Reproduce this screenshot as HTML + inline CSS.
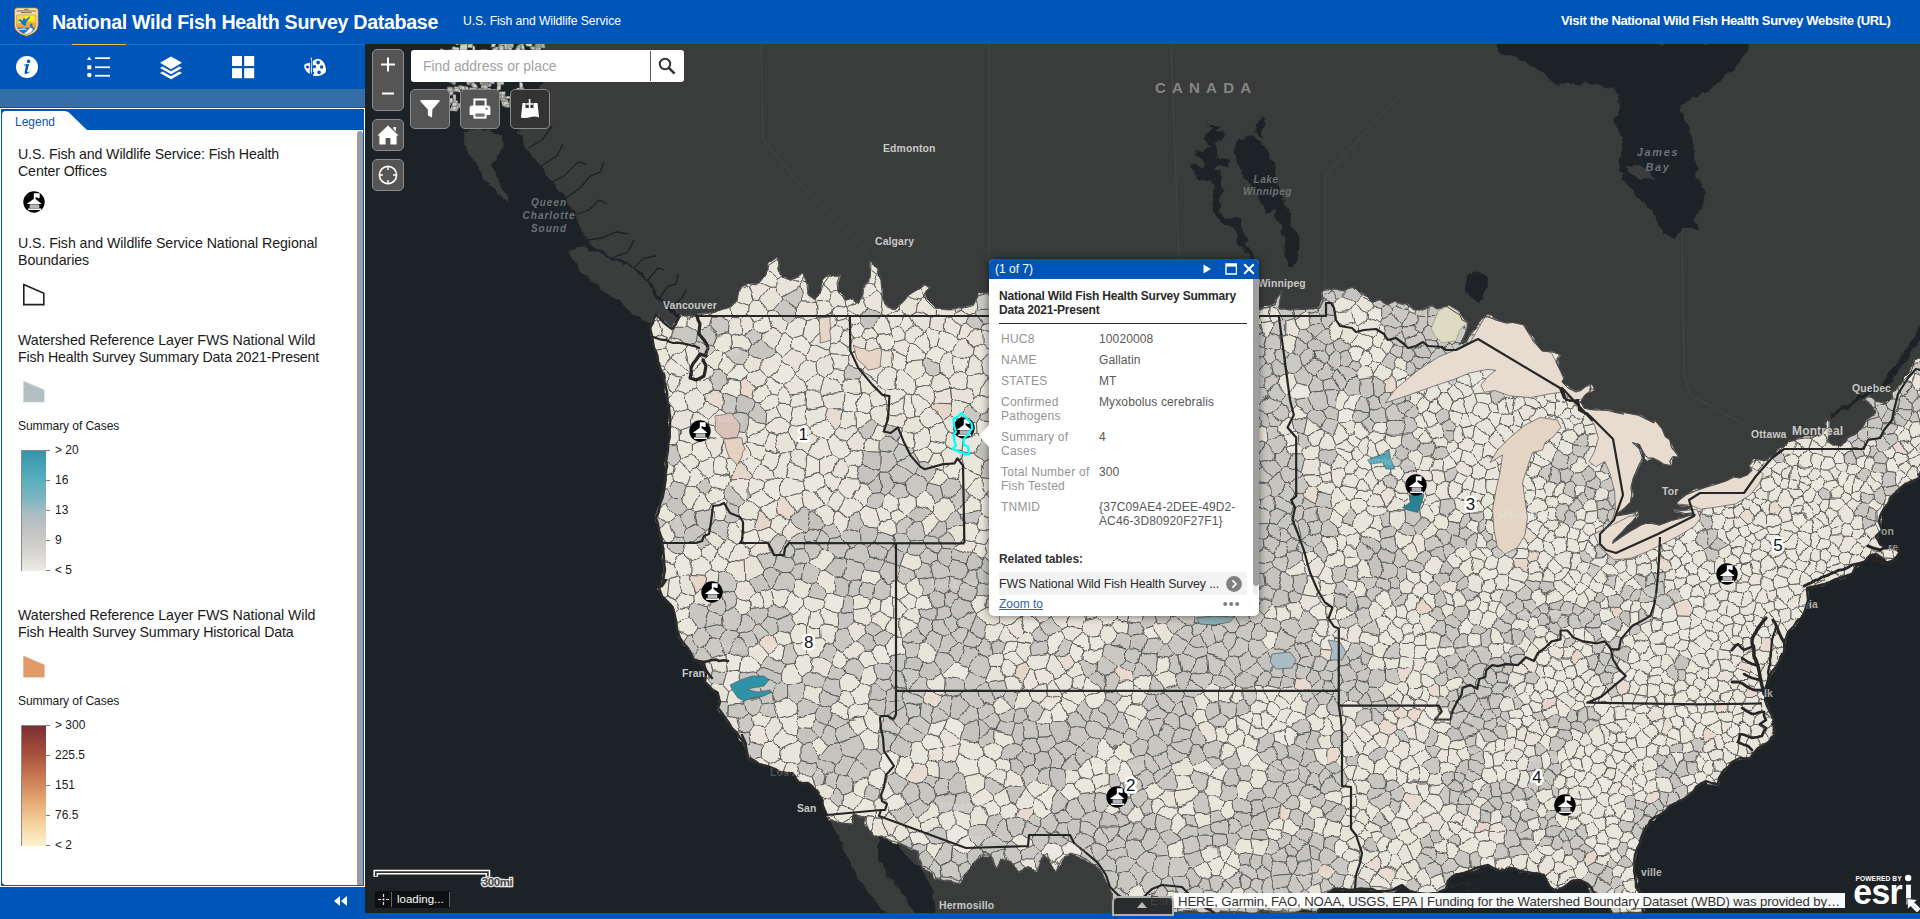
<!DOCTYPE html>
<html lang="en">
<head>
<meta charset="utf-8">
<title>National Wild Fish Health Survey Database</title>
<style>
*{box-sizing:border-box;margin:0;padding:0}
html,body{width:1920px;height:919px;overflow:hidden;background:#0055b8;font-family:"Liberation Sans",sans-serif;color:#1a1a1a}
.abs{position:absolute}
#header{position:absolute;left:0;top:0;width:1920px;height:44px;background:#0055b8;color:#fff}
#title{position:absolute;left:52px;top:9px;font-size:19.6px;font-weight:700;letter-spacing:-0.3px;white-space:nowrap;line-height:26px}
#subtitle{position:absolute;left:463px;top:13px;font-size:12.2px;white-space:nowrap;line-height:16px;letter-spacing:-0.09px}
#hlink{position:absolute;left:1561px;top:13px;font-size:13px;font-weight:700;white-space:nowrap;line-height:16px;letter-spacing:-0.35px}
#tabs{position:absolute;left:0;top:44px;width:365px;height:45px;background:#0055b8}
#tabind{position:absolute;left:72px;top:44px;width:54px;height:1px;background:#f0b840}
#band{position:absolute;left:0;top:89px;width:365px;height:18px;background:#336ea9}
#panel{position:absolute;left:0;top:108px;width:365px;height:779px;background:#fff}
#panelin{position:absolute;left:1px;top:1px;width:363px;height:777px;background:#0055b8}
#pcontent{position:absolute;left:1px;top:21px;width:361px;height:755px;background:#fff;border-radius:0 0 0 4px}
#pscroll{position:absolute;left:356px;top:22px;width:6px;height:754px;background:#9b9b9b;border-radius:3px 3px 0 0}
#ltab{position:absolute;left:1px;top:2px}
#ltabtxt{position:absolute;left:14px;top:6px;font-size:12px;color:#0a53b0;line-height:14px}
.lh{position:absolute;left:18px;font-size:14.2px;line-height:17px;color:#1a1a1a;white-space:nowrap;letter-spacing:-0.22px}
.ls{position:absolute;left:18px;font-size:12.1px;line-height:14px;color:#1a1a1a;white-space:nowrap;letter-spacing:-0.1px}
.rl{position:absolute;left:55px;font-size:12px;line-height:14px;color:#1a1a1a;white-space:nowrap}
.ramp{position:absolute;left:21px;width:25px;height:121px;border-left:1px solid #8a8a8a;border-top:1px solid #8a8a8a}
.tick{position:absolute;left:46px;width:4px;height:1px;background:#7a7a7a}
#footerL{position:absolute;left:0;top:887px;width:365px;height:32px;background:#0055b8}
#map{position:absolute;left:365px;top:44px;width:1555px;height:868.700px;overflow:hidden;background:#3a3c3c}
#footerR{position:absolute;left:365px;top:912.700px;width:1555px;height:6.300px;background:#0055b8}
.mbtn{position:absolute;background:#555;border:1px solid #8c8c8c;border-radius:5px}
.lbl{position:absolute;white-space:nowrap;font-weight:700;color:#c8c8c6;font-size:10.400px;line-height:12px;letter-spacing:.15px}
.wlbl{position:absolute;white-space:nowrap;font-style:italic;font-weight:700;color:#6b7275;font-size:10px;line-height:13px;letter-spacing:1px;text-align:center}
#popup{position:absolute;left:989px;top:259.200px;width:269.800px;height:356.400px;background:#fff;border-radius:5px;box-shadow:0 0 8px rgba(0,0,0,.55)}
#ptitle{position:absolute;left:0;top:0;width:269.800px;height:19.5px;background:#0055b8;border-radius:5px 5px 0 0;color:#fff;font-size:12px;line-height:19px}
.pk{position:absolute;left:12px;font-size:12px;line-height:14px;color:#939393;white-space:nowrap;letter-spacing:0.26px}
.pv{position:absolute;left:110px;font-size:12px;line-height:14px;color:#585858;white-space:nowrap;letter-spacing:0.12px}
.rlabel{position:absolute;font-size:15px;font-weight:400;color:#111;line-height:16px;text-shadow:0 0 2px #fff,0 0 2px #fff,0 0 3px #fff,1px 1px 1px #fff,-1px -1px 1px #fff,1px -1px 1px #fff,-1px 1px 1px #fff}
</style>
</head>
<body>
<!-- ================= HEADER ================= -->
<div id="header">
  <svg class="abs" style="left:14px;top:7px" width="25" height="30" viewBox="0 0 25 30">
    <defs><clipPath id="shc"><path d="M2.5,8 H21.8 V18 Q21.6,24.600 12.300,27.800 Q3,24.600 2.500,18Z"/></clipPath></defs>
    <path d="M3.3,0.7 H21.3 Q24.3,0.7 24.3,3.7 V18 Q24.3,26 12.3,29.4 Q0.3,26 0.3,18 V3.7 Q0.3,0.7 3.3,0.7Z" fill="#f3deb0" stroke="#7c5c2c" stroke-width=".9"/>
    <path d="M10.2,2.4h4.200M2.6,4h19.400M7,5.700h10.600" stroke="#5a4a30" stroke-width="1" opacity=".75"/>
    <g clip-path="url(#shc)">
      <rect x="2" y="8" width="21" height="21" fill="#fdd056"/>
      <circle cx="15.750" cy="10.200" r="4.300" fill="#fff200"/>
      <path d="M2,17.300 Q6,15.300 9,16.600 Q13,13.600 17,15 Q20,15.300 23,16.800 V21 H2Z" fill="#f9a726"/>
      <rect x="2" y="20.700" width="21" height="9" fill="#0b7cc5"/>
      <polygon points="10.09,26.34 12.27,25.03 14.45,22.86 15.75,21.12 17.49,20.68 18.80,21.99 18.36,23.73 16.62,25.47 14.45,26.78 11.40,27.21" fill="#fff"/>
      <polygon points="4.22,21.99 10.53,21.55 12.70,22.21 12.70,22.86 8.35,22.86 4.22,22.64" fill="#fff"/>
      <polygon points="4.00,13.28 5.74,12.19 7.05,12.85 8.79,13.72 9.22,11.54 10.31,10.89 11.18,12.41 13.14,11.54 14.88,10.02 15.75,9.37 15.97,10.45 14.45,12.41 13.14,14.15 11.83,16.33 12.27,18.51 10.53,18.72 8.79,17.63 7.05,15.89 6.39,14.15 4.87,13.94" fill="#0b7cc5"/>
      <polygon points="15.97,17.85 16.84,16.55 18.15,16.98 18.58,19.38 19.45,21.12 17.71,20.90 16.40,19.81" fill="#0b7cc5"/>
    </g>
    <path d="M2.5,8 H21.8 V18 Q21.6,24.600 12.300,27.800 Q3,24.600 2.500,18Z" fill="none" stroke="#a98a55" stroke-width=".5"/>
  </svg>
  <div id="title">National Wild Fish Health Survey Database</div>
  <div id="subtitle">U.S. Fish and Wildlife Service</div>
  <div id="hlink">Visit the National Wild Fish Health Survey Website (URL)</div>
</div>

<!-- ================= LEFT TABS ================= -->
<div id="tabs">
  <!-- info -->
  <svg class="abs" style="left:15px;top:11px" width="24" height="24" viewBox="0 0 24 24"><circle cx="12" cy="12" r="11" fill="#fff"/><path d="M13.6,4.6a1.7,1.7 0 1 1 -.01,0Z M9.3,9.6 L14,9 L12.2,16.6 Q12,17.6 13,17.2 L14.2,16.6 L14.4,17.3 Q12.2,19.3 10.4,19 Q9.2,18.7 9.6,17 L10.9,11.2 Q11,10.6 10.3,10.5 L9.2,10.4Z" fill="#0055b8"/></svg>
  <!-- legend list -->
  <svg class="abs" style="left:87px;top:12px" width="24" height="22" viewBox="0 0 24 22"><g fill="#fff"><path d="M2.2,0.6 L4.4,4 L0,4Z"/><rect x="0.3" y="9.3" width="4" height="4"/><circle cx="2.3" cy="19" r="2.2"/><rect x="8" y="1.300" width="15" height="1.700"/><rect x="8" y="10.400" width="15" height="1.700"/><rect x="8" y="18.900" width="15" height="1.700"/></g></svg>
  <!-- layers -->
  <svg class="abs" style="left:159px;top:12px" width="24" height="24" viewBox="0 0 24 24"><g fill="#fff"><path d="M12,0.5 L23,6.8 L12,13.2 L1,6.8Z"/><path d="M3.6,10.4 L12,15.3 L20.4,10.4 L23,11.9 L12,18.3 L1,11.9Z"/><path d="M3.6,15.4 L12,20.3 L20.4,15.4 L23,16.9 L12,23.3 L1,16.9Z"/></g></svg>
  <!-- basemap grid -->
  <svg class="abs" style="left:232px;top:12px" width="23" height="23" viewBox="0 0 23 23"><g fill="#fff"><rect x="0" y="0" width="10" height="10"/><rect x="12.200" y="0" width="10" height="10"/><rect x="0" y="12.200" width="10" height="10"/><rect x="12.200" y="12.200" width="10" height="10"/></g></svg>
  <!-- palette -->
  <svg class="abs" style="left:303px;top:12px" width="25" height="23" viewBox="0 0 25 23"><path d="M1,10.100 Q1.400,7.600 3.500,7.400 L6.200,7.100 Q8.600,6.300 9.900,5.100 Q12.200,3 14.900,2.800 Q18.400,3.200 20.850,6.450 Q22.700,9.600 23.100,13.800 Q23,16.300 21.800,16.900 Q19,19.200 14.900,19.900 L11.250,19.900 Q9.400,19.600 9.900,18.500 Q11.600,17.500 11.200,16.400 Q10.600,15.400 9.600,15.900 L7.600,17.400 Q6,17.600 5.300,17 Q3.800,16 3,14.700 Q1.200,12.400 1,10.100Z M15.100,4.550a1.900,1.900 0 1 0 .01,0Z M18.600,9.300a1.700,1.700 0 1 0 .01,0Z M16.050,14.500a1.800,1.800 0 1 0 .01,0Z M11.300,8.900a1.700,1.700 0 1 0 .01,0Z M4.500,9.400a1.600,1.600 0 1 0 .01,0Z" fill="#fff" fill-rule="evenodd"/><path d="M8.300,0.200 Q9.900,1.800 9.200,4.200 L9.100,5.100 L9.500,15.600 L8.500,21.700 L7.300,15.600 L7.500,5.100 L7.400,4.200 Q6.700,1.800 8.300,0.200Z" fill="#fff" stroke="#0055b8" stroke-width="1.100"/></svg>
</div>
<div class="abs" style="left:0;top:44px;width:365px;height:1px;background:rgba(255,255,255,.13)"></div>
<div id="tabind"></div>
<div id="band"></div>

<!-- ================= LEGEND PANEL ================= -->
<div id="panel">
 <div id="panelin">
  <svg id="ltab" width="92" height="20" viewBox="0 0 92 20"><path d="M0,20 L0,4 Q0,0 4,0 L62,0 Q66,0 68.5,3 L86,20Z" fill="#fff"/></svg>
  <div id="ltabtxt">Legend</div>
  <div id="pcontent"></div>
  <div id="pscroll"></div>
 </div>
</div>
<!-- legend content, page coordinates -->
<div class="lh" style="top:146px;letter-spacing:-0.127px">U.S. Fish and Wildlife Service: Fish Health<br>Center Offices</div>
<svg class="abs" style="left:23px;top:191px" width="22" height="22" viewBox="-11 -11 22 22"><use href="#fhc"/></svg>
<div class="lh" style="top:235px;letter-spacing:-0.07px">U.S. Fish and Wildlife Service National Regional<br>Boundaries</div>
<svg class="abs" style="left:21px;top:282px" width="27" height="25" viewBox="0 0 27 25"><path d="M2.800,2.600 L22.800,11.200 L22.800,22.600 L2.800,22.600Z" fill="#fff" stroke="#1f1f1f" stroke-width="1.600"/></svg>
<div class="lh" style="top:332px;letter-spacing:-0.06px">Watershed Reference Layer FWS National Wild<br><span style="letter-spacing:-0.145px">Fish Health Survey Summary Data 2021-Present</span></div>
<svg class="abs" style="left:21px;top:379px" width="27" height="25" viewBox="0 0 27 25"><path d="M2.700,2.200 L23.200,11 L23.200,23.100 L2.700,23.100Z" fill="#b3bfc4" stroke="#c3ccd0" stroke-width=".6"/></svg>
<div class="ls" style="top:419px">Summary of Cases</div>
<div class="ramp" style="top:450px;background:linear-gradient(#3494a8 0%,#55adbd 22%,#7db5c0 40%,#abbcc4 52%,#c4c4c4 68%,#d8d6d2 85%,#ecebe6 100%)"></div>
<div class="tick" style="top:450px"></div><div class="tick" style="top:480px"></div><div class="tick" style="top:510px"></div><div class="tick" style="top:540px"></div><div class="tick" style="top:570px"></div>
<div class="rl" style="top:443px">&gt; 20</div><div class="rl" style="top:473px">16</div><div class="rl" style="top:503px">13</div><div class="rl" style="top:533px">9</div><div class="rl" style="top:563px">&lt; 5</div>
<div class="lh" style="top:607px;letter-spacing:-0.06px">Watershed Reference Layer FWS National Wild<br><span style="letter-spacing:-0.12px">Fish Health Survey Summary Historical Data</span></div>
<svg class="abs" style="left:21px;top:654px" width="27" height="25" viewBox="0 0 27 25"><path d="M2.700,2.200 L23.200,11 L23.200,23.100 L2.700,23.100Z" fill="#e39a6b" stroke="#d8916a" stroke-width=".6"/></svg>
<div class="ls" style="top:694px">Summary of Cases</div>
<div class="ramp" style="top:725px;background:linear-gradient(#7e2f31 0%,#a44e3c 22%,#cd7f56 45%,#e5a673 62%,#f3cf9a 80%,#fdf3cd 100%)"></div>
<div class="tick" style="top:725px"></div><div class="tick" style="top:755px"></div><div class="tick" style="top:785px"></div><div class="tick" style="top:815px"></div><div class="tick" style="top:845px"></div>
<div class="rl" style="top:718px">&gt; 300</div><div class="rl" style="top:748px">225.5</div><div class="rl" style="top:778px">151</div><div class="rl" style="top:808px">76.5</div><div class="rl" style="top:838px">&lt; 2</div>

<div id="footerL">
  <svg class="abs" style="left:334px;top:9px" width="14" height="10" viewBox="0 0 14 10"><path d="M6,0 L6,10 L0,5Z M13,0 L13,10 L7,5Z" fill="#fff"/></svg>
</div>
<div id="footerR"></div>

<!-- ================= MAP ================= -->
<div id="map">
<svg style="position:absolute;left:0;top:0" width="1555" height="869" viewBox="365 44 1555 869">
<defs><g id="fhc"><circle r="10.700" fill="#000"/><g fill="#fff"><path d="M-0.200,-8.700 L5.700,-8.700 L5.700,-4.200 Q4.200,-3.700 2.800,-4.500 L1.500,-4.800 L1.500,-2.600 L-0.200,-2.600Z"/><path d="M-0.400,-2.900 L0.500,-3.700 L1.500,-2.900 L7.100,1.500 L7.100,2.100 L-6.800,2.100 L-6.800,1.500Z"/><path d="M-5.900,6.400 h13 v1.600 h-13Z"/></g><path d="M-4.300,2.400 h9.600 v3.600 h-9.600Z" fill="#c9c9c9"/><path d="M-3.300,2.400v3.600M-1.900,2.400v3.600M-0.500,2.400v3.600M0.900,2.400v3.600M2.300,2.400v3.600M3.700,2.400v3.600" stroke="#8a8a8a" stroke-width=".45"/></g></defs>
<rect x="365" y="44" width="1555" height="869" fill="#3a3c3c"/>
<filter id="wig2" filterUnits="userSpaceOnUse" x="340" y="20" width="1610" height="920"><feTurbulence type="fractalNoise" baseFrequency="0.09" numOctaves="3" seed="9" result="n"/><feDisplacementMap in="SourceGraphic" in2="n" scale="8" xChannelSelector="R" yChannelSelector="G"/></filter><g filter="url(#wig2)">
<path d="M360,40 541,43 540.9,48.4 541.8,53.8 543,57.8 542.1,65 543.3,68.8 545.6,74.6 545,80 543.3,84.9 540.3,89.2 537.8,95.9 535.1,100.6 532.9,104 530,110 527.9,115.7 524,119.9 522.6,126.4 519,132 522.4,138.9 525.2,145 527.5,150 531.4,155.7 535.7,161 540,165 544.2,169 545.8,174.3 550,180 554.9,184.8 557.5,190 561.6,193.3 565,197.5 568.4,201.4 571.3,206 575,210 576.5,216 577.9,221 578.8,225 582.7,231.8 585,236.2 587.9,240.4 590,246.2 595.9,249.9 601,251.4 605.5,253.1 610,256.2 615.8,258.3 619.5,259 625.8,263.1 630,263.8 633.2,267.4 638.1,268.7 642.5,272.5 645.3,278.1 650.1,281.4 652.5,287.5 656.1,290.6 659.7,295.4 662.5,300 668.4,304.9 672.5,307.5 676.3,312 679.5,313.2 683.8,317.5 690,322 695.2,324.9 700,330 720,335 730,420 730,520 730,600 770,700 820,760 850,800 840,818 828,817 838,835 844,851 854,871 870,895 882,907 888,913 888,915 360,915Z" fill="#1e2225" />
<path d="M878,837 878,855 886,875 902,891 910,905 914,913 914,915 936,915 936,913 934,903 932,887 923,867 919,865 912,860 900,845 885,838Z" fill="#1e2225" />
<path d="M1925,440 1925,916 1280,916 1300,860 1400,850 1500,840 1600,840 1620,800 1680,760 1700,720 1740,680 1750,620 1780,560 1830,540 1850,500 1880,460Z" fill="#1e2225" />
<path d="M1495.2,42.6 1497.5,47.5 1500.6,52.2 1505.9,54.6 1511.7,56 1516.9,59 1520.9,61.9 1526.1,63.3 1532,66 1536,68.5 1541.1,72.1 1545.3,75.2 1549.6,79.4 1555,83.4 1561.2,84 1567,83.8 1573.2,82.7 1579.4,83.6 1584.9,83.4 1590.1,83.5 1596.4,85 1601.6,86.5 1607,87.4 1612.1,87.5 1616,92.1 1620.3,95.7 1619.3,101.8 1619.1,105.9 1617.6,112 1615.6,117 1614.8,122.9 1618.3,128.2 1620.5,133.4 1623,139.2 1622.3,144.4 1621.4,150.2 1621.1,156.2 1620.3,160.9 1619.9,167.1 1618.9,171.8 1622.9,178 1625.7,182.7 1629.6,186.7 1633.6,192.5 1636.6,196.3 1641.8,200.9 1646,204.9 1650.2,209.9 1654.8,215.5 1658.4,220.8 1659.4,225.5 1661.1,231.7 1666.2,234.7 1669.5,236.7 1674.7,238.5 1678.6,231.8 1682.8,226.2 1689.3,228.7 1696.4,230.3 1699.2,226.2 1693.7,218.1 1698.4,211.9 1701.9,207.2 1703,201.5 1704,196.9 1704.6,192.2 1702.9,188 1700.1,183 1697.8,177.3 1696.6,170.2 1696.1,163.8 1695.1,158.2 1693.9,152.6 1693.9,146.8 1692.3,142.5 1692.4,136.5 1689.8,131.8 1688.5,125.4 1685.6,120.1 1683.7,115.2 1682.2,110.3 1680.1,105.2 1684.7,102.7 1689.9,99.8 1693.7,97 1698.4,95 1702.8,92 1708.8,89.9 1712.8,87.5 1717.4,83.1 1721.7,80.4 1726.4,76.6 1729.2,73.2 1733.8,68.7 1737.2,65.8 1740.2,61.2 1743,56.5 1745.4,52.2 1748.4,47.8 1750.8,42.6 1745.1,41.9 1741.1,43.4 1735.4,42.6 1730.9,42.4 1725.5,42.3 1720.5,42.8 1715.4,42.4 1711.2,41.9 1705.8,43 1700.4,42.2 1696.2,42.2 1690.2,42.5 1686,42 1680.4,42.4 1676.2,42.5 1671.2,42.1 1665.4,42.9 1661.2,42.6 1655.1,42 1650.6,42.1 1646.1,43.2 1640,42.3 1636,42.9 1631,42.4 1624.9,42.3 1621,42.3 1615.2,42.5 1610.3,42.5 1606.1,42.1 1599.7,43.3 1596,43.4 1590.3,43.4 1586.1,42.2 1580.8,43.2 1575.6,42.7 1570,42.4 1564.9,41.9 1560.5,42.3 1555.8,41.9 1551,43 1546,43.3 1540.9,42.8 1534.5,43 1529.7,42.3 1525.5,42.7 1520.1,43.3 1515.4,42.4 1509.8,43.2 1505.2,43.1 1500,42.2Z" fill="#1e2225" />
<path d="M1625.7,167.7 1639.3,165 1650.2,171.8 1654.3,181.3 1639.3,177.3 1627.1,171.8Z" fill="#3a3c3c" />
<path d="M1470,272 1474.6,271.1 1480,270 1483.3,273.2 1487,276 1487.7,280.3 1488,286 1485.7,290.5 1485,294 1483,301 1476,302 1470,298 1465,292 1464,286 1465.1,281.6 1467,278Z" fill="#1e2225" />
<path d="M1240,137.5 1244.6,137.6 1249.8,137.6 1255,137.5 1258.5,139.4 1261,143 1265,145 1267.2,149.6 1270,155 1272.4,159.1 1273.8,163.3 1275,167.5 1275.6,171.2 1276,176.3 1276.2,180 1277.5,185.3 1279,189.4 1280,195 1282.9,199.3 1284.7,202.7 1287.5,207.5 1289.9,211.8 1291.2,216.2 1290.9,221.2 1290,225 1293.4,229.3 1296.2,232.5 1298,236.7 1300,240 1299.1,245.6 1298.9,249.4 1297.5,255 1295.3,258.8 1294.8,263.2 1292.5,267.5 1287.5,266.2 1286.8,261.4 1285.8,256.9 1285,252.5 1284.4,247.6 1284.3,243.1 1283.8,237.5 1282.1,234.4 1280,230 1279.2,225.7 1277.5,220 1276.5,214.5 1275,210 1270.5,211.9 1265,212.5 1263.1,207.6 1260,202.5 1257.5,195 1255.3,191.3 1253,188.4 1250,185 1245.9,180.6 1242.5,177.5 1240,170 1235,165 1233.8,157.5 1235.1,154 1234.8,149.6 1236.2,145 1238,140.8Z" fill="#1e2225" />
<path d="M1257.5,120 1262.5,117.5 1265,122.5 1261.2,132.5 1265,137.5 1257.5,135 1255,130Z" fill="#1e2225" />
<path d="M1207.5,123.8 1211.4,124.6 1215.7,125.5 1220,126.2 1217.7,128.9 1215,132.5 1219.4,132.3 1225,131.2 1222.5,137.5 1218.9,139.7 1216.4,142.5 1212.5,145 1215.4,148.7 1217.5,152.5 1217.5,160 1223.3,159 1228.8,158.8 1228.9,163.6 1228.8,167.5 1224.4,166.5 1220,165 1215,167.5 1218.3,170.7 1221.2,175 1222,180.1 1221.8,184.4 1222.5,190 1221.1,195 1218.8,200 1219.4,204.6 1219.8,208.8 1220,212.5 1225,217.5 1230,216.2 1234.9,218.5 1240,220 1241.2,224.7 1243,227.9 1243.8,232.5 1245.2,235.9 1247.5,240 1243.8,245 1247.4,248.7 1250,252.5 1253.9,256 1257.5,260 1255,260 1251.7,257.4 1248.2,255.1 1245,252.5 1242,248 1238.8,242.5 1238.1,238.8 1237.5,234.8 1236.2,230 1232.1,227.1 1227.5,225 1220,222.5 1218.3,218.9 1216.3,214.2 1213.8,210 1213.6,204.7 1213.3,200.1 1212.5,195 1213.5,189.5 1215,185 1211.7,181.8 1207.5,177.5 1200,180 1196.4,177.9 1193.8,175 1191.8,170.8 1190,167.5 1195,165 1202.5,167.5 1206.2,163.8 1202.7,161.6 1200,158.2 1196.2,156.2 1195,151.2 1202.5,148.8 1210,146.2 1208.3,141.3 1206.2,137.5 1204.5,133.8 1211.2,130Z" fill="#1e2225" />
<path d="M1920.4,324 1914,336 1904,350 1896,364 1888,374 1880,384 1868,392 1856,399 1840,408 1828,415 1829,417 1842,410 1858,402 1872,394 1886,386 1896,374 1906,360 1916,346 1920.4,340Z" fill="#1e2225" />
<path d="M570,252 573.9,250.2 578.5,248.5 583,246.5 587.5,247.5 590.9,250.4 596,251.5 599.6,253.1 604.8,255.5 608.5,257.5 612,259.5 616,260.5 619.8,263.3 623.4,264.7 627.5,265.2 631,267.5 635.1,270.6 638,272.7 642,276.5 645.6,280.6 648.4,285.4 651,289 654.3,293.7 656.8,297.5 660,301 662.9,304.7 666.6,306.4 669,310 671.8,312.5 676.4,315.9 679,319 682.2,322.2 685,326 679,328 674.3,327.5 669.4,327.5 665,327 660.1,326.3 655.3,325 650,323 645.6,321.3 640,318 636.3,316 632,315 629.6,312.5 626.6,308.6 623.3,304.8 620,302 616.8,299.6 612.2,296.3 609.3,295.3 605,292 600.6,289.5 597.4,285.4 593.4,283.4 590,280 587.3,275.9 583.5,272.6 580,270 578.3,266.1 576.6,263.6 574,260 571.7,254.9Z" fill="#3a3c3c" />
<path d="M463,132 467.1,131.1 472.1,130.2 477,129 481.3,128.9 484,131.2 488.5,130.7 493,132 499,134.9 503,138 504.7,143 505,148 501.3,151.3 497,156 495.3,161.7 493,166 494,171.5 495,176 498,179.1 500.8,184.2 503,188 504.1,191.1 506.7,195.9 507.9,200.8 509,204 505,202 502.4,199.3 498.8,195.6 495.9,192.4 493,188 490.4,183.2 485.6,179.4 483,176 481.9,171.9 479.3,167.6 477,164 474.3,159.8 471.4,156.2 469,152 466.2,147.8 463,142 463.4,137.9Z" fill="#3a3c3c" />
</g>
<path d="M1171,44 L1181,316 M1400,95 L1325,176 L1325,300 M989,44 L989,262 M761,44 L763,139 L801,186 L868,253 M1682,232 L1684,372 L1690,395 L1742,423" fill="none" stroke="#464848" stroke-width="1"/>
<path d="M528,148 l14,-8 l10,-14 M541,166 l16,-10 l6,-12 M552,182 l12,-6 l14,-14 l8,2 M566,198 l14,-10 l10,-12 l10,-4 l4,-10 M577,214 l12,-4 l10,-10 l8,4 M588,240 l14,-2 l14,-6 l12,2 M612,258 l16,-6 l6,-12 M634,268 l10,-10 l12,-2 M646,282 l12,-14 l6,2 M658,300 l10,-14 l8,-2 l2,-10 M670,308 l12,-10 l4,-8" fill="none" stroke="#1e2225" stroke-width="1.3"/>
<filter id="wig" filterUnits="userSpaceOnUse" x="340" y="20" width="1610" height="920"><feTurbulence type="fractalNoise" baseFrequency="0.06" numOctaves="2" seed="4" result="n"/><feDisplacementMap in="SourceGraphic" in2="n" scale="9" xChannelSelector="R" yChannelSelector="G"/></filter>
<g filter="url(#wig)"><g stroke="#505050" stroke-width=".78" stroke-linejoin="round">
<path fill="#c8c6c0" d="M1011.6,706.4 998,715.1 1000.3,720.2 1013.4,722.8 1015,708.6 1012.9,706.6ZM1432.4,727.1 1430.1,728 1423.4,739.7 1425.9,744.5 1435,744.6 1439.2,734.2ZM1332.1,507.1 1332.3,507.6 1329.2,521 1322.5,524.3 1317,520.4 1317.2,507.4 1332,507.1ZM1157.8,736.2 1169.1,745.8 1166.4,751.2 1154.6,755.7 1147.4,754.1 1146.6,740.9 1154.2,736ZM666,541 674.1,534.7 683.5,536.7 686.5,542.8 682.4,553.5 680.7,554.1 666.5,547.3ZM831.7,708.9 817.7,705.5 817.5,705.1 822.9,689.8 837.3,695.8 837.3,701.6ZM1286.9,909.4 1289.2,912.3 1294.2,912.2 1300.4,912.4 1301.6,912.5 1303.1,904 1295.9,900.9ZM990.6,854.6 1003.9,848.5 1006.5,843 991,833.2 979.6,846.7 982.8,851.1ZM996,731.5 991.4,730.8 979.3,738.2 978.1,740.8 982.8,748.1 995.6,742.7ZM854.9,610.2 852.9,613.6 839.7,610.6 842.4,596.2 848,594.9 853.3,597.7ZM919.9,798.5 915.1,783.6 921.7,782.2 933.6,789.1 935.8,797.1 933.3,801.1 928.8,801.8ZM1239,656.8 1248.5,650.6 1258,658.8 1258,662.7 1244.3,671 1243.7,671ZM1321.4,892.8 1318.4,896.7 1319.4,904.9 1320.8,905.6 1320.9,905.6 1325.5,899.9 1328,893 1328.6,892.6ZM726.5,629.1 722.2,623.5 703.8,627.6 710.9,638.8 719.3,640.2ZM1483.7,721.7 1482.4,728.5 1479,731.6 1465.5,722.8 1468.3,713 1481,716.7ZM1161.6,606.6 1154.9,592.8 1149.1,594.2 1145,608.3 1146.2,610 1154.3,613.2ZM1188.2,738.8 1191,730 1196.4,725.4 1197.9,725.7 1207.3,742.9 1204.2,747.9 1192.2,745.5ZM1466,774.9 1454.3,771 1454.1,771.3 1454.5,780 1461.3,783.9 1466.2,777.3ZM1670.5,749.2 1680.1,741.4 1681,741.2 1681.4,741.5 1683,754.2 1670.9,755.1ZM1372.8,378.5 1360.5,380.5 1358.9,393.7 1361,395.9 1366,397.4 1374,394ZM1051.5,767.8 1062,767.5 1065.1,759 1055.9,745.5 1048,751.4 1050.4,767.3ZM781.6,680.2 788.5,685.8 788.8,696.8 775.5,702.2 771.2,691.6 775.4,683.7ZM1704.3,742.1 1703.9,749.6 1699,753.3 1694.6,751.5 1689.7,740.5 1693.5,736.9 1702.1,738.6ZM756.9,624.7 747.3,614 750.6,609.5 764.1,607.6 766.9,609.4 767.9,616.1 761.4,623.8ZM1493.9,732.1 1495.8,738.4 1504.1,739.8 1506.1,738.1 1505.9,727.3 1496.7,728.5ZM1455.2,647.3 1454.4,646.4 1453.6,640.1 1459.7,632.1 1468.3,634.8 1469.4,645.5ZM1242.2,474.9 1245,491.6 1235.5,495.1 1228.9,492.8 1225.2,487.3 1225.3,486.4 1239.9,475.1ZM1333.2,697.1 1332.8,697.2 1326.3,705.6 1330,715.5 1343.8,714.5 1344.2,705.1ZM1463.5,661 1472.4,651.1 1472.9,648.9 1469.4,645.5 1455.2,647.3 1455.1,653.1 1460.6,660.6ZM822,687.2 822.9,689.8 837.3,695.8 841.6,691.2 840.1,681.1 825.8,678.2 825.1,678.6ZM1127.8,461.5 1135.7,473 1143.8,474.8 1148.9,460.1 1147.1,458.3 1134.4,455.1ZM1459.4,621.3 1457.4,626.8 1446,626.7 1442.4,622.2 1444.7,616.9 1452.9,614ZM1026,738.7 1023.9,724.7 1014.3,723.9 1010.6,735 1013.6,742.3 1019.9,744.4ZM686.5,542.8 683.5,536.7 686.6,530 698,524.6 706.6,530.6 706.2,532.1 693.6,542.8ZM1865.7,398.6 1870.2,396 1869,395 1865,398.2ZM1465.5,722.8 1468.3,713 1468.1,712.6 1463.2,709.8 1450.7,714.2 1450,722.1 1451.8,724.5 1460.8,726.3ZM1488.1,664.6 1479.6,663.4 1472.4,651.1 1472.9,648.9 1481.3,646.6 1488.2,648.6 1490.8,658.2ZM1471.4,756.8 1482.7,750.8 1482.6,750.4 1475.6,743.9 1467.7,747.7ZM1024.5,559.3 1026,559.3 1027.1,558.7 1031,545.1 1026.7,538.7 1015.2,536.9 1014.6,537.4 1012.4,549.6ZM1367,796.9 1370.2,785.7 1383.9,787.9 1385.2,791.9 1371,801.6 1370.4,801.5ZM739.8,637.7 727.9,652.2 723.9,652.7 719.3,640.2 726.5,629.1 735.6,629.9 739.3,633.9ZM1108.4,839.7 1118.4,834.8 1127.2,841.5 1125.1,847.6 1109.2,849.6 1106.4,844.5ZM1103.3,320.1 1105,309.3 1097.3,302.9 1091.8,303.5 1089.1,308 1094.5,320.1ZM749.8,347.5 749.1,349.4 750.1,352.7 760.9,360.7 774,352.5 773.5,349.2 761.6,340.2ZM1638.7,823.4 1637.3,823.4 1631.9,833.2 1633.1,836.1 1640.6,841 1643,833 1645.7,828.3ZM922.7,538.9 926.6,549.7 919.4,556.3 908.9,552.3 911.5,540.9ZM1307.6,414.5 1313.5,408.4 1308.8,397.2 1296,399.5 1295.6,407.4ZM1370.5,672.1 1368.6,682.6 1370.7,687 1379.8,687.5 1385.6,681.6 1385.4,670.6ZM1900.4,408.6 1899.5,399 1901.2,397.1 1902.7,396.8 1913.3,402.5 1913.1,409ZM904.9,804.7 907.2,805.7 912.2,815.9 903.5,824.6 900,824.2 891.3,814.5ZM947.9,528.2 963.9,526.3 964.5,525.4 962.1,513.6 957.7,509.9 956.5,509.7 943.8,521.2ZM1313,375.8 1308.2,386.3 1296.7,382.8 1293.4,373.9 1303.1,365.6 1304.8,366.1ZM1399.2,302.1 1395,301 1387.9,304.5 1393.6,309.3 1398.7,306.5ZM938.3,650.8 947.4,652.3 957.8,643.3 950.7,634 942.4,637.9 938.2,650.8ZM1439.7,332.6 1435.5,338.9 1423.5,339.1 1420.8,334 1428.9,326.9 1438.9,330.4ZM898.4,734.5 891.3,751.7 881.2,752.5 876.8,748.3 879.1,731.5 879.5,731.2ZM1154.8,814.3 1143,814.1 1138.5,823.5 1145.8,830.1 1155.2,829.4 1157.7,816.3ZM1385.3,392.2 1383.7,380 1373.1,378.3 1372.8,378.5 1374,394 1378.5,395.3ZM1629.5,417.6 1628.7,421.8 1630,424.3 1638.4,426.2 1643.1,420.3 1642.9,419.1 1636.8,414.9 1635.3,414.6ZM1256.4,373.7 1263.8,377.6 1272.5,374.5 1270.4,365.1 1264.7,363.2ZM1619.6,413.3 1616.4,412.7 1616.6,413.9ZM1623.5,412.4 1623.4,412.4 1620.3,411.8 1621.8,412.8ZM956,479.6 961.6,487.7 949.3,498.8 945.1,497.7 942.3,485.8 948.6,478.1ZM1626.9,458.8 1626.8,469.5 1635,468.6 1639.2,461.3 1629.6,457.6ZM1078.3,705.4 1084.8,699.3 1095.2,708.9 1088.4,720.5 1087.1,721.1 1076.9,712.5ZM847.4,775.7 840.7,776 836.4,772.3 835,763.5 843.2,754.3 856,760 856.2,760.7ZM1478.9,591.3 1469.8,586.1 1461.7,592.6 1466.6,601.1 1477.7,595ZM1207,379.9 1194.7,374.5 1186.1,380.3 1193.6,392.2 1195.5,392.5 1204.9,387.6 1208,382.2ZM1684.4,755.5 1694.6,751.5 1699,753.3 1699.1,754.7 1695.1,762 1687.5,763 1684.8,760.9ZM1311.7,831.9 1312.5,833 1307.1,845.2 1293.3,835.1 1298.9,827.4ZM758,684.8 760.5,677.5 758.6,670.8 741,674.6 741.2,685.3 745,688.9ZM1147.4,754.1 1145.1,756.3 1133.4,757.3 1130.2,745.3 1141.1,738.5 1146.6,740.9ZM918.8,863.7 919,865 920.5,865.4ZM939.1,775.6 939.6,776.2 933.6,789.1 921.7,782.2 928,774.2ZM1279.8,348.4 1290.8,352 1284.2,364 1275.3,361.3 1275.2,350.9ZM1105.2,701.7 1115.9,705.9 1122.1,696.1 1116.2,688.9 1104.1,691.9ZM1881.8,421.7 1880.6,427.6 1868.5,429.8 1867.5,428.9 1867.7,419.9 1876.9,416.6 1880.9,419.6ZM1160.9,313.5 1151.9,317.7 1149.3,326.4 1159,332.9 1164.8,331.1 1166.9,323 1161.7,313.9ZM1251.1,375.1 1248.6,384.3 1244.1,385.7 1234.6,379.8 1235.1,371.1 1235.3,370.8 1239.2,369.8ZM1001.8,483.3 1002.6,483.5 1008.3,489.5 1005.4,499.6 996.8,502.7 986.9,495.5 987,495.2ZM1603.9,672.3 1599.2,674.6 1603,687.4 1604,687.9 1611.4,682.9 1610.9,675.9ZM840.9,535.3 841.6,532.7 831.8,522.6 824.1,526 821.9,530.7 822,531.1 831.8,539.9ZM1390.1,393.6 1393.8,404.8 1385.2,411.2 1381.5,409.1 1378.5,395.3 1385.3,392.2ZM1228.4,612.7 1232.3,614.1 1245.4,607 1245.3,603.2 1231.3,595.1 1227.8,611.9ZM1206.7,656.4 1207.9,672.4 1192.6,676 1190.9,674 1195.4,659.7ZM702.8,627.1 708.8,609.5 707,606.7 695.6,602.3 690.7,608 689.9,618 697.4,627.6ZM1158.3,696.4 1163.8,693.3 1165.1,689.2 1155.4,674.9 1154.5,674.7 1153.4,674.9 1147.4,692.4 1147.5,692.7ZM1508.4,724.5 1508,724.6 1500.2,716.6 1503.3,710.5 1510.1,711.3 1512.3,719.4ZM1522.9,636.7 1522.4,632.1 1528.6,627.4 1534.1,629.5 1536.5,636.6 1533.4,643.2 1530.4,643.7ZM965.8,861.1 957.2,865.4 958.7,879.7 960,880.9 964,875 969.2,869.5 972,866.9ZM1148.1,798.6 1139.9,806.5 1134.3,804.9 1129.3,797.6 1129.7,796.3 1142.1,788 1143.3,788.4ZM1092.2,837.4 1081,832.4 1072.8,840 1081.1,850.8 1090.7,847.9 1093.6,844.1ZM1403.3,434.1 1403.4,434 1410.2,433.8 1417.7,438.3 1419.6,443.3 1417.1,449.5 1411.7,451.7 1401.6,443.1ZM1262.4,854.8 1253.4,853 1252.5,853.9 1251.2,865.7 1255.2,869 1261.7,864.8ZM1612.9,876.7 1622.7,878.4 1625,881.6 1624.4,886.2 1612.6,890.1 1609.4,888.1 1607.7,882.4ZM1116.3,871.4 1100.2,870.3 1097.7,865.6 1098.5,861.7 1108.8,853.4 1116.5,862.3ZM695.3,341.3 713.2,345.2 717.2,334.2 708.5,326 696.6,332ZM1321.9,790.6 1311.6,799.6 1312.9,805.6 1322,808.4 1326.5,798.6 1324.2,792.3ZM1089.2,554.8 1088.7,555.2 1075.8,553.1 1073.5,541.1 1074.5,538.9 1093,540 1094.3,542.3ZM1619.1,824.3 1622.5,832 1631.9,833.2 1637.3,823.4 1634.7,820.9 1620.5,820.1ZM1444.8,885.2 1437.8,890.3 1437.6,892.9 1437.7,893 1438,893 1446,889 1446.9,885.6ZM898.7,734.3 912.1,745.1 908.8,754.4 897.6,756.1 891.3,751.7 898.4,734.5ZM1587,485.3 1598.4,488.8 1600.8,487.1 1601.5,482.9 1594.3,476.3 1587.2,481.5ZM1616.3,526.5 1619.9,526.5 1621.3,525 1619.5,515.4 1616.5,515.9 1618.1,512.9 1618.9,512.2 1618.5,509.8 1614.8,508.3 1610.1,512.1 1608.7,520ZM1271.9,308.2 1277.6,309.4 1279.4,308.1 1279,308 1280,300 1281.1,294.5 1280.1,293.1 1277,298 1275,305 1271.4,306ZM666.2,522.1 656.9,515.1 656,518 657.1,523.8 659,530 659.1,530.5ZM1173.9,742.4 1188.2,738.8 1191,730 1178.9,726.6 1174.1,729.5ZM1481.3,322.7 1487.2,318.3 1487.6,316.7 1486,316 1480,320 1478.8,322.4ZM1449.8,701.8 1458.7,700.1 1463.2,709.8 1450.7,714.2 1447.5,709.9ZM1116.3,871.4 1117.9,873.1 1127.6,871.5 1135.5,862 1135.5,860.3 1126.7,853.7 1116.5,862.3ZM1461.6,679.5 1469.7,671.5 1477.9,677.9 1475.9,687.3 1474.1,688.7 1462,681.7ZM1340.4,730.1 1334.5,731.5 1331.4,735.4 1333.5,746.2 1338.8,748.1 1347.8,739.4 1348.1,737.3ZM1619.3,841.8 1617.3,848.6 1621.6,854 1626,853.8 1630.2,849.2 1627.8,843.7ZM1077.8,746.3 1088.1,735.8 1100.3,740.3 1095,755.7 1092.5,756.7 1077.8,746.4ZM1354.5,679.7 1355.1,679 1355.4,671.6 1349.1,664.5 1339.5,668.5 1338.8,669.6 1343.9,680.5ZM1547.5,808.8 1542.4,815.1 1548,819.7 1554.9,817.9 1557,811.9 1555.9,810.6ZM1282.5,436.3 1285.8,447.9 1275.7,454 1265.7,442.8 1268,439.8 1282.2,436.1ZM1407.1,880.2 1404.7,888.3 1410,891 1415.9,891.7 1418.7,892.5 1420.3,886.6 1414,877.4 1412.3,877.4ZM1867.5,428.9 1867.7,419.9 1866.9,419.3 1866,420 1862,428 1861,429ZM952.6,613.7 959.6,617.5 959.8,626.5 950.8,633.3 944.3,621.5ZM1287.1,886.9 1275.5,887.4 1271.9,894.1 1279.9,902 1289.5,892.1ZM1078.5,770.4 1080.8,765.7 1073.3,755.8 1065.1,759 1062,767.5 1064.8,770.7ZM1658.4,753 1653.6,759.6 1657,766 1661.7,765.5 1667.7,756.7ZM1104,292.4 1112.3,298.2 1117.8,294.7 1112.9,292.5 1107.3,291.8 1104.7,291.2ZM1706.7,529 1709.4,527.6 1711.8,515.8 1701.1,512.7 1697.8,519.3 1705.6,528.9ZM1397.2,567.4 1405.2,567.2 1407.2,570.5 1406.6,579.4 1400.5,582.5 1393.3,575.2ZM1187.8,644 1207.1,648.8 1207.5,655.1 1206.7,656.4 1195.4,659.7 1183.6,653ZM1369.4,888.3 1370,886.3 1369.7,884.2 1359.7,876.1 1355.4,876.9 1351.3,890 1357.9,890.3 1366,889 1368.2,889.3ZM1239.8,510.7 1233.6,516 1233.2,515.9 1222.5,507.1 1228.9,492.8 1235.5,495.1ZM1180.1,895.8 1178,907.5 1178.4,908 1194.1,911.8 1200,906 1199.8,905.3 1185.6,893.9ZM1456.6,362.4 1455.2,355.2 1444.2,353.6 1443.6,360.8 1453.4,366.9ZM1414.8,326.7 1417.7,315.9 1427.8,316.7 1428.9,326.9 1420.8,334 1418.8,333.1ZM1399.7,465.7 1403.4,472.2 1416.6,469.8 1416.9,469.2 1408.8,458.7 1401.7,460.3ZM1524.4,680.4 1524.1,676.3 1526.5,672.6 1533.8,671 1539.5,679.4 1535.2,684.4 1526.6,683.1ZM900.3,795.5 909.8,781.3 915.1,783.6 919.9,798.5 907.2,805.7 904.9,804.7ZM1146.5,640.9 1143.1,651.6 1143.8,653.1 1156.2,655.1 1162.6,642.1 1158.5,639.6ZM726.7,503.2 742,505 740.8,516.9 735.3,522.3 730.4,522.8 725,519.5ZM1866.3,516.6 1875.1,520.2 1876.2,519.5 1876,510 1868.3,507ZM1302.1,454.7 1305.8,461.3 1302,470.8 1288.2,465.5 1291.3,454.7ZM1657.8,791.1 1658.4,790.4 1668.6,791.9 1667.7,805.8 1666.1,806.6 1657.7,799ZM1460,697.2 1473.2,695.1 1476.1,700.2 1468.1,712.6 1463.2,709.8 1458.7,700.1ZM1229.2,911.3 1228.4,912.3 1232.3,911.7ZM1635.8,436 1627.8,434.9 1624.1,442.7 1632.8,447.9 1636.8,446.7 1632.5,442.8 1638.2,444.1ZM1023.5,516.4 1014,526.1 1015.2,536.9 1026.7,538.7 1032.2,526.4 1030,520.1 1025,516.5ZM1597.4,878.7 1605,867 1604.6,866.2 1596,862.3 1589,866.6 1589.7,872.4ZM1273.7,743 1271.2,747.5 1259.3,752.6 1258.2,751.1 1259.1,738.4 1268.9,732 1272.7,734.9ZM1336,369.6 1331.5,377.9 1325.4,380.7 1317,375.5 1324.3,363.3 1326.4,362.7ZM1442.4,500 1441.3,513.9 1447.7,517.5 1455.2,509 1452.6,499.3 1450.8,498.5ZM1054.8,443.5 1056.5,443.1 1069.6,448.8 1068.6,455.7 1054.5,456.5ZM980.5,513.5 974.9,525 964.5,525.4 962.1,513.6 978.9,511ZM1470,669 1479.6,663.4 1472.4,651.1 1463.5,661ZM968.4,668 958.9,662.2 964.1,646.1 975.1,648.8 977.7,655.4ZM1686.6,795.5 1680.7,800.4 1680.7,800.6 1688.1,796.1ZM883.1,716.6 868.6,708 867.9,705.1 869.5,702.1 886.7,698.7 888.2,700.4 885.3,715.5ZM1088.1,513.2 1074.6,509.4 1074,502.4 1081.5,496.4 1090.7,499.9 1091.2,511.1ZM1143.3,788.4 1142.1,788 1135.2,777 1135.4,776 1146.3,770.2 1152.3,773.1 1155.8,781ZM1260.3,599 1254.9,593.4 1250.7,595 1245.3,603.2 1245.4,607 1248.6,609.9 1258.6,609ZM1067.7,716.3 1076.9,712.5 1087.1,721.1 1085,727.1 1069.6,729.6 1065.7,720.8ZM1572.5,452.7 1574.1,443.9 1586.9,444.9 1587.9,446.4 1583.3,458 1579.7,457.9ZM1254.1,556.9 1255.6,560.5 1270.8,562.3 1273.2,555.1 1271.9,551.6 1264,547.6 1255.5,551.9ZM1057.4,300.6 1055.5,316 1066.5,316.7 1073.9,306.8 1072.9,303.3 1070,305 1065.7,302.6 1063.2,301ZM802,531.6 790.1,518.5 794.4,512.6 804.9,508.5 811.6,511.2 807.7,528.1 802.8,531.8ZM1442.3,461.5 1449,456.8 1449.1,454.3 1443.9,449 1435.1,448.2 1431.9,454.9 1434.7,460.2ZM1010.3,417.4 998.1,420 996.2,422.8 998.4,431.6 1008.5,435.3 1015.5,431.2 1015.5,431.1ZM996.3,477.3 999.7,463 994.3,457.7 984.3,461.3 979.5,474.9 980.6,475.8ZM1463.5,513.4 1459.2,522.2 1461.6,527.4 1467.9,527 1472.1,520 1469.1,512ZM1339.8,408.5 1335.9,405.8 1327.1,405.3 1321.1,409.7 1324.6,419.8 1338.5,422.1ZM1913.3,402.5 1902.7,396.8 1912.4,386.3 1917.6,389.8 1917.3,398ZM1601.9,610.9 1600.9,604.1 1593.9,600.4 1589.3,603.2 1586.5,608.8 1592.6,614.1 1599.3,614.8ZM1552.5,796.9 1549.4,791.1 1551,785.7 1553.9,784.2 1560.2,787.5 1559,797.5 1556.7,798.4ZM1003.9,848.5 990.6,854.6 993.4,863.8 996,869 1002,859 1008.4,861.6ZM770.7,719.9 778.5,718.6 778.8,718.1 775.1,703.1 762.3,705.1 760.1,711.5ZM1819,491.8 1825,499.3 1831.3,499.5 1832.1,498.9 1830.8,490.9 1823.6,487.3ZM1239.6,459.3 1246.9,450.3 1254.6,458 1244.8,467.9ZM1567.7,467.2 1558.8,469.4 1560,481.9 1565,483.5 1571.5,481 1574.4,474 1571.1,468.9ZM1397.6,530.5 1391.2,525.2 1383.4,526.3 1380.4,530.8 1381.9,539.6 1395.4,536.9 1397.8,531.7ZM844.7,793 835.9,788.8 833.2,789.8 829.4,799.3 838.6,807.2 844.1,806.1ZM1506.3,779.8 1499.5,782.6 1501.7,793 1511.7,791.7 1514.8,785.3ZM823.6,600.2 807.8,596.3 812.2,583.5 817.2,581.9 827.3,593.7ZM1081.5,819.2 1082,820.3 1081,832.4 1072.8,840 1069.4,839.4 1069.4,839.3 1067.5,825 1073.2,818.9ZM1271.2,876 1262.3,879.1 1255.6,876.4 1255.2,869 1261.7,864.8 1270.9,870.8ZM1700.8,511.9 1691.2,508.2 1688.1,509.6 1687.3,513.4 1692.7,512.9 1695.7,515.2 1689.1,515.6 1687.7,516 1691.9,521.3 1697.8,519.3 1701.1,512.7ZM1512.1,442.2 1508,442.9 1502.7,448.1 1508.1,460.1 1509,460.3 1517.3,453.1ZM1503.1,816.7 1498.2,810.7 1503.4,802.9 1511.7,804.2 1512.2,806.5 1507.6,815.7ZM1294.3,645.4 1299.1,659.6 1297.3,664 1284,662.7 1284.5,650.6ZM1306.4,715.3 1312.9,713.9 1319.6,704.7 1314.5,696.3 1305.4,703 1304.3,712.7ZM1713.4,562.4 1719.5,557.2 1718.4,551 1709,545.7 1704,548.4 1703.2,549.9 1706.7,558.6ZM1645,810.5 1634.8,808.3 1633.9,809.3 1634.7,820.9 1637.3,823.4 1638.7,823.4 1646,815.5ZM1288.3,747.4 1273.7,743 1271.2,747.5 1277.5,757.7 1282.2,758.2 1287.1,754.9ZM1194.5,499.7 1194.2,510.5 1178.9,515.3 1178.8,515.2 1177.2,501.6ZM1655.8,581 1664,580.3 1664.6,593.5 1660.4,594 1654.1,584.4ZM1456.6,362.4 1470.2,362.2 1470.6,361.1 1468.5,348.9 1468.3,348.9 1455.9,353.7 1455.2,355.2ZM1867.2,457.4 1870.7,447.6 1876.3,445.8 1880.3,451.8 1874.1,459.3 1867.3,457.5ZM1181.4,699.8 1183.9,696.5 1183.1,691.6 1174.8,685 1165.1,689.2 1163.8,693.3 1173.5,702.9ZM1461.7,319.7 1453,317.2 1450.3,319.4 1453.7,329.7 1456.3,331 1464,328.6ZM1303.8,813.9 1298.4,824.8 1288.7,820.2 1291.1,810.8 1298.4,809.5ZM1127.2,841.5 1128.4,840.9 1141.1,842.4 1146.9,851.1 1135.5,860.3 1126.7,853.7 1125.1,847.6ZM1562.2,844.6 1560.9,849 1554.7,849.8 1550.9,844.6 1553.9,838 1557.1,836.8ZM1286.9,909.4 1281,907.8 1276.8,911.3 1280.7,911.5 1286.9,912.3 1289.2,912.3ZM1315.5,906.8 1303.5,903.8 1303.1,904 1301.6,912.5 1306.2,912.8 1311.2,912.7 1313.3,912.5ZM1609,664.7 1615.9,668.6 1616.7,670.9 1610.9,675.9 1603.9,672.3 1606.2,665.6ZM1198.7,300.8 1202,304.4 1207,301.6 1206.1,301.5 1200.2,299.1 1199.2,298.8ZM1901.2,397.1 1902.7,396.8 1912.4,386.3 1911.8,385 1902.4,382.2 1900.6,384.7 1897.4,388.4ZM1228.3,456.2 1239.9,442.6 1236.5,438 1221.4,440.5 1223.5,453.9ZM1413.8,536.6 1397.8,531.7 1397.6,530.5 1405.1,521.1 1414.1,524.3 1416.3,534.7ZM761.4,623.8 767.9,616.1 777.8,620.6 778.3,630.4 772.8,634.7 770.5,634.5ZM806.2,564.7 802,578.9 795.3,581.3 788,573.5 793.3,562.8ZM1339.7,787 1332.1,777.2 1322.1,783.8 1321,788.1 1321.9,790.6 1324.2,792.3 1339.2,788.7ZM1383.9,787.9 1385,783.3 1381.8,774.6 1373.3,771.3 1371,772.6 1367.6,780 1370.2,785.7ZM1146.7,711.3 1157.3,706 1158.3,696.4 1147.5,692.7 1141.7,702.5ZM837.9,629.3 847.5,629.3 855,621.7 852.9,613.6 839.7,610.6 837,612.2 836.2,627.1ZM1107.9,784.2 1113.7,789.5 1123.1,783.2 1116.5,773.2 1108.3,774.3ZM1244.7,902.9 1244,902 1233.2,900 1228,907.3 1229.2,911.3 1232.3,911.7 1233.8,911.5 1237.2,912ZM1050.8,812.5 1043.5,817 1039.7,827.2 1050.3,833.7 1053.4,831.9 1056.9,823.9 1053.3,813.7ZM1073.9,306.8 1080.9,310.3 1089.1,308 1091.8,303.5 1087.6,296.9 1082.7,299.9 1076.3,301.3 1072.9,303.3ZM1586.1,608.8 1586.5,608.8 1592.6,614.1 1586,627.7 1585.4,628.2 1585.2,628.3 1580.6,626.7 1579.2,616.9ZM1391.7,511.6 1387.8,508.4 1378.5,518.4 1383.4,526.3 1391.2,525.2ZM1064.3,376.3 1068.3,369.3 1071.6,367.8 1085.3,374.9 1078.9,385.5 1076.3,386.1 1064.6,380.7ZM672.9,498.6 668,489 664,488.7 664,490 661.2,497.7 660.6,500.7 664.2,504.2 667.9,504ZM995,699.2 990.8,705.1 983.1,703.5 977.8,689.5 986,681.5 989.5,682.9ZM1178.2,587.9 1170.1,582.6 1169.9,578.5 1185.2,573.5 1184.9,584.9ZM1324.8,765.9 1324.8,764.3 1316.9,761.2 1307.3,767.1 1311.4,773.9 1318,775.1ZM1665.9,447.4 1663.2,452.8 1671.1,459.2 1672.9,456.5 1674.4,456.8 1675.6,452.6 1672.8,449.3ZM1013.4,578.9 1007.7,583.3 1008.6,590.2 1019.2,595.5 1023.6,587.2 1019.4,580ZM1125.9,304.5 1138.8,302.1 1138.7,299.6 1133.2,297.6 1125.8,297.3 1122.5,296.4ZM1547.4,625.8 1540.4,625.1 1538.1,617.9 1541.6,614.1 1548.7,614.7 1550.2,622.1ZM1607.1,535.5 1603.6,537.2 1600.7,544 1608.2,552.9 1612.8,551 1614.6,547.9 1613.9,542.5 1612.7,543.3 1613.4,540.6ZM1546.5,602 1550,605.1 1551.2,610.4 1548.7,614.7 1541.6,614.1 1537.5,606ZM1327.3,356.9 1323,350.4 1324.5,344.7 1333.9,341.6 1336.2,351.1ZM1032.2,608.8 1029.2,601 1037.5,587.7 1046.4,590.5 1047,602.6ZM1144.5,628.2 1140.1,622.5 1146.2,610 1154.3,613.2 1157.2,622.6 1155.6,624.7ZM1516.3,821.2 1521.2,818.1 1521.8,814 1512.2,806.5 1507.6,815.7ZM1305.7,784.1 1298.7,778.5 1297.6,767.7 1299.8,764.7 1307.3,767.1 1311.4,773.9ZM1251.1,402.5 1242.6,403.1 1236.1,409.4 1244.1,420.9 1257.1,414.7 1259.8,410.6 1259.3,408.2ZM1080.8,765.7 1089.2,762 1092.5,756.7 1077.8,746.4 1073.3,755.8ZM1861.1,448.5 1852.2,447.3 1851.4,444.6 1858,438.2 1864.3,440.7 1864.8,443.9ZM1559.5,633.5 1561.4,628.7 1556.9,622.4 1550.2,622.1 1547.4,625.8 1548.7,631.1 1556.3,634.7ZM1212.8,770.7 1223.3,764.3 1222.8,759.3 1219.5,756.1 1205.9,755.6 1205.1,757.4ZM1438.4,698.2 1436.4,707.5 1438.2,710.1 1447.5,709.9 1449.8,701.8 1445.7,697.7 1440.8,696.9ZM1571.5,614.3 1579.2,616.9 1586.1,608.8 1575.7,603.4 1574.4,603.9ZM1627.9,485.2 1626.2,494.2 1630.3,498.4 1631,498.5 1631.8,494.6 1631,487 1631.3,485.8ZM1356,611.4 1357.1,596.2 1367.1,595 1372,601.3 1367.4,609.9ZM1286.6,448.2 1285.8,447.9 1275.7,454 1274.7,459.4 1281.4,468 1288.2,465.5 1291.3,454.7ZM713.5,656.8 703.8,646.9 699.4,647.3 693.9,654.8 693.9,658.3 699.2,662.3 710.1,661.7ZM1252.8,388.7 1248.6,384.3 1244.1,385.7 1239.1,392.5 1242.6,403.1 1251.1,402.5ZM1363,423.3 1368.2,417.6 1375.3,422.9 1371.6,432.7 1368.8,434.4ZM1488.7,784.7 1492.3,796.9 1499.6,796.3 1501.7,793 1499.5,782.6 1495,781ZM1585.4,493.7 1575.6,497.5 1583,505.7 1590.6,498.7ZM1656.4,457.2 1653.4,458.2 1657.7,460.4ZM1037.8,868.3 1039.4,865.9 1042,859 1046.2,854 1042.7,848.9 1041.2,849 1035.1,860.1ZM1052.5,863.1 1048.1,856.8 1050,863 1050.8,864.3ZM1553.9,838 1550.9,844.6 1538,844.3 1545.9,833.8ZM977.6,583.7 976.8,570.6 968.1,568.6 962.1,578.6 963.9,582.2 974.9,586.4ZM1224.8,664.6 1219.1,673.8 1233.5,683.5 1235.3,683.5 1238.1,675.9ZM1277.5,757.7 1282.2,758.2 1284.4,771.8 1283,773.6 1269,765.4ZM1395.4,536.9 1398.8,548.7 1395,551.5 1379.7,548.7 1379.7,542.8 1381.9,539.6ZM1378.5,395.3 1374,394 1366,397.4 1369.9,410.4 1381.5,409.1ZM1272.8,324.9 1272.2,333.6 1279.3,336.6 1284.8,333.9 1285,320.9 1282.7,319.8ZM1602.4,894.5 1592.6,888.9 1591.6,889.4 1594,893 1597.8,897 1602.3,900.9ZM1294.2,521.6 1287.7,529.6 1280.4,529.1 1277.4,525.4 1284.8,514.6 1288.2,513.8ZM1228.6,768.9 1223.6,782 1235.3,785.8 1238.6,782 1236.4,768.8ZM975.3,593 974.9,586.4 977.6,583.7 991.6,582.8 991.8,594.1 988.3,597.1ZM1301.8,537.7 1297.2,522.3 1294.2,521.6 1287.7,529.6 1291.5,537.7 1300.3,538.6ZM1641.7,589 1639.5,602 1632.5,601.9 1628.3,598.6 1633,590.2ZM1268,685.6 1279.1,688.5 1280.5,676 1269.9,674.7ZM1324.3,363.3 1317,375.5 1313,375.8 1304.8,366.1 1314.3,360.3ZM1481.1,623 1488,629.2 1480.6,635.4 1470.7,633 1473.4,624.2ZM1436.6,423.5 1436.4,415.1 1443.5,409.2 1450.1,411.3 1449,419.4 1440.1,425.2ZM1587,485.3 1598.4,488.8 1595.5,499.3 1590.6,498.7 1585.4,493.7 1586.1,486.2ZM862.2,797.3 868.9,783.1 879,787.6 878.7,797.9 873.9,801.5ZM1657.7,799 1666.1,806.6 1663.6,810.2 1657.1,811.4 1650.5,804.6ZM1404.2,414.1 1412.7,405.1 1415.1,405.4 1419.8,413.7 1414.2,418.5 1404.6,417ZM1586.9,444.9 1588,436.4 1585,433.1 1576.2,434.6 1573.6,443.1 1574.1,443.9ZM1324.5,682.5 1330.5,681.5 1334.8,671.1 1324.6,668.3 1320.5,670.6 1321.7,680.5ZM1455.2,355.2 1455.9,353.7 1453.3,343.6 1449.1,343.2 1441.4,349.7 1444.2,353.6ZM1161.6,606.6 1154.9,592.8 1156.5,591.2 1163.6,589.6 1171.5,600.1 1162.7,606.6ZM871.4,419.7 875.9,423.8 870.4,436.4 866.3,437.5 857.1,431.3 856.6,428.7ZM915.1,571.8 921.8,564.2 930.7,566.1 933.2,577.3 918.6,579.9 916.5,578.6ZM1393.3,575.2 1400.5,582.5 1399,587 1389.8,587.9 1387.2,577.8ZM1408.4,375.1 1405,369.9 1408.2,361.1 1411.6,360.2 1416.3,368.3 1409.8,375.1ZM807,541.3 816.1,541.6 822.7,550.4 811.1,559.6 804,548.5ZM1137.9,663.5 1124.5,659.2 1119,665.3 1132.5,674.7ZM951.2,608.1 952.6,613.7 944.3,621.5 935.7,620.8 936.2,608.3 943.9,604.5ZM1482.5,811.5 1481.9,809 1488.8,800.1 1489.1,800.1 1495.3,810.5 1491,813.7ZM1375.1,654.9 1374.4,644.7 1360.2,641.6 1358.7,643 1361.5,651.8ZM1370.6,709.6 1370.9,709.3 1383.6,714.6 1384.1,719 1378.6,724.3 1370.9,720ZM1165.9,725.4 1174.1,729.5 1178.9,726.6 1178,716.8 1169.1,712.5 1168.1,713 1164.6,719.4ZM1537.1,816.7 1537.6,815.7 1542.4,815.1 1548,819.7 1545.7,828.6 1545.6,828.7 1538.9,826.6Z"/>
<path fill="#ebe8df" d="M1087.7,572.4 1086,568.3 1071.7,565.2 1066.6,573 1067.2,577 1074.3,582.5ZM854.5,426.7 856.6,428.7 871.4,419.7 869.8,413.1 856.4,410.1 853.6,411.6ZM1539.3,426.7 1549.3,433 1551.7,431.7 1556.8,417.8 1556.7,417.6 1554.8,416.3 1546.5,415.4ZM1679.5,540 1687.5,528.9 1689,528.6 1695.8,534 1695.7,537.9 1686,544.5ZM868.9,783.1 866.8,778.5 868.4,771.3 878.8,767.5 888.9,775.4 886.8,782 879,787.6ZM1196.9,460.2 1191.6,464.3 1193.6,468.9 1206.1,475.8 1212.4,470.8 1211.1,461.1ZM1428.7,648.2 1437.5,648.2 1437.6,648.3 1440.3,656 1434.1,663.3 1427.5,662.8 1425,656.9ZM1116.5,773.2 1124.3,763 1127.3,763.1 1135.4,776 1135.2,777 1124.5,783.4 1123.1,783.2ZM1694.3,774.8 1694.4,783.3 1686.2,787.3 1683,785.5 1680.3,775.3 1689.2,772.6ZM1533,489.7 1533.9,500.1 1544.4,501.4 1547.1,496.5 1543.7,489.5 1533.7,488.9ZM773.1,499.8 759.3,510 747.6,499.4 749.1,497.4 763.4,491.6ZM1125.7,375.2 1125.3,367.4 1110.6,366.3 1106.9,370.6 1109.2,381.9 1122,381.4ZM1500.5,425.6 1502,414.5 1499.3,412.7 1489.3,412.4 1485,418.4 1494.5,430.4 1495.3,430.2ZM948.3,353.1 938.1,346.2 941.6,333.8 946,331.8 956.9,336.7 958.4,339.4 949.7,353ZM997.6,345.6 992.1,349.2 982.1,343.9 981.5,329.5 981.8,329.2 998.1,336.8ZM1359.8,359.5 1352.8,360.2 1348.2,350.9 1351.8,345.3 1363.8,351ZM894.7,342.1 892.4,349.5 891.6,349.9 881.4,349.6 876.1,340.4 878.8,334.3 890.4,332.6ZM1053.3,561.3 1048.8,555.6 1033.3,560.5 1041.2,571.2 1049.1,571 1053.5,565.7ZM675.5,329 689.1,324.3 689.1,317.2 687.4,315.1 680,316 675.7,322.7 673.9,325.9ZM1116.1,416.6 1126.7,423.6 1121,434.7 1107.8,433.7 1107.8,419.8ZM1513.9,440.3 1531.2,441.2 1533.6,445 1519.9,454.2 1517.3,453.1 1512.1,442.2ZM874.4,817.8 857.8,815.4 859.6,816 866,817 866.3,822.7 868,829 870.2,832ZM1367.4,313.7 1354.5,304.1 1351.1,310.4 1354.1,322.8 1358.8,325.2 1367.2,319ZM1162.5,473.8 1164,465.3 1156.5,458.8 1148.9,460.1 1143.8,474.8 1144.3,475.8 1147,477.3ZM1306.4,715.3 1306.2,716.6 1291.6,728.3 1288.2,727.9 1286.7,723.4 1290.5,709.9 1304.3,712.7ZM1528.9,547.9 1517,548.8 1515.5,546.6 1518,535.3 1521,535.3 1529.6,543.6ZM1288.7,820.2 1284.5,822 1282.3,831.8 1291.2,835.9 1293.3,835.1 1298.9,827.4 1298.4,824.8ZM853.6,411.6 856.4,410.1 859.7,393.5 859.4,393.2 843.2,393.7 841.8,408.9 841.9,408.9ZM1013.1,361.3 1010.8,359.7 1008.4,349.5 1013.9,344.5 1026.4,347.2 1028.2,358.9 1022.7,361.8ZM1085.1,696.2 1100.3,690.1 1089.8,677 1087.3,677.3 1081.7,691.1ZM819.7,472.2 805.3,475.5 802.1,481.4 803.8,487.8 814.8,490.3 823.8,483.8 823.4,474.8ZM1211,776.8 1212.8,770.7 1223.3,764.3 1228.6,768.9 1223.6,782 1223.3,782.1ZM1590.6,812.8 1583.5,811.8 1579.8,806.2 1579.7,799.9 1594.2,798.5 1594.8,798.8 1596.3,802.3ZM1479.7,371.3 1471.5,366.2 1466.2,374.1 1473.5,385.9 1473.7,386.1 1482.3,377.4ZM709.9,454.8 704.8,440.3 703.5,439.2 692.3,444.6 692.3,455.1 699.6,459.6ZM1751.4,554.4 1743.2,552.5 1741.3,548.7 1743.8,542.1 1750.7,544.2 1753.1,551.4ZM1475.5,393.8 1490.1,392.6 1492,399.8 1487.2,405.7 1478.3,402.7ZM1574.4,603.9 1575.7,603.4 1577.8,595 1572.2,588.1 1570.2,588.4 1562,594.5 1562.4,599 1564.4,601.8ZM1746.9,525.1 1751.3,533 1742.9,539.6 1739.8,537.5 1738.3,530.4ZM1335.6,448.3 1334.8,449.2 1336.1,456.9 1345.6,463.3 1350.8,459.9 1349.5,452.6ZM922.3,359.7 923.9,357.9 925.1,353 914,343.3 910.7,343.6 905.2,355.6 907.8,361.5ZM1768.2,533.4 1765.5,526 1766.3,524.8 1780.7,523 1782.1,528.7 1778.3,534.7ZM1620.9,605 1623,598.8 1628.3,598.6 1632.5,601.9 1630.2,612.1 1629.7,612.5 1624.3,611.7ZM1556.1,364.5 1547.3,362.9 1544.9,364.4 1547.3,377 1550.7,378.5 1559.9,374.5ZM711.3,569.5 709.2,562.3 717.8,551.3 729.5,558.2 730.8,561.1 725.9,570.6 720.1,572.8ZM707.4,477.5 711.8,487.3 724.1,491.1 729.6,485 730.6,479.8 729.8,478.1 727.9,476.6 712.5,473.7ZM941.3,747.9 942.7,745.9 939.4,736.4 925.2,732.9 924,733.9 921.7,740.7 928.6,749.8ZM1540,590.8 1546.2,595.1 1546.5,602 1537.5,606 1536.4,605.8 1531.9,598.9 1533.6,593.9ZM1096.2,494.7 1091.5,484.4 1099,474.2 1106.8,476.6 1105.2,493.9ZM1371.6,432.7 1385.2,433.8 1385.6,421.1 1375.3,422.9ZM1367.8,349.9 1372.1,344.7 1370.2,338.1 1360,331.4 1351.1,342.6 1351.8,345.3 1363.8,351ZM1405.4,378.9 1396.1,380.6 1396.3,389.1 1402.1,391.3 1407.7,387ZM1309.8,611.9 1319.1,602.2 1324.8,606.7 1325,619.5 1317.6,620.2ZM1627.8,843.7 1630.2,849.2 1636.3,849.6 1636.6,848.3 1640,843 1640.6,841 1633.1,836.1ZM1676,632.3 1677.5,629.4 1674.7,620 1663.3,621.5 1662.9,631 1667.4,635.6ZM676.9,622.8 675.9,621.2 676.4,623.9 676.4,624.4ZM1104.6,761.1 1095,755.7 1100.3,740.3 1101.6,739.7 1115.3,748.2 1115.5,755.6ZM1689.3,627 1677.5,629.4 1676,632.3 1681.8,639.5 1692,640.8 1693.1,640.2 1689.4,627.1ZM1436.4,707.5 1426.5,706.7 1423,711.8 1434.9,721.4 1438.2,710.1ZM1424.3,568.6 1434.4,575.1 1434.5,580.8 1426.3,584.6 1419,582 1420,573.1ZM960.8,457.8 944.9,466.5 943.7,468.9 948.6,478.1 956,479.6 964.3,467.3ZM1584.8,658.3 1595.7,654 1592.7,643.7 1584.4,642.6 1580.5,652.5ZM1007.7,388.8 996.7,390.3 988,377.2 988,375.3 995.2,371.5 1010.5,380.2 1010.7,380.5 1009.1,387.3ZM1156.6,301.9 1160.9,313.5 1161.7,313.9 1173.2,307.2 1171.6,296.6 1167.1,296.3 1160.2,296.6 1158.9,296.8ZM896,773.2 907.9,777.5 915.3,763.4 908.8,754.4 897.6,756.1ZM1241.5,510.6 1254.1,518.4 1255.1,523.9 1254.4,525.1 1238,527.1 1233.6,516 1239.8,510.7ZM1128.1,892.9 1138.4,883 1140.4,882.7 1149.8,893.6 1141,902.4 1128.8,895.3ZM1825,579 1815.2,583.9 1811,577.1 1817.6,570.3 1825.7,572.4ZM1521.8,814 1512.2,806.5 1511.7,804.2 1514.7,800.3 1524,799.7 1524,799.7 1527,808.3ZM1799.5,554 1808,546.3 1798.5,539.6 1793.4,548.6ZM1295.6,432 1282.5,436.3 1285.8,447.9 1286.6,448.2 1297.5,442.9 1297.6,433.1ZM1669.3,561.1 1675.6,555.6 1679.7,557.2 1682.1,564.5 1674.2,570.4 1670.4,568.7ZM774.5,500 781.4,495.7 781.6,479 774.7,475.6 764.5,482.7 763.4,491.6 773.1,499.8ZM817.8,439.6 827.2,441.2 834.6,432.9 835,430.4 824.7,420.8 810.8,424.8 812.2,433.1ZM1565.4,373.7 1565.7,373.8 1565.5,373.6ZM1456.5,465.6 1449,456.8 1449.1,454.3 1459.3,447.5 1464.7,451.5 1462.4,462.9ZM1520.3,519.1 1528.8,525.5 1535.6,521.2 1534.9,513.5 1528.3,508.2 1524.5,510ZM1162.7,420.8 1164.7,411.8 1179.8,415.6 1181.2,418.1 1178.1,427.6 1174.5,429.2ZM1202,304.4 1202.9,310.4 1213.7,313.9 1219.8,311.1 1221.1,305.3 1220,305 1213.6,302.6 1207,301.6ZM1380,324.1 1367.2,319 1367.4,313.7 1373.8,305.2 1379.2,306.6 1382.6,319ZM1048.2,844.6 1042.7,848.9 1046.2,854 1047,853 1048.1,856.8 1052.5,863.1 1053,863.1 1062.5,855 1061.4,848ZM1495.8,738.4 1493.4,741.2 1495.9,751.8 1505.3,750.5 1504.1,739.8ZM1353.5,420.3 1340.4,424.3 1339.7,424.1 1338.5,422.1 1339.8,408.5 1344.6,407.2 1354.3,410.8ZM1673.7,680.5 1672.5,683.3 1662.3,683.5 1661,675.5 1664.1,670.4 1665.6,670.3ZM827.6,300.8 832.1,292.3 823.4,284.4 820,293 815.6,298.3 815.7,302.1ZM1088.2,337.5 1101.3,339 1106.1,349.9 1098.6,354.8 1086.6,353.1 1085.7,341.1ZM1694.4,783.3 1686.2,787.3 1686.6,795.5 1688.1,796.1 1690,795 1696,787 1698.1,785.7ZM1310.7,392.4 1308.2,386.3 1296.7,382.8 1289.2,394.4 1296,399.5 1308.8,397.2ZM1609.2,597.9 1616.2,593.1 1614,588.4 1603.2,585 1602.4,585.3 1599.6,591.2 1606.3,597.8ZM1520.9,718.3 1522.3,715.5 1532.1,715.4 1535.1,722.5 1529.1,728.2 1523.2,725.8ZM1542,524.2 1535.6,521.2 1528.8,525.5 1528.6,527.5 1536,536.6 1542.6,526.5ZM1363,423.3 1368.8,434.4 1367.4,437.2 1362.7,438 1354.9,432.9 1356.9,423.4ZM910.5,315.2 914.7,327.7 906.3,332.1 899.5,326.8 905.2,314.6ZM693.3,343.9 704.1,360.9 704,361.8 691,369.8 685.9,349.5 687.4,346.3ZM1563,681.6 1567.8,690.7 1567.6,692.3 1557.8,699 1557.7,698.9 1554.4,690.9 1557.5,681.9ZM966.4,854.8 978.4,846.4 968.1,835.8 951.5,845.1 952.5,847.2ZM1037.4,798.1 1049.9,788.2 1051.9,788 1058.4,790.5 1050,809.7ZM790.8,592 792.8,591.2 802.9,599 802.6,606.3 790.2,614.4 788.4,613.8 783.2,604.9ZM1616.4,468 1620.2,471.3 1615,480.6 1607.4,477.4 1606.8,473.3 1611.3,468.2ZM739.2,672.6 740.8,658.1 727.9,652.2 723.9,652.7 723.6,653.1 726.4,671.2 726.8,671.6ZM1767.9,716.5 1760.2,725.1 1765.6,731.3 1774.2,726.7 1774.5,724 1773.3,718.8ZM1073.5,644.5 1084.7,650.1 1084,659.3 1079.3,662.9 1075.5,662.4 1069.9,653.4ZM930.7,439 927.7,445.9 933.4,454.4 940,454.2 946,446.9 944,442.6ZM1596.4,457.7 1604.1,460.4 1600.3,469.2 1594.7,470 1588.9,465 1588.8,464.1ZM1531.8,374.4 1529.8,376.6 1519.4,377.1 1518.5,375.1 1521.2,365.4 1523.6,364 1532.1,371ZM890.1,597.8 881,600.2 880.1,612.1 890.3,617.2 891.4,616.7 892.7,599.6ZM1692.7,731.3 1693.5,736.9 1702.1,738.6 1708.2,727.4 1701.8,722.3 1696.7,724.2ZM1581,759.1 1572.9,756.8 1571,757.6 1571,766.6 1574.7,770.4 1582.9,769.8ZM1291.6,728.3 1288.2,727.9 1286,730.3 1288.9,746.8 1297.6,744.9 1298.6,734.1ZM1708.3,727.5 1719,719.5 1718,713.8 1715.1,711.6 1705.2,711.8 1702.7,713.4 1701.8,722.3 1708.2,727.4ZM998.5,567.7 1003.6,564.3 1003.1,552.4 1001.3,551.2 988.3,553.6 986.4,557.8ZM1671.3,465.6 1669.8,461.1 1671.1,459.2 1663.2,452.8 1656.7,456.4 1656.4,457.2 1657.7,460.4 1659.2,461.1 1663.8,464.2 1671.2,465.6ZM1556.9,890.1 1555.4,890.6 1556,891 1557,890.5ZM1106.1,645.9 1104.2,649.7 1088.1,647.6 1087.8,635.2 1099.8,634.2ZM1739.1,733.6 1738.6,725.6 1732.6,722.5 1727.4,732.2 1734.7,737.2ZM916.3,505.3 932.5,512.1 936.3,502.4 925.5,490.7 915.9,498ZM742.9,533.6 755.8,529.1 757.3,530.1 759.8,539.3 749.9,548.7 740.9,541.8ZM1269.6,701.5 1265.9,704 1264.1,712.6 1274.9,716.7 1278.5,709.3 1272.4,701.6ZM948.3,353.1 938.1,346.2 931.5,347 925.1,353 923.9,357.9 939.5,365.1ZM1199.7,582.6 1195.5,573.4 1186.4,572 1185.2,573.5 1184.9,584.9 1192.8,588.8ZM1564.1,387.7 1555.6,390.1 1556.7,399.8 1566,401.5 1569.4,391.9 1568.8,390.3ZM1705.2,597.1 1704.7,606 1692.3,607.7 1687.8,600 1690.8,595.1ZM1189,299 1181.5,311.6 1183.2,317 1194.5,319.8 1197.8,318 1202.9,310.4 1202,304.4 1198.7,300.8ZM707.7,679.3 705.4,679 705,682 710.9,688.7 711.6,684.7ZM1877.7,532.7 1873.5,538.1 1878.7,541.3 1876,536 1879.6,532.4ZM1021,617.6 1024.1,631.1 1031.6,633.6 1039.9,624.3 1039.9,623 1030.3,614.5 1021,617.5ZM1650,545.7 1645.8,549 1636.7,544.8 1637,540 1644.4,535 1645.2,535.4ZM1467.5,617.6 1473.4,624.2 1470.7,633 1468.3,634.8 1459.7,632.1 1457.4,626.8 1459.4,621.3ZM878.2,663.1 870,650.1 874.5,644.7 886.4,647.5 889,657 886.3,661.4ZM1138.3,560.3 1148.2,574.1 1141.7,579.4 1132.3,578.6 1132.6,565.6 1138.1,560.2ZM856.4,410.1 869.8,413.1 874.5,406.2 868.9,394.3 859.7,393.5ZM1102.7,562 1103.2,573 1103.1,573 1091.3,574.4 1087.7,572.4 1086,568.3 1088.7,555.2 1089.2,554.8ZM709.5,508.6 716.2,520 725,519.5 726.7,503.2 723.3,499.8 711.5,504.6ZM1667.1,734.9 1671.5,728.7 1679.8,730.3 1681,741.2 1680.1,741.4 1667.6,736.4ZM901.7,414 905.1,418.1 915,416 911.9,394.6 905.7,395.3 903.5,398.5ZM1673.3,545.1 1677.3,540.1 1679.5,540 1686,544.5 1688,551 1679.7,557.2 1675.6,555.6 1672.5,549.6ZM795.2,371.3 782.9,361.3 771.2,377 783.9,384.7 795.4,373.3ZM1644.6,773.3 1639.4,773.4 1633.1,766.3 1638.7,759.8 1641.9,759.8 1645.9,771.2ZM1041.2,571.2 1035.5,579.8 1036.9,587 1037.5,587.7 1046.4,590.5 1052.5,586.7 1049.1,571ZM1618.9,903.6 1619,912.8 1623.8,912.3 1629.4,912.1 1629.7,910.2 1622.9,904.1ZM1128.6,581.2 1116.6,570.9 1119.5,564.5 1132.6,565.6 1132.3,578.6ZM1711.8,515.8 1714.6,514.1 1712.8,505.2 1704.3,500.5 1700.8,511.9 1701.1,512.7ZM686.5,542.8 682.4,553.5 691.4,561.8 700.6,558 701.5,550 693.6,542.8ZM746.2,286.4 745.2,283.7 740,288 739.4,289.6ZM801.9,281.4 802,281.3 803.8,275.2 803,273 796,276 792,278.7ZM781.2,275.7 781.7,275.8 781.4,275ZM1085.3,374.9 1071.6,367.8 1075,357.6 1084.3,356.1 1089.6,370.5 1087.3,374.1ZM1107,524.1 1114.5,536.4 1117.8,537.7 1124.5,535.4 1126.5,531.7 1121,518.8 1115.5,516.9ZM1228.7,317.1 1231.4,316.2 1234.5,307.1 1232.6,307.3 1225.6,306.4 1221.1,305.3 1219.8,311.1ZM1832.1,498.9 1838.4,499 1843.8,505.8 1838.8,512.3 1830.6,509 1831.3,499.5ZM886.4,647.5 889,657 903.6,653.9 903.6,640.6 901.9,637.7 900.9,637.1 892.4,637.1ZM1556,671.1 1548.5,664.8 1545.5,665.8 1545.5,678.7 1554.3,678.3ZM1724.1,749 1734.9,754.3 1737.6,744.7 1734.4,741.3 1725.5,745.6ZM1227.6,556.1 1217.2,556.8 1218.4,566.1 1226.7,571.5 1232.9,563.7ZM1741.1,565.1 1739,563.8 1730,567.6 1735.6,580.6 1742.5,571.4ZM1248.4,765 1242.4,763.7 1237,750.9 1237.2,749.5 1243.9,744.6 1258.2,751.1 1259.3,752.6 1259.2,754.1ZM1911.8,385 1914.8,374.8 1911.4,370.6 1910,374 1904,380 1902.4,382.2ZM1588.5,588.7 1584.2,593.8 1577.8,595 1572.2,588.1 1574.7,584.3 1580.3,581.6 1588.2,587.5ZM803.7,335 793.4,338.4 793.8,348.8 805.6,355.7 812.6,344.1 812,341.2ZM888.9,775.4 896,773.2 897.6,756.1 891.3,751.7 881.2,752.5 878.8,767.5ZM682.4,553.5 691.4,561.8 690.9,573.5 690,574.6 677.3,577.3 675.5,576.8 672,564.7 680.7,554.1ZM770.1,287.4 774.8,286.3 777.7,278.1 767.7,269 766,274 760,282 759.4,282.4ZM1387.1,591.9 1392.1,600.2 1391.3,604.6 1384.8,607.6 1375.8,601.1 1382.4,592ZM1059.9,704.1 1067.7,716.3 1065.7,720.8 1053.6,722.1 1049.6,710.8ZM837,612.2 824,607.6 823.6,600.2 827.3,593.7 833.3,591.6 842.4,596.2 839.7,610.6ZM1065.2,606.1 1064.5,595.8 1052.6,586.7 1052.5,586.7 1046.4,590.5 1047,602.6 1053.3,609ZM1768.2,680.9 1768.2,681 1768.3,680.7ZM1854.5,477.8 1863,482.1 1861.1,490.1 1853,491.1 1854.4,477.8ZM1603.7,623.7 1601.8,626.4 1601,637.1 1606.9,640.8 1608.3,640.9 1616.9,635.1 1616.3,631.9ZM995.4,515.6 1000.2,517.7 1003.5,523.1 997.2,536.6 991.8,536.1 988.1,531 990.6,517.1ZM1500.8,765.7 1494.9,765.9 1493.2,767.3 1495,781 1499.5,782.6 1506.3,779.8 1507.5,772.3ZM1766.6,626 1770.9,636.2 1769.4,638.4 1762.6,639.7 1755.4,634.2 1757.6,628.3 1763.6,625.4ZM671.9,473.5 673.4,464.9 679.5,462 690.1,471.2 686.3,484.6 675.7,480.9ZM741,674.6 741.2,685.3 728.7,690.7 722.8,684.2 726.8,671.6 739.2,672.6ZM1052.7,328.5 1051.2,342 1045.1,346.2 1037.4,340.6 1039.6,331.7 1052.1,327.4ZM1710.3,572.4 1700.5,566.5 1697.5,567.1 1695.3,575.1 1700.8,581.1 1705.3,580.1ZM1657.9,746 1651.6,742.1 1646.5,746.1 1646.2,757.3 1653.6,759.6 1658.4,753ZM1766.6,515.7 1766.3,524.8 1780.7,523 1781.3,521.8 1779.4,515.1 1770,513.1ZM1082,794.6 1076.2,784.3 1065,784.4 1059.6,790.4 1068.6,800.8 1077.6,800ZM1695.3,575.1 1697.5,567.1 1693.5,562.9 1684.4,565.6 1687.4,576.3ZM1389.5,469 1389.9,476.3 1397.2,480.8 1400.5,479.1 1403.4,472.2 1399.7,465.7ZM1395.4,368.6 1405,369.9 1408.4,375.1 1405.4,378.9 1396.1,380.6 1390.8,375.4 1391.1,372.6ZM769.2,395.1 776.9,396.3 784.2,386.9 783.9,384.7 771.2,377 768.8,377.2 765.5,383.5ZM874.4,817.8 874.5,817.7 873.9,801.5 862.2,797.3 861.3,797.5 853.6,810.4 855,814.4 857.8,815.4ZM930.1,722 928.9,722.7 925.2,732.9 939.4,736.4 945.9,728.9 945.2,722.2ZM1678.8,503.3 1680.4,499.3 1676.7,503 1677.1,504.3ZM1603.9,818.3 1607.9,828.3 1606.7,830.7 1598.7,832.5 1592.8,821.6 1593.8,818.3 1603.5,818ZM1367.2,365.9 1372.8,359.6 1367.8,349.9 1363.8,351 1359.8,359.5 1362.6,365.5ZM1472.1,520 1478.8,522.6 1478.9,533.4 1476.2,534.8 1474.9,534.6 1467.9,527ZM819.7,472.2 819.6,459.7 808.8,454.4 803.1,468.3 805.3,475.5ZM1081.1,850.8 1072.8,840 1069.4,839.4 1061.4,848 1062.5,855 1065.2,856.6 1070,853 1078,855 1079.3,855.7ZM945.2,722.2 945.9,728.9 961.2,739.8 961.3,739.7 964.6,724.8 960.1,718.5 949.6,716.7 948.9,716.9ZM1705.4,698.1 1701.4,696.2 1694.2,700.7 1697.7,710.8 1702.7,713.4 1705.2,711.8ZM1574.9,665.7 1570.3,658.1 1562.2,657.7 1561.3,658.8 1563.2,668 1563.3,668.1 1574.5,666.7ZM1336.5,640.5 1334.7,649.7 1321.4,648.1 1320.9,646.6 1326.4,635.3 1327.3,634.8 1333.1,635.9ZM907.8,361.5 905.2,355.6 892.4,349.5 891.6,349.9 889.9,368.5 897.2,371.8 903.6,369.3ZM1518.1,466.8 1512.6,466.5 1507.4,475.4 1521.2,478.9 1523.6,476.6ZM1162.5,364.8 1158.2,360.4 1143.5,367 1144.5,373 1157.2,377.9 1160.8,375ZM1267.4,840.5 1276.1,840.4 1282.2,831.8 1269.1,825.9 1266.1,829ZM677.8,606.6 673.8,611.6 675,616 675.9,621.2 676.9,622.8 689.9,618 690.7,608ZM1773.6,579.9 1777.6,588.5 1778.3,588.8 1787.2,585.7 1787.8,584.7 1787.4,578.5 1778.8,574.4ZM1706.2,763.4 1712.1,761.2 1708.9,751.4 1703.9,749.6 1699,753.3 1699.1,754.7ZM929.7,593.7 922.9,593.3 916.9,598.3 917.1,607.1 919.7,610 932.3,606ZM1420.8,368.8 1423.3,379.4 1426.8,380.5 1434.5,367.3 1434.2,366.2 1428.9,361.4ZM1057.2,300.4 1057.8,297.5 1055.2,295.8 1049.7,291.8 1045.9,288.8 1044,297.4ZM1602.6,741.6 1606.6,741.4 1614,745.9 1614.2,749.8 1611.5,753.8 1608.5,754.9 1598,748.9 1597.6,744.7ZM1760.9,480.6 1769.9,477.4 1776.8,486.3 1768,491.2 1762.1,487.1ZM1921,399.7 1921,398.3 1920,394.9 1921,390.8 1921,390 1919.1,389.5 1917.6,389.8 1917.3,398ZM968.8,669.7 962.5,680.6 946.1,676.7 944.1,673.7 955.3,662.4 958.9,662.2 968.4,668ZM1484.2,566.3 1496.6,567.6 1498.5,572.9 1495.1,577.6 1483.8,579.7 1479.4,573.9ZM741,674.6 758.6,670.8 760.7,666.6 760.7,664.5 747.1,654.5 740.8,658.1 739.2,672.6ZM1053.2,654.6 1064.3,639.2 1060.9,631.5 1048.1,635.6 1045.7,642 1048.7,652.6 1051.1,654.5ZM1022.7,361.8 1028.2,358.9 1028.7,359.1 1036.5,367.7 1036.6,376.2 1027,380.4 1022.9,378.3ZM1595.5,763.1 1590.5,771.8 1586.4,772.1 1582.9,769.8 1581,759.1 1586.8,756.3 1593.2,758ZM1442,499.8 1428.4,506.1 1435.5,516.1 1441.3,513.9 1442.4,500ZM1102.1,626.5 1096.2,617.5 1098.1,613.5 1112,610.4 1115.9,612.8 1117.8,617.3 1112.4,624.6ZM1352.5,781 1356.7,768.3 1348,765 1341.9,770.1 1348.8,780.6ZM1147.1,458.3 1148.9,460.1 1156.5,458.8 1164.1,445.1 1164,443.6 1158,439.4 1150.3,439.3 1146.4,443ZM1620.2,819.3 1625.2,808.5 1633.9,809.3 1634.7,820.9 1620.5,820.1ZM1013.1,361.3 1010.8,359.7 997.7,365.5 995.2,371.5 1010.5,380.2ZM1556.2,553.3 1566.4,550.8 1567.6,540 1566.7,539 1557.7,537.8 1554.2,542.7ZM1462,844.9 1473.1,837.8 1472.9,832.2 1462.6,828.3 1456.3,834.5ZM1528.8,341.6 1525.2,343.9 1512.8,338.8 1514.1,336.2 1523.3,329.7 1528.2,331.4ZM1164.8,331.1 1159,332.9 1152.4,346.4 1152.4,346.9 1156.9,350.5 1167.1,348.1 1171,336.7ZM1629.3,662.1 1627.9,660.4 1630.7,649.8 1634,647.9 1640.9,652.4 1642.4,659.6 1641.6,660.4ZM1810.2,486.5 1816.7,492.2 1819,491.8 1823.6,487.3 1824.1,482.5 1820.5,477.7 1812.1,481.1 1810,485.5ZM951.5,845.1 947.1,842.7 945.9,830 955.9,824.6 968.1,829.3 968.1,835.8ZM1634.7,680.9 1636.7,672.9 1629.4,668.3 1623.2,674.3 1623.5,677.1 1628.8,682.4ZM746.4,378.4 747.9,374.8 741.5,364.5 735.4,364.2 728,376.7 729,380 740.5,382ZM1630.2,849.2 1626,853.8 1632.5,863.9 1633.8,862.3 1633.7,862.1 1635,855 1636.3,849.6ZM1508.7,534.5 1507.9,544.9 1515.5,546.6 1518,535.3 1515.5,533.6ZM1595.7,533.2 1603.6,537.2 1600.7,544 1596.4,545.4 1588.4,541.6 1588.1,541.1 1588.5,537.3ZM1893.4,473.5 1895.2,484 1896.8,485 1907.9,476.5 1907.3,475.1 1897.6,470.2ZM1684.4,565.6 1682.1,564.5 1679.7,557.2 1688,551 1694.1,553.7 1693.5,562.9ZM1550.2,463.1 1542,467.3 1531.2,462.4 1535.8,450.6 1550.3,461.9ZM1166.9,323 1180.3,320.3 1180.8,333.7 1177.1,336.8 1171,336.7 1164.8,331.1ZM1367.8,349.9 1372.1,344.7 1379.8,345.8 1386.3,354.4 1381.2,362.5 1372.8,359.6ZM1326,816.7 1312.8,819.4 1311.7,831.9 1312.5,833 1324.3,833.5 1327.6,819.4ZM1072,476.3 1064.1,470.7 1055,479.1 1064.2,490.4 1071,486.4ZM1015.9,651.6 1004.3,656.8 1002.3,654.5 1004.5,643.4 1015.6,640.8 1016.3,641.8ZM1483.5,331.8 1481.3,322.7 1487.2,318.3 1494.6,324.4 1491.5,335.5ZM1483.2,751.4 1483.4,764.3 1485.8,767.3 1493.2,767.3 1494.9,765.9 1493.7,754.1ZM1682.9,719.2 1677.4,716.6 1677.3,705.7 1685.5,704 1688.7,713.8 1686.6,717.7ZM1563,579.9 1570.2,588.4 1572.2,588.1 1574.7,584.3 1568.4,571.6ZM1556.7,417.6 1568.4,405.8 1566,401.5 1556.7,399.8 1554.2,401.6 1554.8,416.3ZM1691.2,590.2 1685.6,584.4 1676.7,589.1 1684.1,600 1687.8,600 1690.8,595.1ZM741.8,395.5 737.8,397.8 724,392.7 722.5,389.8 729,380 740.5,382ZM1508.4,724.5 1516.7,729.9 1523.2,725.8 1520.9,718.3 1512.3,719.4ZM1807.2,591 1807.6,592.5 1807.4,590.9ZM1676.1,509 1672.9,508.3 1675.7,511.1ZM1484.3,442.7 1475.4,441.8 1472.4,438.3 1474.8,426.5 1474.9,426.5 1488.9,436.1 1487.1,441.1ZM1682.9,719.2 1677.4,716.6 1668.8,719.4 1671.5,728.7 1679.8,730.3 1682.7,727ZM1838.4,555.5 1830.5,555.8 1826.9,563 1829,566.9 1839.5,562.8ZM1716.7,735.4 1708.3,727.5 1719,719.5 1719.6,719.9 1723,733.1 1721.1,735ZM1920.5,477.2 1919.4,478.2 1919.8,478 1921,478 1920.9,477.4ZM1762.9,574.9 1776.8,566.2 1777.6,566.7 1778.8,574.4 1773.6,579.9 1763.3,576.3ZM1482,457.7 1484.3,442.7 1487.1,441.1 1497.1,449.6 1494,457.8ZM1755.8,601.7 1754.4,601.3 1747.5,591.1 1750.8,586.2 1760.4,585.5 1762.2,588.9ZM1583.7,388.6 1579.7,394.7 1581.4,400.6 1582,400 1584,396 1587.1,392.9 1588,393.4 1591,390 1590.8,389.4ZM1045.4,511.6 1057.3,506.3 1061.4,512.4 1057.1,522.4 1048.6,520.9 1044.4,514.9ZM1877.7,519.6 1876.2,519.5 1875.1,520.2 1874.1,523.3 1877.7,532.7 1879.6,532.4 1882,530 1879,522 1879.3,521ZM1715.1,780.3 1714.8,783.3 1718,784 1718.7,780.1ZM1821.6,471 1826.1,456.6 1831,457.1 1835.4,463.8 1835.3,466.8 1829.9,471.2ZM1643.3,785 1634.5,780 1639.4,773.4 1644.6,773.3 1647.2,780.3ZM1218,526.1 1210.7,514.4 1213.8,508.3 1222.5,507.1 1233.2,515.9ZM1354.9,498.5 1366.3,502.7 1372,491.6 1371.4,489.9 1369.6,488.9 1356.6,489.5ZM1778.2,611.3 1787.1,605.3 1786.5,603.6 1778.7,598.5 1772.9,601.9 1773.6,609.7ZM1406,820 1413.5,809.5 1402.9,801.3 1402.5,801.5 1396.5,814.1 1396.9,817.1ZM1671,531.6 1671.1,528.7 1661.6,524.3 1659.2,525.1 1657.1,524.6 1655.9,525.5 1655.7,532.7 1659.6,537.9ZM1893.3,459.6 1887.2,460.9 1884.9,464.1 1886.4,472.2 1893.4,473.5 1897.6,470.2 1898.1,466.3ZM1496.6,867 1495.1,868.4 1500,871 1503.6,869.9ZM1761.1,679.1 1755.8,685.9 1758.6,693.1 1765.5,690.8 1766,688 1768.1,681.6 1768.2,681 1768.2,680.9ZM1171.4,438 1185.9,445.1 1188.2,443.6 1190.4,433.5 1178.1,427.6 1174.5,429.2ZM1396.3,491.4 1409.6,491.1 1411.2,498 1404.7,502.9 1395.9,495.4ZM1547.9,648.8 1552.3,658.7 1548.5,664.8 1545.5,665.8 1538.5,664 1536.3,659.2 1540.5,650.3ZM1142.6,634.7 1144.5,628.2 1155.6,624.7 1158.5,639.6 1146.5,640.9ZM1494.8,512.8 1493.5,520.4 1501.1,525.3 1508.6,517.8 1506.7,509.9 1502.3,509.1ZM785.8,497.2 794.4,512.6 804.9,508.5 802.1,491.5ZM1749.1,674 1746.7,681.4 1739.9,681.7 1734.3,675.9 1734.3,672.2 1736.5,668.9ZM1225.9,861.8 1224.4,862 1218.2,873.6 1224.9,879.2 1237.8,871.4 1237.8,870.6ZM1919.1,389.5 1921,390 1921,387ZM1632.5,863.9 1632.3,865.4 1633.9,866.8 1633.8,862.3ZM979.4,773.4 978.2,758.3 961,755.7 957.1,762.6 958.8,772.1 965.8,776.9ZM1691.2,508.2 1694,496.9 1703.8,499 1704.3,500.5 1700.8,511.9ZM1917.1,411.2 1919.9,423.7 1921,424.2 1921,410.5ZM1389.8,885.9 1388.5,887 1387.1,890.9 1388.1,890.9 1394,890 1395.7,889.4ZM1894.3,559.2 1894.2,559.5 1894.7,560.7 1896,560 1897.5,556.4ZM833.8,815.5 838.6,807.2 829.4,799.3 825.4,800.5 823.3,805.3 824,809 827,815 828.4,816.9ZM1790.8,608.3 1790.8,616.5 1799.4,620 1804,614 1804.1,613.8 1799.7,605.6ZM1366.6,454.8 1371.4,457.6 1372.8,469.1 1372.2,470.3 1369.1,471.3 1358.3,465.7 1357,461.8 1364.2,454.9ZM1795.5,562.1 1799.8,557.9 1799.5,554 1793.4,548.6 1784.9,549.4 1784.6,550.9 1787.1,558ZM1204.4,350.4 1207.5,365.1 1194.6,365.5 1192.1,362.5 1197,352.4ZM1428.7,648.2 1425,656.9 1412.5,657.2 1411.5,656 1415.4,645.5 1426,645.3ZM1430.3,695.1 1425.6,702.6 1426.5,706.7 1436.4,707.5 1438.4,698.2ZM1504.6,652.8 1501.5,645 1503.5,642.1 1512,641.9 1515,644.5 1508.8,653.2ZM774.5,500 777.6,514.8 771.3,519.3 759.6,512.6 759.3,510 773.1,499.8ZM1757.4,661.5 1751.9,664.8 1750.7,673 1759.1,675.8 1764.8,663.5ZM1496.6,867 1495.8,858.1 1493.1,855.1 1483.4,856.7 1480.7,864.7 1481.7,866.6 1488,865 1493.9,867.7 1495.1,868.4ZM1479.2,549 1485,557.2 1491.8,555.1 1491.3,548.7 1487,545.4ZM674.9,412.7 687,408.3 684.9,395.3 677.2,391.7 674.7,392.1 667,401.2 667.3,402.6ZM1203.8,539.1 1213.1,549.6 1212.9,553 1201.8,559.2 1195.1,555.3 1198.3,540.9ZM1659.5,539.3 1659.6,537.9 1655.7,532.7 1645.2,535.4 1650,545.7 1651.2,545.7ZM1701.8,624.2 1704.6,631.7 1704.1,633.2 1694.1,640.3 1693.1,640.2 1689.4,627.1ZM900.3,795.5 904.9,804.7 891.3,814.5 890,814.4 886.7,800 895.6,794.8ZM1403.3,632.9 1399.4,642.5 1413.1,642.4 1414.2,636 1411.7,633ZM1754.1,613.9 1742.9,614.5 1744.8,623.2 1753.6,623.6 1754.6,614.6ZM1752.7,573.2 1749.6,575 1742.5,571.4 1741.1,565.1 1749.8,563.1ZM1491.4,362.7 1501.1,358.3 1507.6,362.5 1506.7,367.8 1501.8,373.4 1495.4,373.7ZM1373.3,771.3 1374.8,762.3 1385.6,759.2 1391.1,768.1 1381.8,774.6ZM1144.6,328.3 1134.3,319.4 1140.9,310.2 1151.9,317.7 1149.3,326.4ZM1346.9,578.5 1358.3,580.6 1354.4,593.9 1351,593.8 1342.9,582.3ZM1883.4,504.1 1882.5,504.2 1876,510 1876.2,519.5 1877.7,519.6 1880.1,518.4 1882,512 1884.4,508.7ZM1720.6,514.7 1724.5,507.4 1720.3,499.1 1712.8,505.2 1714.6,514.1ZM1732.3,478.5 1733,477.5 1731.8,478.1ZM1766.4,538.5 1773.2,545.6 1781.3,544.3 1778.3,534.7 1768.2,533.4ZM768.9,761.9 761.1,756.8 751.7,760.8 758,764 763.9,766.2 768.8,766.8ZM1210.2,777.2 1193.9,771.1 1193.4,765.3 1205.1,757.4 1212.8,770.7 1211,776.8ZM1430.4,883.5 1420.3,886.6 1418.7,892.5 1422,893.4 1429.8,893.6 1437.3,893.1 1437.4,893 1437.6,892.9 1437.8,890.3ZM1633.9,559.2 1634.8,546.3 1626,546 1625,547.1 1626.5,559.3ZM1466.8,412.2 1472.2,425.4 1474.8,426.5 1474.9,426.5 1482.9,418.7 1473.8,410.2ZM1719.8,692.5 1730.8,691.4 1732,692.3 1731.8,697.4 1725.8,702.7 1719.4,699.6ZM1898.4,436.7 1892,432.5 1895.4,423.6 1902.8,426.7 1903.7,428.7ZM1801.3,514 1806.8,519.3 1798.2,528.5 1792.8,519.2 1793.5,516.6ZM1574.4,539.8 1577.3,542.3 1588.1,541.1 1588.5,537.3 1582.4,529.9 1580.5,530.2ZM923.5,370.7 933.4,376.5 930.8,385.5 916.2,388 914.9,379.5ZM1596.4,702 1593.5,706.5 1600.5,716.4 1609.9,707.2 1609.6,706.3 1598.2,701.4ZM953.4,356.1 969,358.2 966,372.3 955.2,370.7ZM1024.9,447.6 1028.6,450.5 1029.8,458.1 1023.2,465.2 1014.1,458.1 1014.8,452.1ZM1752.9,559.6 1751.4,554.4 1743.2,552.5 1738.6,559.8 1739,563.8 1741.1,565.1 1749.8,563.1ZM1036.8,498.2 1025,516.5 1023.5,516.4 1016.9,509.1 1021,498.4 1034.3,496.3ZM1762.8,463.8 1764,466.6 1771.2,469.6 1776.2,463 1770.1,456.9 1768,458 1767.2,458.2ZM925.7,832 922.8,828.8 908.9,835.1 908.2,837.4 912.3,843.4 926.2,844.3 927.8,842.4ZM1862.8,468.1 1867.3,457.5 1867.2,457.4 1863.7,455.6 1856.2,457.3 1853.9,463.1 1860,468.6ZM837,321.8 832.2,313.2 833.5,309.5 847.1,305.3 847.5,305.6 849.1,309 845.9,319.6ZM1286,730.3 1272.7,734.9 1273.7,743 1288.3,747.4 1288.9,746.8ZM1773.2,622.1 1781,623.2 1778.2,611.3 1773.6,609.7 1769.2,613ZM762.2,334.5 755.9,328.3 756.3,320 768.1,314.5 771.9,329.2ZM1027.6,397.1 1009.1,387.3 1007.7,388.8 1008.6,402.3 1023.2,402.2ZM1845.8,473.6 1841.5,473.1 1834.1,480.3 1837.2,485.5 1842,487.4 1848.5,476.7ZM1629.7,612.5 1630.6,623.9 1639.2,623.6 1638.7,612.9 1630.2,612.1ZM1779.1,659.1 1773.1,665.5 1775,667 1778,664 1779.9,659.4ZM1758.6,693.1 1756.9,697.6 1759.2,701.9 1765.6,701.2 1765,700 1764.8,694.6 1765.5,690.8ZM1516,520.5 1515.5,533.6 1518,535.3 1521,535.3 1528.6,527.5 1528.8,525.5 1520.3,519.1ZM1205.6,445.3 1212.9,458 1211.1,461.1 1196.9,460.2 1197.9,448.5ZM1800.1,605.1 1799.7,605.6 1804.1,613.8 1805.5,607.7 1806.9,603.5ZM1491.5,335.5 1494.6,324.4 1502.6,324 1502.7,324.1 1502.9,333 1492.6,337.1ZM1502.6,324 1502.7,324.1 1508,322.9 1506,323 1502,321.8ZM1643.3,785 1634.5,780 1632.8,780.4 1631.6,792.6 1632.5,794.4 1633.4,794.8 1643.3,786.7ZM1160.9,313.5 1151.9,317.7 1140.9,310.2 1140.7,304.5 1156.6,301.9ZM1682.9,719.2 1682.7,727 1692.7,731.3 1696.7,724.2 1686.6,717.7ZM1594.1,848.7 1598.4,843 1606,844.4 1608.8,850.5 1607.4,853.7 1597.8,854.9 1594.2,850ZM1713.2,629.5 1704.6,631.7 1704.1,633.2 1711,641 1716.4,638.7 1717.6,634.3ZM851.2,325.8 860.9,321.4 865.3,326.7 861.5,337.3 854.4,337.1 849.8,331.3ZM1420.5,598.7 1432.2,607.5 1434.7,606.3 1435.6,594.7 1426.7,593.5ZM1354.3,410.8 1344.6,407.2 1349.7,394.1 1358.9,393.7 1361,395.9 1354.3,410.8ZM1239.2,369.8 1235.3,370.8 1231.1,361.7 1235.9,355 1243.6,358.9ZM1488.3,603.7 1488.3,612.4 1482.8,614.1 1477,609.9 1480.4,601.7ZM1442.3,461.5 1449,456.8 1456.5,465.6 1456.3,466.5 1444,471.3 1443.1,470.6ZM1646.1,701.9 1634.9,707.1 1634.5,708.1 1637.7,714.1 1646.9,715.5 1650.1,709.5ZM1354.9,432.9 1349.1,434.6 1347.3,439.5 1354.4,446.9 1356.5,446.7 1362.7,438ZM1543.5,378.4 1538.4,387.7 1531.5,385.8 1529.8,376.6 1531.8,374.4ZM1178.1,806.1 1193.2,801.2 1197.9,812.9 1195.8,815.5 1182.2,814.8 1178.9,811.6ZM1257.7,313.7 1246.4,315.5 1244.6,319.4 1249.2,324.9 1258.6,325.1 1259.9,323ZM1078.5,770.4 1080.8,765.7 1089.2,762 1094.9,775 1091.8,779.5 1081.3,777ZM1528.2,331.4 1528.8,341.6 1531.3,342.2 1534.2,341.1 1530,334 1528.7,331.1ZM833,713.1 848.2,718.8 849.3,706.8 837.3,701.6 831.7,708.9ZM1181.5,311.6 1189,299 1187.9,297.6 1186.7,297.7 1180,295 1174.1,296.8 1171.6,296.6 1173.2,307.2ZM1339.8,838 1333.7,852.2 1335.3,855.2 1341.6,855.5 1348.8,848.1 1347.5,841.8ZM1588.4,541.6 1585.6,550 1578.1,552.4 1577.3,542.3 1588.1,541.1ZM1585.2,628.3 1583.6,641.5 1575,640 1572.4,635.3 1574,628.7 1580.6,626.7ZM1522.3,715.5 1532.1,715.4 1533.4,712.6 1528.9,702.7 1524.9,703.5 1520.4,709.2ZM1073.5,541.1 1061.6,545.5 1065,556 1070.6,558 1075.8,553.1ZM1028.6,419.5 1015.5,431.1 1010.3,417.4 1011.2,415.5 1022.2,412.5ZM1773.1,665.5 1768.6,665.2 1769.6,675.6 1770,674 1773.7,668.4 1775,667ZM1084.8,699.3 1095.2,708.9 1099.9,708 1105.2,701.7 1104.1,691.9 1102.5,690.5 1100.3,690.1 1085.1,696.2ZM1596.8,780 1596.8,780.1 1602.1,789.5 1608.3,790.2 1612.9,782.2 1611.7,780 1602.3,777.3ZM1554.3,678.3 1545.5,678.7 1544.9,679.1 1546.6,688.5 1554.4,690.9 1557.5,681.9ZM995.8,405.8 998.1,420 1010.3,417.4 1011.2,415.5 1007,404.4ZM1835.4,463.8 1845.6,461.1 1845.2,454.6 1837.3,450.9 1831,457.1ZM1303.7,448.5 1297.5,442.9 1286.6,448.2 1291.3,454.7 1302.1,454.7ZM665,562.7 672,564.7 680.7,554.1 666.5,547.3 663.5,550.4 663.7,551.3 664,558 664,558.5ZM1797.3,466.4 1801.2,475.6 1808.3,474.4 1812.1,467.1 1811.3,465.5ZM1753.9,534 1751.3,533 1742.9,539.6 1743.8,542.1 1750.7,544.2 1756.4,539.1ZM1674.2,570.4 1682.1,564.5 1684.4,565.6 1687.4,576.3 1685.2,578.7 1676.1,576.5ZM1752.6,520.2 1763,526.1 1753.9,534 1751.3,533 1746.9,525.1 1747.2,524.1ZM1572.4,429.5 1574.6,425.3 1570.1,419.4 1561.5,420.6 1566,430.4ZM1511.3,339.7 1512.8,338.8 1514.1,336.2 1511,322.7 1508,322.9 1502.7,324.1 1502.9,333ZM1586.4,772.1 1579.7,783.8 1572.8,776.9 1574.7,770.4 1582.9,769.8ZM782.1,660 767.5,655.7 767.4,653.2 776.3,644.2 784.8,646.7ZM1731.9,624.9 1742.1,627.2 1739.3,635 1732.9,634.9 1731.4,625.6ZM1794.7,441.3 1795.5,439.8 1792,440.8ZM1699.6,771 1703,770.7 1706.2,763.4 1699.1,754.7 1695.1,762ZM712.5,473.7 727.9,476.6 723.7,457.7 719.3,455.8 714.1,456.7ZM1073.5,644.5 1084.7,650.1 1088.1,647.6 1087.8,635.2 1082.2,631.7 1073.3,643.9ZM857.4,300.9 853,298 846,300 845.5,299.5 847.1,305.3 847.5,305.6ZM863,298.3 861.5,296.2 860,299.7ZM1566.7,539 1568.7,525.1 1570.4,525 1580.5,530.2 1574.4,539.8 1567.6,540ZM1557.4,353.4 1552.2,352.1 1550.9,352.4 1547.3,362.9 1556.1,364.5 1556.8,363.7 1556,362 1559.3,355.4ZM1408.4,375.1 1405.4,378.9 1407.7,387 1414.3,388.7 1418.1,380.9 1409.8,375.1ZM1102.7,588.6 1103.1,573 1103.2,573 1110.5,573.7 1116.1,590.4ZM1603.9,818.3 1607.9,828.3 1619.1,824.3 1620.5,820.1 1620.2,819.3 1615.2,815.7ZM1807.4,503.3 1813.4,516.5 1810.6,518.9 1806.8,519.3 1801.3,514 1803.7,505.8 1806.4,503.1ZM703.5,439.2 702.4,432.4 708.2,425 718.5,427.7 722.4,436.9 704.8,440.3Z"/>
<path fill="#e9e6db" d="M1358.1,556.5 1362.4,560.4 1358,566.8 1346.6,568.1 1343.2,564.6 1343.9,557.4ZM1097.3,598.7 1095.7,601.7 1080.3,604.1 1080,591 1091.1,589 1096.8,593.3ZM866.8,728.5 857.1,736.2 864.1,749.4 876.8,748.3 879.1,731.5ZM1076.9,430.8 1089.6,420.6 1096.7,438.5 1096.6,438.5 1089.6,440.1ZM1431.1,774.1 1428.4,781.8 1418.1,782 1419.4,766.4 1420.1,765.3 1422.7,765.4ZM1091.2,511.1 1097,513.3 1111.7,504.5 1113.1,499.7 1105.2,493.9 1096.2,494.7 1090.7,499.9ZM1082,794.6 1093.5,792.8 1094.4,789.7 1091.8,779.5 1081.3,777 1076.2,784.3ZM1062.5,855 1053,863.1 1057.4,868.9 1058.6,865.5 1062,859 1065.2,856.6ZM777.7,278.1 781.2,275.7 781.4,275 780,270 778,259 769,265 767.7,269ZM837,321.8 832.2,313.2 816.7,319.1 816.7,319.3 823.4,330.6 826,331.5 835.6,326.3ZM1115.3,815.2 1105.2,811.3 1112.6,798.3 1113.7,797.8 1119.4,800.2 1120.8,811.5ZM1504.3,398 1498.2,401.4 1499.3,412.7 1502,414.5 1509.4,411.8ZM1796.9,466.2 1791.2,466.9 1786.6,465.1 1783.7,461.5 1784.7,454.6 1790.4,451.9 1799.2,457.4ZM899.6,841.1 891.2,833.8 888.3,833.8 884.6,837.3 892,841 899.1,842.8ZM1838.4,499 1843.8,505.8 1845.8,505.7 1852.4,497.9 1851.4,492.6 1843.4,490.1ZM1631.7,535 1633.3,529.6 1630.3,531.2 1623.3,535.8 1624.6,536.5ZM1629.8,522.8 1621.3,525 1619.9,526.5 1621.7,532.1 1622.6,531.2 1626.8,526.3 1630.3,523.3ZM736.7,300.3 732,306 728.6,307.3 732.4,317.5 741.5,317.9 746.5,314.5 747.3,305.5ZM1351.1,310.4 1336.4,312 1334.6,315.5 1335.6,319.8 1343.1,325.8 1354.1,322.8ZM1533.7,488.9 1532.8,478.7 1539.4,476.1 1547.2,481.9 1543.7,489.5ZM1531.3,342.2 1537.3,351.7 1528.6,356.4 1526.3,356.3 1523.8,353.5 1525.2,343.9 1528.8,341.6ZM1762.5,574.5 1762.9,574.9 1776.8,566.2 1773.1,559.4 1767.8,556.8 1761.5,562.2ZM1691.2,590.2 1685.6,584.4 1685.2,578.7 1687.4,576.3 1695.3,575.1 1700.8,581.1 1699.1,584.9ZM1139.9,389.8 1124.2,385.1 1122.7,395.8 1128.3,401.5 1142.9,395.6ZM1012.9,607.7 1019.7,596.9 1019.2,595.5 1008.6,590.2 1002.4,598.1 1004.7,606.5ZM1556.7,417.6 1568.4,405.8 1571.9,407.2 1573.4,413.6 1570.1,419.4 1561.5,420.6 1556.8,417.8ZM1137.6,558.8 1128.6,552.5 1129.5,541.8 1142.1,544.5ZM1005.4,499.6 1012.9,508.2 1016.9,509.1 1021,498.4 1015.1,489.3 1008.3,489.5ZM1036.6,376.2 1027,380.4 1028.4,396.8 1032.1,397.6 1039.2,394.3 1044.3,381.2ZM1011,771.3 1006.8,774.1 995.6,768.3 997.3,759.9 1002,756.7 1010.5,761.4ZM1559.5,633.5 1564.9,638.3 1572.4,635.3 1574,628.7 1570,626.3 1561.4,628.7ZM1052.7,328.5 1067,333.8 1072.9,325.9 1066.5,316.7 1055.5,316 1052.3,318.2 1052.1,327.4ZM1177.9,805.8 1165.3,806.3 1158.3,816.1 1170.9,819.6 1178.9,811.6 1178.1,806.1ZM1346.4,871.9 1355.4,876.9 1359.7,876.1 1364.1,865.7 1363.4,862.9 1359.5,859.2 1348.4,863.9ZM913.1,448.5 898.5,442.7 897.7,440.2 902.6,430.2 915.2,433.6ZM1339.9,804.1 1342.6,797.2 1339.2,788.7 1324.2,792.3 1326.5,798.6 1338.7,804.3ZM1242,556.2 1238.5,563.2 1243.6,569.5 1251.8,571.5 1255.6,560.5 1254.1,556.9ZM1801.9,494.9 1801.8,497.1 1806.4,503.1 1807.4,503.3 1811.3,501.7 1816.7,492.2 1810.2,486.5ZM1482.8,562.4 1484.2,566.3 1496.6,567.6 1498.8,560.3 1491.8,555.1 1485,557.2ZM1243.9,744.6 1245.8,735.8 1238.2,731.2 1230,734.3 1227.8,741.8 1237.2,749.5ZM1638.7,759.8 1631.7,750.8 1629.8,750.8 1625.3,754 1623.8,760.9 1631.8,766.6 1633.1,766.3ZM668,489 675.7,480.9 671.9,473.5 665.6,475.1 665.5,477 664.3,483 664,488.7ZM869.5,598.6 867.1,607.6 854.9,610.2 853.3,597.7 860.9,595.1ZM1164,465.3 1156.5,458.8 1164.1,445.1 1175.4,454.5 1171.7,464ZM1115.5,516.9 1121,518.8 1131.3,510.8 1129.1,504.7 1116.8,498.4 1113.1,499.7 1111.7,504.5ZM1490.5,646.1 1492.5,629.7 1493.8,629.1 1500.6,632.2 1503.5,642.1 1501.5,645ZM666.5,547.3 666,541 660.2,537.9 662,543 663.5,550.4ZM1653,573.4 1663,570.9 1658.1,559 1652,561.1 1651,562.8 1651.7,572.6ZM677.8,606.6 673.4,597.7 667.4,596.2 663.8,597.8 670,604 673.2,609.5 673.8,611.6ZM1031.4,419.9 1040.1,414 1046.9,414.6 1049.8,427.2 1047.8,430.6 1036.6,434 1035.9,433.8ZM1718,621.3 1720.6,615.2 1726.9,614.5 1731.7,617.1 1731.9,624.9 1731.4,625.6 1724.4,627.7ZM1604.8,439.8 1612.5,434 1612.9,431.2 1605,426.5 1598.6,428.1 1597.1,433.3 1601.8,439.4ZM825.4,800.5 821.1,797.9 822,799 823.3,805.3ZM877.7,273.3 879.6,272.8 878,266 871,261 870.8,268ZM1306.7,566.6 1300.4,561 1300.3,554.2 1313,551.5 1316.5,558.4ZM1354.6,782.6 1367.6,780 1371,772.6 1359.6,766.7 1356.7,768.3 1352.5,781ZM998.7,299.9 1009.7,313.3 1012.5,313.1 1016.7,309.1 1017.6,295.8 1017.5,295.7 1016.8,296.2 1010,300 1002.6,298.5 1000.1,297.7ZM1417.7,438.3 1427.4,428.8 1433.5,440.1 1432.7,443.2 1419.6,443.3ZM1277,633.2 1267.5,631.9 1260,640.4 1269.2,649.6 1275.3,646.4ZM1561.5,828.9 1559.3,827.4 1554.9,817.9 1557,811.9 1566.4,811.8 1569.6,817.5 1565.5,826.8 1562.3,828.8ZM1124.3,763 1127.3,763.1 1133.4,757.3 1130.2,745.3 1122.6,742.1 1115.3,748.2 1115.5,755.6ZM1709.4,527.6 1718.6,530.4 1723,528.2 1724.3,518.8 1720.6,514.7 1714.6,514.1 1711.8,515.8ZM1538.1,351.8 1542.6,363.7 1544.9,364.4 1547.3,362.9 1550.9,352.4 1550,351.8 1542,351 1541.1,350ZM1411.7,633 1414.2,636 1426,632.7 1427.2,630.5 1419.7,622.7 1413.8,624.2ZM1580.5,530.2 1582.4,529.9 1586.5,523.3 1584.6,519.5 1576.9,517.9 1570.4,525ZM1747.5,591.1 1740.5,592.3 1734.8,589.2 1735.2,581.5 1735.6,581 1747.8,580.9 1750.8,586.2ZM1651.8,618.5 1651.1,619.4 1653.3,632.6 1662.9,631 1663.3,621.5 1661.4,619.3ZM979,434.2 982.3,438.9 974.2,451.8 961.8,453.3 960.9,451.9 962.2,437.3ZM1597.6,744.7 1598,748.9 1593.2,758 1586.8,756.3 1584,746.6 1593.1,742.2ZM941.6,333.8 938.1,346.2 931.5,347 924.2,331.1 929.3,326.4ZM703.5,439.2 702.4,432.4 690.3,425.9 681.2,430.1 681.3,440.2 692.3,444.6ZM1615.9,768.1 1625.8,776 1631.8,766.6 1623.8,760.9 1617.7,764.2ZM1471.8,490.5 1462.4,488 1456.9,497.8 1468.7,501.2ZM1757.4,661.5 1754.1,650.8 1751.4,649.7 1745.2,651.8 1743.4,654.3 1744.1,660.6 1751.9,664.8ZM1051.4,360.1 1057.1,358.7 1066.2,348.3 1066.2,346.6 1051.2,342 1045.1,346.2 1045,351.2ZM1648.9,677.2 1661,675.5 1664.1,670.4 1659.1,665.8 1652.2,667 1647.8,674.4ZM1239.1,392.5 1231.4,392.2 1226.5,401.3 1236,409.4 1236.1,409.4 1242.6,403.1ZM1540.3,408.7 1546.5,415.4 1554.8,416.3 1554.2,401.6 1547.1,401ZM1843.3,565.6 1839.5,562.8 1838.4,555.5 1841.6,550.2 1849.5,552.2 1853.1,556.8 1851.4,563.9ZM1539.2,757.9 1540.7,767.8 1545.1,770.3 1547.5,769.7 1551.2,762.5 1546.8,752.7ZM1694.2,700.7 1688.9,699.9 1685.1,691.5 1688.9,685.6 1691.5,685.2 1700.2,690.4 1701.4,696.2ZM851.2,325.8 860.9,321.4 861.4,315.6 849.1,309 845.9,319.6ZM1791.7,571.4 1782.1,565.7 1787.1,558 1795.5,562.1 1795,569.9ZM1180.9,839.5 1168.6,845.1 1167.2,857.1 1169.2,858.8 1183.6,857.1 1184.5,855.4 1181.4,839.8ZM874.7,586.5 882,580.1 878.8,571.9 864.2,569.6 860.8,579.5 861.8,580.9ZM778.5,718.6 780.9,729.2 795.5,735.9 799.9,727.9 798.3,717.2 794.9,714 778.8,718.1ZM1403.4,786.8 1405.7,794.8 1419.1,795.1 1417.6,782.4 1407.8,781.8ZM1376.6,844.4 1376.6,851.1 1377.3,852.1 1387.7,851.8 1390.7,838.5 1384.6,836.9ZM1435,721.8 1450,722.1 1451.8,724.5 1446.7,735 1439.2,734.2 1432.4,727.1ZM692.3,455.1 680.7,459.5 677.6,444.2 681.3,440.2 692.3,444.6ZM1053.3,561.3 1065,556 1070.6,558 1071.7,565.2 1066.6,573 1053.5,565.7ZM1512.5,412 1518.4,412 1524.3,406.5 1524,397.2 1515.2,397.1ZM984.3,461.3 979.5,474.9 979.1,475 964.3,467.3 960.8,457.8 961.8,453.3 974.2,451.8ZM1848.5,476.7 1854.4,477.8 1853,491.1 1851.4,492.6 1843.4,490.1 1842,487.4ZM1762.5,574.5 1761.5,562.2 1752.9,559.6 1749.8,563.1 1752.7,573.2ZM1679.8,524.6 1687.5,528.9 1689,528.6 1691.9,521.3 1687.7,516 1683.5,517.5 1681,518.1ZM830.7,453.5 827.2,441.2 834.6,432.9 848.8,443.4 849.9,449.9 842.3,456.7 837.3,457.2ZM1611.9,608.4 1612,608.3 1609.2,597.9 1606.3,597.8 1600.9,604.1 1601.9,610.9ZM1115.9,612.8 1124,602.1 1131.6,602.8 1134.2,606.7 1128.2,619.9 1117.8,617.3ZM1544.1,541.8 1543.6,541 1536.1,538.1 1529.6,543.6 1528.9,547.9 1529.5,549.2 1538.5,553.5 1543.2,551.6ZM1824.1,482.5 1833.5,480.1 1834.1,480.3 1837.2,485.5 1830.8,490.9 1823.6,487.3ZM1720,680 1716.8,689.9 1719.8,692.5 1730.8,691.4 1727.9,682.4ZM1588.5,588.7 1596.2,592.3 1599.6,591.2 1602.4,585.3 1594.8,578.1 1593.9,578.1 1588.2,587.5ZM1854,527.8 1851.1,537.3 1845.7,537.3 1843.1,534.6 1843.1,525.1 1845.1,522.2 1849.9,521.6ZM1798.2,531 1796.8,532.9 1793.4,533.5 1782.1,528.7 1780.7,523 1781.3,521.8 1792.8,519.2 1798.2,528.5ZM1657.9,746 1651.6,742.1 1651.5,739.5 1657,732.2 1659.5,731.7 1667.1,734.9 1667.6,736.4 1664.4,744.3ZM1139.3,512.9 1149.4,500 1150.7,499.9 1157.3,507.7 1149.1,520.3ZM1417.2,808.7 1422.8,798.9 1425.2,798.6 1437.9,811.3 1425.4,818.3ZM1245.6,541.7 1235.8,534.3 1238,527.1 1254.4,525.1 1255.3,534.8 1248,541.6ZM1641.4,730.6 1635.4,737.3 1627.8,735.8 1624.8,730 1629.6,723.7 1633.5,722.6 1641.4,730.6ZM1651.8,618.5 1661.4,619.3 1664.1,609.7 1654.3,604.2 1651.5,617.4ZM1732.3,721.8 1733.5,716.7 1743.5,713.4 1744.8,723.1 1738.6,725.6 1732.6,722.5ZM1355.5,835.5 1356.7,835.6 1366,827.1 1366.1,824.8 1356,820.4 1350.8,827.9ZM675.5,576.8 672,564.7 665,562.7 663.9,563.2 663.9,564.4 665,570 662.9,577.5 662.7,579.2 669.1,580.1ZM806.5,626 806.7,640.8 805.9,641.8 791.9,641.8 789.9,634.1 795.5,625ZM1012.2,567 1013.4,578.9 1019.4,580 1026.8,573.9 1026,559.3 1024.5,559.3ZM986.2,776.3 985,776.6 979.4,773.4 978.2,758.3 982.6,753.1 997.3,759.9 995.6,768.3ZM1544.9,509.1 1534.9,513.5 1535.6,521.2 1542,524.2 1548.5,518.8ZM1631.7,750.8 1629.8,750.8 1624.5,742 1627.8,735.8 1635.4,737.3 1637.5,744.7ZM1611.9,805 1615.2,815.7 1603.9,818.3 1603.5,818 1605.9,805.1 1609.8,803.9ZM1549.3,646.9 1553.5,645.2 1556.3,634.7 1548.7,631.1 1544.8,636.7ZM710.7,315.1 710.9,316.1 728.6,321.6 732.4,317.5 728.6,307.3 724,309 715,311.7 713.1,312ZM1585.2,707.6 1582.8,702.4 1587.1,695.8 1591.4,695.6 1596.4,702 1593.5,706.5 1586.7,708.2ZM1240.2,551.4 1231.3,549.6 1227,538.5 1235.8,534.3 1245.6,541.7ZM1447.1,680.1 1458.6,677.6 1461.6,679.5 1462,681.7 1457.6,689.4 1450.7,689.2 1445.5,683.8ZM1437.9,811.3 1425.2,798.6 1430.4,793.9 1438.5,795 1444.2,803.9 1438.9,811.3ZM1826.2,418.3 1826,418 1825.9,418.4ZM1152.7,557.2 1157.9,563.6 1166.7,559.4 1165.9,544.4 1165.7,544.2 1154.1,547.2ZM781.6,333.7 785.2,332.6 793.4,338.4 793.8,348.8 782,357.8 774,352.5 773.5,349.2ZM1747.8,752 1744.1,756.4 1744.3,758 1750,758 1753.1,752.5 1753.2,752.5ZM1687.8,616.2 1677.3,615.8 1674.7,620 1677.5,629.4 1689.3,627ZM788.1,322 785.2,332.6 793.4,338.4 803.7,335 806.6,321.7 796.8,315.7ZM1356.5,446.7 1354.4,446.9 1349.5,452.6 1350.8,459.9 1357,461.8 1364.2,454.9ZM886.2,406.1 885.2,405.5 885.9,389.6 895.7,387.2 905.7,395.3 903.5,398.5ZM1731.9,624.9 1742.1,627.2 1743,626.7 1744.8,623.2 1742.9,614.5 1740.9,612.8 1731.7,617.1ZM1117,910.8 1111.7,904.8 1111.9,907.4 1112,913 1116.2,913ZM1735.4,529 1727.7,530.9 1723,528.2 1724.3,518.8 1734.2,517.6ZM1493.3,532.9 1501.1,526.1 1505.8,533.2 1498.4,541 1493,537.2ZM765.9,427.1 749.2,436.8 749.4,442.6 763.4,445.2 770,433.5ZM1719,661.5 1719.1,651.7 1708.4,648.1 1704.2,650.2 1703.4,653.4 1708.7,663.8ZM869.5,702.1 870.3,687.2 859.8,681.7 852,692.3 855.8,701.9 867.9,705.1ZM1731.7,617.1 1740.9,612.8 1740.9,606.3 1728.9,601.8 1726.9,614.5ZM1350.7,500.8 1345.9,499.2 1339.9,486.2 1343,484.2 1355.3,487.1 1356.6,489.5 1354.9,498.5ZM1657.8,791.1 1658.4,790.4 1657.4,781 1647.2,780.3 1643.3,785 1643.3,786.7 1648.8,792.4ZM1418.1,782 1417.6,782.4 1419.1,795.1 1422.8,798.9 1425.2,798.6 1430.4,793.9 1430.9,785 1428.4,781.8ZM1756.1,460.6 1756.1,460.5 1753.6,461.1 1749,465.7 1752,470.2ZM1306.4,715.3 1306.2,716.6 1310.9,730.6 1317.7,731.4 1325.2,719.9 1312.9,713.9ZM1911.9,479.8 1911.5,481.4 1917.1,479.1ZM1084.9,483.4 1081.2,473.2 1072,476.3 1071,486.4 1079.3,489.5ZM1062.9,697.3 1063.9,694.2 1072.6,688.6 1081.7,691.1 1085.1,696.2 1084.8,699.3 1078.3,705.4ZM1178.1,529.3 1164.7,531.6 1165.7,544.2 1165.9,544.4 1167.6,544.6 1182.7,538ZM1863.4,546.7 1859.2,555.2 1866.1,559.9 1870,556 1871.1,555.6 1872.3,551 1868.1,545.4ZM1430.3,695.1 1425.6,702.6 1418,698.7 1422.1,688 1428.1,689.9ZM862.2,797.3 868.9,783.1 866.8,778.5 852.9,782.3 852.2,789.5 861.3,797.5ZM1128.8,620.7 1128.2,619.9 1117.8,617.3 1112.4,624.6 1117.3,634.2 1127.7,633.8ZM1454.7,553.1 1445.9,558.9 1445.7,559.3 1453,568.2 1459.6,567.9 1462.5,561.8ZM1472.9,832.2 1473.1,837.8 1477.9,842.7 1490.4,840.5 1491.1,831.2 1490.6,830.2 1473.2,831.9ZM1580.1,879.9 1576.7,879.8 1573.8,877.6 1571.4,870.1 1571.6,868.9 1578,862.9 1583.6,862.6 1589,866.6 1589.7,872.4ZM1786.5,603.6 1791.5,594.2 1787.2,585.7 1778.3,588.8 1778.7,598.5ZM1350.7,500.8 1350.9,509.4 1343.3,515 1332.3,507.6 1332.1,507.1 1345.9,499.2ZM671.9,473.5 673.4,464.9 667.2,461.3 666,461.8 665.7,463 666,470 665.6,475.1ZM1454.7,553.1 1462.5,561.8 1470.4,558.2 1471.3,552 1464.4,546.1 1455.4,550.7ZM1446.6,821.3 1449.3,820.6 1461.4,825.8 1462.6,828.3 1456.3,834.5 1452.7,834.3ZM1755.4,634.2 1757.6,628.3 1753.6,623.6 1744.8,623.2 1743,626.7 1752.5,635.4ZM1709.7,676.1 1718.6,677.5 1720,680 1716.8,689.9 1713.8,690.2 1706.3,683.3 1706.4,680.2ZM1308.5,576.5 1303.3,593.6 1317.5,595.7 1319.4,581.4 1316.8,577.8ZM1533,489.7 1525.3,490.4 1520.1,483.7 1521.2,478.9 1523.6,476.6 1527.6,476 1532.8,478.7 1533.7,488.9ZM1094.9,775 1089.2,762 1092.5,756.7 1095,755.7 1104.6,761.1 1105.3,771.9ZM1396.5,725.3 1384.1,719 1383.6,714.6 1387.1,710.2 1395,710.9 1398.7,719.3ZM1101.3,406.7 1111.3,401.5 1118.3,409.8 1116.1,416.6 1107.8,419.8 1101.3,415.1ZM1853,491.1 1851.4,492.6 1852.4,497.9 1861,502.3 1863.6,492.7 1861.1,490.1ZM1094.4,789.7 1107.9,784.2 1108.3,774.3 1105.3,771.9 1094.9,775 1091.8,779.5ZM1370.4,801.5 1371,801.6 1379.9,809.8 1379.9,811.6 1371.4,820.7 1369.6,821 1364.6,809ZM1388.5,887 1370,886.3 1369.4,888.3 1370.3,889.5 1373.1,889.8 1382,891 1387.1,890.9ZM1399.1,767.8 1402.3,758.1 1393.9,751.1 1388.3,750.8 1385.6,759.2 1391.1,768.1 1396.5,768.8ZM1839.1,515.4 1845.1,522.2 1843.1,525.1 1830.8,527.3 1827.7,523.3 1827.9,522.6ZM1448.8,520.4 1445.6,529.9 1437.2,530.4 1431.5,522.2 1435.5,516.1 1441.3,513.9 1447.7,517.5ZM1339.7,424.1 1332.6,435.6 1336.4,444.4 1347.3,439.5 1349.1,434.6 1340.4,424.3ZM1826.9,550.3 1821.1,551.5 1814.8,548 1821.8,538.4 1829.4,539.1 1831.1,543.2ZM1537.6,844.5 1538,844.3 1545.9,833.8 1545.6,828.7 1538.9,826.6 1532.5,830.7 1533.4,840.2ZM1614,745.9 1614.2,749.8 1625.3,754 1629.8,750.8 1624.5,742 1617.2,742.8ZM1037.4,798.1 1035.5,798.2 1030.8,806.5 1032.8,812.1 1043.5,817 1050.8,812.5 1050,809.7ZM1334.2,592.7 1334.8,593.8 1333.8,605.5 1324.8,606.7 1319.1,602.2 1318.6,597.1ZM1578.9,711.5 1570,708.5 1569.6,707.3 1576.1,699.4 1582.8,702.4 1585.2,707.6ZM1205.1,480.8 1206.1,475.8 1212.4,470.8 1219.8,473.8 1225.3,486.4 1225.2,487.3 1210.9,491.3ZM869.5,598.6 867.1,607.6 872.2,615.7 880.1,612.1 881,600.2 873.5,596.7ZM1033.3,560.5 1027.1,558.7 1031,545.1 1041.6,542.7 1049,551.7 1048.8,555.6ZM1693,495.9 1693.1,491.9 1686.6,494.6 1683.2,497.2ZM1587.8,787.9 1594.2,798.5 1579.7,799.9 1579.7,799.9 1580.6,787ZM1608.7,856.9 1617.5,861.4 1621.6,854 1617.3,848.6 1608.8,850.5 1607.4,853.7ZM1572.5,452.7 1574.1,443.9 1573.6,443.1 1563.7,440.2 1556.1,450.1 1556.5,451.8 1566.3,455.4ZM1414.1,756.1 1420.1,765.3 1422.7,765.4 1431,759.4 1425.2,746.3ZM1625.6,867.9 1622.7,878.4 1625,881.6 1634.7,879.2 1635.5,877.5 1634,871 1633.9,866.8 1632.3,865.4ZM1611.9,805 1621.9,803.4 1623.8,798.9 1618.5,793.3 1610.9,794 1609.8,803.9ZM1640.6,624.4 1651.1,619.4 1653.3,632.6 1648.5,636.9 1642.4,631.7ZM1715.2,622.9 1705.1,618.9 1702.8,620.8 1701.8,624.2 1704.6,631.7 1713.2,629.5ZM1629.3,635.2 1621,637.5 1622.5,646.2 1630.7,649.8 1634,647.9 1634.9,644.5 1632.3,636.9ZM1883.2,559 1883.1,559.1 1888,564 1894.7,560.7 1894.2,559.5ZM1686.6,717.7 1688.7,713.8 1697.7,710.8 1702.7,713.4 1701.8,722.3 1696.7,724.2ZM837.8,648.8 831.5,664.6 831.5,664.7 844.3,668.5 850.7,658.8 845.2,650.4ZM1458.2,751.1 1448.5,748.6 1448.4,748.5 1449.9,740.6 1462.2,737.3 1462.7,737.7 1464.6,746.3ZM1264.5,687.8 1269.6,701.5 1272.4,701.6 1280.4,694.2 1281.1,690.9 1279.1,688.5 1268,685.6ZM1223.9,800.6 1218.6,795.9 1207.6,795.7 1208.2,811.9 1208.4,812.1 1220.3,809.5ZM1849.5,552.2 1855,541.7 1863.4,546.7 1859.2,555.2 1853.1,556.8ZM1708.7,775.2 1703,770.7 1699.6,771 1694.3,774.8 1694.4,783.3 1698.1,785.7 1705.3,781.4ZM1473.8,410.2 1482.9,418.7 1485,418.4 1489.3,412.4 1487.2,405.7 1478.3,402.7ZM1706.9,494.4 1716.4,492.8 1718.6,485.8 1717.5,483.8 1717,484 1706.4,487 1704.9,487.5ZM1810,485.5 1812.1,481.1 1808.3,474.4 1801.2,475.6 1799.3,480.5 1799.8,481.5ZM1484.6,508.7 1488.6,508.1 1494.8,512.8 1493.5,520.4 1488.7,521.2 1484.3,519 1482.8,511.7ZM1472.4,438.3 1474.8,426.5 1472.2,425.4 1462.6,427.8 1465.6,437.8ZM1344.8,814.3 1355.3,818.4 1359.6,810 1354.3,806.2 1344.2,809.1ZM1419.8,413.7 1423.5,413.9 1428.2,410.3 1429.7,400.9 1423.7,397.1 1415.1,405.4ZM1562.6,435.5 1566,430.4 1572.4,429.5 1576.2,434.6 1573.6,443.1 1563.7,440.2ZM1405.2,772.3 1419.4,766.4 1418.1,782 1417.6,782.4 1407.8,781.8ZM896.1,525.3 897.1,533.5 894,536.2 877.9,531.4 876.1,527.1 879.5,521.8 889.3,519ZM1433.7,676.6 1421.9,673.5 1421.8,687.7 1422.1,688 1428.1,689.9 1435.5,683.7ZM1114.5,536.4 1097.3,542.8 1109.6,554.6 1115.1,554.2 1117.8,537.7ZM1123.4,908.2 1129.9,912.4 1131,912.2 1135.3,913 1135.9,913 1141.8,907.2 1141,902.4 1128.8,895.3ZM1354.5,613.5 1338,620.5 1335.9,618.8 1337.2,608.6 1345.2,606.3 1354.8,612.3ZM969.3,601.5 973.6,611.8 976.3,613.4 986.4,608.3 988.3,597.1 975.3,593ZM1812.2,455.4 1823.7,454.8 1826.1,456.6 1821.6,471 1821.2,471.2 1812.1,467.1 1811.3,465.5ZM1537.2,847.2 1545,856.2 1538.6,866.4 1527.6,857.4 1527.3,856.5ZM1395.1,836.7 1390.7,838.5 1387.7,851.8 1390.7,854.7 1397.1,854.9 1402.8,845.9 1395.6,836.9ZM1611.5,753.8 1617.7,764.2 1623.8,760.9 1625.3,754 1614.2,749.8ZM1407.9,611.9 1404.9,606.9 1407.9,596.1 1412.7,594.6 1419,598.8 1416.5,610.5ZM1028.6,419.5 1031.4,419.9 1035.9,433.8 1025.2,438.9 1015.5,431.2 1015.5,431.1ZM1001.4,666.5 1004.8,678.2 1011.7,676.4 1017.2,666 1004.8,660.8ZM791,425.2 807.1,421.8 807.6,409.6 805.9,406.9 792,407 788.9,422.1ZM1907.8,460.5 1911.4,466.4 1907.3,475.1 1897.6,470.2 1898.1,466.3ZM1074.3,582.5 1067.2,577 1052.6,586.7 1064.5,595.8 1075.2,586.9ZM1379.4,633.3 1388.6,630.6 1396.2,643 1388,646 1378.7,639.7 1378.7,634.2ZM1008.4,349.5 997.6,345.6 998.1,336.8 1004,329.4 1013.9,333.9 1013.9,344.5ZM1223.9,800.6 1220.3,809.5 1225.8,819.5 1226.4,819.7 1232.9,816.9 1235.6,812.2 1233.5,800.4ZM781.4,495.7 785.8,497.2 802.1,491.5 803.8,487.8 802.1,481.4 784.7,478 781.6,479ZM896.2,579.9 889.8,583 890.1,597.8 892.7,599.6 899.4,599.7 906.8,593.5 905.8,585.6ZM1466.8,412.2 1472.2,425.4 1462.6,427.8 1459,426.4 1462.4,413.7 1466.3,412.1ZM1481.3,646.6 1480.6,635.4 1470.7,633 1468.3,634.8 1469.4,645.5 1472.9,648.9ZM914.7,451.1 914.6,452.1 920.5,463.3 928.2,462.4 933.4,454.4 927.7,445.9ZM1743.4,654.3 1732.9,653.8 1731.8,651.9 1733,644.6 1740.2,643.5 1745.2,651.8ZM1452.4,386.7 1442.5,376 1434.8,384.4 1441.2,393.9 1446.9,392.4ZM981.2,420.4 978.3,425 979,434.2 982.3,438.9 988.7,440 998.4,431.6 996.2,422.8ZM1268.7,765.4 1259.2,754.1 1248.4,765 1251.8,770.6 1264.1,773.3ZM1768,500.1 1771.3,502.1 1770,513.1 1766.6,515.7 1760.9,512.1 1760.4,507.4 1767.4,500.3ZM746.2,286.4 749.4,287.5 753.7,284.5 746,283 745.2,283.7ZM1912,435.8 1910.2,439.4 1914.5,447.1 1915.1,447.3 1921,443 1921,440 1920.5,435.1 1920.5,434.9ZM1609.4,888.1 1602.4,894.5 1602.3,900.9 1603.8,902.1 1604.2,902.6 1609.8,905 1616.7,902.8 1612.6,890.1ZM707.3,477.5 693.6,487.2 686.8,485.3 686.3,484.6 690.1,471.2 697.5,468.5ZM1027.6,397.1 1028.4,396.8 1027,380.4 1022.9,378.3 1010.7,380.5 1009.1,387.3ZM1443.3,872.6 1431.1,877.1 1430.4,883.5 1437.8,890.3 1444.8,885.2ZM1579.7,394.7 1569.4,391.9 1566,401.5 1568.4,405.8 1571.9,407.2 1581.3,403.7 1581.4,403.4 1580,402 1581.4,400.6ZM664.2,366.3 671.4,359 666.3,348 655.1,349 656,352 658.5,360.5 659.1,363.1ZM1534.2,398.5 1525.1,396.2 1525.8,390.8 1531.5,385.8 1538.4,387.7 1540.6,391.9ZM1648.2,683.8 1659,687.4 1660.5,692.9 1653.9,697.8 1647.6,697.3 1646.9,696.2 1647.8,684.2ZM1482.8,614.1 1481.1,623 1488,629.2 1492.5,629.7 1493.8,629.1 1497,618.3 1495.1,615.2 1488.3,612.4ZM1791.1,479.7 1790.7,479.2 1782.4,477.9 1777.9,486.5 1782.8,491.2 1786.3,491.3 1787.8,490ZM1791.7,571.4 1787.4,578.5 1787.8,584.7 1799.2,583.9 1803,574.3 1795,569.9ZM964.3,467.3 956,479.6 961.6,487.7 966.3,488.9 979.1,475ZM723.5,538.3 725.6,537.6 735.9,543.2 729.5,558.2 717.8,551.3 717.4,549.9ZM1094.5,320.1 1089.1,308 1080.9,310.3 1081.6,325.6 1085.2,327.5ZM1606.6,741.4 1614,745.9 1617.2,742.8 1616.4,733.4 1610.7,732.7ZM1233.7,850.5 1225.5,845.6 1217.9,848.7 1218.2,857.4 1224.4,862 1225.9,861.8ZM1106.1,349.9 1109.2,351.2 1110.3,353 1110.6,366.3 1106.9,370.6 1097.5,367.6 1098.6,354.8ZM863,298.3 863.6,298.4 874.6,291.2 872.5,284.5 866.9,282.8 863,288 862,294.9 861.5,296.2ZM1430.4,793.9 1430.9,785 1442.8,783.3 1445,785.9 1438.5,795ZM667.2,461.3 666.5,459.5 666,461.8ZM1555.4,590.1 1562,594.5 1562.4,599 1550,605.1 1546.5,602 1546.2,595.1ZM1613.4,566.2 1617.5,574.5 1616.6,577 1607.5,577.1 1602.6,570.8 1602.7,568.5 1607.6,564.3ZM1704.1,633.2 1694.1,640.3 1704.2,650.2 1708.4,648.1 1711,641ZM1096.8,593.3 1091.1,589 1091.3,574.4 1103.1,573 1102.7,588.6ZM1632.5,601.9 1630.2,612.1 1638.7,612.9 1641.6,610.1 1642.4,604.6 1639.5,602ZM1812.9,531.5 1816.4,531.8 1821.8,538.4 1814.8,548 1813.1,548.2 1809.6,546.3 1810.9,532.5ZM1797.8,489.1 1799.8,481.5 1810,485.5 1810.2,486.5 1801.9,494.9ZM1803.7,505.8 1790.1,507.8 1793.5,516.6 1801.3,514ZM1559.8,760.8 1561.2,771.8 1571,766.6 1571,757.6 1570.6,757.4ZM1595.5,763.1 1603.3,764 1608.5,754.9 1598,748.9 1593.2,758ZM1533,489.7 1525.3,490.4 1522.1,496 1529.5,503.9 1533.9,500.1ZM1890.1,547 1886,548 1884.2,546.8 1881.4,550.7 1883.2,559 1894.2,559.5 1894.3,559.2ZM1053.5,565.7 1049.1,571 1052.5,586.7 1052.6,586.7 1067.2,577 1066.6,573ZM1766.6,626 1773.2,622.1 1769.2,613 1766.8,612.7 1762.2,617 1763.6,625.4ZM1207,861.6 1218.2,857.4 1224.4,862 1218.2,873.6 1213.8,873.8ZM1630.2,624.2 1629.3,635.2 1621,637.5 1616.9,635.1 1616.3,631.9 1620.8,623.3ZM1740.9,606.3 1728.9,601.8 1728.4,601.1 1730.1,592.3 1734.8,589.2 1740.5,592.3 1741.7,605.3ZM1613.8,709.4 1609.9,707.2 1609.6,706.3 1611.7,696.7 1622,693.7 1622.1,693.7 1623.3,706.6ZM1366.5,560 1362.4,560.4 1358,566.8 1361.2,578.5 1372.4,574.1ZM1626.5,559.3 1625.4,559.9 1621.2,559.6 1612.8,551 1614.6,547.9 1625,547.1ZM806.7,640.8 820.2,639.6 825.4,644.4 817.5,657.3 814.5,658.4 808.7,655.1 805.9,641.8ZM1528.9,702.7 1530.9,700.6 1531.1,696.3 1525.6,690.5 1516.6,694.8 1524.9,703.5ZM1161.7,313.9 1166.9,323 1180.3,320.3 1183.2,317 1181.5,311.6 1173.2,307.2ZM1378.7,634.2 1378.7,639.7 1374.4,644.7 1360.2,641.6 1363.7,631.8ZM1624.2,717.9 1629.6,723.7 1633.5,722.6 1637.7,714.1 1634.5,708.1 1626.3,708.2ZM1507.6,362.5 1506.7,367.8 1518.5,375.1 1521.2,365.4 1509.7,361.1ZM1050.7,317.6 1032.8,319.9 1031.3,309.1 1041,304.8ZM1439.2,734.2 1435,744.6 1440.1,749.1 1448.4,748.5 1449.9,740.6 1446.7,735ZM1677.3,615.8 1673,605.5 1672.6,605.3 1664.1,609.7 1661.4,619.3 1663.3,621.5 1674.7,620ZM1350.7,500.8 1350.9,509.4 1357.9,514.6 1367,510.8 1367.9,506.9 1366.3,502.7 1354.9,498.5ZM1253.4,853 1252.5,853.9 1240.8,856.2 1234.6,850.4 1241.6,840 1250.4,840.6ZM1767.4,500.3 1760.4,507.4 1753.1,503.7 1752.8,502 1757.5,497.3ZM1479.3,460 1469.7,450.9 1464.7,451.5 1462.4,462.9 1471.6,466.2 1479.2,460.7ZM1061.6,545.5 1065,556 1053.3,561.3 1048.8,555.6 1049,551.7 1058.6,544.3ZM1648.8,792.4 1643.3,786.7 1633.4,794.8 1636.7,799.3 1645.2,799.8ZM996.8,502.7 995.4,515.6 1000.2,517.7 1012.9,508.2 1005.4,499.6ZM1368.8,434.4 1371.6,432.7 1385.2,433.8 1385.6,434.4 1385,439.2 1377,444.1 1370.3,441.6 1367.4,437.2ZM839.8,274 832.6,274.7 828,277.6 824,283 823.4,284.4 832.1,292.3 837.9,290.9 837,283 839.9,274.2ZM1851.4,444.6 1845.2,440.5 1842.9,442.1 1840,446 1838.2,445.6 1837.4,446.2 1837.3,450.9 1845.2,454.6 1851.2,450.4 1852.2,447.3ZM1586.8,756.3 1584,746.6 1578.5,744.8 1572.9,756.8 1581,759.1ZM815.7,302.1 827.6,300.8 833.5,309.5 832.2,313.2 816.7,319.1 815.4,302.4ZM1740.2,643.5 1742.3,638.8 1739.3,635 1732.9,634.9 1729.4,638.7 1729.3,640 1733,644.6ZM1537.1,816.7 1526.8,821.7 1528.7,828.2 1532.5,830.7 1538.9,826.6ZM1420,573.1 1419,582 1414.5,585.1 1406.6,579.4 1407.2,570.5ZM1138.1,560.2 1132.6,565.6 1119.5,564.5 1117.3,556.1 1128.6,552.5 1137.6,558.8ZM807.4,625.4 806.5,626 795.5,625 790.2,614.4 802.6,606.3 809.9,612.6ZM1549.3,646.9 1544.8,636.7 1536.5,636.6 1533.4,643.2 1540.5,650.3 1547.9,648.8ZM711.3,569.5 709.2,562.3 700.6,558 691.4,561.8 690.9,573.5 704.9,574.4ZM875.5,666.4 863.7,668.2 857.4,659.5 865.2,650.4 870,650.1 878.2,663.1ZM738.2,596.6 734.5,608.8 741.9,614.9 747.3,614 750.6,609.5 749.3,599.8ZM844.2,479.5 858,480.1 860.3,468.4 847.5,465.4ZM1457.5,472.2 1453.4,481.1 1461.3,485.1 1468.2,477ZM1743.4,654.3 1732.9,653.8 1730.4,660.5 1736.5,668.5 1744.1,660.6ZM804.1,674.9 793,664.3 797.6,658.1 808.7,655.1 814.5,658.4 812.5,669.6ZM852,692.3 841.6,691.2 840.1,681.1 845.8,674.8 859,679.7 859.8,681.7ZM1651.6,742.1 1651.5,739.5 1641.4,730.6 1635.4,737.3 1637.5,744.7 1646.5,746.1ZM895.6,794.8 886.8,782 879,787.6 878.7,797.9 886.7,800ZM1489.3,412.4 1499.3,412.7 1498.2,401.4 1492,399.8 1487.2,405.7ZM677.6,444.2 681.3,440.2 681.2,430.1 672,423.7 670,425.9 670,426 669.6,431.2 669.9,437.8 667.9,444.2 667.9,445.1ZM1109.6,554.6 1097.3,542.8 1094.3,542.3 1089.2,554.8 1102.7,562ZM1554.2,542.7 1557.7,537.8 1554.5,531.4 1548.6,531.7 1543.6,541 1544.1,541.8ZM1681.4,741.5 1689.7,740.5 1694.6,751.5 1684.4,755.5 1683,754.2ZM1334.9,339.6 1326.5,329.8 1335.6,319.8 1343.1,325.8 1341.3,337ZM747.1,698.6 744.6,703 728.2,704.4 726.2,701.8 728.7,690.7 741.2,685.3 745,688.9ZM1125.7,441.7 1121,434.7 1107.8,433.7 1103.9,437.5 1110.7,450.1 1117.7,451.2ZM668.6,522.2 675.3,516.6 667.9,504 664.2,504.2 657.1,514.5 656.9,515.1 666.2,522.1ZM1435,721.8 1434.9,721.4 1423,711.8 1421.6,712.3 1416.4,722.2 1430.1,728 1432.4,727.1ZM1781.2,474.7 1771.9,472.6 1769.9,477.4 1776.8,486.3 1777.9,486.5 1782.4,477.9ZM779.2,404.4 789.9,404.5 792.2,393.8 784.2,386.9 776.9,396.3ZM685.9,349.5 691,369.8 689.9,371.8 688.8,371.9 671.6,359ZM1706.2,763.4 1712.1,761.2 1714.3,761.8 1715.4,771.1 1711.4,775.4 1708.7,775.2 1703,770.7ZM921.8,331.5 914,343.3 925.1,353 931.5,347 924.2,331.1ZM1107,524.1 1114.5,536.4 1097.3,542.8 1094.3,542.3 1093,540 1093.3,533.5 1102.9,523.7ZM689.9,635.5 692.5,634.8 697.4,627.6 689.9,618 676.9,622.8 676.4,624.4 677,630 677.3,630.9ZM1396.3,875.8 1390,883.5 1389.8,885.9 1395.7,889.4 1402,887 1404.7,888.3 1407.1,880.2ZM1084.3,356.1 1086.6,353.1 1098.6,354.8 1097.5,367.6 1089.6,370.5ZM1807.7,451.6 1795.1,443 1790.4,451.9 1799.2,457.4ZM1743.5,713.4 1733.5,716.7 1731,711 1738,704.5 1742.9,705.2 1745.4,710ZM1562.6,435.5 1566,430.4 1561.5,420.6 1556.8,417.8 1551.7,431.7ZM1238.2,731.2 1237,716.9 1235.8,716.3 1229.4,717.9 1225.4,727.2 1230,734.3ZM1073.5,526.3 1071.2,529.6 1060.9,529.1 1057.1,522.4 1061.4,512.4 1070.4,513.7ZM1830.5,555.8 1826.9,550.3 1821.1,551.5 1821.3,560.5 1826.9,563ZM1907.8,460.3 1904.6,453.3 1895.6,453.6 1893.3,459.6 1898.1,466.3 1907.8,460.5ZM1651.1,645.4 1653.5,654.7 1647.3,660 1642.4,659.6 1640.9,652.4ZM1915.1,447.3 1919.9,455 1921,455.5 1921,443ZM1706,595.8 1699.1,584.9 1691.2,590.2 1690.8,595.1 1705.2,597.1ZM756.1,592.7 760.2,593.6 764.1,607.6 750.6,609.5 749.3,599.8ZM992.7,801.2 981.2,807.1 986.7,817.6 999.9,813.5 999.3,807.3ZM1319.5,746.8 1327.1,749.2 1326.6,762.6 1324.8,764.3 1316.9,761.2 1313.2,749.8ZM1150.7,527.4 1161.7,528.1 1164.7,531.6 1165.7,544.2 1154.1,547.2 1146.4,541.8 1146.6,531.4ZM1463.5,513.4 1455.2,509 1447.7,517.5 1448.8,520.4 1459.2,522.2ZM1577.2,742.6 1570.5,739.9 1570.2,730.4 1572.2,728 1583.4,733.2ZM1003.5,523.1 997.2,536.6 998.5,537.7 1014.6,537.4 1015.2,536.9 1014,526.1ZM819.2,736 816.6,735.9 808.9,744.2 820.4,755.4 828.7,745ZM1486.8,481.8 1502.7,480 1503.2,481.6 1497.6,494.7 1494.7,496.2 1486.6,492.4ZM1753.2,516 1760.9,512.1 1760.4,507.4 1753.1,503.7 1749.2,510.5ZM1414.3,388.7 1415.5,391.8 1423.5,396.6 1428.7,382.9 1426.8,380.5 1423.3,379.4 1418.1,380.9ZM1509.3,343.9 1511.3,339.7 1512.8,338.8 1525.2,343.9 1523.8,353.5 1513.7,353.7ZM750,454.6 760.3,460.3 766.5,451.1 763.4,445.2 749.4,442.6 748.2,444.3ZM1335.6,448.3 1349.5,452.6 1354.4,446.9 1347.3,439.5 1336.4,444.4ZM1867.2,457.4 1870.7,447.6 1864.8,443.9 1861.1,448.5 1863.7,455.6ZM753.1,398.9 755.6,388.2 765.5,383.5 769.2,395.1 760.2,402.9 755.1,402.2ZM891,511.9 882.8,505 875.4,508.8 879.5,521.8 889.3,519ZM1264.5,687.8 1269.6,701.5 1265.9,704 1254.8,700 1255.6,687.9 1256.1,687.3ZM667.4,596.2 673.4,597.7 681.1,592.1 677.3,577.3 675.5,576.8 669.1,580.1ZM1553.8,556.3 1563.5,567.2 1554.4,572.9 1546.5,567.5 1553.3,556.4ZM1537.6,815.7 1542.4,815.1 1547.5,808.8 1544.7,802.8 1539.4,801.1 1533.9,809.6ZM1759,745.9 1758.1,748 1763.7,745.2ZM1426,645.3 1426,632.7 1414.2,636 1413.1,642.4 1415.4,645.5ZM1894.5,546.3 1894,546 1891.8,546.6ZM763.4,491.6 749.1,497.4 748.5,478.7 751.2,475.9 764.5,482.7ZM1893.3,459.6 1887.2,460.9 1882.3,452.1 1891.3,447.1 1895.6,453.6ZM1749.8,736.8 1751.5,725.6 1744.8,723.1 1738.6,725.6 1739.1,733.6ZM1013.1,361.3 1010.5,380.2 1010.7,380.5 1022.9,378.3 1022.7,361.8ZM970.1,814.2 955.8,811.9 955.9,824.6 968.1,829.3 971.8,824.6ZM1757.5,497.3 1752.8,502 1744.9,497 1749.9,490.2 1756.7,491.9ZM656.7,321.9 661.8,334.1 670.5,337.4 672.5,336.6 675.5,329 673.9,325.9 672,329 663,322 661.5,320.3ZM1776.3,634.6 1770.9,636.2 1769.4,638.4 1774.6,649.8 1775.6,650 1784,646.3 1784,642 1784.5,640.9ZM1410.2,433.8 1416.3,424.9 1427.5,427.3 1427.4,428.8 1417.7,438.3ZM1580.3,825.2 1577.6,818.3 1569.6,817.5 1565.5,826.8 1575.5,830ZM1115.9,612.8 1124,602.1 1116.7,592.6 1109.6,601.3 1112,610.4ZM1566.5,678.1 1563,681.6 1567.8,690.7 1574.2,685 1572.8,678.2ZM1466.2,374.1 1473.5,385.9 1456,383.8 1458.1,375.4ZM835.6,326.3 826,331.5 831.6,343 839.5,340.6 842.6,332.9ZM1907.8,460.3 1919.9,455 1915.1,447.3 1914.5,447.1 1904.9,452.7 1904.6,453.3ZM1003.3,748.6 1002,756.7 997.3,759.9 982.6,753.1 982.8,748.1 995.6,742.7ZM990.6,517.1 988.1,531 978.2,530 974.9,525 980.5,513.5ZM1670.6,755.6 1675.7,767.1 1684.8,760.9 1684.4,755.5 1683,754.2 1670.9,755.1ZM1547.1,401 1554.2,401.6 1556.7,399.8 1555.6,390.1 1552.4,387.9 1544.1,393ZM1408.5,621.7 1413.8,624.2 1411.7,633 1403.3,632.9 1401.7,628.7ZM1616.4,733.4 1621.1,729.8 1624.8,730 1627.8,735.8 1624.5,742 1617.2,742.8ZM1744.1,756.4 1735,754.4 1732.3,760.7 1733,761.5 1740,758 1744.3,758ZM1719.5,573.3 1728.3,567.2 1730,567.6 1735.6,580.6 1735.6,581 1735.2,581.5 1721,578.6ZM1128.3,401.5 1127,405.5 1118.3,409.8 1111.3,401.5 1112.7,397.1 1122.7,395.8ZM1563.2,668 1556,671.1 1548.5,664.8 1552.3,658.7 1561.3,658.8ZM905.9,339.6 894.7,342.1 890.4,332.6 892.2,329.1 899.5,326.8 906.3,332.1ZM1556,750.6 1558.5,760.2 1559.8,760.8 1570.6,757.4 1562.9,746.8ZM1243.9,744.6 1258.2,751.1 1259.1,738.4 1248.6,733.8 1245.8,735.8ZM816.7,319.3 806.6,321.7 803.7,335 812,341.2 823.4,330.6ZM1320.9,646.6 1326.4,635.3 1312.3,631.1 1311.9,642ZM1147.4,692.4 1133.9,685 1132.9,681.4 1133.7,679.5 1153.1,674.8 1153.4,674.9ZM1765.4,732.2 1754.8,738.8 1759,745.9 1763.7,745.2 1766,744 1769.7,741.2ZM1720.4,498.4 1720.3,499.1 1712.8,505.2 1704.3,500.5 1703.8,499 1706.9,494.4 1716.4,492.8ZM1618.2,459.1 1616.4,468 1611.3,468.2 1607,459.3 1608.6,457.1ZM829.3,354.6 847.4,355.4 848.4,364.8 844.2,369.7 833.9,368.9 829.3,354.8ZM1399.1,767.8 1405.2,772.3 1407.8,781.8 1403.4,786.8 1401.5,786.6 1394.5,780.5 1396.5,768.8ZM1675.7,511.1 1675.9,511.4 1685.1,513.7 1687.3,513.4 1688.1,509.6 1686.8,508.7 1680.5,509.8 1676.1,509ZM1678.8,503.3 1677.1,504.3 1677.5,505.3 1681.9,505.4ZM1718,621.3 1724.4,627.7 1722.6,632.4 1717.6,634.3 1713.2,629.5 1715.2,622.9ZM1586.1,486.2 1585.4,493.7 1575.6,497.5 1574.9,497.4 1575.8,485.9ZM1528.9,547.9 1517,548.8 1514,558.4 1526,558.6 1529.5,549.2ZM1635.8,894.6 1636.3,895.9 1637.2,896.7 1640.1,896.4 1640,893 1637.7,889.5ZM1642.1,527.4 1637,527.5 1636.2,528 1633.3,529.6 1631.7,535 1637,540 1644.4,535ZM1479,344.5 1478.3,345.7 1483.8,356 1485.8,356.7 1495.2,346.7 1492.5,342.3ZM665,562.7 664,558.5 663.9,563.2ZM1604,522.8 1603.4,524.5 1595.6,527.9 1591.1,523.3 1596.5,516.9ZM1333.8,605.5 1324.8,606.7 1325,619.5 1326,620.1 1335.9,618.8 1337.2,608.6ZM1004.8,660.8 1004.3,656.8 1015.9,651.6 1025.9,662.3 1017.2,666ZM1306.9,416.8 1307.6,414.5 1295.6,407.4 1288.7,414.3 1288.4,417.5 1292.9,421ZM1105,309.3 1097.3,302.9 1103.1,292.7 1104,292.4 1112.3,298.2 1112.1,305.6ZM1369.1,471.3 1358.3,465.7 1353.5,474 1358.5,478.9 1363.9,477.9Z"/>
<path fill="#c9c7c1" d="M1104.1,691.9 1116.2,688.9 1119,682.4 1114.6,673.6 1105.9,676.4 1102.5,690.5ZM1172.5,362.5 1162.5,364.8 1160.8,375 1176.9,380.1 1179.1,378.4 1179,370.7ZM1282.2,436.1 1268,439.8 1266.7,428.9 1270.1,425.1 1279.5,425.9ZM1609,664.7 1612.8,654.9 1614.7,653.9 1620.9,659.5 1615.9,668.6ZM1160.2,837.5 1148.2,851.3 1146.9,851.1 1141.1,842.4 1145.8,830.1 1155.2,829.4 1159.5,833.4ZM848.9,517.3 846.8,528.7 859.5,533 865.3,525.3 859.1,513.3ZM1533.9,809.6 1539.4,801.1 1536.5,794.8 1524,799.7 1527,808.3ZM1015.5,431.2 1008.5,435.3 1007.9,446.1 1014.8,452.1 1024.9,447.6 1025.2,438.9ZM1192.1,362.5 1189.5,362.5 1179,370.7 1179.1,378.4 1186.1,380.3 1194.7,374.5 1194.6,365.5ZM1496.4,682 1491.6,685.1 1484.4,675.4 1488.2,664.7 1496.6,670.3ZM1277,633.2 1267.5,631.9 1261.3,622.5 1264.5,617.5 1278.3,620.2 1281.6,623.3 1281,630.1ZM1122.4,733.7 1108.2,726.5 1101.6,739.7 1115.3,748.2 1122.6,742.1ZM1868.8,436.5 1868.5,429.8 1867.5,428.9 1861,429 1857,433 1858,438.2 1864.3,440.7ZM1583.7,388.6 1590.8,389.4 1590.8,389.2 1591,389 1590,384 1589.2,384.8 1589,384 1583.5,388.2ZM925.7,832 942.8,827.3 945.9,830 947.1,842.7 943.2,844.2 927.8,842.4ZM933.6,789.1 939.6,776.2 948.1,778.3 949.7,793.6 935.8,797.1ZM760.7,666.6 760.7,664.5 767.5,655.7 782.1,660 785.8,665.5 781.6,673.5ZM1410.7,740.1 1401.9,729.4 1397.1,728.2 1394.3,732.2 1399.2,743.2 1408.6,743.9ZM1149.1,594.2 1145,591.9 1134.5,594.2 1131.6,602.8 1134.2,606.7 1145,608.3ZM1117,887.4 1117.9,873.1 1116.3,871.4 1100.2,870.3 1100,871 1102,873 1104.4,879.2 1108,885 1110.3,890.6 1110.6,890.8ZM850.7,658.8 857.4,659.5 863.7,668.2 859,679.7 845.8,674.8 844.3,668.5ZM1589.4,732 1587.6,731.5 1583.6,721.7 1588.2,717.6 1599.8,720.7 1601,724.2 1600.6,724.8ZM1176.5,500.9 1177.2,501.6 1178.8,515.2 1166.4,516.8 1160.3,508.6 1171.4,500ZM1213.8,873.8 1218.2,873.6 1224.9,879.2 1224.9,880.1 1217.2,892.7 1212.2,889.8 1209.6,877.8ZM1033.2,844 1041.2,849 1035.1,860.1 1021.6,859.8 1021.6,851.1ZM1453.7,329.7 1450.3,319.4 1442.6,318.9 1438.9,330.4 1439.7,332.6 1444.2,334ZM667.2,461.3 673.4,464.9 679.5,462 680.7,459.5 677.6,444.2 667.9,445.1 668,450 667.2,456.6 666.5,459.5ZM1639.2,623.6 1638.7,612.9 1641.6,610.1 1651.5,617.4 1651.8,618.5 1651.1,619.4 1640.6,624.4ZM1192.5,621 1206.7,625.2 1200.9,635.1 1192.8,635.4 1188.5,624.1ZM915.3,474.8 926.7,483.2 927.5,482.9 936.5,469.8 928.2,462.4 920.5,463.3ZM1051.7,459.9 1064.1,470.5 1064.1,470.7 1055,479.1 1048,479.1 1047.4,478.5 1049.1,460.7ZM1888.9,409.7 1886.6,404.7 1875.1,408 1874.7,408.6 1876.9,416.6 1880.9,419.6ZM898.7,734.3 912.1,745.1 921.7,740.7 924,733.9 907.8,724 901.4,728.5ZM1504.4,397.8 1501.4,389.3 1492.9,388.2 1490.1,392.6 1492,399.8 1498.2,401.4 1504.3,398ZM1296.6,677.6 1307.2,678.6 1312.4,669.1 1297.4,664.1ZM1323.5,390.8 1310.7,392.4 1308.8,397.2 1313.5,408.4 1321.1,409.7 1327.1,405.3 1325,392.2ZM1487.3,529.4 1488.7,521.2 1484.3,519 1478.8,522.6 1478.9,533.4 1479.1,533.4ZM1314.3,360.3 1314.5,351.9 1310.5,347.9 1299.3,356.7 1303.1,365.6 1304.8,366.1ZM1100.2,870.3 1097.7,865.6 1094.5,865.5 1100,871ZM1266.8,670.5 1274.7,662.6 1283.4,663.2 1282.9,674.3 1280.5,676 1269.9,674.7ZM1525.5,579.8 1523.5,582.6 1523.3,585.1 1533.6,593.9 1540,590.8 1540.5,582.8ZM1128.1,892.9 1117,887.4 1117.9,873.1 1127.6,871.5 1138.4,883ZM1216.4,435.9 1208.6,438.5 1196.6,429.5 1197.6,423.7 1204.3,419 1212.6,420.4 1217.7,431.1ZM1129.8,636.4 1128.7,647.5 1125.9,649.6 1110.3,644.6 1117.3,634.2 1127.7,633.8ZM1292,874.3 1287.1,886.9 1289.5,892.1 1293.6,894.3 1303.3,888.4 1296,875.5 1293.2,874.2ZM1265.1,347.9 1252.9,343.6 1253.1,338 1260.6,332.1 1268,335.5ZM817.2,763.1 800.9,759.6 800.9,745.4 808.9,744.2 820.4,755.4 820,759.9ZM1175.6,654.5 1179.7,655 1182.9,671.9 1175.7,675.4 1167.9,671.2 1169.8,659.2ZM1246.9,450.3 1246.1,445 1254,439.9 1264.3,443.2 1258.5,458.4 1254.6,458ZM1239.6,459.3 1228.8,457 1228.3,456.2 1239.9,442.6 1246.1,445 1246.9,450.3ZM1293.2,874.2 1300.2,862.1 1308.6,861.7 1311,873.2 1310.2,874.1 1296,875.5ZM837.8,648.8 832.7,643.7 825.4,644.4 817.5,657.3 831.5,664.6ZM1271.3,876.1 1275.5,887.4 1271.9,894.1 1267.9,895 1261.3,892.2 1262.3,879.1 1271.2,876ZM1578.1,552.4 1577.4,553.2 1581.2,560 1591,562.8 1591.2,562.7 1593,557.2 1585.6,550ZM919.9,798.5 907.2,805.7 912.2,815.9 918.8,818.1 928.8,801.8ZM1246.1,445 1239.9,442.6 1236.5,438 1237.3,429.6 1243.4,424.5 1253,432.3 1254,439.9ZM1571.5,481 1565,483.5 1565.3,492.3 1572.6,498.2 1574.9,497.4 1575.8,485.9ZM960.1,718.5 964.6,724.8 976.9,722.6 978.2,721.4 974.7,708.1 967.5,706ZM1195.5,392.5 1200.6,405.4 1203.4,406.7 1213.6,402.5 1204.9,387.6ZM996,731.5 991.4,730.8 982.9,721.1 993.2,712 998,715.1 1000.3,720.2 996.3,731.3ZM838.9,743.8 843.2,754.3 856,760 864.1,749.4 857.1,736.2 856.3,736ZM728,376.7 717.9,369.1 713,369.7 709.5,378.2 715.6,389.2 722.5,389.8 729,380ZM1317,375.5 1325.4,380.7 1323.5,390.8 1310.7,392.4 1308.2,386.3 1313,375.8ZM1047.4,478.5 1034.2,475.8 1033.8,475.9 1030.4,487.3 1034.3,496.3 1036.8,498.2 1037,498.2 1045.3,493.5 1048,479.1ZM1468.9,866.5 1468.6,855.2 1478.1,851.6 1483.4,856.7 1480.7,864.7ZM1157.8,736.2 1169.1,745.8 1171.8,744.8 1173.9,742.4 1174.1,729.5 1165.9,725.4ZM1204.4,350.4 1206.5,348.2 1204,338 1193.5,334.3 1192.7,334.8 1189.4,346.8 1197,352.4ZM1039.7,827.2 1050.3,833.7 1048.2,844.6 1042.7,848.9 1041.2,849 1033.2,844 1032,840.1 1038.8,827.5ZM940.1,548.2 938.6,539.9 947.8,530.4 956.6,543.6 955.5,547.3 953.6,549.1ZM693.9,658.3 693.9,654.8 690.4,652.4 690.9,653.5 693.4,658.7ZM1101.3,339 1110,326.9 1110.3,326.9 1117.6,331.8 1118.8,343.2 1109.2,351.2 1106.1,349.9ZM1342.9,582.3 1351,593.8 1345.3,597.9 1334.8,593.8 1334.2,592.7 1335.4,583.9ZM1643.3,588.6 1654.3,598.9 1653.3,602.2 1642.4,604.6 1639.5,602 1641.7,589 1641.8,589ZM1169.1,745.8 1166.4,751.2 1171.8,766.7 1186.2,759.7 1185.8,756.9 1171.8,744.8ZM1440.1,425.2 1442.5,430.5 1453.9,431.1 1456.6,427.1 1449,419.4ZM1866.7,504.5 1868.3,507 1866.3,516.6 1862.3,517.8 1855.1,514.8 1854.9,513.5 1861.6,503.4ZM1255.5,551.9 1264,547.6 1262.9,538.5 1255.3,534.8 1248,541.6ZM1294.6,638.1 1302.1,628.9 1299.2,619.2 1288.8,618.5 1281.6,623.3 1281,630.1ZM1213.7,313.9 1215.9,329.1 1216.2,329.2 1225.5,324.9 1228.7,317.1 1219.8,311.1ZM1249.5,357.6 1249.4,346.7 1238.4,344 1234.2,349.9 1235.9,355 1243.6,358.9ZM877.9,531.4 874.3,542.6 887,548.9 892.1,545.3 894,536.2ZM1233.3,888.5 1238.6,887.2 1240.1,874.9 1237.8,871.4 1224.9,879.2 1224.9,880.1ZM1101.5,826.2 1101.6,826 1117.1,825.7 1118,826.5 1118.4,834.8 1108.4,839.7ZM1319.1,309.9 1325.5,302 1323,296.1 1322.6,296 1323,300 1320,308 1318.2,308.2ZM1081.5,819.2 1082,820.3 1097.6,827.8 1101.5,826.2 1101.6,826 1102.3,812.4 1095.8,809 1084.5,813.7ZM1181.4,699.8 1187.1,713.8 1178,716.8 1169.1,712.5 1173.5,702.9ZM1494.5,718.8 1483.7,721.7 1481,716.7 1485.1,709.4 1490.2,708 1495.1,718.1ZM755.1,402.2 747.8,414.8 749.1,417.2 765.8,423.9 766,423.7 766.9,409.6 760.2,402.9ZM1571.5,614.3 1574.4,603.9 1564.4,601.8 1561.9,612.4 1563.3,614.9 1567.4,616.4ZM1193.6,392.2 1182.2,400.5 1177.9,398.8 1173.9,388.3 1176.9,380.1 1179.1,378.4 1186.1,380.3ZM1279.6,474.1 1286.5,483.5 1291.5,483.9 1302.9,473.8 1302,470.8 1288.2,465.5 1281.4,468ZM1239.9,475.1 1225.3,486.4 1219.8,473.8 1228.4,466.6ZM1238.1,636.4 1236,632.7 1238.9,625 1249.6,622.3 1253.7,624.6 1252.6,640.1 1249.5,642.2ZM1336.9,369.4 1346.5,381.1 1343.1,389.2 1339.9,389.7 1331.5,377.9 1336,369.6ZM1518.8,844.1 1510,847.8 1504,842.9 1506.7,832.3 1507,831.9 1513.5,830.4 1517.8,833.6 1520.6,840.2ZM1109.4,722.7 1119.5,713.7 1124.9,714.5 1127.2,730.1 1122.4,733.7 1108.2,726.5 1108.2,726.4ZM849.7,547.7 860.3,542.8 867.8,546.4 868.8,554.7 862.1,565.2 846.6,560.1 845.4,558.2ZM1179,600.1 1178.2,587.9 1170.1,582.6 1163.6,589.6 1171.5,600.1 1178.7,600.7ZM1021,617.5 1030.3,614.5 1032.2,608.8 1029.2,601 1019.7,596.9 1012.9,607.7ZM1156.2,655.1 1143.8,653.1 1141.2,661.9 1153.1,674.8 1153.4,674.9 1154.5,674.7 1157.6,657.4ZM1196.8,826.9 1184.4,825.5 1179.1,832.5 1180.9,839.5 1181.4,839.8 1195.8,838.7 1197.4,835.8 1197.2,827.4ZM1663.6,810.2 1664,811.5 1665.8,809.9 1670.5,806.2 1667.7,805.8 1666.1,806.6ZM1024.4,823.2 1022.2,833.9 1011.1,838.7 1007.8,820.3 1015.7,817.2ZM1103.1,292.7 1104,292.4 1104.7,291.2 1100,290 1099.2,290.3ZM1507.4,683 1508.4,684.6 1501.2,696.7 1491.6,693.1 1490.4,688.4 1491.6,685.1 1496.4,682ZM1029.4,644.7 1031.3,655 1048.7,652.6 1045.7,642 1032.9,640.5ZM1516,520.5 1515.5,533.6 1508.7,534.5 1505.8,533.2 1501.1,526.1 1501.1,525.3 1508.6,517.8ZM1875.9,462.6 1884.9,464.1 1887.2,460.9 1882.3,452.1 1880.3,451.8 1874.1,459.3ZM1476.2,534.8 1477.5,548.7 1471.3,552 1464.4,546.1 1464.2,540.7 1474.9,534.6ZM1265,906.4 1260.5,908.5 1259.9,912.4 1264.2,911.6 1268.7,911.4 1274.9,911.3ZM1429.1,551.4 1430.6,558 1424.2,566.6 1413.5,558.9 1417.8,551.7 1427.5,550.1ZM915.3,474.8 926.7,483.2 925.5,490.7 915.9,498 908.4,493.4 906.9,483.1 912.7,475.4ZM1511.4,699.8 1516.5,694.8 1516.6,694.8 1524.9,703.5 1520.4,709.2 1514.2,708.1ZM754.2,558.7 770.2,551.8 776.4,556.2 774.5,566.2 763.2,570.1ZM773.9,586.7 781,573.6 788,573.5 795.3,581.3 792.8,591.2 790.8,592ZM1499.4,544.9 1491.3,548.7 1491.8,555.1 1498.8,560.3 1503.7,557.2 1503.2,547.8ZM1020.8,860.9 1013.9,864.1 1014.1,866.2 1015.6,868.4 1020,873 1025.1,867.9ZM1294.3,645.4 1284.5,650.6 1275.3,646.4 1277,633.2 1281,630.1 1294.6,638.1 1295.4,643.4ZM898.3,462.3 893.6,452.6 879.8,451.1 879.1,451.9 878.7,469.3 880.9,472.2 887.6,472.3 897.9,464.5ZM1075,357.6 1066.2,348.3 1057.1,358.7 1068.3,369.3 1071.6,367.8ZM1021.2,748 1018.5,758 1010.5,761.4 1002,756.7 1003.3,748.6 1013.6,742.3 1019.9,744.4ZM1172.8,634.1 1166.7,641.7 1175.6,654.5 1179.7,655 1183.6,653 1187.8,644 1187.7,643.7 1175.9,633.6ZM1099,474.2 1096.3,470.8 1098.5,458.6 1105.3,457.4 1115,469.4 1113.9,473.7 1106.8,476.6ZM1083,447.4 1085.4,456.2 1096.3,456.5 1096.6,438.5 1089.6,440.1ZM1251.1,839.9 1250.4,840.6 1241.6,840 1237.3,833.9 1241.2,825.5 1251,822.1 1254.6,828.4ZM897.9,464.5 887.6,472.3 895.1,483.4 906.9,483.1 912.7,475.4ZM849.7,547.7 840.9,535.3 831.8,539.9 828.4,550.5 834.6,557 845.4,558.2ZM1077.6,800 1084.5,813.7 1081.5,819.2 1073.2,818.9 1065.4,810 1068.6,800.8ZM836.7,730.6 828.6,724.7 828.5,724.3 833,713.1 848.2,718.8 848.5,719.4 848,721.7ZM1323.4,329.8 1326.5,329.8 1335.6,319.8 1334.6,315.5 1322.3,313.9 1319.5,323.8ZM1638.7,823.4 1645.7,828.3 1647.1,826 1650,821 1653.8,818.7 1653.3,817.1 1646,815.5ZM1453.6,386.4 1456,383.8 1458.1,375.4 1453.3,367.6 1442.5,374.3 1442.5,376 1452.4,386.7ZM812,774.7 817.2,767.2 826.2,775.9 824.5,783.9 815.4,786.9ZM1252,902.2 1246.1,903.3 1244.7,902.9 1244,902 1243.1,890.2 1250,886.9 1258.2,893.1ZM1299.8,506.8 1290.8,507.4 1288.2,513.8 1294.2,521.6 1297.2,522.3 1303.6,519.6 1304.8,511.8ZM1127.8,330.9 1117.6,331.8 1110.3,326.9 1122,314.2 1132.2,320ZM1294.4,318.6 1295.1,318.9 1305.9,312.3 1305.1,309.1 1298.9,309.5 1292,309.9ZM1632.7,514.7 1635.2,513.7 1635.3,511.7 1633.3,512.9 1630.5,513.4ZM1630.3,498.4 1624.2,508.3 1630.3,502.2 1631,498.5ZM1662.3,429.4 1662.2,429.1 1655.8,421.4 1654,422.9 1654,423 1654,423 1651.4,425.2 1651.3,432.6 1661.5,433.2 1662.2,432.7ZM1218.3,895.2 1217,901.5 1210,908.9 1200,906 1199.8,905.3 1202.7,892.2 1212.2,889.8 1217.2,892.7ZM986.4,658.6 993.1,653 991,640.2 984.7,637 982.8,637.8 975.1,648.8 977.7,655.4ZM929.7,593.7 922.9,593.3 918.6,579.9 933.2,577.3 936.2,579.6 934.6,590.6ZM1676.6,678.8 1679.4,668.9 1673.3,664.4 1665.6,670.3 1673.7,680.5ZM1488.2,648.6 1481.3,646.6 1480.6,635.4 1488,629.2 1492.5,629.7 1490.5,646.1ZM1117,910.8 1123.4,908.2 1128.8,895.3 1128.1,892.9 1117,887.4 1110.6,890.8 1110.5,891.2 1112,895 1111.4,900.5 1111.7,904.8ZM1249.4,346.7 1238.4,344 1236.6,335.4 1247.3,333 1253.1,338 1252.9,343.6ZM1559,729.4 1570.2,730.4 1572.2,728 1573,722.9 1566.7,717.1 1560,718.3 1557.8,726.9ZM1084.5,523.3 1093.3,533.5 1093,540 1074.5,538.9 1071.2,529.6 1073.5,526.3ZM1265,906.4 1267.9,895 1261.3,892.2 1258.2,893.1 1252,902.2 1260.5,908.5ZM934.3,661.2 938.3,650.8 947.4,652.3 955.3,662.4 944.1,673.7 941.7,672.8ZM919.4,556.3 921.8,564.2 930.7,566.1 936.8,560.4 936.3,552.1 926.6,549.7ZM1385.4,670.6 1385.6,681.6 1395.5,685.4 1401,681.5 1396.7,669.3 1385.5,670.4ZM1285.6,542.6 1278,540.6 1277.7,539.9 1280.4,529.1 1287.7,529.6 1291.5,537.7ZM1481,716.7 1468.3,713 1468.1,712.6 1476.1,700.2 1477.4,700.4 1485.1,709.4ZM1509.2,675 1512.3,672.7 1513.7,665 1512.2,662.7 1504.6,663.4 1501.6,669.7ZM1571.5,614.3 1579.2,616.9 1580.6,626.7 1574,628.7 1570,626.3 1567.4,616.4ZM1400.6,422.7 1404.6,417 1414.2,418.5 1416.3,424.9 1410.2,433.8 1403.4,434ZM1914.6,424.3 1919.9,423.7 1917.1,411.2 1913.6,409.7 1908.6,419ZM1872.9,492.1 1873.5,491.1 1881.9,486.9 1882.9,487.4 1886.8,496.6 1883.8,503.9 1883.4,504.1 1882.5,504.2 1873.2,497.9ZM1899.1,489 1896.8,485 1895.2,484 1882.9,487.4 1886.8,496.6 1892.4,496.4 1896,492 1899.1,489.3ZM672.5,336.6 687.4,346.3 693.3,343.9 695.3,341.3 696.6,332 689.1,324.3 675.5,329ZM1389.4,354.2 1396.6,358.8 1395.4,368.6 1391.1,372.6 1381.3,363.5 1381.2,362.5 1386.3,354.4ZM1094.1,793.8 1095.8,809 1102.3,812.4 1105.2,811.3 1112.6,798.3ZM1618.3,593.7 1627.2,584.2 1633,590.2 1628.3,598.6 1623,598.8ZM774.5,566.2 781,573.6 788,573.5 793.3,562.8 790.9,558 779.7,555 776.4,556.2ZM1087.3,677.3 1083,674.5 1079.3,662.9 1084,659.3 1097.5,663 1096.9,670.5 1089.8,677ZM1233.5,683.5 1219.1,673.8 1212.7,676.5 1212.3,683.3 1219.6,690.2ZM1512.6,657.7 1523.4,653.1 1523.4,651.5 1515.1,644.5 1515,644.5 1508.8,653.2ZM882.8,505 875.4,508.8 865.3,505.7 871.3,493.4 881.6,492.5 885.7,495.3ZM1265.4,348.5 1261.3,357.7 1250.8,358.5 1249.5,357.6 1249.4,346.7 1252.9,343.6 1265.1,347.9ZM1319.7,860 1324.1,864.2 1329.7,864.2 1335.3,855.2 1333.7,852.2 1324.7,846.4 1320.7,848.8ZM935.8,797.1 933.3,801.1 939.8,813.3 954.5,810.4 956.8,797 949.7,793.6ZM1297.6,767.7 1298.7,778.5 1287.4,785 1283.2,782.8 1281.8,780.8 1283,773.6 1284.4,771.8ZM1225.8,819.5 1211.6,823.5 1214.4,833.6 1225.4,834.4 1227.8,832.5 1226.4,819.7ZM727.8,715 728.2,704.4 726.2,701.8 719.8,701.3 720,702 718,708 724,716 725,717.6ZM1053.3,813.7 1056.9,823.9 1067.5,825 1073.2,818.9 1065.4,810ZM1706.7,529 1709.3,544.9 1718.1,538.2 1718.6,530.4 1709.4,527.6ZM1900.4,408.6 1899.5,399 1891,399 1886.9,403.1 1886.6,404.7 1888.9,409.7 1897.3,412.9ZM1477.4,700.4 1476.1,700.2 1473.2,695.1 1474.1,688.7 1475.9,687.3 1490.4,688.4 1491.6,693.1 1489.7,695.9ZM1009.4,841.7 1011.1,838.7 1007.8,820.3 1004.5,819.3 991,832.8 991,833.2 1006.5,843ZM915.7,623.9 920.8,616.7 934.8,621.5 932.4,630.2 924.5,635.4 916,627.3ZM1088.2,337.5 1085.2,327.5 1081.6,325.6 1072.9,325.9 1067,333.8 1068.3,343.1 1085.7,341.1ZM1453.4,366.9 1453.3,367.6 1442.5,374.3 1434.5,367.3 1434.2,366.2 1443.6,360.8ZM888.8,677.9 892.3,670.2 901.9,671.5 904.6,687.4 893.6,686.1ZM973.6,611.8 959.6,617.5 959.8,626.5 968.1,631.1 970.1,630.5 976.6,614.4 976.3,613.4ZM1294.3,645.4 1299.1,659.6 1309.8,655.7 1306,645.6 1295.4,643.4ZM828.4,550.5 822.7,550.4 816.1,541.6 822,531.1 831.8,539.9ZM1654.3,598.9 1653.3,602.2 1654.3,604.2 1664.1,609.7 1672.6,605.3 1666.5,594.1 1664.6,593.5 1660.4,594ZM1140.4,882.7 1147.5,874 1151.6,873 1161,878.7 1160.6,881.8 1150.7,893.7 1149.8,893.6ZM1106.1,645.9 1104.2,649.7 1104.2,656.4 1117.4,665.9 1119,665.3 1124.5,659.2 1125.9,649.6 1110.3,644.6ZM1322.2,535 1322.5,524.3 1329.2,521 1339,527 1338.7,533 1332.6,537.7 1323.7,537.5ZM698,524.6 695.8,511.6 709.5,508.6 716.2,520 709,529.7 706.6,530.6ZM1048,751.4 1040.8,750.4 1035.8,738 1037.4,736.1 1052,735.3 1057.3,742 1055.9,745.5ZM1154.6,755.7 1158.6,766.3 1152.3,773.1 1146.3,770.2 1145.1,756.3 1147.4,754.1ZM1154.2,736 1146.6,740.9 1141.1,738.5 1136.5,730.4 1141.6,719.3 1145.8,717.3 1149.3,720ZM1223.5,453.9 1212.9,458 1205.6,445.3 1208.6,438.5 1216.4,435.9 1221.4,440.5ZM1257,481.3 1251.9,494.1 1255,498.2 1258.1,499.5 1270.2,494.2 1267.9,483ZM1064.3,376.3 1052.2,371.1 1044.5,381.2 1058,387.8 1064.6,380.7ZM883.1,716.6 879.5,731.2 898.4,734.5 898.7,734.3 901.4,728.5 890.3,716.1 885.3,715.5ZM1336.9,369.4 1340.6,366.6 1341.3,354 1336.2,351.1 1327.3,356.9 1326.4,362.7 1336,369.6ZM1425.2,746.3 1431,759.4 1435,759.3 1440.1,749.1 1435,744.6 1425.9,744.5ZM838.6,743.7 828.7,745 819.2,736 828.6,724.7 836.7,730.6ZM1361.5,651.8 1358.7,643 1352,643 1346.3,652.8 1349.9,662.1 1359.3,657.5ZM1235.6,333.3 1225.5,324.9 1216.2,329.2 1221.9,339.6 1235.9,334.8ZM874.1,637.2 866.1,632.9 864,624.4 871,619.5 884.2,629.9ZM804.8,698.9 817.5,705.1 817.7,705.5 814,714.2 798.3,717.2 794.9,714 795.8,703.4ZM1603.7,622.7 1603.7,623.7 1601.8,626.4 1586,627.7 1592.6,614.1 1599.3,614.8ZM1482.8,511.7 1484.3,519 1478.8,522.6 1472.1,520 1469.1,512 1469.1,512ZM1455.9,353.7 1468.3,348.9 1465.1,343 1462.4,342.4 1460,344 1460.9,342.1 1456.5,341.2 1453.3,343.6ZM1557.2,736.8 1563.8,743.3 1562.9,746.8 1556,750.6 1550,749.7 1550.5,738.7ZM1444.2,353.6 1441.4,349.7 1438.4,349 1430.5,353.9 1428.4,359.3 1428.9,361.4 1434.2,366.2 1443.6,360.8ZM739.8,637.7 748.5,647.9 759.2,642.8 753.6,630.2 739.3,633.9ZM1271.3,876.1 1291.5,874 1284.8,863.1 1275.8,861.8 1270.9,870.8 1271.2,876ZM1630.2,624.2 1629.3,635.2 1632.3,636.9 1642.4,631.7 1640.6,624.4 1639.2,623.6 1630.6,623.9ZM1557.4,774.3 1553.9,784.2 1551,785.7 1543.1,780.1 1545.1,770.3 1547.5,769.7ZM1606.2,665.6 1599.6,660.3 1593.4,671.1 1595,673.3 1599.2,674.6 1603.9,672.3ZM1034.9,754.6 1021.2,748 1019.9,744.4 1026,738.7 1035.8,738 1040.8,750.4ZM1357,377.1 1346.5,381.1 1343.1,389.2 1349.7,394.1 1358.9,393.7 1360.5,380.5ZM1315.4,503.8 1318.8,492.3 1329.9,493.8 1332,507.1 1317.2,507.4 1316.5,506.8ZM1465,815.6 1457.1,812.4 1455.3,804 1457,802.9 1470.5,805 1468.2,814.5ZM1914.8,374.8 1921,373.9 1921,373.7 1921,366.9 1920.3,363.6 1920.6,361.1 1913.4,364.3 1912,369 1911.4,370.6ZM1199.9,604.9 1210.1,612.4 1208.6,624.6 1206.7,625.2 1192.5,621 1193.4,610.1ZM1233.5,800.4 1237,797.1 1246.2,798.1 1249.8,802.2 1249.5,813.7 1235.6,812.2ZM1194.1,911.8 1178.4,908 1179,912.5 1185.2,912.4 1190.3,912.8 1194.1,912.3ZM1229.2,911.3 1228,907.3 1217,901.5 1210,908.9 1211.6,912.7 1213.2,913 1216.8,913 1221.5,911.7 1227.7,912.5 1228.4,912.3ZM1370.7,687 1379.8,687.5 1385,698.8 1384.7,699.4 1372.6,704.7 1367.1,692.4ZM1674.2,588.6 1676.7,589.1 1684.1,600 1673,605.5 1672.6,605.3 1666.5,594.1ZM1521.1,601.8 1516.7,598.1 1507.9,606.6 1508.7,610.2 1516,615.4 1521.8,606.7ZM1308.3,846.6 1320.7,848.8 1324.7,846.4 1325.5,835 1324.3,833.5 1312.5,833 1307.1,845.2 1307.1,845.4ZM1648.9,804.4 1645,810.5 1634.8,808.3 1636.7,799.3 1645.2,799.8ZM1359.3,657.5 1349.9,662.1 1349.1,664.5 1355.4,671.6 1367.3,668 1367.4,665.7ZM1140.9,310.2 1140.7,304.5 1138.8,302.1 1125.9,304.5 1121.3,310.5 1122,314.2 1132.2,320 1134.3,319.4ZM1376.3,585.2 1368.5,589.5 1367.1,595 1372,601.3 1375.8,601.1 1382.4,592ZM1321.7,541.9 1329.2,554.4 1324.1,561.8 1316.5,558.4 1313,551.5 1313.9,547.7ZM1187.1,713.8 1192.3,715.9 1196.4,725.4 1191,730 1178.9,726.6 1178,716.8ZM1230,894.7 1218.3,895.2 1217.2,892.7 1224.9,880.1 1233.3,888.5ZM1178.7,600.7 1171.5,600.1 1162.7,606.6 1172,615.9 1176,615 1180.5,605.9ZM1636.7,799.3 1633.4,794.8 1632.5,794.4 1623.8,798.9 1621.9,803.4 1625.2,808.5 1633.9,809.3 1634.8,808.3ZM1325.4,380.7 1323.5,390.8 1325,392.2 1338.3,391.2 1339.9,389.7 1331.5,377.9ZM966.2,323 969.2,314.1 975.8,311.7 983.9,323.8 981.8,329.2 981.5,329.5 974.5,330ZM1169.2,858.8 1167.2,857.1 1155.6,858 1151.6,873 1161,878.7 1170.6,874.7ZM984.5,677.4 968.8,669.7 968.4,668 977.7,655.4 986.4,658.6 989.1,666.4ZM1461.6,527.4 1457.9,534.5 1450.9,535.5 1445.6,529.9 1448.8,520.4 1459.2,522.2ZM1298.4,809.5 1299,795.5 1293.3,793.9 1281.1,804.6 1291.1,810.8ZM994.7,577.7 994.8,578.5 1007.7,583.3 1013.4,578.9 1012.2,567 1003.6,564.3 998.5,567.7ZM849.7,547.7 860.3,542.8 859.5,533 846.8,528.7 841.6,532.7 840.9,535.3ZM1354.1,718.6 1362.4,709.7 1370.6,709.6 1370.9,720 1362.8,726.3 1358.7,725.9ZM1881.8,421.7 1880.6,427.6 1883.8,433.9 1892,432.5 1895.4,423.6 1894.3,421.6ZM1174.2,876.4 1176.3,892.9 1167.1,893.5 1160.6,881.8 1161,878.7 1170.6,874.7ZM1246.1,903.3 1244.7,902.9 1237.2,912 1240.1,912.5 1245.4,913 1248.5,913ZM1454.5,857.8 1461.3,850.8 1468.6,855.2 1468.9,866.5 1467.6,868 1459.3,866.9ZM1144.6,328.3 1142.1,334 1133.6,337.7 1127.8,330.9 1132.2,320 1134.3,319.4ZM1447.1,680.1 1443.5,671.1 1447.7,667.3 1453.7,667.9 1458.6,677.6ZM1332.4,775.8 1324.8,765.9 1318,775.1 1322.1,783.8 1332.1,777.2ZM1174.5,790.3 1177,777 1171.5,769.2 1158.3,782 1163.7,789.5ZM962.2,696 965.3,691.1 977.8,689.5 983.1,703.5 974.7,708.1 967.5,706ZM1088.7,555.2 1086,568.3 1071.7,565.2 1070.6,558 1075.8,553.1ZM1572.6,498.2 1568.2,505.5 1569.2,508.8 1575.4,511.5 1583.1,508.1 1583,505.7 1575.6,497.5 1574.9,497.4ZM1143.1,651.6 1143.8,653.1 1141.2,661.9 1137.9,663.5 1124.5,659.2 1125.9,649.6 1128.7,647.5ZM795.5,625 790.2,614.4 788.4,613.8 777.8,620.6 778.3,630.4 789.9,634.1ZM1608.3,640.9 1616.9,635.1 1621,637.5 1622.5,646.2 1614.9,652.8ZM1594.8,578.1 1602.6,570.8 1602.7,568.5 1591.2,562.7 1591,562.8 1587.1,572 1593.9,578.1ZM1197.4,835.8 1212.5,836.1 1212.6,845.6 1201.4,851 1200.1,850.1 1195.8,838.7ZM897.7,440.2 885.7,436.8 880,442.4 879.8,451.1 893.6,452.6 898.5,442.7ZM1069.6,729.6 1066.7,738.7 1077.8,746.3 1088.1,735.8 1085,727.1ZM1856.2,457.3 1851.2,450.4 1852.2,447.3 1861.1,448.5 1863.7,455.6ZM1662.2,432.7 1661.5,433.2 1661.5,442.5 1665.6,445.9 1670,440.6 1669.8,439.8 1665.3,436.8 1663.7,432.9ZM1469,761.9 1469.8,769.8 1480.2,774.2 1485.8,767.3 1483.4,764.3 1470.1,760.9ZM1862.8,468.1 1871,473.5 1870.8,475.4 1866.6,481.2 1863,482.1 1854.5,477.8 1860,468.6ZM1197.6,423.7 1191.4,417.7 1192.3,409.2 1200.6,405.4 1203.4,406.7 1204.3,419ZM1303.5,903.8 1315.5,906.8 1319.4,904.9 1318.4,896.7 1308.3,893.2ZM1287.1,754.9 1282.2,758.2 1284.4,771.8 1297.6,767.7 1299.8,764.7 1299.6,763.8ZM1306.9,416.8 1292.9,421 1295.6,432 1297.6,433.1 1303.8,432.2 1307.1,417.5ZM1296.3,337.7 1300,329.1 1307.7,328 1316.1,337.6 1310.2,343.2 1296.5,338.3ZM939.3,763.7 943.8,760.2 957.1,762.6 958.8,772.1 948.1,778.3 939.6,776.2 939.1,775.6ZM1156.5,591.2 1152.8,574 1156.7,571.2 1169,576.9 1169.9,578.5 1170.1,582.6 1163.6,589.6ZM992.7,796.1 984.4,788.1 985,776.6 986.2,776.3 1004.7,785.7 1005.3,787.2ZM799.5,775.4 796.9,763.3 800.9,759.6 817.2,763.1 817.2,767.2 812,774.7ZM1449.1,343.2 1441.4,349.7 1438.4,349 1435.5,338.9 1439.7,332.6 1444.2,334ZM1387.1,591.9 1392.1,600.2 1402.9,594.2 1399,587 1389.8,587.9ZM775.7,603.2 766.9,609.4 767.9,616.1 777.8,620.6 788.4,613.8 783.2,604.9ZM1207.3,742.9 1204.2,747.9 1205.9,755.6 1219.5,756.1 1221.4,742.8 1215.4,739.9ZM1424.2,566.6 1413.5,558.9 1409.3,560 1405.2,567.2 1407.2,570.5 1420,573.1 1424.3,568.6ZM1584.8,658.4 1584.8,658.3 1595.7,654 1598.1,654.8 1599.6,660.3 1593.4,671.1 1589.2,669.3ZM1175.4,354.6 1167.1,348.1 1156.9,350.5 1158.2,360.4 1162.5,364.8 1172.5,362.5ZM1091.8,303.5 1097.3,302.9 1103.1,292.7 1099.2,290.3 1094.4,292.4 1088.8,296.1 1087.6,296.9ZM1776.2,463 1783.7,461.5 1784.7,454.6 1780.3,449.7 1780,450 1774.6,454.7 1770.1,456.9ZM1044.1,709 1036.2,722.5 1029.2,720.7 1026.5,709.4 1032.8,701.7 1040,703.6ZM800,285.7 782.1,295.6 782.6,299.5 796.4,307.5 802.6,301.9ZM1380,324.1 1382.6,319 1393.1,314 1400,322.4 1400.1,326.3 1384.3,328.4 1380.6,325.7ZM1424,456.1 1431.9,454.9 1435.1,448.2 1432.7,443.2 1419.6,443.3 1417.1,449.5ZM1597.6,879.2 1597.4,878.7 1589.7,872.4 1580.1,879.9 1580.3,880.1 1588,884 1591.6,889.4 1592.6,888.9ZM1537.1,816.7 1537.6,815.7 1533.9,809.6 1527,808.3 1521.8,814 1521.2,818.1 1526.8,821.7ZM1067.5,825 1069.4,839.3 1053.4,831.9 1056.9,823.9ZM1197.9,812.9 1193.2,801.2 1198.2,793.1 1203.7,792.8 1207.6,795.7 1208.2,811.9ZM1267.2,392 1278.3,383 1288.1,394.4 1280.1,401.6 1268,396.3ZM1224.8,664.6 1238.1,675.9 1243.7,671 1239,656.8 1230.4,654.9 1224.9,659.8ZM1105.9,676.4 1096.9,670.5 1097.5,663 1104.2,656.4 1117.4,665.9 1114.6,673.6ZM1395.4,344.8 1393.2,340.2 1400.6,331.5 1407.4,340 1406.8,345.4 1404.2,346.8ZM837.8,648.8 832.7,643.7 837.9,629.3 847.5,629.3 853.3,640.7 845.2,650.4ZM1117.1,825.7 1115.3,815.2 1120.8,811.5 1127.3,813.6 1130.5,822.2 1118,826.5ZM1039.2,394.3 1032.1,397.6 1040.1,414 1046.9,414.6 1052.8,409.9 1050.3,399.3ZM1354.3,410.8 1361,395.9 1366,397.4 1369.9,410.4 1368.2,412.8ZM1884.8,473.4 1886.4,472.2 1893.4,473.5 1895.2,484 1882.9,487.4 1881.9,486.9 1881.6,485.6ZM948.6,566.4 948.5,576.2 948.4,576.2 936.2,579.6 933.2,577.3 930.7,566.1 936.8,560.4ZM1509.2,675 1501.6,669.7 1496.6,670.3 1496.4,682 1507.4,683ZM1440.9,546.5 1445.9,558.9 1454.7,553.1 1455.4,550.7 1448.7,542.1 1441,546.1ZM1299.8,506.8 1290.8,507.4 1288.9,502.1 1297.1,492.7 1302.9,494.1 1304.5,498.3ZM925.2,851.1 926.2,844.3 912.3,843.4 911.3,848.5 917,851 917.8,856.8ZM1612,608.3 1609.2,597.9 1616.2,593.1 1618.3,593.7 1623,598.8 1620.9,605ZM1204.3,419 1203.4,406.7 1213.6,402.5 1216.3,403.1 1217.8,413.8 1212.6,420.4ZM1479,731.6 1465.5,722.8 1460.8,726.3 1462.2,737.3 1462.7,737.7 1476.2,735.4 1478.9,732.2ZM1439.6,315.4 1442.6,318.9 1450.3,319.4 1453,317.2 1454.4,311.6 1446,306 1441.4,307.5ZM1559.8,760.8 1561.2,771.8 1560.2,773.6 1557.4,774.3 1547.5,769.7 1551.2,762.5 1558.5,760.2ZM970.1,630.5 968.1,631.1 962.6,644.6 964.1,646.1 975.1,648.8 982.8,637.8ZM747.9,712.8 736.7,719.2 727.8,715 728.2,704.4 744.6,703ZM1149.3,720 1145.8,717.3 1146.7,711.3 1157.3,706 1168.1,713 1164.6,719.4ZM990.6,854.6 982.8,851.1 981.4,855 990,855 992.8,862.7 993.4,863.8ZM1327.3,356.9 1323,350.4 1314.5,351.9 1314.3,360.3 1324.3,363.3 1326.4,362.7ZM1177.9,398.8 1167,405.2 1157.2,391.3 1173.9,388.3ZM1453,568.2 1448.8,574.3 1449.9,580.4 1455.6,582.8 1465,576 1459.6,567.9ZM1206.7,625.2 1208.6,624.6 1210.6,625.7 1215.3,641.4 1207.3,648.5 1200.9,635.1ZM1292,874.3 1291.5,874 1284.8,863.1 1287.9,857.3 1296.8,855.3 1300.2,862.1 1293.2,874.2ZM1324.5,344.7 1316.3,337.6 1323.4,329.8 1326.5,329.8 1334.9,339.6 1333.9,341.6ZM1223.9,800.6 1218.6,795.9 1223.3,782.1 1223.6,782 1235.3,785.8 1237,797.1 1233.5,800.4ZM1533.4,840.2 1532.5,830.7 1528.7,828.2 1517.8,833.6 1520.6,840.2ZM1512.1,489.1 1520.1,483.7 1521.2,478.9 1507.4,475.4 1503.6,477.5 1502.7,480 1503.2,481.6ZM1563.9,647.1 1571.5,647.6 1575,640 1572.4,635.3 1564.9,638.3ZM1171.8,744.8 1185.8,756.9 1192.2,745.5 1188.2,738.8 1173.9,742.4ZM1340.7,687 1343.9,680.5 1338.8,669.6 1334.8,671.1 1330.5,681.5 1337.6,688.2ZM908.4,493.4 906.9,483.1 895.1,483.4 891,494.2 898.2,499ZM1243.4,424.5 1244.1,420.9 1257.1,414.7 1259.3,426.7 1253,432.3ZM1049.9,788.2 1036.8,777.7 1038.3,770.4 1050.4,767.3 1051.5,767.8 1051.9,788ZM1314.7,695.2 1323.6,691.8 1324.5,682.5 1321.7,680.5 1310.9,684.4 1310.5,688.7ZM923.5,642.4 924.5,635.4 916,627.3 901.9,637.7 903.6,640.6 922.2,643.4ZM962.2,696 965.3,691.1 962.5,680.6 946.1,676.7 945.1,694.1 953.1,697.5ZM810.7,562.2 821.6,572 817.2,581.9 812.2,583.5 802,578.9 806.2,564.7ZM1867.7,419.9 1876.9,416.6 1874.7,408.6 1872.6,408.4 1874,414 1866.9,419.3ZM1013.9,864.1 1020.8,860.9 1021.6,859.8 1021.6,851.1 1009.4,841.7 1006.5,843 1003.9,848.5 1008.4,861.6 1012,863 1012.4,863.7ZM1415.6,313.4 1417.7,315.9 1427.8,316.7 1429.1,315.8 1428.9,306 1422,309 1417.4,309.6ZM900.3,795.5 909.8,781.3 907.9,777.5 896,773.2 888.9,775.4 886.8,782 895.6,794.8ZM1322.2,535 1309.1,533 1303,537.6 1313.9,547.7 1321.7,541.9 1323.7,537.5ZM1462,681.7 1474.1,688.7 1473.2,695.1 1460,697.2 1457.6,689.4ZM1274.3,603.1 1264.1,614 1258.6,609 1260.3,599 1272.7,599.3ZM1566.7,717.1 1570,708.5 1578.9,711.5 1578.4,720.3 1573,722.9ZM1567.4,616.4 1570,626.3 1561.4,628.7 1556.9,622.4 1563.3,614.9ZM1280.6,848.1 1276.1,840.4 1282.2,831.8 1282.3,831.8 1291.2,835.9 1289.4,844.5 1283.9,848.4ZM1050,809.7 1050.8,812.5 1053.3,813.7 1065.4,810 1068.6,800.8 1059.6,790.4 1058.4,790.5ZM1309.4,487.1 1302.9,494.1 1297.1,492.7 1291.5,483.9 1302.9,473.8 1303.5,474.2ZM1592.6,888.9 1602.4,894.5 1609.4,888.1 1607.7,882.4 1597.6,879.2ZM1173.5,702.9 1163.8,693.3 1158.3,696.4 1157.3,706 1168.1,713 1169.1,712.5ZM1368.2,417.6 1375.3,422.9 1385.6,421.1 1386.4,420 1385.2,411.2 1381.5,409.1 1369.9,410.4 1368.2,412.8ZM846.6,560.1 843.4,576 850.6,581.3 860.8,579.5 864.2,569.6 862.1,565.2ZM1672.8,772.5 1669.5,777.3 1658,780.1 1655.8,768.2 1657,766 1661.7,765.5ZM1192.3,409.2 1183.1,402.8 1179.8,415.6 1181.2,418.1 1191.4,417.7ZM1645.9,574.9 1637.4,572.1 1634,575.3 1634,575.3 1641.8,589 1643.3,588.6 1645.9,586.1ZM899.9,566 884.8,561.3 878.8,571.9 882,580.1 889.8,583 896.2,579.9ZM1488.2,664.7 1488.1,664.6 1479.6,663.4 1470,669 1469.7,671.5 1477.9,677.9 1484.4,675.4ZM1665.6,445.9 1665.9,447.4 1672.8,449.3 1671.4,447.4 1670,440.6ZM1584.7,838.5 1576.6,835.7 1575.5,830 1580.3,825.2 1585.6,826.8 1587.2,835.9ZM1253.5,475.3 1244.5,473.1 1242.2,474.9 1245,491.6 1251.9,494.1 1257,481.3ZM1181.4,699.8 1183.9,696.5 1193.8,698.7 1197.2,707.5 1192.3,715.9 1187.1,713.8ZM1450.7,689.2 1445.7,697.7 1449.8,701.8 1458.7,700.1 1460,697.2 1457.6,689.4ZM991.8,594.1 1002.4,598.1 1008.6,590.2 1007.7,583.3 994.8,578.5 991.6,582.8ZM1354.1,688.3 1354.5,679.7 1355.1,679 1368.6,682.6 1370.7,687 1367.1,692.4 1361.4,694.1ZM782.6,299.5 796.4,307.5 796.8,315.7 788.1,322 773.3,310.9ZM966.3,488.9 970.4,496.1 957.7,509.9 956.5,509.7 949.3,498.8 961.6,487.7ZM1495.2,346.7 1498.1,347.8 1501.1,358.3 1491.4,362.7 1487.7,360.7 1485.8,356.7ZM923.5,642.4 924.5,635.4 932.4,630.2 942.4,637.9 938.2,650.8ZM911.5,540.9 906.4,535 897.1,533.5 894,536.2 892.1,545.3 905.2,554.5 908.9,552.3ZM1027,822.6 1038.8,827.5 1032,840.1 1022.2,833.9 1024.4,823.2ZM1392.7,562.6 1382.9,563.4 1379.5,575.4 1387.2,577.8 1393.3,575.2 1397.2,567.4ZM1050.3,399.3 1052.8,409.9 1057.1,410.2 1069.5,401.6 1069.3,401 1058,389.4ZM1362.6,365.5 1356.5,374.2 1348.4,366.6 1352.8,360.2 1359.8,359.5ZM1277.6,309.4 1282.7,319.8 1285,320.9 1294.4,318.6 1292,309.9 1290,310 1279.4,308.1ZM1556,750.6 1558.5,760.2 1551.2,762.5 1546.8,752.7 1547.5,751.2 1550,749.7ZM1097.7,865.6 1098.5,861.7 1090.7,847.9 1081.1,850.8 1079.3,855.7 1086,859 1094,865 1094.5,865.5ZM1503.3,710.5 1501.2,705.9 1491,706.9 1490.2,708 1495.1,718.1 1500.2,716.6ZM1313.9,547.7 1313,551.5 1300.3,554.2 1297.9,551.7 1300.3,538.6 1301.8,537.7 1303,537.6ZM869.5,598.6 860.9,595.1 861.8,580.9 874.7,586.5 873.5,596.7ZM1648.9,804.4 1645,810.5 1646,815.5 1653.3,817.1 1657.1,811.4 1650.5,804.6ZM1467.9,527 1474.9,534.6 1464.2,540.7 1457.9,534.5 1461.6,527.4ZM1460.6,660.6 1455.1,653.1 1445.1,658.6 1447.7,667.3 1453.7,667.9ZM1400,322.4 1409.5,311.7 1408,309.6 1398.7,306.5 1393.6,309.3 1393.1,314ZM890.1,597.8 881,600.2 873.5,596.7 874.7,586.5 882,580.1 889.8,583ZM1288.4,417.5 1282.8,420.2 1273,412.7 1280.1,402.8 1288.7,414.3ZM1275.3,590 1272.7,599.3 1260.3,599 1254.9,593.4 1255.7,591.3 1266.2,584.6ZM1530,612.2 1530.2,616.1 1538.1,617.9 1541.6,614.1 1537.5,606 1536.4,605.8ZM1183.6,653 1195.4,659.7 1190.9,674 1182.9,671.9 1179.7,655ZM1615.8,428.8 1627,432.7 1630,424.3 1628.7,421.8 1617.5,422.6ZM890.3,716.1 903.9,707.3 908.9,719.7 907.8,724 901.4,728.5ZM1524,799.7 1536.5,794.8 1536.8,793.6 1527.2,785.5 1522.8,786.7 1524,799.7ZM1493.9,732.1 1482.4,728.5 1479,731.6 1478.9,732.2 1487.4,742.4 1493.4,741.2 1495.8,738.4ZM1137.9,663.5 1141.2,661.9 1153.1,674.8 1133.7,679.5 1132.5,674.7ZM1443.3,872.6 1444.8,885.2 1446.9,885.6 1448,881 1455.3,875.5 1454.2,872.6 1443.8,871.7ZM1518.8,844.1 1510,847.8 1510.1,856.7 1511.5,858.4 1526.1,856ZM1314.5,696.3 1314.7,695.2 1323.6,691.8 1332.8,697.2 1326.3,705.6 1319.6,704.7ZM1239.6,459.3 1228.8,457 1228.4,466.6 1239.9,475.1 1242.2,474.9 1244.5,473.1 1244.8,467.9ZM1462,791 1457,802.9 1455.3,804 1449.1,802.3 1450,790.1ZM1662.2,432.7 1663.7,432.9 1662.3,429.4ZM982.9,721.1 978.2,721.4 974.7,708.1 983.1,703.5 990.8,705.1 993.2,712ZM1435,759.3 1440,764.2 1438.5,772.3 1431.1,774.1 1422.7,765.4 1431,759.4ZM1290.8,507.4 1288.2,513.8 1284.8,514.6 1274.5,510 1275.5,496.3 1278.4,495.6 1288.9,502.1ZM686.6,530 679.6,516.1 687.7,509 692.6,509.4 695.8,511.6 698,524.6ZM1453,317.2 1461.7,319.7 1461.8,319.6 1460,315 1455,312 1454.4,311.6ZM1280.6,804.6 1281.1,804.6 1293.3,793.9 1287.4,785 1283.2,782.8 1275.4,798.1ZM912.3,843.4 908.2,837.4 899.6,841.1 899.1,842.8 900,843 908,847 911.3,848.5ZM1044.4,458.9 1049.1,460.7 1047.4,478.5 1034.2,475.8 1038,462ZM1897.4,413.3 1907,419.4 1908.6,419 1913.6,409.7 1913.1,409 1900.4,408.6 1897.3,412.9ZM1483.8,356 1470.6,361.1 1470.2,362.2 1471.5,366.2 1479.7,371.3 1487.7,360.7 1485.8,356.7ZM1585.5,854.9 1583.6,862.6 1578,862.9 1572.3,852.9 1575.1,848.4 1580.3,847.6ZM1606.7,555.4 1594.2,556.3 1596.4,545.4 1600.7,544 1608.2,552.9ZM1127.2,841.5 1128.4,840.9 1134.1,824 1130.5,822.2 1118,826.5 1118.4,834.8ZM1583.6,721.7 1578.4,720.3 1578.9,711.5 1585.2,707.6 1586.7,708.2 1588.2,717.6ZM1081.2,473.2 1083.4,469.6 1081,462.4 1070.4,459.5 1064.1,470.5 1064.1,470.7 1072,476.3ZM1306,645.6 1311.9,642 1320.9,646.6 1321.4,648.1 1319.4,653.9 1313.1,657.2 1309.8,655.7ZM726.7,503.2 742,505 747.5,499.4 729.6,485 724.1,491.1 723.3,499.8ZM1552.8,466.2 1548.5,481.6 1556.3,483.4 1560,481.9 1558.8,469.4ZM1065.1,759 1055.9,745.5 1057.3,742 1066.7,738.7 1077.8,746.3 1077.8,746.4 1073.3,755.8ZM1210.2,701.7 1218.6,701.6 1220.1,713.1 1210,720.6 1205.3,707ZM1185.1,874.5 1190.7,886.3 1185.6,893.9 1180.1,895.8 1176.3,892.9 1174.2,876.4ZM1572.5,452.7 1579.7,457.9 1571.1,468.9 1567.7,467.2 1566.3,455.4ZM1454.1,771.3 1442.1,775.9 1442.8,783.3 1445,785.9 1446.9,786.4 1454.5,780ZM1371.7,300.8 1373.8,305.2 1379.2,306.6 1385.4,303.6 1380,299 1372,301 1371.7,300.7ZM1630.3,498.4 1626.2,494.2 1619.7,495.3 1614.5,507 1614.8,508.3 1618.5,509.8 1622.7,509.4 1624.2,508.3 1624.2,508.3ZM1379.5,575.4 1378.2,576 1376.3,585.2 1382.4,592 1387.1,591.9 1389.8,587.9 1387.2,577.8ZM1600.8,487.1 1609,491.5 1613.7,489.8 1616.1,482.7 1615,480.6 1607.4,477.4 1601.5,482.9ZM1395.1,836.7 1390.7,838.5 1384.6,836.9 1380.7,831.7 1381.1,826.5 1387.7,821 1391.7,821.1ZM1212.5,836.1 1212.6,845.6 1217.9,848.7 1225.5,845.6 1225.4,834.4 1214.4,833.6ZM1559.3,827.4 1554.9,817.9 1548,819.7 1545.7,828.6ZM852.9,782.3 852.2,789.5 844.7,793 835.9,788.8 840.7,776 847.4,775.7ZM1343.3,515 1344.1,521.9 1355.3,524.6 1357.9,514.6 1350.9,509.4ZM1200,603 1209.7,593.4 1216.2,593.6 1217.7,608.9 1210.1,612.4 1199.9,604.9ZM1232.9,563.7 1226.7,571.5 1227.2,575.3 1235,579.1 1243.6,569.5 1238.5,563.2ZM1347.4,629.2 1356.3,623.5 1354.5,613.5 1338,620.5 1340.2,626.4ZM1341.9,885.4 1343,873.4 1334.3,871.6 1329,880 1334.2,888.5ZM886.3,661.4 889,657 903.6,653.9 906.5,656.7 905.5,668.2 901.9,671.5 892.3,670.2ZM1336.9,369.4 1346.5,381.1 1357,377.1 1356.5,374.2 1348.4,366.6 1340.6,366.6ZM1279.3,336.6 1279.8,348.4 1275.2,350.9 1265.4,348.5 1265.1,347.9 1268,335.5 1272.2,333.6ZM1319.5,323.8 1322.3,313.9 1319.1,310.5 1308.8,313.6 1311.1,323.4ZM1607,459.3 1604.1,460.4 1600.3,469.2 1606.8,473.3 1611.3,468.2ZM1190.7,886.3 1197.4,886.2 1202.7,892.2 1199.8,905.3 1185.6,893.9ZM1258.5,458.4 1262.6,462.7 1274.7,459.4 1275.7,454 1265.7,442.8 1264.3,443.2ZM1234.6,379.8 1235.1,371.1 1223.1,372.2 1220.1,383 1227,384.8ZM874.1,637.2 884.2,629.9 884.4,629.9 892.4,637.1 886.4,647.5 874.5,644.7ZM1157.4,899.5 1150.7,893.7 1160.6,881.8 1167.1,893.5 1162.1,899.2ZM1453.3,343.6 1449.1,343.2 1444.2,334 1453.7,329.7 1456.3,331 1456.5,341.2ZM1243.1,890.2 1250,886.9 1251.5,878.8 1240.1,874.9 1238.6,887.2ZM1175.9,633.6 1187.7,643.7 1192.8,635.4 1188.5,624.1 1184.2,624.3ZM1472.1,803.2 1463.6,791 1462.3,790.8 1462,791 1457,802.9 1470.5,805 1472.1,803.5ZM1616.4,412.7 1616,412.6 1608.1,410.5 1605.6,410.3 1606.7,415.8 1607.5,416.4 1614.8,416.6 1616.6,413.9ZM1865.7,398.6 1865,398.2 1864,399 1865.3,400.9ZM1383.9,787.9 1385,783.3 1394.5,780.5 1401.5,786.6 1387.8,793.7 1385.2,791.9ZM1279.5,425.9 1270.1,425.1 1267,413.9 1273,412.7 1282.8,420.2ZM1138.4,883 1127.6,871.5 1135.5,862 1147.5,874 1140.4,882.7ZM1625.7,471.1 1620.2,471.3 1615,480.6 1616.1,482.7 1627.3,483.9 1628.8,478.4ZM922.7,538.9 925.7,534.7 919.1,523.7 914.3,522.5 906.4,535 911.5,540.9ZM1865.7,398.6 1865.3,400.9 1866,402 1872,406 1872.6,408.4 1874.7,408.6 1875.1,408 1875.1,400.2 1870.2,396ZM1010.6,735 1014.3,723.9 1013.4,722.8 1000.3,720.2 996.3,731.3ZM1853.9,463.1 1848.5,463.8 1845.6,461.1 1845.2,454.6 1851.2,450.4 1856.2,457.3ZM958.7,879.7 943.1,877.7 942.7,878.1 942.3,880.3 946,881 951.4,881.5 958,884 960,880.9ZM1512.2,662.7 1512.6,657.7 1523.4,653.1 1526.1,657.4 1523.1,664.3 1513.7,665ZM1299.1,659.6 1297.3,664 1297.4,664.1 1312.4,669.1 1313.3,668.6 1313.1,657.2 1309.8,655.7ZM1448.2,843.7 1446.6,839.7 1452.7,834.3 1456.3,834.5 1462,844.9 1461,846.8ZM1291.6,728.3 1306.2,716.6 1310.9,730.6 1309.6,731.8 1298.6,734.1ZM1421.6,854 1433.5,861.5 1433.7,861.5 1435.9,849.5 1434.3,847.1 1422.7,849.9ZM698.3,494.1 693.6,487.2 707.3,477.5 707.4,477.5 711.8,487.3 706.2,495.3ZM1604,522.8 1596.5,516.9 1596.6,510.5 1596.9,510.1 1610.1,512.1 1608.7,520ZM1228.4,612.7 1232.3,614.1 1238.9,625 1236,632.7 1227.2,632.6 1221.4,625.3ZM1435.5,623 1442.4,622.2 1444.7,616.9 1439.6,607.4 1434.7,606.3 1432.2,607.5 1429.7,612.4ZM686.8,485.3 686.3,484.6 675.7,480.9 668,489 672.9,498.6 681.2,498.5ZM762.3,691.9 771.2,691.6 775.5,702.2 775.1,703.1 762.3,705.1 758.3,699.1ZM1465.1,343 1468.3,348.9 1468.5,348.9 1478.3,345.7 1479,344.5 1477.8,337.3 1471.2,334.4 1470,336 1466.5,339.5ZM961.2,309.4 961.8,307.1 960,307 954.4,308.8 952.9,308.8 954.2,312ZM1585.4,628.2 1596.6,638.6 1601,637.1 1601.8,626.4 1586,627.7ZM1052.7,328.5 1067,333.8 1068.3,343.1 1066.2,346.6 1051.2,342ZM1877.7,519.6 1879.3,521 1880.1,518.4ZM831.5,664.7 825.8,678.2 840.1,681.1 845.8,674.8 844.3,668.5ZM1609,664.7 1612.8,654.9 1600,653.9 1598.1,654.8 1599.6,660.3 1606.2,665.6ZM1193.8,555.4 1183.8,565.3 1176.9,561.8 1179,552.2 1184.6,548.9ZM933.3,707.6 930.1,722 945.2,722.2 948.9,716.9 936.3,706.5ZM1300.3,554.2 1300.4,561 1288.9,567.8 1286.1,555 1288.5,552.1 1297.9,551.7ZM1251.8,571.5 1255.6,560.5 1270.8,562.3 1272.6,568.4 1264.5,575.9 1252.6,573ZM1220.3,809.5 1208.4,812.1 1211.2,823.2 1211.6,823.5 1225.8,819.5ZM1032.9,640.5 1031.6,633.6 1039.9,624.3 1048.1,635.6 1045.7,642ZM1663.6,810.2 1657.1,811.4 1653.3,817.1 1653.8,818.7 1660,815 1664,811.5ZM950.7,634 950.8,633.3 944.3,621.5 935.7,620.8 934.8,621.5 932.4,630.2 942.4,637.9ZM1155.8,781 1152.3,773.1 1158.6,766.3 1171.4,767.7 1171.5,769.2 1158.3,782ZM1035.8,738 1037.4,736.1 1037.1,723.5 1036.2,722.5 1029.2,720.7 1023.9,724.7 1026,738.7ZM925.5,490.7 926.7,483.2 927.5,482.9 942.3,485.8 945.1,497.7 936.3,502.4ZM1036.6,434 1041.3,446.6 1053.3,442.9 1047.8,430.6ZM994.7,577.7 980.7,568.6 984.1,559.1 986.4,557.8 998.5,567.7ZM826.2,775.9 836.4,772.3 840.7,776 835.9,788.8 833.2,789.8 824.5,783.9ZM1298.6,734.1 1297.6,744.9 1305.2,749.6 1308.4,748.7 1309.6,731.8ZM1503,699.6 1501.2,696.7 1508.4,684.6 1512.5,686.6 1516.5,694.8 1511.4,699.8ZM1095.2,708.9 1088.4,720.5 1108.2,726.4 1109.4,722.7 1099.9,708ZM1438.4,349 1435.5,338.9 1423.5,339.1 1422.8,342.9 1430.5,353.9ZM1387.5,805.7 1396.5,814.1 1402.5,801.5 1390,798.4ZM802.8,531.8 807.7,528.1 821.9,530.7 822,531.1 816.1,541.6 807,541.3ZM1512.2,662.7 1512.6,657.7 1508.8,653.2 1504.6,652.8 1500.5,657 1504.6,663.4ZM719.1,591.9 707,606.7 708.8,609.5 721.4,614 726.1,609.5 721.1,592.7ZM1304.8,511.8 1303.6,519.6 1309.7,522.6 1317,520.4 1317.2,507.4 1316.5,506.8ZM1491.6,685.1 1490.4,688.4 1475.9,687.3 1477.9,677.9 1484.4,675.4ZM922.7,538.9 925.7,534.7 928.6,534.2 938.6,539.9 940.1,548.2 936.3,552.1 926.6,549.7ZM1193.6,392.2 1182.2,400.5 1183.1,402.8 1192.3,409.2 1200.6,405.4 1195.5,392.5ZM1604,522.8 1603.4,524.5 1607.2,535.3 1616.3,526.5 1608.7,520ZM1251.8,571.5 1243.6,569.5 1235,579.1 1238.4,585.8 1250.8,578.8 1252.6,573ZM1305.9,784.6 1301.1,794.6 1311.6,799.6 1321.9,790.6 1321,788.1ZM1618.9,903.6 1618.6,903.4 1616.7,902.8 1609.8,905 1609,908.5 1612,913 1617.4,912.9 1619,912.8ZM1053.2,654.6 1064.3,639.2 1073.3,643.9 1073.5,644.5 1069.9,653.4 1055.3,655.6ZM1875.1,408 1886.6,404.7 1886.9,403.1 1886,404 1876,401 1875.1,400.2ZM1194.6,365.5 1194.7,374.5 1207,379.9 1209.4,366.9 1207.5,365.1ZM1129.7,796.3 1142.1,788 1135.2,777 1124.5,783.4ZM1116.5,862.3 1126.7,853.7 1125.1,847.6 1109.2,849.6 1108.8,853.4ZM1303.8,432.2 1307.6,433.9 1310.3,444.5 1303.7,448.5 1297.5,442.9 1297.6,433.1ZM991.1,306.8 977.4,307.8 975.8,311.7 983.9,323.8 991.6,319.7ZM1391.3,604.6 1392.1,600.2 1402.9,594.2 1407.9,596.1 1404.9,606.9 1394.4,607.1ZM1390.1,393.6 1396.3,389.1 1402.1,391.3 1404.7,398.6 1397.2,405.3 1393.8,404.8ZM1127.3,813.6 1134.3,804.9 1129.3,797.6 1119.4,800.2 1120.8,811.5ZM1611.6,870.1 1618,863.8 1617.5,861.4 1608.7,856.9 1604.6,866.2 1605,867ZM1028.6,450.5 1029.8,458.1 1038,462 1044.4,458.9 1040.7,448ZM1244.1,385.7 1234.6,379.8 1227,384.8 1231.4,392.2 1239.1,392.5ZM993.4,404.3 980.4,415.1 981.2,420.4 996.2,422.8 998.1,420 995.8,405.8ZM1280,805.6 1279.7,817.9 1269.6,821.3 1265.2,813.6ZM1252.6,640.1 1253.7,624.6 1261.3,622.5 1267.5,631.9 1260,640.4ZM1229.7,650.8 1220.4,641.1 1227.2,632.6 1236,632.7 1238.1,636.4ZM1263.8,377.6 1264,389.4 1267.2,392 1278.3,383 1278.6,378.4 1272.5,374.5ZM1325.5,302 1335.5,303.4 1337.5,299.5 1330.7,290.2 1323,296.1ZM957.8,643.3 962.6,644.6 964.1,646.1 958.9,662.2 955.3,662.4 947.4,652.3ZM1370.5,672.1 1368.6,682.6 1355.1,679 1355.4,671.6 1367.3,668ZM726.8,671.6 726.4,671.2 712.7,670.9 707.7,679.3 711.6,684.7 722.8,684.2ZM1562.2,844.6 1560.9,849 1565.1,853.8 1572.3,852.9 1575.1,848.4 1570.9,840.5 1570,840.3ZM1347.9,691.5 1354.1,688.3 1361.4,694.1 1357.1,700.9 1348.2,701.6ZM1363,423.3 1368.2,417.6 1368.2,412.8 1354.3,410.8 1354.3,410.8 1353.5,420.3 1356.9,423.4ZM1299.8,506.8 1304.5,498.3 1315.4,503.8 1316.5,506.8 1304.8,511.8ZM1082,794.6 1093.5,792.8 1094.1,793.8 1095.8,809 1084.5,813.7 1077.6,800ZM1653,573.4 1663,570.9 1663.9,571.4 1664.6,579.6 1664,580.3 1655.8,581ZM1898.4,436.7 1892,432.5 1883.8,433.9 1883.1,436.5 1891.3,446.9 1899.3,439.9Z"/>
<path fill="#c5c3be" d="M1303,537.6 1301.8,537.7 1297.2,522.3 1303.6,519.6 1309.7,522.6 1309.1,533ZM1231.2,594.7 1231.3,595.1 1245.3,603.2 1250.7,595 1238.4,586.1ZM976.6,614.4 986.8,627.1 984.7,637 982.8,637.8 970.1,630.5ZM1610.1,512.1 1614.8,508.3 1614.5,507 1607.5,499.8 1596.8,501 1596.9,510.1ZM1281.1,690.9 1293.2,687.5 1294.6,679.2 1282.9,674.3 1280.5,676 1279.1,688.5ZM1277.8,588.6 1283.8,573.5 1272.6,568.4 1264.5,575.9 1266.2,584.6 1275.3,590ZM1053.6,722.1 1051.4,725.1 1052,735.3 1057.3,742 1066.7,738.7 1069.6,729.6 1065.7,720.8ZM1263.9,669.8 1255.3,679.8 1256.1,687.3 1264.5,687.8 1268,685.6 1269.9,674.7 1266.8,670.5ZM1038.3,770.4 1033.2,765.2 1034.9,754.6 1040.8,750.4 1048,751.4 1050.4,767.3ZM1340.6,366.6 1348.4,366.6 1352.8,360.2 1348.2,350.9 1341.3,354ZM1392.7,562.6 1395,551.5 1379.7,548.7 1375.8,554.3 1382.9,563.4ZM1013.9,864.1 1012.4,863.7 1014.1,866.2ZM1243.3,700.2 1250.4,703.6 1250.1,710.2 1237.8,716.9 1237,716.9 1235.8,716.3 1234.8,703.9ZM935.3,861.8 925.2,851.1 917.8,856.8 918,857.8 918.8,863.7 920.5,865.4 926,867 926.9,867.7ZM905.5,688.2 904.6,687.4 893.6,686.1 886.5,691.9 886.7,698.7 888.2,700.4 902.2,701.6 905.9,689.9ZM1492.3,796.9 1489.1,800.1 1495.3,810.5 1498.2,810.7 1503.4,802.9 1499.6,796.3ZM899.9,566 884.8,561.3 884.5,560.5 887,548.9 892.1,545.3 905.2,554.5 901.2,565.2ZM960.1,598.3 969.3,601.5 973.6,611.8 959.6,617.5 952.6,613.7 951.2,608.1ZM1275.8,861.8 1272.8,855.9 1280.6,848.1 1283.9,848.4 1287.9,857.3 1284.8,863.1ZM940.1,548.2 953.6,549.1 953.6,561.4 948.6,566.4 936.8,560.4 936.3,552.1ZM1461.7,319.7 1464,328.6 1466.8,329.6 1467,329 1468,323 1462,320 1461.8,319.6ZM1189.2,869 1195.1,868.5 1204,860.3 1201.4,851 1200.1,850.1 1184.5,855.4 1183.6,857.1ZM1277.8,588.6 1286.3,592 1289.6,602.9 1287,605.1 1277,604.9 1274.3,603.1 1272.7,599.3 1275.3,590ZM1444.7,593.1 1440.9,589.9 1435.6,594.7 1434.7,606.3 1439.6,607.4 1445.4,603.8ZM1362.4,709.7 1357.1,700.9 1361.4,694.1 1367.1,692.4 1372.6,704.7 1370.9,709.3 1370.6,709.6ZM1394.5,448.9 1395.6,454.6 1401.7,460.3 1408.8,458.7 1411.7,451.7 1401.6,443.1ZM1132.1,443.3 1134.4,455.1 1127.8,461.5 1122.7,461.5 1117.7,451.2 1125.7,441.7ZM1337.6,688.2 1330.5,681.5 1324.5,682.5 1323.6,691.8 1332.8,697.2 1333.2,697.1ZM1185.1,874.5 1190.7,886.3 1197.4,886.2 1203,878.1 1195.1,868.5 1189.2,869ZM858,480.1 860.4,483.1 866,484.2 880,473.9 880.9,472.2 878.7,469.3 863.3,465.5 860.3,468.4ZM1185.8,756.9 1186.2,759.7 1193.4,765.3 1205.1,757.4 1205.9,755.6 1204.2,747.9 1192.2,745.5ZM1174.8,685 1175.7,675.4 1182.9,671.9 1190.9,674 1192.6,676 1192.7,680.6 1183.1,691.6ZM1267,413.9 1259.8,410.6 1257.1,414.7 1259.3,426.7 1266.7,428.9 1270.1,425.1ZM1029.8,458.1 1023.2,465.2 1024.1,471.9 1033.8,475.9 1034.2,475.8 1038,462ZM1266.1,829 1269.1,825.9 1269.6,821.3 1265.2,813.6 1264.4,813.2 1251.9,817.2 1251,822.1 1254.6,828.4ZM1437.4,893 1437.3,893.1 1437.4,893ZM862.1,565.2 864.2,569.6 878.8,571.9 884.8,561.3 884.5,560.5 868.8,554.7ZM942.8,595 934.6,590.6 929.7,593.7 932.3,606 936.2,608.3 943.9,604.5ZM868.4,771.3 856.2,760.7 856,760 864.1,749.4 876.8,748.3 881.2,752.5 878.8,767.5ZM1142.6,634.7 1129.8,636.4 1128.7,647.5 1143.1,651.6 1146.5,640.9ZM1469.2,611 1467.5,617.6 1459.4,621.3 1452.9,614 1454.7,606.6 1465.5,605.7ZM1382.9,563.4 1375.8,554.3 1372.9,555 1366.5,560 1372.4,574.1 1378.2,576 1379.5,575.4ZM960.1,598.3 969.3,601.5 975.3,593 974.9,586.4 963.9,582.2 958.3,594.4ZM1351.1,342.6 1341.3,337 1334.9,339.6 1333.9,341.6 1336.2,351.1 1341.3,354 1348.2,350.9 1351.8,345.3ZM1237.3,429.6 1227.8,425.2 1227.5,416.8 1236,409.4 1236.1,409.4 1244.1,420.9 1243.4,424.5ZM972,866.9 974,865 980,855 981.4,855 982.8,851.1 979.6,846.7 978.4,846.4 966.4,854.8 965.8,861.1ZM1388.3,750.8 1385.6,759.2 1374.8,762.3 1370.6,754.8 1379.1,747 1384.7,746.9ZM977.6,583.7 976.8,570.6 980.7,568.6 994.7,577.7 994.8,578.5 991.6,582.8ZM800.9,745.4 796.2,741.4 795.5,735.9 799.9,727.9 812.1,729.4 816.6,735.9 808.9,744.2ZM1122.5,296.4 1120.7,296 1117.8,294.7 1112.3,298.2 1112.1,305.6 1121.3,310.5 1125.9,304.5ZM1244.8,467.9 1244.5,473.1 1253.5,475.3 1262,467.9 1262.6,462.7 1258.5,458.4 1254.6,458ZM1339.8,838 1333.7,852.2 1324.7,846.4 1325.5,835 1338.5,836ZM1171.4,500 1160.3,508.6 1157.3,507.7 1150.7,499.9 1155.9,490.8 1163.1,489.1ZM1268.7,765.4 1269,765.4 1283,773.6 1281.8,780.8 1266.6,781.6 1264.1,773.3ZM1437.6,648.3 1437.5,648.2 1440,637.9 1444.4,635.5 1453.6,640.1 1454.4,646.4ZM1280.6,804.6 1275.4,798.1 1266.2,795.5 1262,801.5 1264.4,813.2 1265.2,813.6 1280,805.6ZM1132.1,443.3 1133.1,442.6 1146.4,443 1147.1,458.3 1134.4,455.1ZM1404.2,346.8 1406.8,345.4 1413.9,349.6 1415.2,355.9 1411.6,360.2 1408.2,361.1 1400.9,357.3ZM1583.6,721.7 1578.4,720.3 1573,722.9 1572.2,728 1583.4,733.2 1587.6,731.5ZM1319.4,904.9 1315.5,906.8 1313.3,912.5 1318,912 1320.8,905.6ZM1194.5,319.8 1193.5,334.3 1204,338 1211,330.3 1197.8,318ZM1045.2,535 1041.6,542.7 1049,551.7 1058.6,544.3 1055.9,535.3ZM1615.2,617.3 1618.3,618.5 1620.8,623.3 1616.3,631.9 1603.7,623.7 1603.7,622.7ZM895.1,483.4 891,494.2 885.7,495.3 881.6,492.5 880,473.9 880.9,472.2 887.6,472.3ZM934.3,661.2 923.6,662.8 919.3,672.7 920.6,677.7 927.1,681.8 941.7,672.8ZM1344.5,296.7 1354.5,302.7 1361.2,296.4 1361.2,293.6 1360,293 1354,287 1345.3,289.6ZM1332.4,775.8 1341.9,770.1 1335.6,761.7 1326.6,762.6 1324.8,764.3 1324.8,765.9ZM923.6,662.8 917.2,655.8 906.5,656.7 905.5,668.2 919.3,672.7ZM1252.5,374 1251.1,375.1 1248.6,384.3 1252.8,388.7 1264,389.4 1263.8,377.6 1256.4,373.7ZM1252.5,374 1250.8,358.5 1261.3,357.7 1264.7,363.2 1256.4,373.7ZM730,415 734.7,412.9 747.8,414.8 749.1,417.2 745.6,431.8 734,430.2ZM1438.4,571.8 1434.4,575.1 1434.5,580.8 1440.7,587.2 1449.9,580.4 1448.8,574.3ZM1443.5,671.1 1447.7,667.3 1445.1,658.6 1440.3,656 1434.1,663.3 1438.9,671.3ZM1210.9,491.3 1225.2,487.3 1228.9,492.8 1222.5,507.1 1213.8,508.3 1207.7,497.1ZM1457.9,534.5 1450.9,535.5 1448.7,542.1 1455.4,550.7 1464.4,546.1 1464.2,540.7ZM1319.1,309.9 1319.1,310.5 1322.3,313.9 1334.6,315.5 1336.4,312 1335.5,303.4 1325.5,302ZM1444.9,839.1 1434.8,843.3 1429.4,835 1430.9,830.5 1439,828.7ZM1621.3,525 1629.8,522.8 1632.7,514.7 1630.5,513.4 1625.7,514.4 1619.5,515.4ZM1618.5,509.8 1618.9,512.2 1622.7,509.4ZM902.6,430.2 901.8,428 885.9,423.4 884,424.8 885.7,436.8 897.7,440.2ZM1238.1,675.9 1235.3,683.5 1235.8,684.2 1242.3,688.3 1255.6,687.9 1256.1,687.3 1255.3,679.8 1244.3,671 1243.7,671ZM1138.8,302.1 1140.7,304.5 1156.6,301.9 1158.9,296.8 1154.1,297.4 1146.3,299.7 1140,300 1138.7,299.6ZM1178.8,515.2 1178.9,515.3 1181.1,522.4 1178.1,529.3 1164.7,531.6 1161.7,528.1 1166.4,516.8ZM1320.8,451.2 1334.8,449.2 1336.1,456.9 1331.4,465 1319.2,460.3 1318.2,458.8ZM848,594.9 850.6,581.3 843.4,576 836.6,578.9 833.3,591.6 842.4,596.2ZM1179.1,832.5 1171.2,828.1 1159.5,833.4 1160.2,837.5 1168.6,845.1 1180.9,839.5ZM1051.9,788 1051.5,767.8 1062,767.5 1064.8,770.7 1065,784.4 1059.6,790.4 1058.4,790.5ZM1203.8,539.1 1213.1,549.6 1225.2,538.2 1217.7,528.9 1205.9,533.5ZM1404.7,398.6 1407.6,399.1 1412.7,405.1 1404.2,414.1 1397.2,405.3ZM1267.9,535.7 1262.9,538.5 1255.3,534.8 1254.4,525.1 1255.1,523.9 1269.4,523.5 1270.1,524.2ZM1478.3,819.6 1490.6,824 1491,813.7 1482.5,811.5ZM1142.6,634.7 1129.8,636.4 1127.7,633.8 1128.8,620.7 1140.1,622.5 1144.5,628.2ZM1197,352.4 1189.4,346.8 1182.4,348.6 1179.6,352.9 1189.5,362.5 1192.1,362.5ZM693.6,542.8 701.5,550 709.5,545.8 706.2,532.1ZM1308.3,846.6 1310.4,859.8 1308.6,861.7 1300.2,862.1 1296.8,855.3 1298.1,851.1 1307.1,845.4ZM1202.4,583.2 1211.4,577 1211.2,571.6 1201.9,565.4 1195.5,573.4 1199.7,582.6ZM1300.3,538.6 1291.5,537.7 1285.6,542.6 1288.5,552.1 1297.9,551.7ZM1559,729.4 1557.2,736.8 1563.8,743.3 1570.5,739.9 1570.2,730.4ZM1246.4,315.5 1257.7,313.7 1259.7,310.5 1258.8,309 1252.8,308.5 1245.9,307.7 1244.7,307.5ZM1326,816.7 1327.6,819.4 1340.2,821.8 1344.8,814.3 1344.2,809.1 1339.9,804.1 1338.7,804.3 1326,816.2ZM1306.9,416.8 1307.6,414.5 1313.5,408.4 1321.1,409.7 1324.6,419.8 1319.4,428.6 1307.1,417.5ZM1262,467.9 1262.6,462.7 1274.7,459.4 1281.4,468 1279.6,474.1 1271.6,477.1ZM838.9,743.8 843.2,754.3 835,763.5 820,759.9 820.4,755.4 828.7,745 838.6,743.7ZM874.1,637.2 866.1,632.9 858,641.2 865.2,650.4 870,650.1 874.5,644.7ZM1019.6,774 1011,771.3 1010.5,761.4 1018.5,758 1025.4,765.9ZM1216.2,593.6 1220.2,590.8 1231.2,594.7 1231.3,595.1 1227.8,611.9 1217.7,608.9ZM1288.9,746.8 1288.3,747.4 1287.1,754.9 1299.6,763.8 1305.2,749.6 1297.6,744.9ZM1409.8,375.1 1416.3,368.3 1420.8,368.8 1423.3,379.4 1418.1,380.9ZM1514.8,785.3 1511.7,791.7 1514.7,800.3 1524,799.7 1522.8,786.7 1517.2,784.5ZM1025.8,786.8 1023.5,785.3 1005.9,787.5 1009.8,800.6 1015.5,802.9 1026,787.7ZM1098.5,861.7 1090.7,847.9 1093.6,844.1 1106.4,844.5 1109.2,849.6 1108.8,853.4ZM880.6,312.7 867.4,310.6 861.4,315.6 860.9,321.4 865.3,326.7 874.6,326.9 880.8,312.9ZM675.3,516.6 667.9,504 672.9,498.6 681.2,498.5 687.7,509 679.6,516.1ZM1561.9,612.4 1551.2,610.4 1550,605.1 1562.4,599 1564.4,601.8ZM749.2,581.6 761.8,574.8 771.9,587.6 771.8,587.8 760.2,593.6 756.1,592.7ZM1263.9,669.8 1258,662.7 1258,658.8 1268.5,651.5 1274.7,662.6 1266.8,670.5ZM1264.4,813.2 1251.9,817.2 1249.5,813.7 1249.8,802.2 1262,801.5ZM966.3,564.8 968.1,568.6 976.8,570.6 980.7,568.6 984.1,559.1 971.2,554 970.6,554.4ZM1270.4,365.1 1272.5,374.5 1278.6,378.4 1287.4,372.8 1284.2,364 1275.3,361.3ZM1503.5,642.1 1500.6,632.2 1512.2,628.9 1512,641.9ZM1284,662.7 1297.3,664 1297.4,664.1 1296.6,677.6 1294.6,679.2 1282.9,674.3 1283.4,663.2ZM1284.8,514.6 1277.4,525.4 1270.1,524.2 1269.4,523.5 1270,513 1274.5,510ZM1002.3,654.5 993.1,653 991,640.2 998.3,638.7 1004.5,643.4ZM753.1,398.9 741.8,395.5 737.8,397.8 734.7,412.9 747.8,414.8 755.1,402.2ZM1317.7,731.4 1310.9,730.6 1309.6,731.8 1308.4,748.7 1313.2,749.8 1319.5,746.8 1320.3,734.4ZM1099.9,708 1109.4,722.7 1119.5,713.7 1115.9,705.9 1105.2,701.7ZM1100.3,690.1 1089.8,677 1096.9,670.5 1105.9,676.4 1102.5,690.5ZM978.1,740.8 961.3,739.7 964.6,724.8 976.9,722.6 979.3,738.2ZM1354.4,593.9 1357.1,596.2 1356,611.4 1354.8,612.3 1345.2,606.3 1345.3,597.9 1351,593.8ZM1515,644.5 1515.1,644.5 1522.9,636.7 1522.4,632.1 1512.4,628.8 1512.2,628.9 1512,641.9ZM1202.4,583.2 1211.4,577 1220.3,582.3 1220.2,590.8 1216.2,593.6 1209.7,593.4ZM948.6,566.4 948.5,576.2 962.1,578.6 968.1,568.6 966.3,564.8 953.6,561.4ZM1672.8,772.5 1669.5,777.3 1672.2,789.2 1683,785.5 1680.3,775.3 1674.2,772ZM693.9,654.8 699.4,647.3 692.5,634.8 689.9,635.5 684.3,644.2 688,648 690.4,652.4ZM1614.8,416.6 1617.5,422.6 1615.8,428.8 1612.9,431.2 1605,426.5 1607.5,416.4ZM1292.3,351.6 1299.3,356.7 1310.5,347.9 1310.2,343.2 1296.5,338.3ZM1580.8,473.4 1588.9,465 1594.7,470 1594.3,476.3 1587.2,481.5ZM1234.6,850.4 1241.6,840 1237.3,833.9 1227.8,832.5 1225.4,834.4 1225.5,845.6 1233.7,850.5ZM1445.7,559.3 1453,568.2 1448.8,574.3 1438.4,571.8 1440.4,561.8ZM1009.7,313.3 1002.6,322.3 991.6,319.7 991.1,306.8 996.5,300.3 998.7,299.9ZM984.2,824.5 991,832.8 1004.5,819.3 999.9,813.5 986.7,817.6ZM1307.3,575.5 1292.8,576.4 1294.2,587.9 1303.1,593.7 1303.3,593.6 1308.5,576.5ZM1326,816.2 1322,808.4 1326.5,798.6 1338.7,804.3ZM995.7,451.7 988.7,440 982.3,438.9 974.2,451.8 984.3,461.3 994.3,457.7ZM1044.5,381.2 1044.3,381.2 1036.6,376.2 1036.5,367.7 1050.4,362.3 1052.2,371.1ZM845.4,558.2 846.6,560.1 843.4,576 836.6,578.9 825,571.3 834.6,557ZM1528.7,828.2 1517.8,833.6 1513.5,830.4 1516.3,821.2 1521.2,818.1 1526.8,821.7ZM1235.6,812.2 1249.5,813.7 1251.9,817.2 1251,822.1 1241.2,825.5 1232.9,816.9ZM1299.6,763.8 1299.8,764.7 1307.3,767.1 1316.9,761.2 1313.2,749.8 1308.4,748.7 1305.2,749.6ZM1033.2,765.2 1034.9,754.6 1021.2,748 1018.5,758 1025.4,765.9ZM821.9,530.7 807.7,528.1 811.6,511.2 813.8,510.9 824.1,526ZM1651.4,425.2 1654,423 1644,418 1643.7,417.9 1642.9,419.1 1643.1,420.3ZM1655.8,421.4 1654.6,420 1654,422.9ZM1134.1,824 1128.4,840.9 1141.1,842.4 1145.8,830.1 1138.5,823.5ZM869.5,702.1 870.3,687.2 875.3,684.8 886.5,691.9 886.7,698.7ZM867.8,546.4 874.3,542.6 877.9,531.4 876.1,527.1 865.3,525.3 859.5,533 860.3,542.8ZM833,713.1 828.5,724.3 816.3,719.1 814,714.2 817.7,705.5 831.7,708.9ZM1267.9,535.7 1270.1,524.2 1277.4,525.4 1280.4,529.1 1277.7,539.9ZM1674.2,772 1680.3,775.3 1689.2,772.6 1687.5,763 1684.8,760.9 1675.7,767.1ZM1117.1,825.7 1101.6,826 1102.3,812.4 1105.2,811.3 1115.3,815.2ZM1026.5,709.4 1015,708.6 1013.4,722.8 1014.3,723.9 1023.9,724.7 1029.2,720.7ZM1209.6,877.8 1212.2,889.8 1202.7,892.2 1197.4,886.2 1203,878.1ZM1416.3,534.7 1419.3,535 1429.6,522.2 1420.3,517.1 1414.1,524.3ZM1335.7,651.5 1334,657.1 1339.5,668.5 1349.1,664.5 1349.9,662.1 1346.3,652.8ZM1600.9,604.1 1593.9,600.4 1596.2,592.3 1599.6,591.2 1606.3,597.8ZM1166.7,641.7 1175.6,654.5 1169.8,659.2 1157.6,657.4 1156.2,655.1 1162.6,642.1ZM1462.2,737.3 1449.9,740.6 1446.7,735 1451.8,724.5 1460.8,726.3ZM880,473.9 866,484.2 871.3,493.4 881.6,492.5ZM1642.9,419.1 1643.7,417.9 1638.4,415.2 1636.8,414.9ZM1614.7,653.9 1614.9,652.8 1622.5,646.2 1630.7,649.8 1627.9,660.4 1620.9,659.5ZM1562.3,828.8 1565.5,826.8 1575.5,830 1576.6,835.7 1570.9,840.5 1570,840.3ZM1348,756.3 1348,765 1356.7,768.3 1359.6,766.7 1360.6,752.4 1358.9,752.2ZM1321.7,680.5 1320.5,670.6 1313.3,668.6 1312.4,669.1 1307.2,678.6 1310.9,684.4ZM950.1,590.9 948.4,576.2 936.2,579.6 934.6,590.6 942.8,595ZM1561.5,828.9 1559.3,827.4 1545.7,828.6 1545.6,828.7 1545.9,833.8 1553.9,838 1557.1,836.8ZM1428.4,359.3 1430.5,353.9 1422.8,342.9 1413.9,349.6 1415.2,355.9ZM1330.7,290.2 1337.5,299.5 1344.5,296.7 1345.3,289.6 1344,290 1337.5,289.1 1332,289 1330.7,289.3ZM1594.1,848.7 1584.7,842.3 1580.3,847.6 1585.5,854.9 1594.2,850ZM739.8,637.7 748.5,647.9 747.1,654.5 740.8,658.1 727.9,652.2ZM1252.6,573 1264.5,575.9 1266.2,584.6 1255.7,591.3 1250.8,578.8ZM1679.4,668.9 1686.9,668.6 1690.2,661.9 1678.2,656.3 1673.3,664.1 1673.3,664.4ZM867.8,546.4 874.3,542.6 887,548.9 884.5,560.5 868.8,554.7ZM1375.1,654.9 1361.5,651.8 1359.3,657.5 1367.4,665.7 1375.6,655.6ZM1222.8,759.3 1237,750.9 1242.4,763.7 1236.4,768.8 1228.6,768.9 1223.3,764.3ZM885.3,715.5 888.2,700.4 902.2,701.6 904,706.8 903.9,707.3 890.3,716.1ZM960.1,718.5 967.5,706 962.2,696 953.1,697.5 949.6,716.7ZM1568.7,525.1 1562.5,521 1569.2,508.8 1575.4,511.5 1576.9,517.9 1570.4,525ZM1252,902.2 1246.1,903.3 1248.5,913 1252.6,913 1256.5,913 1259.9,912.4 1260.5,908.5ZM1461.6,679.5 1469.7,671.5 1470,669 1463.5,661 1460.6,660.6 1453.7,667.9 1458.6,677.6ZM1597.6,879.2 1607.7,882.4 1612.9,876.7 1611.6,870.1 1605,867 1597.4,878.7ZM1399.3,703.9 1395,710.9 1387.1,710.2 1384.7,699.4 1385,698.8 1390,698ZM1618.3,618.5 1620.8,623.3 1630.2,624.2 1630.6,623.9 1629.7,612.5 1624.3,611.7ZM1469,761.9 1469.8,769.8 1466,774.9 1454.3,771 1454.1,765.9 1461.1,761ZM1429.4,835 1418.7,840.5 1422.7,849.9 1434.3,847.1 1434.8,843.3ZM817.2,767.2 817.2,763.1 820,759.9 835,763.5 836.4,772.3 826.2,775.9ZM1262,801.5 1249.8,802.2 1246.2,798.1 1253.6,787.1 1263.1,787.4 1266.2,795.5ZM949.7,793.6 956.8,797 964.7,794 965.8,776.9 958.8,772.1 948.1,778.3ZM1429.1,315.8 1439.6,315.4 1441.4,307.5 1437,309 1431,305 1428.9,306ZM1414.3,388.7 1415.5,391.8 1407.6,399.1 1404.7,398.6 1402.1,391.3 1407.7,387ZM1240.8,856.2 1252.5,853.9 1251.2,865.7 1240.3,867.5ZM1897.4,413.3 1907,419.4 1902.8,426.7 1895.4,423.6 1894.3,421.6ZM761.8,574.8 771.9,587.6 773.9,586.7 781,573.6 774.5,566.2 763.2,570.1ZM1249.6,622.3 1248.6,609.9 1245.4,607 1232.3,614.1 1238.9,625ZM1267.9,535.7 1262.9,538.5 1264,547.6 1271.9,551.6 1278,540.6 1277.7,539.9ZM1709.3,544.9 1718.1,538.2 1727.8,544.4 1718.4,551 1709,545.7ZM1493,537.2 1498.4,541 1499.4,544.9 1491.3,548.7 1487,545.4 1487.7,540.4ZM1061.4,848 1069.4,839.4 1069.4,839.3 1053.4,831.9 1050.3,833.7 1048.2,844.6ZM1501.6,669.7 1504.6,663.4 1500.5,657 1490.8,658.2 1488.1,664.6 1488.2,664.7 1496.6,670.3ZM1416.3,368.3 1411.6,360.2 1415.2,355.9 1428.4,359.3 1428.9,361.4 1420.8,368.8ZM1345.3,597.9 1345.2,606.3 1337.2,608.6 1333.8,605.5 1334.8,593.8ZM1165.9,623.2 1157.2,622.6 1154.3,613.2 1161.6,606.6 1162.7,606.6 1172,615.9ZM1632.3,865.4 1632.5,863.9 1626,853.8 1621.6,854 1617.5,861.4 1618,863.8 1625.6,867.9ZM1437.4,893 1437.4,893 1437.7,893 1437.6,892.9ZM953.6,561.4 966.3,564.8 970.6,554.4 955.5,547.3 953.6,549.1ZM1490.2,708 1491,706.9 1489.7,695.9 1477.4,700.4 1485.1,709.4ZM1529.2,770.7 1531.1,779.1 1540.1,782 1543.1,780.1 1545.1,770.3 1540.7,767.8ZM1266.9,841.1 1251.1,839.9 1254.6,828.4 1266.1,829 1267.4,840.5ZM1441.4,435 1447.2,440.9 1454.4,438.9 1453.9,431.1 1442.5,430.5ZM1324.5,344.7 1316.3,337.6 1316.1,337.6 1310.2,343.2 1310.5,347.9 1314.5,351.9 1323,350.4ZM1271.6,477.1 1279.6,474.1 1286.5,483.5 1278.4,495.6 1275.5,496.3 1270.2,494.2 1267.9,483ZM1362.1,534.6 1379.7,542.8 1379.7,548.7 1375.8,554.3 1372.9,555 1361.2,541.4ZM928.6,534.2 939.3,519.7 943.8,521.2 947.9,528.2 947.8,530.4 938.6,539.9ZM1098.5,458.6 1096.3,456.5 1085.4,456.2 1081,462.4 1083.4,469.6 1096.3,470.8ZM1370.4,838.6 1362.7,842.6 1362.3,848.8 1376.6,851.1 1376.6,844.4ZM1551,785.7 1543.1,780.1 1540.1,782 1537.9,792.5 1549.4,791.1ZM1557.8,726.9 1549.9,726.6 1545.2,719.3 1545.6,718.5 1556.8,715.4 1560,718.3ZM1293.6,894.3 1295.9,900.9 1286.9,909.4 1281,907.8 1279.9,902 1289.5,892.1ZM1197.2,827.4 1211.2,823.2 1211.6,823.5 1214.4,833.6 1212.5,836.1 1197.4,835.8ZM916.3,505.3 932.5,512.1 932.6,512.6 919.1,523.7 914.3,522.5 908.4,514.3 908.4,513.4ZM1384.3,328.4 1386.8,338.5 1393.2,340.2 1400.6,331.5 1400.4,326.7 1400.1,326.3ZM1298.1,851.1 1289.4,844.5 1283.9,848.4 1287.9,857.3 1296.8,855.3ZM1540.5,582.8 1540,590.8 1546.2,595.1 1555.4,590.1 1554.4,582.3 1542.1,580.9ZM758.6,670.8 760.7,666.6 781.6,673.5 781.6,680.2 775.4,683.7 760.5,677.5ZM1866.3,516.6 1875.1,520.2 1874.1,523.3 1864.5,529.9 1863.1,528.7 1862.3,517.8ZM935.7,620.8 934.8,621.5 920.8,616.7 919.7,610 932.3,606 936.2,608.3ZM960.1,598.3 951.2,608.1 943.9,604.5 942.8,595 950.1,590.9 958.3,594.4ZM1635.8,436 1627.8,434.9 1627,432.7 1630,424.3 1638.4,426.2 1639.9,431.7ZM1379.2,306.6 1382.6,319 1393.1,314 1393.6,309.3 1387.9,304.5 1387,305 1385.4,303.6ZM861.3,452.6 863.3,465.5 878.7,469.3 879.1,451.9 863.1,451.4ZM1316.3,337.6 1323.4,329.8 1319.5,323.8 1311.1,323.4 1307.7,328 1316.1,337.6ZM1467.4,576.8 1469.8,586.1 1461.7,592.6 1457.5,591.5 1455.6,582.8 1465,576ZM1429.1,551.4 1430.6,558 1440.4,561.8 1445.7,559.3 1445.9,558.9 1440.9,546.5ZM1897.4,413.3 1894.3,421.6 1881.8,421.7 1880.9,419.6 1888.9,409.7 1897.3,412.9ZM1169.8,909.5 1162.1,899.2 1157.4,899.5 1152.9,912.5 1154.9,912.1 1161.4,912.6 1165.7,912.7 1167.4,912.7ZM1270.9,870.8 1261.7,864.8 1262.4,854.8 1265.8,853.2 1272.8,855.9 1275.8,861.8ZM1308.3,846.6 1320.7,848.8 1319.7,860 1310.4,859.8ZM1192.8,635.4 1187.7,643.7 1187.8,644 1207.1,648.8 1207.3,648.5 1200.9,635.1ZM1303.3,888.4 1306.4,889.3 1308.3,893.2 1303.5,903.8 1303.1,904 1295.9,900.9 1293.6,894.3ZM1292,874.3 1291.5,874 1271.3,876.1 1275.5,887.4 1287.1,886.9ZM991.4,730.8 982.9,721.1 978.2,721.4 976.9,722.6 979.3,738.2ZM1303.1,593.7 1299.3,602.5 1289.6,602.9 1286.3,592 1294.2,587.9ZM1249.2,324.9 1258.6,325.1 1260.6,332.1 1253.1,338 1247.3,333ZM1461.3,783.9 1462.3,790.8 1462,791 1450,790.1 1446.9,786.4 1454.5,780Z"/>
<path fill="#eae5da" d="M823.8,483.8 833.7,491.4 824.8,504.6 822.5,504.8 814.8,490.3ZM992.7,796.1 984.4,788.1 971.4,797.4 975.3,805.7 981.2,807.1 992.7,801.2ZM1378.7,639.7 1374.4,644.7 1375.1,654.9 1375.6,655.6 1382.9,657.9 1388,646ZM1196.8,826.9 1195.8,815.5 1197.9,812.9 1208.2,811.9 1208.4,812.1 1211.2,823.2 1197.2,827.4ZM1207,379.9 1209.4,366.9 1218.8,364.2 1223.1,372.2 1220.1,383 1219.6,383.2 1208,382.2ZM943.8,760.2 957.1,762.6 961,755.7 959.2,743.8 942.7,745.9 941.3,747.9ZM880.2,294.2 874.6,291.2 863.6,298.4 867.4,310.6 880.6,312.7 882.3,298.3 882,298 882,297.1ZM1661.3,541.6 1673.3,545.1 1677.3,540.1 1671,531.6 1659.6,537.9 1659.5,539.3ZM751.3,557.7 749.9,548.7 740.9,541.8 735.9,543.2 729.5,558.2 730.8,561.1 745.2,562.3ZM1454.5,857.8 1461.3,850.8 1461,846.8 1448.2,843.7 1445.6,851.1 1448.6,857.4ZM747.3,305.5 753.7,300.1 749.4,287.5 746.2,286.4 739.4,289.6 738,293.5 737,300 736.7,300.3ZM796.9,763.3 787,762.6 783.1,772.8 787,773.7 794,775 797.1,780.4 799.5,775.4ZM1623.2,674.3 1616.7,670.9 1610.9,675.9 1611.4,682.9 1616.1,683.9 1623.5,677.1ZM1234.6,850.4 1240.8,856.2 1240.3,867.5 1237.8,870.6 1225.9,861.8 1233.7,850.5ZM1810.9,532.5 1798.2,531 1796.8,532.9 1798.5,539.6 1808,546.3 1809.6,546.3ZM1412.7,405.1 1407.6,399.1 1415.5,391.8 1423.5,396.6 1423.7,397.1 1415.1,405.4ZM1749.8,736.9 1754.8,738.8 1765.4,732.2 1765.6,731.3 1760.2,725.1 1754.8,723.5 1751.5,725.6 1749.8,736.8ZM1176.9,561.8 1174.1,562.5 1166.7,559.4 1165.9,544.4 1167.6,544.6 1179,552.2ZM709.9,454.8 704.8,440.3 722.4,436.9 724.9,438.2 719.3,455.8 714.1,456.7ZM1411.5,656 1401.3,654.2 1398.2,643.5 1399.4,642.5 1413.1,642.4 1415.4,645.5ZM1920.6,361.1 1921,358 1920.4,358 1915,359 1913.4,364.3ZM1556.7,798.4 1559,797.5 1566.9,798.8 1567.4,809.9 1566.4,811.8 1557,811.9 1555.9,810.6ZM804.9,380.9 807.8,390.9 806.7,392.3 792.2,393.8 784.2,386.9 783.9,384.7 795.4,373.3ZM791,425.2 789.3,430.7 776.6,435.8 770,433.5 765.9,427.1 765.8,423.9 766,423.7 781.4,418.6 788.9,422.1ZM1407,846.2 1415.8,839.4 1418.7,840.5 1422.7,849.9 1421.6,854 1415.5,858.7 1413.3,858.5ZM1198.3,540.9 1195.1,555.3 1193.8,555.4 1184.6,548.9 1185.1,539.4 1190.1,537.7ZM1498.8,560.3 1496.6,567.6 1498.5,572.9 1507.6,575.4 1514.6,566.9 1513.1,559.2 1503.7,557.2ZM762.8,727.8 769,740.3 761.5,745.5 751.2,741 749.2,731.4 753.6,726.7ZM1489.4,378.6 1492.9,388.2 1490.1,392.6 1475.5,393.8 1474.4,392.8 1473.7,386.1 1482.3,377.4ZM1197.2,707.5 1205.3,707 1210,720.6 1209.4,721.8 1197.9,725.7 1196.4,725.4 1192.3,715.9ZM725.6,537.6 735.9,543.2 740.9,541.8 742.9,533.6 735.3,522.3 730.4,522.8ZM827.3,593.7 833.3,591.6 836.6,578.9 825,571.3 821.6,572 817.2,581.9ZM1776.8,486.3 1777.9,486.5 1782.8,491.2 1777.5,501.7 1771.3,502.1 1768,500.1 1768,491.2ZM1303.7,448.5 1310.3,444.5 1317.7,446.6 1320.8,451.2 1318.2,458.8 1305.8,461.3 1302.1,454.7ZM999.3,807.3 999.9,813.5 1004.5,819.3 1007.8,820.3 1015.7,817.2 1018.5,808 1015.5,802.9 1009.8,800.6ZM1535.2,684.4 1539.5,679.4 1544.9,679.1 1546.6,688.5 1541.8,692 1537.1,690.4ZM1037.4,798.1 1035.5,798.2 1026,787.7 1025.8,786.8 1036.8,777.7 1049.9,788.2ZM1513.9,440.3 1514.1,438 1509,427.2 1500.5,425.6 1495.3,430.2 1508,442.9 1512.1,442.2ZM952.9,308.8 948,309 941.7,308.4 936.4,308.1 936.4,314.2 947.6,318 951.4,316.6 954.2,312ZM1472.1,803.2 1478.6,795.2 1488.8,800.1 1481.9,809 1472.1,803.5ZM764.5,482.7 751.2,475.9 751.4,473.4 760.9,463.8 772.8,470.2 774.7,475.6ZM1448.4,748.5 1440.1,749.1 1435,759.3 1440,764.2 1448.5,762.1 1448.5,748.6ZM1786.3,491.3 1782.8,491.2 1777.5,501.7 1783.1,507.6 1789.4,507.2 1791.7,499.1ZM1259.7,310.5 1270.1,309.5 1271.9,308.2 1271.4,306 1267.1,307.2 1259,309 1258.8,309ZM1568.8,568.6 1574.8,568.8 1582.7,573.5 1580.3,581.6 1574.7,584.3 1568.4,571.6ZM1581.3,403.7 1571.9,407.2 1573.4,413.6 1582,418.6 1587.7,411.9 1584.8,408.2 1584,408 1582.9,405.7ZM1454.3,593.8 1457.5,591.5 1455.6,582.8 1449.9,580.4 1440.7,587.2 1440.9,589.9 1444.7,593.1ZM1053,863.1 1052.5,863.1 1050.8,864.3 1056,873 1057.4,868.9ZM1745.4,710 1742.9,705.2 1747.2,697.2 1756.9,697.6 1759.2,701.9 1759,703.4 1750,710.9ZM1345.9,499.2 1332.1,507.1 1332,507.1 1329.9,493.8 1336,485.9 1339.9,486.2ZM1511.5,864.9 1511.5,858.4 1510.1,856.7 1495.8,858.1 1496.6,867 1503.6,869.9 1504.9,869.5ZM822.5,504.8 813.8,510.9 824.1,526 831.8,522.6 835.2,512.6 824.8,504.6ZM1115.9,705.9 1122.1,696.1 1129.4,696.5 1133.1,701.4 1126.4,713.9 1124.9,714.5 1119.5,713.7ZM1023.2,402.2 1022.2,412.5 1011.2,415.5 1007,404.4 1008.6,402.3ZM1803.5,590.7 1799.2,583.9 1787.8,584.7 1787.2,585.7 1791.5,594.2 1798.9,595.2ZM661.8,334.1 656.7,321.9 656.4,321.7 651.5,323.7 650,328 652,336 652.6,339.3ZM1709.7,676.1 1718.6,677.5 1722.2,670.8 1719.9,662.1 1719,661.5 1708.7,663.8 1706.9,667.1ZM726.4,671.2 723.6,653.1 713.5,656.8 710.1,661.7 712.7,670.9ZM1318.5,473.5 1320.6,481.9 1333.1,482.3 1331.8,472 1319.1,472.7ZM1574.7,770.4 1571,766.6 1561.2,771.8 1560.2,773.6 1565.9,778.8 1572.8,776.9ZM1133.6,337.7 1132.2,345.3 1141.7,351.9 1152.4,346.9 1152.4,346.4 1142.1,334ZM1055,479.1 1048,479.1 1045.3,493.5 1058.2,499.4 1062.6,496.1 1064.2,490.4ZM745.9,580.6 745.2,562.3 730.8,561.1 725.9,570.6 738.5,583.6ZM1487.7,540.4 1487,545.4 1479.2,549 1477.5,548.7 1476.2,534.8 1478.9,533.4 1479.1,533.4ZM1012.5,313.1 1024.3,326 1031.2,322.7 1032.8,319.9 1031.3,309.1 1029.8,308 1016.7,309.1ZM1139.3,512.9 1149.1,520.3 1150.7,527.4 1146.6,531.4 1134.2,528.4 1135.9,513.3ZM1303.8,813.9 1306.1,813.7 1312.9,805.6 1311.6,799.6 1301.1,794.6 1299,795.5 1298.4,809.5ZM863,352.9 865.1,355.7 865.4,365.8 862.7,369.9 848.4,364.8 847.4,355.4 849.7,352.4ZM732.9,456.4 723.7,457.7 727.9,476.6 729.8,478.1 739.7,462.8ZM1634.1,695 1634.9,707.1 1646.1,701.9 1647.6,697.3 1646.9,696.2 1634.9,694.6ZM833.9,368.9 827.9,377.2 842,384.4 846.1,379 844.2,369.7ZM1732.7,506.1 1732.6,506 1729.8,495.3 1731.1,493.5 1738.4,493.4 1743.1,497.3 1740.3,503.8ZM1590.6,812.8 1583.5,811.8 1577.6,818.3 1580.3,825.2 1585.6,826.8 1592.8,821.6 1593.8,818.3ZM1609.8,803.9 1610.9,794 1608.3,790.2 1602.1,789.5 1594.8,798.8 1596.3,802.3 1605.9,805.1ZM844.2,479.5 842.9,480.2 839.4,490 846.4,497.1 853.4,498.2 860.4,483.1 858,480.1ZM859.1,513.3 861.6,507 865.3,505.7 875.4,508.8 879.5,521.8 876.1,527.1 865.3,525.3ZM819.6,459.7 830.7,453.5 827.2,441.2 817.8,439.6 808.7,454.1 808.8,454.4ZM755.9,328.3 744.7,333.6 743.1,332.7 741.5,317.9 746.5,314.5 756.3,320ZM1487.2,318.3 1494.6,324.4 1502.6,324 1502,321.8 1496,320 1487.6,316.7ZM1560,718.3 1556.8,715.4 1555.2,705.8 1558,700.1 1569.6,707.3 1570,708.5 1566.7,717.1ZM1414.1,756.1 1420.1,765.3 1419.4,766.4 1405.2,772.3 1399.1,767.8 1402.3,758.1 1410.3,754.6ZM1719,661.5 1719.1,651.7 1720.7,650.2 1731.8,651.9 1732.9,653.8 1730.4,660.5 1719.9,662.1ZM1609.8,905 1604.2,902.6 1608,907 1609,908.5ZM1421.9,504.6 1421.4,502.8 1411.2,498 1404.7,502.9 1404.1,511.5 1418.8,510.5ZM932.6,512.6 939.3,519.7 928.6,534.2 925.7,534.7 919.1,523.7ZM1052.3,318.2 1050.7,317.6 1041,304.8 1043.7,297.6 1044,297.4 1057.2,300.4 1057.4,300.6 1055.5,316ZM1307.3,575.5 1292.8,576.4 1287,572.6 1288.9,567.8 1300.4,561 1306.7,566.6ZM1563.3,668.1 1566.5,678.1 1563,681.6 1557.5,681.9 1554.3,678.3 1556,671.1 1563.2,668ZM1646.5,746.1 1637.5,744.7 1631.7,750.8 1638.7,759.8 1641.9,759.8 1646.2,757.3ZM1808.4,451.6 1812.1,441.3 1824.4,444.1 1823.7,454.8 1812.2,455.4ZM1065.1,419.9 1057.1,410.2 1069.5,401.6 1079.6,407.8 1079.8,409.3 1070.8,420.3ZM1810.6,561.4 1813.1,548.2 1814.8,548 1821.1,551.5 1821.3,560.5 1815,562.9ZM1668.8,719.4 1664.9,718 1664.2,717.2 1662.8,708.8 1665.4,705.6 1674.8,703.8 1677.3,705.7 1677.4,716.6ZM1147,477.3 1144.3,475.8 1136.5,490.5 1138.4,495 1149.4,500 1150.7,499.9 1155.9,490.8ZM708.2,425 718.5,427.7 728.1,414.6 721.8,410.2 718.5,410.4 708.2,420.9ZM689.9,371.8 696,380.7 709.5,378.2 713,369.7 704,361.8 691,369.8ZM1354.4,593.9 1357.1,596.2 1367.1,595 1368.5,589.5 1360.6,579.6 1358.3,580.6ZM1794.7,441.3 1795.1,443 1807.7,451.6 1808.4,451.6 1812.1,441.3 1811.4,438 1804.4,438.1 1798,439 1795.5,439.8ZM1395.4,368.6 1405,369.9 1408.2,361.1 1400.9,357.3 1396.6,358.8ZM872.5,284.5 877.7,273.3 870.8,268 870.8,268.3 870,277 867.2,282.5 866.9,282.8ZM1628.8,478.4 1627.3,483.9 1627.9,485.2 1631.3,485.8 1633.3,477.9 1633.5,477.4ZM1410.7,740.1 1401.9,729.4 1414.7,724.6 1416.6,737.8ZM1870.8,538.8 1868.1,545.4 1863.4,546.7 1855,541.7 1854.5,540.1 1865,532.7ZM672,423.7 671.9,423.3 669.6,422.4 670,425.9ZM1729.8,495.3 1720.4,498.4 1716.4,492.8 1718.6,485.8 1728.1,486.2 1731.1,493.5ZM1431,469.7 1419.8,467.8 1424,456.1 1431.9,454.9 1434.7,460.2ZM1427.2,630.5 1426,632.7 1426,645.3 1428.7,648.2 1437.5,648.2 1440,637.9 1429.5,629.9ZM1349,889.9 1350,890 1351.3,890 1355.4,876.9 1346.4,871.9 1343,873.4 1341.9,885.4ZM846.4,497.1 838.2,512.1 848.9,517.3 859.1,513.3 861.6,507 853.4,498.2ZM1470.4,558.2 1471.2,559.2 1473.8,573.5 1467.4,576.8 1465,576 1459.6,567.9 1462.5,561.8ZM1226.7,571.5 1227.2,575.3 1220.3,582.3 1211.4,577 1211.2,571.6 1218.4,566.1ZM1479.2,460.7 1471.6,466.2 1471.3,476.3 1474.8,479.1 1484.2,478.7 1486.1,471.2ZM1316.8,577.8 1319.4,581.4 1335.2,583.8 1332.4,568.6 1325.3,565.3ZM1190.4,486 1205.1,480.8 1210.9,491.3 1207.7,497.1 1195.2,498.5ZM729.6,485 730.6,479.8 748.5,478.7 749.1,497.4 747.6,499.4 747.5,499.4ZM1553.8,556.3 1556.2,553.3 1554.2,542.7 1544.1,541.8 1543.2,551.6 1553.3,556.4ZM1488.3,603.7 1491.9,600.5 1499.7,603.2 1495.1,615.2 1488.3,612.4ZM1177,481.1 1178.2,470.1 1171.7,464 1164,465.3 1162.5,473.8 1168.4,482.4ZM1480.2,774.2 1485.8,767.3 1493.2,767.3 1495,781 1488.7,784.7 1487.1,784.5 1480.2,777ZM1197.9,448.5 1188.2,443.6 1185.9,445.1 1182.4,452.8 1190.7,464.1 1191.6,464.3 1196.9,460.2ZM1718,621.3 1720.6,615.2 1714.9,608.7 1707.8,609 1705.1,618.9 1715.2,622.9ZM1820.5,477.7 1821.2,471.2 1821.6,471 1829.9,471.2 1833.5,480.1 1824.1,482.5ZM1607.6,564.3 1602.7,568.5 1591.2,562.7 1593,557.2 1594.2,556.3 1606.7,555.4ZM1392.3,624.2 1388.6,630.6 1396.2,643 1398.2,643.5 1399.4,642.5 1403.3,632.9 1401.7,628.7ZM1123.1,783.2 1124.5,783.4 1129.7,796.3 1129.3,797.6 1119.4,800.2 1113.7,797.8 1113.7,789.5ZM1396.5,768.8 1391.1,768.1 1381.8,774.6 1385,783.3 1394.5,780.5ZM795.3,581.3 802,578.9 812.2,583.5 807.8,596.3 802.9,599 792.8,591.2ZM1251.9,494.1 1245,491.6 1235.5,495.1 1239.8,510.7 1241.5,510.6 1255,498.2ZM1550.5,738.7 1544.3,735 1543.7,735.1 1540.2,737.3 1537.4,743.3 1547.5,751.2 1550,749.7ZM1498.1,347.8 1509.3,343.9 1513.7,353.7 1509.7,361.1 1507.6,362.5 1501.1,358.3ZM1756.1,460.6 1762.8,463.8 1767.2,458.2 1758,460 1756.1,460.5ZM1575.3,651.5 1571.5,647.6 1575,640 1583.6,641.5 1584.4,642.6 1580.5,652.5ZM1512.3,672.7 1524.1,676.3 1526.5,672.6 1523.1,664.3 1513.7,665ZM941.9,422.3 942.1,421.6 950.8,414.8 960.4,417 963,423.2 959.3,432.5 948.5,431.8ZM1362.5,628.1 1356.3,623.5 1347.4,629.2 1348.6,640.1 1352,643 1358.7,643 1360.2,641.6 1363.7,631.8ZM1419,582 1426.3,584.6 1426.7,593.5 1420.5,598.7 1419,598.8 1412.7,594.6 1414.5,585.1ZM916.3,505.3 908.4,513.4 899.4,507.5 898.2,499 908.4,493.4 915.9,498ZM1584.8,426 1585,433.1 1588,436.4 1597.1,433.3 1598.6,428.1 1595.1,423.3ZM1026.8,573.9 1035.5,579.8 1041.2,571.2 1033.3,560.5 1027.1,558.7 1026,559.3ZM951.4,316.6 960.4,324.5 956.9,336.7 946,331.8 947.6,318ZM1358.7,725.9 1362.8,726.3 1371.7,734.9 1371.1,737.5 1364.1,742.7 1355.1,733.1ZM1361.5,532.9 1367.7,528.1 1380.4,530.8 1381.9,539.6 1379.7,542.8 1362.1,534.6ZM1251.3,727.2 1248.6,733.8 1245.8,735.8 1238.2,731.2 1237,716.9 1237.8,716.9 1250.9,725.9ZM1406,820 1396.9,817.1 1391.7,821.1 1395.1,836.7 1395.6,836.9 1409.8,827.9ZM1677.3,540.1 1671,531.6 1671.1,528.7 1672.7,526.5 1679.8,524.6 1687.5,528.9 1679.5,540ZM1919.9,455 1907.8,460.3 1907.8,460.5 1911.4,466.4 1917,467.1 1921,462.9 1921,455.5ZM1109.6,554.6 1115.1,554.2 1117.3,556.1 1119.5,564.5 1116.6,570.9 1110.5,573.7 1103.2,573 1102.7,562ZM1509,427.2 1500.5,425.6 1502,414.5 1509.4,411.8 1512.3,412 1513.6,423.3ZM1292.9,421 1288.4,417.5 1282.8,420.2 1279.5,425.9 1282.2,436.1 1282.5,436.3 1295.6,432ZM1261.4,715 1264.1,712.6 1265.9,704 1254.8,700 1250.4,703.6 1250.1,710.2 1255.3,714.7ZM1531.1,462.5 1527.6,476 1523.6,476.6 1518.1,466.8 1523.4,460.8ZM1139.9,389.8 1140.4,378.2 1144.5,373 1157.2,377.9 1156.6,391 1144.7,396.6 1142.9,395.6ZM1338.7,533 1339,527 1344.1,521.9 1355.3,524.6 1359.8,532.1 1346.2,537.1ZM1762.5,574.5 1762.9,574.9 1763.3,576.3 1760.4,585.5 1750.8,586.2 1747.8,580.9 1749.6,575 1752.7,573.2ZM1514.1,336.2 1523.3,329.7 1521.3,324.2 1520,324 1513.1,322.5 1511,322.7ZM1692.7,731.3 1693.5,736.9 1689.7,740.5 1681.4,741.5 1681,741.2 1679.8,730.3 1682.7,727ZM1526.3,572.4 1526,571.7 1528.3,563.1 1537.5,561.3 1543,568.6 1541.6,570.8ZM1480.2,777 1487.1,784.5 1478.2,791.9 1473,787.9 1473.3,782.3ZM1752.9,559.6 1751.4,554.4 1753.1,551.4 1761,548.5 1767.3,554.1 1767.8,556.8 1761.5,562.2ZM934.3,661.2 938.3,650.8 938.2,650.8 923.5,642.4 922.2,643.4 917.2,655.8 923.6,662.8ZM922.3,359.7 907.8,361.5 903.6,369.3 914.9,379.5 923.5,370.7ZM1370.2,338.1 1380.6,325.7 1384.3,328.4 1386.8,338.5 1379.8,345.8 1372.1,344.7ZM1674.8,691.6 1663.4,694.6 1665.4,705.6 1674.8,703.8 1675.3,691.9ZM1531.1,696.3 1537.1,690.4 1541.8,692 1543.5,698.4 1540.6,702.4 1530.9,700.6ZM1461.4,825.8 1465,815.6 1468.2,814.5 1476.3,820.5 1473.2,831.9 1472.9,832.2 1462.6,828.3ZM1461,846.8 1462,844.9 1473.1,837.8 1477.9,842.7 1478.1,851.6 1468.6,855.2 1461.3,850.8ZM996.8,502.7 995.4,515.6 990.6,517.1 980.5,513.5 978.9,511 979,500.4 986.9,495.5ZM1413.8,536.6 1411.9,543 1401.1,549.2 1398.8,548.7 1395.4,536.9 1397.8,531.7ZM761.1,756.8 768.9,761.9 780.5,756.4 781.2,749.4 773,740.5 769,740.3 761.5,745.5ZM1492.6,337.1 1502.9,333 1511.3,339.7 1509.3,343.9 1498.1,347.8 1495.2,346.7 1492.5,342.3ZM1406,820 1413.5,809.5 1417.2,808.7 1425.4,818.3 1424.7,822.2 1410.9,828.4 1409.8,827.9ZM1550.9,352.4 1552.2,352.1 1552,352 1550,351.8ZM1336.5,640.5 1334.7,649.7 1335.7,651.5 1346.3,652.8 1352,643 1348.6,640.1ZM1614.3,768.8 1611.7,780 1612.9,782.2 1620.9,783.2 1625.9,776.9 1625.8,776 1615.9,768.1ZM717.6,589.8 719.1,591.9 707,606.7 695.6,602.3 694.6,596.1 695.8,593.1 706.5,587.1ZM805.9,641.8 808.7,655.1 797.6,658.1 791.4,642.7 791.9,641.8ZM971.4,797.4 964.7,794 965.8,776.9 979.4,773.4 985,776.6 984.4,788.1ZM1830.8,490.9 1837.2,485.5 1842,487.4 1843.4,490.1 1838.4,499 1832.1,498.9ZM1141.7,702.5 1133.1,701.4 1129.4,696.5 1133.9,685 1147.4,692.4 1147.5,692.7ZM1898.4,436.7 1903.7,428.7 1910,431.1 1912,435.8 1910.2,439.4 1902.3,441.2 1899.3,439.9ZM1743.8,542.1 1741.3,548.7 1731.4,548.6 1728.1,544.4 1729.3,542.2 1739.8,537.5 1742.9,539.6ZM1585.2,628.3 1583.6,641.5 1584.4,642.6 1592.7,643.7 1596.6,638.6 1585.4,628.2ZM1572.3,852.9 1565.1,853.8 1562.4,861.4 1571.6,868.9 1578,862.9ZM1204.4,350.4 1206.5,348.2 1219.2,349.4 1220.5,361 1218.8,364.2 1209.4,366.9 1207.5,365.1ZM1722.3,589.6 1730.1,592.3 1728.4,601.1 1718.7,602.3 1715.4,595ZM1692,640.8 1693.1,640.2 1694.1,640.3 1704.2,650.2 1703.4,653.4 1692.2,658.7 1688.4,649.4ZM1554.4,572.9 1563.5,567.2 1568.4,568.2 1568.8,568.6 1568.4,571.6 1563,579.9 1555.1,581.3ZM1264.1,773.3 1266.6,781.6 1263.1,787.4 1253.6,787.1 1248.8,781.2 1251.8,770.6ZM1696,674.3 1688,670.7 1686.9,668.6 1690.2,661.9 1691.1,661.3 1701.5,667.8ZM1760.9,480.6 1758.5,478.9 1748.5,483.5 1749.9,490.2 1756.7,491.9 1762.1,487.1ZM1339.7,787 1348.8,780.6 1352.5,781 1354.6,782.6 1356.3,794.3 1355.1,795.3 1342.6,797.2 1339.2,788.7ZM1254,439.9 1253,432.3 1259.3,426.7 1266.7,428.9 1268,439.8 1265.7,442.8 1264.3,443.2ZM885.2,405.5 874.5,406.2 868.9,394.3 877.7,385.6 885.9,389.6ZM1250.9,725.9 1237.8,716.9 1250.1,710.2 1255.3,714.7ZM1088.1,647.6 1104.2,649.7 1104.2,656.4 1097.5,663 1084,659.3 1084.7,650.1ZM880.8,312.9 874.6,326.9 878.8,334.3 890.4,332.6 892.2,329.1 885.5,314.6ZM1445.5,683.8 1440.1,685.6 1440.8,696.9 1445.7,697.7 1450.7,689.2ZM1516.5,617.7 1527.2,620.5 1528.6,627.4 1522.4,632.1 1512.4,628.8 1512.4,623.9ZM1588.5,588.7 1584.2,593.8 1589.3,603.2 1593.9,600.4 1596.2,592.3ZM1681.8,639.5 1675.2,648.8 1667.6,646.7 1666,644.1 1667.4,635.6 1676,632.3ZM1333.1,482.3 1336,485.9 1339.9,486.2 1343,484.2 1347.2,474.1 1344.3,469.5 1332.6,470.5 1331.8,472ZM1371.4,820.7 1369.6,821 1366.1,824.8 1366,827.1 1371.2,833.9 1380.7,831.7 1381.1,826.5ZM1854.9,513.5 1845.8,505.7 1843.8,505.8 1838.8,512.3 1839.1,515.4 1845.1,522.2 1849.9,521.6 1855.1,514.8ZM1450.1,411.3 1451,410.8 1462.4,413.7 1459,426.4 1456.6,427.1 1449,419.4ZM1227,538.5 1225.2,538.2 1217.7,528.9 1218,526.1 1233.2,515.9 1233.6,516 1238,527.1 1235.8,534.3ZM1732.3,721.8 1733.5,716.7 1731,711 1725.8,709.1 1718,713.8 1719,719.5 1719.6,719.9ZM908.9,552.3 905.2,554.5 901.2,565.2 915.1,571.8 921.8,564.2 919.4,556.3ZM1717,749 1708.9,751.4 1703.9,749.6 1704.3,742.1 1713.6,740.3ZM946,446.9 940,454.2 944.9,466.5 960.8,457.8 961.8,453.3 960.9,451.9ZM825.2,406.2 807.6,409.6 805.9,406.9 806.7,392.3 807.8,390.9 821.8,391 823.9,393.5ZM1790.1,507.8 1789.4,507.2 1783.1,507.6 1779.4,515.1 1781.3,521.8 1792.8,519.2 1793.5,516.6ZM1013.9,344.5 1013.9,333.9 1022.9,329.2 1030,341.9 1026.4,347.2ZM1781.2,474.7 1771.9,472.6 1771.2,469.6 1776.2,463 1783.7,461.5 1786.6,465.1ZM1504,842.9 1506.7,832.3 1491.1,831.2 1490.4,840.5 1495.3,845.6ZM1766.4,538.5 1761.2,541.4 1761,548.5 1767.3,554.1 1773.2,545.6ZM1371.5,518.1 1367,510.8 1367.9,506.9 1385.2,505 1386.9,506 1387.8,508.4 1378.5,518.4ZM1177.9,805.8 1174.9,790.7 1193.1,788.3 1198.2,793.1 1193.2,801.2 1178.1,806.1ZM1530.9,418.2 1534,410.8 1538.5,408.4 1540.3,408.7 1546.5,415.4 1539.3,426.7 1538.4,426.8ZM1902.3,441.2 1904.9,452.7 1914.5,447.1 1910.2,439.4ZM884.4,629.9 890.3,617.2 891.4,616.7 900.7,618.3 900.9,637.1 892.4,637.1ZM1772.9,601.9 1769,600.8 1766.8,590.9 1777.6,588.5 1778.3,588.8 1778.7,598.5ZM1608.7,856.9 1604.6,866.2 1596,862.3 1597.8,854.9 1607.4,853.7ZM1472.1,490.3 1474.8,479.1 1471.3,476.3 1468.2,477 1461.3,485.1 1462.4,488 1471.8,490.5ZM899.4,507.5 891,511.9 889.3,519 896.1,525.3 908.4,514.3 908.4,513.4ZM1773.1,559.4 1767.8,556.8 1767.3,554.1 1773.2,545.6 1781.3,544.3 1782.2,544.8 1784.9,549.4 1784.6,550.9ZM861.5,337.3 866,342.3 876.1,340.4 878.8,334.3 874.6,326.9 865.3,326.7ZM991.4,399.3 977.7,394.5 988,377.2 996.7,390.3ZM1432.1,471.3 1432.4,480.1 1436.8,484.4 1445.6,481 1444,471.3 1443.1,470.6ZM1150.7,527.4 1161.7,528.1 1166.4,516.8 1160.3,508.6 1157.3,507.7 1149.1,520.3ZM1066.5,316.7 1073.9,306.8 1080.9,310.3 1081.6,325.6 1072.9,325.9ZM1106.1,645.9 1099.8,634.2 1102.1,626.5 1112.4,624.6 1117.3,634.2 1110.3,644.6ZM782,357.8 782.9,361.3 771.2,377 768.8,377.2 760.8,369.4 760.9,360.7 774,352.5ZM1472.4,438.3 1475.4,441.8 1469.7,450.9 1464.7,451.5 1459.3,447.5 1458.9,442.8 1465.6,437.8ZM1860,468.6 1854.5,477.8 1854.4,477.8 1848.5,476.7 1845.8,473.6 1848.5,463.8 1853.9,463.1ZM1105.2,493.9 1113.1,499.7 1116.8,498.4 1123.6,486.9 1122.5,480.9 1113.9,473.7 1106.8,476.6ZM1345.1,716 1343.8,714.5 1330,715.5 1326.7,719.5 1334.5,731.5 1340.4,730.1ZM1378.6,730.7 1387.8,735.3 1384.7,746.9 1379.1,747 1371.1,737.5 1371.7,734.9ZM1554.7,849.8 1550,856.9 1555.1,863.9 1562.4,861.4 1565.1,853.8 1560.9,849ZM921.8,298.3 919.1,300.3 917,311.5 930.8,318.5 936.4,314.2 936.4,308.1 934,308 926,300 925.4,298.2ZM1076.3,430.8 1076.9,430.8 1089.6,420.6 1089.8,419.6 1079.8,409.3 1070.8,420.3ZM931.1,405.6 912.6,394.2 916.2,388 930.8,385.5 936.2,391.3 933.6,403.1ZM944,442.6 946,446.9 960.9,451.9 962.2,437.3 959.3,432.5 948.5,431.8ZM955.2,370.7 966,372.3 968.8,376.3 966.5,385.7 951.5,388.7 950.9,388.2 948.1,376.3ZM1064.2,672.7 1064.8,669.9 1075.5,662.4 1079.3,662.9 1083,674.5 1071.6,678.7ZM1531.2,462.4 1531.1,462.5 1527.6,476 1532.8,478.7 1539.4,476.1 1542,467.3ZM1619.1,446 1609.7,448.9 1604.8,439.8 1612.5,434 1620.2,444.1ZM1480.7,864.7 1468.9,866.5 1467.6,868 1468.4,871.6 1470,871 1480,867 1481.7,866.6ZM1222.8,759.3 1219.5,756.1 1221.4,742.8 1227.8,741.8 1237.2,749.5 1237,750.9ZM1385,439.2 1377,444.1 1379.4,453.7 1380.4,454 1390.9,447.8ZM760.7,664.5 767.5,655.7 767.4,653.2 759.6,642.9 759.2,642.8 748.5,647.9 747.1,654.5ZM1469,761.9 1461.1,761 1458.2,751.1 1464.6,746.3 1467.7,747.7 1471.4,756.8 1470.1,760.9ZM1516.4,738.5 1525.2,740 1528.2,744.4 1523.6,752.2 1514.9,747.7 1516.3,738.5ZM863,373.7 876.9,382 884.4,369.2 880.4,365.8 865.4,365.8 862.7,369.9ZM1036.5,367.7 1028.7,359.1 1045,351.2 1051.4,360.1 1050.4,362.3ZM1724.1,749 1725.5,745.6 1721.1,735 1716.7,735.4 1713.6,740.3 1717,749 1721.7,750.6ZM1408.6,743.9 1399.2,743.2 1393.9,751.1 1402.3,758.1 1410.3,754.6ZM1117.7,451.2 1110.7,450.1 1105.3,457.4 1115,469.4 1122.7,461.5ZM1754.1,650.8 1760.6,648.1 1762.6,639.7 1755.4,634.2 1752.5,635.4 1750.7,637.7 1751.4,649.7ZM1622.9,904.1 1618.9,903.6 1618.6,903.4 1625.9,888.9 1635.8,894.6 1636.3,895.9ZM760.3,460.3 766.5,451.1 779.4,452.8 780.7,453.9 772.8,470.2 760.9,463.8ZM819.5,627.7 807.4,625.4 809.9,612.6 821.6,610.4 823.2,624.9ZM1436.8,484.4 1435.6,491.3 1442,499.8 1442.4,500 1450.8,498.5 1449.8,482.5 1445.6,481ZM1762.2,617 1754.6,614.6 1754.1,613.9 1757.1,603.4 1761.2,604.3 1766.8,612.7ZM1220.5,361 1231.1,361.7 1235.9,355 1234.2,349.9 1220.3,348.4 1219.2,349.4ZM1317.6,620.2 1325,619.5 1326,620.1 1327.3,634.8 1326.4,635.3 1312.3,631.1 1312.1,630.7ZM1673,580.5 1674.2,588.6 1676.7,589.1 1685.6,584.4 1685.2,578.7 1676.1,576.5ZM1430.6,558 1424.2,566.6 1424.3,568.6 1434.4,575.1 1438.4,571.8 1440.4,561.8ZM1538.5,408.4 1534.2,398.5 1540.6,391.9 1544.1,393 1547.1,401 1540.3,408.7ZM884,424.8 875.9,423.8 870.4,436.4 880,442.4 885.7,436.8ZM1648.9,677.2 1661,675.5 1662.3,683.5 1659,687.4 1648.2,683.8ZM1601,724.2 1605,725 1614.7,721 1615.6,718.9 1613.8,709.4 1609.9,707.2 1600.5,716.4 1599.8,720.7ZM1397.2,480.8 1396.3,491.3 1396.3,491.4 1409.6,491.1 1413.9,484.1 1400.5,479.1ZM1825,579 1815.2,583.9 1814.7,586.3 1816,586 1822.8,584.9 1829.2,582.3ZM1378.6,480 1382.7,480.3 1386.1,489.3 1380.1,495 1372,491.6 1371.4,489.9ZM1559,729.4 1557.2,736.8 1550.5,738.7 1544.3,735 1549.9,726.6 1557.8,726.9ZM1065.1,419.9 1057.1,410.2 1052.8,409.9 1046.9,414.6 1049.8,427.2 1059.8,428ZM1807.2,591 1803.5,590.7 1798.9,595.2 1800.1,605.1 1806.9,603.5 1808,600 1807.7,593.7 1807.6,592.5ZM1914.8,374.8 1911.8,385 1912.4,386.3 1917.6,389.8 1919.1,389.5 1921,387 1921,382.7 1920.8,381.8 1920.7,375.8 1921,373.9ZM1496.9,588.6 1495.1,577.6 1483.8,579.7 1481.7,589.6 1490.1,592.4ZM1179.6,352.9 1182.4,348.6 1177.1,336.8 1171,336.7 1167.1,348.1 1175.4,354.6ZM1354.1,718.6 1362.4,709.7 1357.1,700.9 1348.2,701.6 1344.2,705.1 1343.8,714.5 1345.1,716ZM1453.4,481.1 1449.8,482.5 1450.8,498.5 1452.6,499.3 1456.9,497.8 1462.4,488 1461.3,485.1ZM1072.1,435.2 1072.6,445.9 1083,447.4 1089.6,440.1 1076.9,430.8 1076.3,430.8ZM717.9,369.1 725.4,354.1 715.2,349.8 704.1,360.9 704,361.8 713,369.7ZM1240.2,551.4 1231.3,549.6 1227.6,556.1 1232.9,563.7 1238.5,563.2 1242,556.2ZM1544.9,509.1 1534.9,513.5 1528.3,508.2 1529.5,503.9 1533.9,500.1 1544.4,501.4 1545.8,506.9ZM992.1,349.2 982.1,343.9 972.3,348.9 971.2,356.7 980.2,361.1 991.4,352.5ZM1766.6,626 1770.9,636.2 1776.3,634.6 1781.2,623.3 1781,623.2 1773.2,622.1ZM1542.6,363.7 1536.8,365.4 1528.6,356.4 1537.3,351.7 1538.1,351.8ZM1413.8,536.6 1411.9,543 1417.8,551.7 1427.5,550.1 1426.3,539.2 1419.3,535 1416.3,534.7ZM1579.9,786.2 1569.7,788.7 1567.9,798.1 1579.7,799.9 1580.6,787ZM1675.3,691.9 1685.1,691.5 1688.9,699.9 1685.5,704 1677.3,705.7 1674.8,703.8ZM814.8,490.3 822.5,504.8 813.8,510.9 811.6,511.2 804.9,508.5 802.1,491.5 803.8,487.8ZM853.4,498.2 861.6,507 865.3,505.7 871.3,493.4 866,484.2 860.4,483.1ZM770.7,719.9 760.1,711.5 752.1,715.4 753.6,726.7 762.8,727.8ZM1025.2,438.9 1024.9,447.6 1028.6,450.5 1040.7,448 1041.3,446.6 1036.6,434 1035.9,433.8ZM1734.8,517 1732.7,506.1 1732.6,506 1724.5,507.4 1720.6,514.7 1724.3,518.8 1734.2,517.6ZM1129.1,504.7 1138.4,495 1136.5,490.5 1123.6,486.9 1116.8,498.4ZM1859.2,555.2 1853.1,556.8 1851.4,563.9 1854.9,568.3 1856,566 1864,562 1866.1,559.9ZM1622.5,832 1618.3,839.2 1619.3,841.8 1627.8,843.7 1633.1,836.1 1631.9,833.2ZM823.4,474.8 832.5,472.2 842.9,480.2 839.4,490 833.7,491.4 823.8,483.8ZM819.5,627.7 820.2,639.6 806.7,640.8 806.5,626 807.4,625.4ZM1133.2,415.9 1128.3,423.2 1126.7,423.6 1116.1,416.6 1118.3,409.8 1127,405.5ZM1414.2,418.5 1416.3,424.9 1427.5,427.3 1428.2,426.4 1423.5,413.9 1419.8,413.7ZM1054.6,679.5 1054.7,679.1 1045.9,667 1034.7,670.6 1038.9,683.8 1045.7,685.1ZM1747.2,524.1 1746.9,525.1 1738.3,530.4 1735.4,529 1734.2,517.6 1734.8,517 1739.7,516.7ZM666,541 674.1,534.7 668.6,522.2 666.2,522.1 659.1,530.5 660,537.2 660.2,537.9ZM1658.1,559 1652,561.1 1645.6,553.2 1645.8,549 1650,545.7 1651.2,545.7 1659.7,555.4 1659.3,557.7ZM1797.3,466.4 1811.3,465.5 1812.2,455.4 1808.4,451.6 1807.7,451.6 1799.2,457.4 1796.9,466.2ZM1110.3,353 1110.6,366.3 1125.3,367.4 1127.3,364.2 1124.6,357.2ZM1459.3,447.5 1449.1,454.3 1443.9,449 1447.2,440.9 1454.4,438.9 1458.9,442.8ZM737.1,446.7 727.7,437.8 724.9,438.2 719.3,455.8 723.7,457.7 732.9,456.4ZM1519.9,454.2 1523.4,460.8 1531.1,462.5 1531.2,462.4 1535.8,450.6 1535,446 1533.6,445ZM1109.2,351.2 1118.8,343.2 1129.3,346.7 1124.6,357.2 1110.3,353ZM1469.2,611 1477,609.9 1482.8,614.1 1481.1,623 1473.4,624.2 1467.5,617.6ZM1544.9,509.1 1548.5,518.8 1558.6,520.5 1555.7,508 1545.8,506.9ZM1216.2,729.1 1225.4,727.2 1230,734.3 1227.8,741.8 1221.4,742.8 1215.4,739.9ZM939.3,763.7 926.9,759.9 923.2,762.9 928,774.2 939.1,775.6ZM1584.8,426 1585,433.1 1576.2,434.6 1572.4,429.5 1574.6,425.3 1581.7,422.7ZM1083,447.4 1085.4,456.2 1081,462.4 1070.4,459.5 1068.6,455.7 1069.6,448.8 1072.6,445.9ZM1653.9,697.8 1657.9,707.2 1650.1,709.5 1646.1,701.9 1647.6,697.3ZM666.3,348 670.5,337.4 661.8,334.1 652.6,339.3 653.6,344.4 655.1,349ZM827.6,408.8 824.7,420.8 810.8,424.8 807.1,421.8 807.6,409.6 825.2,406.2ZM1841.6,550.2 1840.4,547.5 1845.7,537.3 1851.1,537.3 1854.5,540.1 1855,541.7 1849.5,552.2ZM1493.4,741.2 1495.9,751.8 1493.7,754.1 1483.2,751.4 1482.7,750.8 1482.6,750.4 1487.4,742.4ZM841.6,532.7 846.8,528.7 848.9,517.3 838.2,512.1 835.2,512.6 831.8,522.6ZM1609.7,448.9 1604.8,439.8 1601.8,439.4 1595.4,448.1 1596.5,449.6 1608.1,451.7ZM1312.9,713.9 1325.2,719.9 1326.7,719.5 1330,715.5 1326.3,705.6 1319.6,704.7ZM656.4,321.7 656.7,321.9 661.5,320.3 656,314 654.8,316.4ZM984.1,559.1 971.2,554 975.2,543 985.2,544.4 988.3,553.6 986.4,557.8ZM1524.5,510 1528.3,508.2 1529.5,503.9 1522.1,496 1519,496.5 1515.5,505.1ZM1185.1,539.4 1182.7,538 1167.6,544.6 1179,552.2 1184.6,548.9ZM1886.8,496.6 1883.8,503.9 1887.2,505 1888,504 1891.3,497.6 1892.4,496.4ZM1455.3,875.5 1456,875 1463,873.4 1468.4,871.6 1467.6,868 1459.3,866.9 1454.2,872.6ZM1775.6,650 1779.1,659.1 1779.9,659.4 1782,654 1784,653.8 1784,646.3ZM1606.7,415.8 1595.4,417.1 1595.1,423.3 1598.6,428.1 1605,426.5 1607.5,416.4ZM1594.8,688.1 1603,687.4 1599.2,674.6 1595,673.3 1588.9,683.7ZM1623.8,798.9 1632.5,794.4 1631.6,792.6 1621.6,785.6 1618.5,793.3ZM819.7,472.2 819.6,459.7 830.7,453.5 837.3,457.2 832.5,472.2 823.4,474.8ZM1189.4,346.8 1192.7,334.8 1180.8,333.7 1177.1,336.8 1182.4,348.6ZM1634,575.3 1627.2,583.5 1627.2,584.2 1633,590.2 1641.7,589 1641.8,589ZM915.7,623.9 901.8,617.7 900.7,618.3 900.9,637.1 901.9,637.7 916,627.3ZM1525.6,690.5 1531.1,696.3 1537.1,690.4 1535.2,684.4 1526.6,683.1ZM1715.1,780.3 1711.4,775.4 1708.7,775.2 1705.3,781.4 1706,781 1711.5,782.6 1714.8,783.3ZM1806.4,503.1 1803.7,505.8 1790.1,507.8 1789.4,507.2 1791.7,499.1 1801.8,497.1ZM1339.9,804.1 1342.6,797.2 1355.1,795.3 1354.3,806.2 1344.2,809.1ZM815.4,786.9 812,774.7 799.5,775.4 797.1,780.4 798,782 808,783 814,789ZM1059.9,704.1 1061.2,699 1047.4,695 1040,703.6 1044.1,709 1049.6,710.8ZM1001.8,483.3 987,495.2 980.6,475.8 996.3,477.3ZM1174.9,790.7 1193.1,788.3 1191.2,775.5 1177,777 1174.5,790.3ZM1355.1,733.1 1364.1,742.7 1361.1,752.2 1360.6,752.4 1358.9,752.2 1347.8,739.4 1348.1,737.3ZM1205.9,533.5 1217.7,528.9 1218,526.1 1210.7,514.4 1200.1,517.4 1198.3,522.7ZM1797.8,489.1 1787.8,490 1786.3,491.3 1791.7,499.1 1801.8,497.1 1801.9,494.9ZM1442.5,376 1434.8,384.4 1428.7,382.9 1426.8,380.5 1434.5,367.3 1442.5,374.3ZM905.9,339.6 910.7,343.6 905.2,355.6 892.4,349.5 894.7,342.1ZM747.8,755.3 748,759 750.6,760.3ZM1512.3,491.6 1519,496.5 1522.1,496 1525.3,490.4 1520.1,483.7 1512.1,489.1ZM1733,644.6 1729.3,640 1721.8,644 1720.7,650.2 1731.8,651.9ZM1613.4,566.2 1617.5,574.5 1624.7,570.8 1625.4,559.9 1621.2,559.6ZM1851.4,563.9 1843.3,565.6 1840.9,575.1 1844.3,576.7 1846.3,576 1852,574 1854.9,568.3ZM1559.7,886.5 1556.9,890.1 1557,890.5 1562.1,888ZM759.4,282.4 756,285 753.7,284.5 749.4,287.5 753.7,300.1 759.9,300.7 770.1,287.4ZM1565.3,492.3 1557.2,496.9 1559.9,503.6 1568.2,505.5 1572.6,498.2ZM1059.9,704.1 1061.2,699 1062.9,697.3 1078.3,705.4 1076.9,712.5 1067.7,716.3ZM1183.8,565.3 1186.4,572 1185.2,573.5 1169.9,578.5 1169,576.9 1174.1,562.5 1176.9,561.8ZM802,281.3 801.9,281.4 800,285.7 802.6,301.9 815.4,302.4 815.7,302.1 815.6,298.3 815,299 808,294 807,284 806.9,283.6ZM1023.5,785.3 1005.9,787.5 1005.3,787.2 1004.7,785.7 1006.8,774.1 1011,771.3 1019.6,774ZM1522.9,636.7 1515.1,644.5 1523.4,651.5 1530.4,643.7ZM829.3,354.6 828.6,351.3 812.6,344.1 805.6,355.7 806.3,358.8 815.7,363.6 829.3,354.8ZM884.4,629.9 890.3,617.2 880.1,612.1 872.2,615.7 871,619.5 884.2,629.9ZM770,433.5 763.4,445.2 766.5,451.1 779.4,452.8 776.6,435.8ZM1769.2,613 1773.6,609.7 1772.9,601.9 1769,600.8 1761.2,604.3 1766.8,612.7ZM1873.2,497.9 1882.5,504.2 1876,510 1868.3,507 1866.7,504.5ZM1034.7,670.6 1030,668.3 1021.9,682.4 1024,689.9 1028.4,691.8 1038.9,683.8ZM1660.5,692.9 1663.4,694.6 1665.4,705.6 1662.8,708.8 1657.9,707.2 1653.9,697.8ZM1388.5,887 1389.8,885.9 1390,883.5 1378.3,872.3 1378.2,872.3 1369.7,884.2 1370,886.3ZM1124.2,385.1 1122,381.4 1109.2,381.9 1106.4,385.6 1112.7,397.1 1122.7,395.8ZM832.6,274.7 830,275 828,277.6ZM1255,498.2 1258.1,499.5 1260.2,508.4 1254.1,518.4 1241.5,510.6ZM1757.4,661.5 1754.1,650.8 1760.6,648.1 1768.7,653 1765.4,663.3 1764.8,663.5ZM1058,387.8 1058,389.4 1050.3,399.3 1039.2,394.3 1044.3,381.2 1044.5,381.2ZM966.2,323 974.5,330 964.8,340.4 958.4,339.4 956.9,336.7 960.4,324.5ZM1664.4,744.3 1667.6,736.4 1680.1,741.4 1670.5,749.2ZM1146.4,443 1150.3,439.3 1144.3,428.7 1137.5,430.2 1133.1,442.6ZM757.3,530.1 770.1,525.1 776.9,534.8 768.1,542.5 759.8,539.3ZM1566,785.5 1560.2,787.5 1559,797.5 1566.9,798.8 1567.9,798.1 1569.7,788.7ZM1356.6,489.5 1369.6,488.9 1363.9,477.9 1358.5,478.9 1355.3,487.1ZM1290.5,709.9 1289.5,708.6 1278.5,709.3 1274.9,716.7 1275.3,717.9 1286.7,723.4ZM1019.4,580 1023.6,587.2 1036.9,587 1035.5,579.8 1026.8,573.9ZM1575.3,651.5 1571.5,647.6 1563.9,647.1 1563.1,647.7 1562.2,657.7 1570.3,658.1ZM1031.9,292.8 1043.7,297.6 1044,297.4 1045.9,288.8 1045,288.1 1040,285 1034.3,287.6 1031.5,289.3ZM1612.8,654.9 1600,653.9 1606.9,640.8 1608.3,640.9 1614.9,652.8 1614.7,653.9ZM1677.9,652 1678.2,656.3 1690.2,661.9 1691.1,661.3 1692.2,658.7 1688.4,649.4ZM1084.8,402.6 1098.8,403.9 1099.1,388.5 1086.2,393.3ZM1406.2,616.3 1407.9,611.9 1404.9,606.9 1394.4,607.1 1396.6,617.8ZM1649.4,437.2 1649.5,434.7 1651.3,432.6 1661.5,433.2 1661.5,442.5 1654.4,443ZM1864.5,529.9 1863.1,528.7 1854,527.8 1851.1,537.3 1854.5,540.1 1865,532.7ZM765.8,423.9 749.1,417.2 745.6,431.8 749.2,436.8 765.9,427.1ZM1193.8,698.7 1202.2,692 1210.2,701.7 1205.3,707 1197.2,707.5ZM1514.1,438 1509,427.2 1513.6,423.3 1522.1,426.2 1522.3,426.9ZM1594.1,848.7 1598.4,843 1596.5,835.6 1587.2,835.9 1584.7,838.5 1584.7,842.3ZM1565,483.5 1560,481.9 1556.3,483.4 1554.5,495.4 1557.2,496.9 1565.3,492.3ZM1647.8,684.2 1646.9,696.2 1634.9,694.6 1639.7,684.8ZM771.8,587.8 775.7,603.2 783.2,604.9 790.8,592 773.9,586.7 771.9,587.6ZM1560.2,773.6 1557.4,774.3 1553.9,784.2 1560.2,787.5 1566,785.5 1565.9,778.8ZM1218.8,364.2 1223.1,372.2 1235.1,371.1 1235.3,370.8 1231.1,361.7 1220.5,361ZM1020.8,860.9 1025.1,867.9 1026,867 1036,871 1037.8,868.3 1035.1,860.1 1021.6,859.8ZM1611.9,805 1621.9,803.4 1625.2,808.5 1620.2,819.3 1615.2,815.7ZM1723,733.1 1719.6,719.9 1732.3,721.8 1732.6,722.5 1727.4,732.2ZM1371.2,833.9 1380.7,831.7 1384.6,836.9 1376.6,844.4 1370.4,838.6ZM1732.6,506 1729.8,495.3 1720.4,498.4 1720.3,499.1 1724.5,507.4ZM1512.3,491.6 1519,496.5 1515.5,505.1 1509.3,506.3 1507.1,497.8ZM1721.7,750.6 1721.1,758.8 1714.3,761.8 1712.1,761.2 1708.9,751.4 1717,749Z"/>
<path fill="#cbc9c3" d="M806.3,686.5 822,687.2 825.1,678.6 812.5,669.6 804.1,674.9 802.6,682ZM1230.4,654.9 1229.7,650.8 1238.1,636.4 1249.5,642.2 1248.5,650.6 1239,656.8ZM752.1,715.4 747.9,712.8 744.6,703 747.1,698.6 758.3,699.1 762.3,705.1 760.1,711.5ZM928.9,722.7 920,715.4 908.9,719.7 907.8,724 924,733.9 925.2,732.9ZM1158,439.4 1159.4,423 1162.7,420.8 1174.5,429.2 1171.4,438 1164,443.6ZM878,679.8 875.5,666.4 878.2,663.1 886.3,661.4 892.3,670.2 888.8,677.9ZM1653,573.4 1655.8,581 1654.1,584.4 1645.9,586.1 1645.9,574.9 1651.7,572.6ZM936.3,706.5 942.1,695.2 945.1,694.1 953.1,697.5 949.6,716.7 948.9,716.9ZM1464,328.6 1456.3,331 1456.5,341.2 1460.9,342.1 1464,336 1466.8,329.6ZM1465.1,343 1466.5,339.5 1466,340 1462.4,342.4ZM957.2,865.4 958.7,879.7 943.1,877.7 941.7,865.9 951,861.4ZM1550.2,463.1 1552.8,466.2 1548.5,481.6 1547.2,481.9 1539.4,476.1 1542,467.3ZM1883.1,436.5 1877.4,441 1876.3,445.8 1880.3,451.8 1882.3,452.1 1891.3,447.1 1891.3,446.9ZM1385.2,411.2 1386.4,420 1400.6,422.7 1404.6,417 1404.2,414.1 1397.2,405.3 1393.8,404.8ZM986.3,293.5 978,296 975.3,300.5 977.4,307.8 991.1,306.8 996.5,300.3ZM761.1,756.8 761.5,745.5 751.2,741 745.7,746.2 746,747 747.6,753.1 747.8,755.3 750.6,760.3 751.7,760.8ZM1587,485.3 1587.2,481.5 1580.8,473.4 1574.4,474 1571.5,481 1575.8,485.9 1586.1,486.2ZM1074.6,509.4 1070.4,513.7 1061.4,512.4 1057.3,506.3 1058.2,499.4 1062.6,496.1 1074,502.4ZM1392.7,562.6 1395,551.5 1398.8,548.7 1401.1,549.2 1409.3,560 1405.2,567.2 1397.2,567.4ZM1295.4,643.4 1306,645.6 1311.9,642 1312.3,631.1 1312.1,630.7 1302.1,628.9 1294.6,638.1ZM1212.7,676.5 1212.3,683.3 1202.5,690.2 1192.7,680.6 1192.6,676 1207.9,672.4ZM1706.7,529 1709.3,544.9 1709,545.7 1704,548.4 1695.7,537.9 1695.8,534 1705.6,528.9ZM735.6,629.9 741.9,614.9 734.5,608.8 726.1,609.5 721.4,614 722.2,623.5 726.5,629.1ZM1339.5,668.5 1334,657.1 1325.4,659.8 1324.6,668.3 1334.8,671.1 1338.8,669.6ZM1606.9,640.8 1601,637.1 1596.6,638.6 1592.7,643.7 1595.7,654 1598.1,654.8 1600,653.9ZM1330.7,290.2 1330.7,289.3 1322,291 1322.6,296 1323,296.1ZM1097.6,827.8 1082,820.3 1081,832.4 1092.2,837.4ZM1248.4,765 1242.4,763.7 1236.4,768.8 1238.6,782 1248.8,781.2 1251.8,770.6ZM1087.1,721.1 1085,727.1 1088.1,735.8 1100.3,740.3 1101.6,739.7 1108.2,726.5 1108.2,726.4 1088.4,720.5ZM1003.1,697.7 1007.3,689.9 1003.4,680.3 989.5,682.9 995,699.2ZM1343,873.4 1346.4,871.9 1348.4,863.9 1341.6,855.5 1335.3,855.2 1329.7,864.2 1334.3,871.6ZM1400.4,326.7 1414.8,326.7 1418.8,333.1 1407.4,340 1400.6,331.5ZM1253.7,624.6 1249.6,622.3 1248.6,609.9 1258.6,609 1264.1,614 1264.5,617.5 1261.3,622.5ZM908.4,514.3 896.1,525.3 897.1,533.5 906.4,535 914.3,522.5ZM1390,798.4 1387.8,793.7 1401.5,786.6 1403.4,786.8 1405.7,794.8 1402.9,801.3 1402.5,801.5ZM899.9,566 896.2,579.9 905.8,585.6 916.5,578.6 915.1,571.8 901.2,565.2ZM1555.7,508 1559.9,503.6 1568.2,505.5 1569.2,508.8 1562.5,521 1559.4,521.1 1558.6,520.5ZM1322.1,783.8 1321,788.1 1305.9,784.6 1305.7,784.1 1311.4,773.9 1318,775.1ZM1182.2,400.5 1183.1,402.8 1179.8,415.6 1164.7,411.8 1164.7,411.8 1167,405.2 1177.9,398.8ZM1060.9,631.5 1062,628.6 1051.2,616.6 1039.9,623 1039.9,624.3 1048.1,635.6ZM984.5,677.4 968.8,669.7 962.5,680.6 965.3,691.1 977.8,689.5 986,681.5ZM1609,491.5 1607.5,499.8 1614.5,507 1619.7,495.3 1613.7,489.8ZM1154.9,592.8 1149.1,594.2 1145,591.9 1141.7,579.4 1148.2,574.1 1152.8,574 1156.5,591.2ZM1055.9,535.3 1058.6,544.3 1061.6,545.5 1073.5,541.1 1074.5,538.9 1071.2,529.6 1060.9,529.1ZM1209.4,721.8 1210,720.6 1220.1,713.1 1229.4,717.9 1225.4,727.2 1216.2,729.1ZM1372.6,704.7 1384.7,699.4 1387.1,710.2 1383.6,714.6 1370.9,709.3ZM1580.1,879.9 1576.7,879.8 1576.5,880.4 1580,880 1580.3,880.1ZM1478.3,345.7 1468.5,348.9 1470.6,361.1 1483.8,356ZM726.8,353.9 735.4,364.2 741.5,364.5 750.1,352.7 749.1,349.4 731.5,348.3ZM951,861.4 941.7,865.9 935.3,861.8 943.2,844.2 947.1,842.7 951.5,845.1 952.5,847.2ZM927.1,681.8 928.4,689.6 922.2,696.9 905.9,689.9 905.5,688.2 920.6,677.7ZM1443.8,871.7 1454.2,872.6 1459.3,866.9 1454.5,857.8 1448.6,857.4 1441.8,864.4ZM1346.9,578.5 1358.3,580.6 1360.6,579.6 1361.2,578.5 1358,566.8 1346.6,568.1ZM1444,471.3 1456.3,466.5 1457.5,472.2 1453.4,481.1 1449.8,482.5 1445.6,481ZM1160.2,837.5 1148.2,851.3 1155.6,858 1167.2,857.1 1168.6,845.1ZM695.3,341.3 713.2,345.2 715.2,349.8 704.1,360.9 693.3,343.9ZM1295.6,407.4 1296,399.5 1289.2,394.4 1288.1,394.4 1280.1,401.6 1280.1,402.8 1288.7,414.3ZM988.3,597.1 991.8,594.1 1002.4,598.1 1004.7,606.5 998.6,612.9 986.4,608.3ZM1309.8,611.9 1317.6,620.2 1312.1,630.7 1302.1,628.9 1299.2,619.2 1304.2,611.9ZM1414.1,524.3 1420.3,517.1 1418.8,510.5 1404.1,511.5 1403.5,512.1 1405.1,521.1ZM1122.7,461.5 1115,469.4 1113.9,473.7 1122.5,480.9 1135.7,473 1127.8,461.5ZM1208,382.2 1219.6,383.2 1219.2,401.4 1216.3,403.1 1213.6,402.5 1204.9,387.6ZM1537.2,847.2 1527.3,856.5 1526.1,856 1518.8,844.1 1520.6,840.2 1533.4,840.2 1537.6,844.5ZM1507,831.9 1513.5,830.4 1516.3,821.2 1507.6,815.7 1503.1,816.7 1501.6,820.8ZM683.5,536.7 674.1,534.7 668.6,522.2 675.3,516.6 679.6,516.1 686.6,530ZM1512.4,623.9 1512.4,628.8 1512.2,628.9 1500.6,632.2 1493.8,629.1 1497,618.3 1501.3,617.7ZM1500.2,716.6 1495.1,718.1 1494.5,718.8 1496.7,728.5 1505.9,727.3 1508,724.6ZM660.6,500.7 660,504 658.5,510.2 657.1,514.5 664.2,504.2ZM1535.8,756.2 1539.2,757.9 1540.7,767.8 1529.2,770.7 1528.3,770.2 1528.2,758.4ZM1472.1,803.2 1463.6,791 1473,787.9 1478.2,791.9 1478.6,795.2ZM1172.8,634.1 1165.9,623.2 1172,615.9 1176,615 1184.2,624.3 1175.9,633.6ZM804,548.5 811.1,559.6 810.7,562.2 806.2,564.7 793.3,562.8 790.9,558 796.2,549.4ZM1224.8,664.6 1219.1,673.8 1212.7,676.5 1207.9,672.4 1206.7,656.4 1207.5,655.1 1224.9,659.8ZM1275.4,798.1 1283.2,782.8 1281.8,780.8 1266.6,781.6 1263.1,787.4 1266.2,795.5ZM1191.2,775.5 1193.9,771.1 1210.2,777.2 1203.7,792.8 1198.2,793.1 1193.1,788.3ZM1197.6,423.7 1191.4,417.7 1181.2,418.1 1178.1,427.6 1190.4,433.5 1196.6,429.5ZM1444.2,803.9 1449.1,802.3 1450,790.1 1446.9,786.4 1445,785.9 1438.5,795ZM1127.3,763.1 1135.4,776 1146.3,770.2 1145.1,756.3 1133.4,757.3ZM1362.5,628.1 1356.3,623.5 1354.5,613.5 1354.8,612.3 1356,611.4 1367.4,609.9 1373.8,618.3ZM1180.5,605.9 1176,615 1184.2,624.3 1188.5,624.1 1192.5,621 1193.4,610.1ZM1064.3,376.3 1068.3,369.3 1057.1,358.7 1051.4,360.1 1050.4,362.3 1052.2,371.1ZM1210.6,625.7 1215.3,641.4 1220.4,641.1 1227.2,632.6 1221.4,625.3ZM1616.6,413.9 1614.8,416.6 1617.5,422.6 1628.7,421.8 1629.5,417.6 1625.5,412.8 1623.5,412.4 1621.8,412.8 1623.6,414 1619.6,413.3ZM1503,699.6 1501.2,696.7 1491.6,693.1 1489.7,695.9 1491,706.9 1501.2,705.9ZM1339.7,424.1 1332.6,435.6 1322.7,433.5 1319.4,429.2 1319.4,428.6 1324.6,419.8 1338.5,422.1ZM1041.3,446.6 1040.7,448 1044.4,458.9 1049.1,460.7 1051.7,459.9 1054.5,456.5 1054.8,443.5 1053.3,442.9ZM963,423.2 978.3,425 981.2,420.4 980.4,415.1 970.2,405 970,405.1 960.4,417ZM1148.2,851.3 1146.9,851.1 1135.5,860.3 1135.5,862 1147.5,874 1151.6,873 1155.6,858ZM1192.6,594 1192.8,588.8 1199.7,582.6 1202.4,583.2 1209.7,593.4 1200,603ZM1686.6,795.5 1680.7,800.4 1671.6,790.3 1672.2,789.2 1683,785.5 1686.2,787.3ZM1667.7,756.7 1661.7,765.5 1672.8,772.5 1674.2,772 1675.7,767.1 1670.6,755.6ZM1267.2,392 1264,389.4 1252.8,388.7 1251.1,402.5 1259.3,408.2 1268,396.3ZM782.1,660 784.8,646.7 791.4,642.7 797.6,658.1 793,664.3 785.8,665.5ZM1268,396.3 1280.1,401.6 1280.1,402.8 1273,412.7 1267,413.9 1259.8,410.6 1259.3,408.2ZM735.3,589.8 721.1,592.7 726.1,609.5 734.5,608.8 738.2,596.6ZM1192.9,525.6 1181.1,522.4 1178.9,515.3 1194.2,510.5 1200.1,517.4 1198.3,522.7ZM1281,907.8 1279.9,902 1271.9,894.1 1267.9,895 1265,906.4 1274.9,911.3 1276.1,911.3 1276.8,911.3ZM1305.7,784.1 1298.7,778.5 1287.4,785 1293.3,793.9 1299,795.5 1301.1,794.6 1305.9,784.6ZM1156.7,571.2 1169,576.9 1174.1,562.5 1166.7,559.4 1157.9,563.6ZM1286.1,555 1273.2,555.1 1270.8,562.3 1272.6,568.4 1283.8,573.5 1287,572.6 1288.9,567.8ZM1268.7,765.4 1269,765.4 1277.5,757.7 1271.2,747.5 1259.3,752.6 1259.2,754.1ZM1386.6,462.8 1386.5,465.5 1389.5,469 1399.7,465.7 1401.7,460.3 1395.6,454.6ZM728.6,321.6 727.4,332.9 717.2,334.2 708.5,326 710.9,316.1ZM1580.3,847.6 1575.1,848.4 1570.9,840.5 1576.6,835.7 1584.7,838.5 1584.7,842.3ZM1210,908.9 1200,906 1194.1,911.8 1194.1,912.3 1196.3,911.9 1201.9,913 1204.1,913 1208.1,912.2 1211.6,912.7ZM1400.1,326.3 1400.4,326.7 1414.8,326.7 1417.7,315.9 1415.6,313.4 1409.5,311.7 1400,322.4ZM1193.8,555.4 1183.8,565.3 1186.4,572 1195.5,573.4 1201.9,565.4 1201.8,559.2 1195.1,555.3ZM1334.2,888.5 1329,880 1323.5,880.4 1319.9,885.2 1321.4,892.8 1328.6,892.6 1334,889 1334,889ZM1224.9,659.8 1207.5,655.1 1207.1,648.8 1207.3,648.5 1215.3,641.4 1220.4,641.1 1229.7,650.8 1230.4,654.9ZM1356.6,547.1 1361.2,541.4 1372.9,555 1366.5,560 1362.4,560.4 1358.1,556.5ZM975.3,805.7 971.4,797.4 964.7,794 956.8,797 954.5,810.4 955.8,811.9 970.1,814.2ZM1275.5,496.3 1274.5,510 1270,513 1260.2,508.4 1258.1,499.5 1270.2,494.2ZM1340.7,687 1347.9,691.5 1348.2,701.6 1344.2,705.1 1333.2,697.1 1337.6,688.2ZM939.5,365.1 923.9,357.9 922.3,359.7 923.5,370.7 933.4,376.5 940.3,372.3ZM1521.1,601.8 1531.9,598.9 1536.4,605.8 1530,612.2 1521.8,606.7ZM942.7,878.1 935.8,878.3 936,879 942.3,880.3ZM1899.5,399 1901.2,397.1 1897.4,388.4 1896,390 1891,392 1892,398 1891,399ZM717.6,589.8 719.1,591.9 721.1,592.7 735.3,589.8 738.5,583.6 725.9,570.6 720.1,572.8ZM1322.2,535 1322.5,524.3 1317,520.4 1309.7,522.6 1309.1,533ZM1176.9,380.1 1160.8,375 1157.2,377.9 1156.6,391 1157.2,391.3 1173.9,388.3ZM1307.1,845.4 1307.1,845.2 1293.3,835.1 1291.2,835.9 1289.4,844.5 1298.1,851.1ZM868.4,771.3 856.2,760.7 847.4,775.7 852.9,782.3 866.8,778.5ZM1258,658.8 1248.5,650.6 1249.5,642.2 1252.6,640.1 1260,640.4 1269.2,649.6 1268.5,651.5ZM1561.5,828.9 1557.1,836.8 1562.2,844.6 1570,840.3 1562.3,828.8ZM1240.3,867.5 1251.2,865.7 1255.2,869 1255.6,876.4 1251.5,878.8 1240.1,874.9 1237.8,871.4 1237.8,870.6ZM1275.2,350.9 1275.3,361.3 1270.4,365.1 1264.7,363.2 1261.3,357.7 1265.4,348.5ZM721.8,410.2 724,392.7 737.8,397.8 734.7,412.9 730,415 728.1,414.6ZM1217.7,431.1 1227.8,425.2 1227.5,416.8 1217.8,413.8 1212.6,420.4ZM1303.8,813.9 1306.1,813.7 1312.8,819.4 1311.7,831.9 1298.9,827.4 1298.4,824.8ZM719.3,640.2 710.9,638.8 703.8,646.9 713.5,656.8 723.6,653.1 723.9,652.7ZM709,529.7 716.2,520 725,519.5 730.4,522.8 725.6,537.6 723.5,538.3ZM1179,600.1 1192.6,594 1200,603 1199.9,604.9 1193.4,610.1 1180.5,605.9 1178.7,600.7ZM753.6,726.7 749.2,731.4 739.9,729.9 736.7,719.2 747.9,712.8 752.1,715.4ZM1141.8,907.2 1135.9,913 1140.1,913 1142.6,912.9 1144.2,913 1150.4,913 1151.7,912.7ZM1025.8,786.8 1023.5,785.3 1019.6,774 1025.4,765.9 1033.2,765.2 1038.3,770.4 1036.8,777.7ZM758,684.8 760.5,677.5 775.4,683.7 771.2,691.6 762.3,691.9ZM1607.5,577.1 1603.2,585 1614,588.4 1616.7,577.3 1616.6,577ZM1292.3,351.6 1299.3,356.7 1303.1,365.6 1293.4,373.9 1287.4,372.8 1284.2,364 1290.8,352ZM1385.6,434.4 1385.2,433.8 1385.6,421.1 1386.4,420 1400.6,422.7 1403.4,434 1403.3,434.1ZM1288.5,552.1 1285.6,542.6 1278,540.6 1271.9,551.6 1273.2,555.1 1286.1,555ZM1445.6,529.9 1450.9,535.5 1448.7,542.1 1441,546.1 1434.5,535.3 1437.2,530.4ZM1221.4,440.5 1216.4,435.9 1217.7,431.1 1227.8,425.2 1237.3,429.6 1236.5,438ZM1081.5,496.4 1079.3,489.5 1071,486.4 1064.2,490.4 1062.6,496.1 1074,502.4ZM1563.3,614.9 1556.9,622.4 1550.2,622.1 1548.7,614.7 1551.2,610.4 1561.9,612.4ZM1640.7,446.6 1649.4,437.2 1654.4,443 1652.8,450.3 1641.9,448.3ZM1388,646 1382.9,657.9 1383,657.9 1399.8,656.1 1401.3,654.2 1398.2,643.5 1396.2,643ZM776.4,556.2 779.7,555 785.7,539.7 781.2,535.1 776.9,534.8 768.1,542.5 770.2,551.8ZM788.8,696.8 795.8,703.4 804.8,698.9 806.3,686.5 802.6,682 788.5,685.8ZM1566.3,455.4 1556.5,451.8 1550.3,461.9 1550.2,463.1 1552.8,466.2 1558.8,469.4 1567.7,467.2ZM1274.7,662.6 1283.4,663.2 1284,662.7 1284.5,650.6 1275.3,646.4 1269.2,649.6 1268.5,651.5ZM1027.6,397.1 1028.4,396.8 1032.1,397.6 1040.1,414 1031.4,419.9 1028.6,419.5 1022.2,412.5 1023.2,402.2ZM984.2,824.5 991,832.8 991,833.2 979.6,846.7 978.4,846.4 968.1,835.8 968.1,829.3 971.8,824.6ZM1379.4,633.3 1375.6,618.8 1373.8,618.3 1362.5,628.1 1363.7,631.8 1378.7,634.2ZM1235,579.1 1227.2,575.3 1220.3,582.3 1220.2,590.8 1231.2,594.7 1238.4,586.1 1238.4,585.8ZM1441.8,864.4 1433.7,861.5 1435.9,849.5 1445.6,851.1 1448.6,857.4ZM838.9,743.8 856.3,736 848,721.7 836.7,730.6 838.6,743.7ZM1219.5,700.7 1218.6,701.6 1220.1,713.1 1229.4,717.9 1235.8,716.3 1234.8,703.9 1231.1,700.7ZM1527.2,785.5 1531.1,779.1 1540.1,782 1537.9,792.5 1536.8,793.6ZM1183.9,696.5 1183.1,691.6 1192.7,680.6 1202.5,690.2 1202.2,692 1193.8,698.7ZM1398.7,306.5 1408,309.6 1408.6,306 1406,304 1399.2,302.1ZM1110.6,890.8 1110.3,890.6 1110.5,891.2ZM1252.5,374 1251.1,375.1 1239.2,369.8 1243.6,358.9 1249.5,357.6 1250.8,358.5ZM1297.1,492.7 1291.5,483.9 1286.5,483.5 1278.4,495.6 1288.9,502.1ZM736.5,732.5 736.7,732.8 740,738 744.3,742.3 745.7,746.2 751.2,741 749.2,731.4 739.9,729.9ZM933.3,707.6 922.6,703.5 921.1,705 920,715.4 928.9,722.7 930.1,722ZM1415.5,858.7 1420.8,870.1 1426,870.4 1433.5,861.5 1421.6,854ZM1516.7,598.1 1507.9,606.6 1499.9,603.1 1504,591.4 1506.4,590.7 1515.9,595ZM898.3,462.3 914.6,452.1 920.5,463.3 915.3,474.8 912.7,475.4 897.9,464.5ZM1090.7,499.9 1096.2,494.7 1091.5,484.4 1084.9,483.4 1079.3,489.5 1081.5,496.4ZM1501.7,793 1511.7,791.7 1514.7,800.3 1511.7,804.2 1503.4,802.9 1499.6,796.3ZM1604,687.9 1611.4,682.9 1616.1,683.9 1622,693.7 1611.7,696.7 1604.6,689.8ZM759.6,642.9 770.5,634.5 761.4,623.8 756.9,624.7 753.6,630.2 759.2,642.8ZM1011.6,706.4 1003.1,697.7 1007.3,689.9 1019.5,692.1 1012.9,706.6ZM1339.7,787 1332.1,777.2 1332.4,775.8 1341.9,770.1 1341.9,770.1 1348.8,780.6ZM1154.6,755.7 1158.6,766.3 1171.4,767.7 1171.8,766.7 1166.4,751.2ZM1101.5,826.2 1108.4,839.7 1106.4,844.5 1093.6,844.1 1092.2,837.4 1097.6,827.8ZM1305.9,312.3 1308.8,313.6 1319.1,310.5 1319.1,309.9 1318.2,308.2 1312.9,308.9 1306,309 1305.1,309.1ZM1195.8,838.7 1200.1,850.1 1184.5,855.4 1181.4,839.8ZM1253.5,475.3 1262,467.9 1271.6,477.1 1267.9,483 1257,481.3ZM1157.8,736.2 1165.9,725.4 1164.6,719.4 1149.3,720 1154.2,736ZM1473.3,782.3 1473,787.9 1463.6,791 1462.3,790.8 1461.3,783.9 1466.2,777.3ZM1230,894.7 1233.2,900 1228,907.3 1217,901.5 1218.3,895.2ZM1429.1,551.4 1440.9,546.5 1441,546.1 1434.5,535.3 1426.3,539.2 1427.5,550.1ZM1599.8,720.7 1600.5,716.4 1593.5,706.5 1586.7,708.2 1588.2,717.6ZM1517,548.8 1514,558.4 1513.1,559.2 1503.7,557.2 1503.2,547.8 1507.9,544.9 1515.5,546.6ZM1313.1,657.2 1313.3,668.6 1320.5,670.6 1324.6,668.3 1325.4,659.8 1319.4,653.9ZM1185.1,874.5 1174.2,876.4 1170.6,874.7 1169.2,858.8 1183.6,857.1 1189.2,869ZM913.1,448.5 914.7,451.1 914.6,452.1 898.3,462.3 893.6,452.6 898.5,442.7ZM1523.3,585.1 1515.9,595 1516.7,598.1 1521.1,601.8 1531.9,598.9 1533.6,593.9ZM922.2,696.9 922.6,703.5 921.1,705 904,706.8 902.2,701.6 905.9,689.9ZM1495.8,858.1 1510.1,856.7 1510,847.8 1504,842.9 1495.3,845.6 1493.1,855.1ZM1105.3,457.4 1110.7,450.1 1103.9,437.5 1096.7,438.5 1096.6,438.5 1096.3,456.5 1098.5,458.6ZM1532.1,715.4 1535.1,722.5 1538,722.9 1545.2,719.3 1545.6,718.5 1542.9,709.3 1533.4,712.6ZM1429.5,629.9 1440,637.9 1444.4,635.5 1446,626.7 1442.4,622.2 1435.5,623ZM1443.8,871.7 1443.3,872.6 1431.1,877.1 1426,870.4 1433.5,861.5 1433.7,861.5 1441.8,864.4ZM1311,873.2 1318,872.4 1323.5,880.4 1319.9,885.2 1311.6,883.7 1310.2,874.1ZM1170.9,819.6 1171.2,828.1 1159.5,833.4 1155.2,829.4 1157.7,816.3 1158.3,816.1ZM1872.9,492.1 1863.6,492.7 1861,502.3 1861.6,503.4 1866.7,504.5 1873.2,497.9ZM1467.7,747.7 1475.6,743.9 1476.2,735.4 1462.7,737.7 1464.6,746.3ZM1210.1,612.4 1208.6,624.6 1210.6,625.7 1221.4,625.3 1228.4,612.7 1227.8,611.9 1217.7,608.9ZM802,531.6 789,540.2 796.2,549.4 804,548.5 807,541.3 802.8,531.8ZM1613.4,566.2 1621.2,559.6 1612.8,551 1608.2,552.9 1606.7,555.4 1607.6,564.3ZM762.2,334.5 761.6,340.2 749.8,347.5 744.7,333.6 755.9,328.3ZM1516,615.4 1508.7,610.2 1501.3,617.7 1512.4,623.9 1516.5,617.7ZM1232.9,816.9 1241.2,825.5 1237.3,833.9 1227.8,832.5 1226.4,819.7ZM942.7,878.1 943.1,877.7 941.7,865.9 935.3,861.8 935.3,861.8 926.9,867.7 934,873 935.8,878.3ZM1493.9,732.1 1482.4,728.5 1483.7,721.7 1494.5,718.8 1496.7,728.5ZM1382.7,480.3 1386.1,489.3 1396.3,491.3 1397.2,480.8 1389.9,476.3ZM1266.9,841.1 1265.8,853.2 1272.8,855.9 1280.6,848.1 1276.1,840.4 1267.4,840.5ZM1434.5,580.8 1440.7,587.2 1440.9,589.9 1435.6,594.7 1426.7,593.5 1426.3,584.6ZM1261.3,892.2 1262.3,879.1 1255.6,876.4 1251.5,878.8 1250,886.9 1258.2,893.1ZM1231.4,316.2 1240.2,320.5 1244.6,319.4 1246.4,315.5 1244.7,307.5 1240.3,306.8 1234.5,307.1ZM1242.3,688.3 1243.3,700.2 1250.4,703.6 1254.8,700 1255.6,687.9ZM1699.6,771 1695.1,762 1687.5,763 1689.2,772.6 1694.3,774.8ZM1332.4,568.6 1343.2,564.6 1346.6,568.1 1346.9,578.5 1342.9,582.3 1335.4,583.9 1335.2,583.8ZM1075,357.6 1066.2,348.3 1066.2,346.6 1068.3,343.1 1085.7,341.1 1086.6,353.1 1084.3,356.1ZM1212.9,553 1201.8,559.2 1201.9,565.4 1211.2,571.6 1218.4,566.1 1217.2,556.8ZM1194.5,319.8 1193.5,334.3 1192.7,334.8 1180.8,333.7 1180.3,320.3 1183.2,317ZM860.9,595.1 853.3,597.7 848,594.9 850.6,581.3 860.8,579.5 861.8,580.9ZM1640.5,446.6 1641.9,449.4 1641.9,448.3 1640.7,446.6ZM1632.8,447.9 1629.6,457.6 1639.2,461.3 1641,460.9 1642.3,458.4 1642.2,457.4 1639.4,448.9 1636.8,446.7ZM1488.7,784.7 1492.3,796.9 1489.1,800.1 1488.8,800.1 1478.6,795.2 1478.2,791.9 1487.1,784.5ZM1296,875.5 1310.2,874.1 1311.6,883.7 1306.4,889.3 1303.3,888.4ZM1032.8,812.1 1027,822.6 1038.8,827.5 1039.7,827.2 1043.5,817ZM1379.9,811.6 1387.7,821 1381.1,826.5 1371.4,820.7ZM958.3,594.4 963.9,582.2 962.1,578.6 948.5,576.2 948.4,576.2 950.1,590.9ZM1480.2,774.2 1469.8,769.8 1466,774.9 1466.2,777.3 1473.3,782.3 1480.2,777ZM1447.1,680.1 1443.5,671.1 1438.9,671.3 1433.7,676.6 1435.5,683.7 1440.1,685.6 1445.5,683.8ZM1875.9,462.6 1884.9,464.1 1886.4,472.2 1884.8,473.4 1873.4,471.7ZM1858,438.2 1857,433 1856,434 1846,438 1845,439.3 1845.2,440.5 1851.4,444.6ZM699.2,662.3 693.9,658.3 693.4,658.7 694,660 699.2,662.6ZM703.8,646.9 699.4,647.3 692.5,634.8 697.4,627.6 702.8,627.1 703.8,627.6 710.9,638.8ZM1418.8,333.1 1420.8,334 1423.5,339.1 1422.8,342.9 1413.9,349.6 1406.8,345.4 1407.4,340ZM1281.7,291.3 1282,290 1280.2,293ZM1294.2,587.9 1286.3,592 1277.8,588.6 1283.8,573.5 1287,572.6 1292.8,576.4ZM1127.2,730.1 1136.5,730.4 1141.1,738.5 1130.2,745.3 1122.6,742.1 1122.4,733.7ZM1305.4,703 1297.2,695 1297.1,692.5 1310.5,688.7 1314.7,695.2 1314.5,696.3ZM721.4,614 708.8,609.5 702.8,627.1 703.8,627.6 722.2,623.5ZM922.2,643.4 903.6,640.6 903.6,653.9 906.5,656.7 917.2,655.8ZM739.3,633.9 753.6,630.2 756.9,624.7 747.3,614 741.9,614.9 735.6,629.9ZM1387.5,805.7 1379.9,809.8 1371,801.6 1385.2,791.9 1387.8,793.7 1390,798.4ZM1670.5,806.2 1672,805 1680,801 1680.7,800.6 1680.7,800.4 1671.6,790.3 1668.6,791.9 1667.7,805.8ZM1325,392.2 1327.1,405.3 1335.9,405.8 1338.3,391.2ZM1179.6,352.9 1189.5,362.5 1179,370.7 1172.5,362.5 1175.4,354.6ZM1521.8,606.7 1516,615.4 1516.5,617.7 1527.2,620.5 1530.2,616.1 1530,612.2ZM1917.1,411.2 1921,410.5 1921,407.5 1920.9,406.9 1921,406 1921,399.7 1917.3,398 1913.3,402.5 1913.1,409 1913.6,409.7ZM1438.9,330.4 1428.9,326.9 1427.8,316.7 1429.1,315.8 1439.6,315.4 1442.6,318.9ZM1378.2,576 1376.3,585.2 1368.5,589.5 1360.6,579.6 1361.2,578.5 1372.4,574.1ZM1676.6,678.8 1685.9,681 1688,670.7 1686.9,668.6 1679.4,668.9ZM1196.8,826.9 1195.8,815.5 1182.2,814.8 1184.4,825.5ZM1310.4,859.8 1319.7,860 1324.1,864.2 1318,872.4 1311,873.2 1308.6,861.7ZM1883.8,433.9 1883.1,436.5 1877.4,441 1868.8,436.5 1868.5,429.8 1880.6,427.6ZM1269.4,523.5 1255.1,523.9 1254.1,518.4 1260.2,508.4 1270,513ZM1280.2,293 1280.1,293.1 1281.1,294.5 1281.7,291.3ZM844.2,369.7 846.1,379 858,380.2 863,373.7 862.7,369.9 848.4,364.8ZM1446,626.7 1444.4,635.5 1453.6,640.1 1459.7,632.1 1457.4,626.8ZM908.9,719.7 903.9,707.3 904,706.8 921.1,705 920,715.4ZM1470.1,760.9 1483.4,764.3 1483.2,751.4 1482.7,750.8 1471.4,756.8ZM950.7,634 950.8,633.3 959.8,626.5 968.1,631.1 962.6,644.6 957.8,643.3ZM1178.4,908 1178,907.5 1169.8,909.5 1167.4,912.7 1172.3,912.5 1178.4,912.5 1179,912.5ZM1625.9,888.9 1618.6,903.4 1616.7,902.8 1612.6,890.1 1624.4,886.2ZM1263.9,669.8 1258,662.7 1244.3,671 1255.3,679.8ZM1152.4,799.7 1148.1,798.6 1139.9,806.5 1143,814.1 1154.8,814.3ZM965.8,861.1 957.2,865.4 951,861.4 952.5,847.2 966.4,854.8ZM796.2,549.4 790.9,558 779.7,555 785.7,539.7 789,540.2ZM1654.1,584.4 1660.4,594 1654.3,598.9 1643.3,588.6 1645.9,586.1ZM1493.3,532.9 1487.3,529.4 1479.1,533.4 1487.7,540.4 1493,537.2ZM1389.4,354.2 1395.4,344.8 1404.2,346.8 1400.9,357.3 1396.6,358.8ZM1340.7,687 1343.9,680.5 1354.5,679.7 1354.1,688.3 1347.9,691.5ZM758,684.8 745,688.9 747.1,698.6 758.3,699.1 762.3,691.9ZM878,679.8 888.8,677.9 893.6,686.1 886.5,691.9 875.3,684.8ZM1534,745 1537.4,743.3 1547.5,751.2 1546.8,752.7 1539.2,757.9 1535.8,756.2ZM920.6,677.7 905.5,688.2 904.6,687.4 901.9,671.5 905.5,668.2 919.3,672.7ZM1037.1,723.5 1051.4,725.1 1052,735.3 1037.4,736.1ZM828.6,724.7 828.5,724.3 816.3,719.1 812.1,729.4 816.6,735.9 819.2,736Z"/>
<path fill="#e8e3d8" d="M1386.1,489.3 1396.3,491.3 1396.3,491.4 1395.9,495.4 1386.9,506 1385.2,505 1380.1,495ZM1774.6,649.8 1768.7,653 1765.4,663.3 1768.6,665.2 1773.1,665.5 1779.1,659.1 1775.6,650ZM1205.6,445.3 1208.6,438.5 1196.6,429.5 1190.4,433.5 1188.2,443.6 1197.9,448.5ZM886.7,800 878.7,797.9 873.9,801.5 874.5,817.7 881.6,818.5 890,814.4ZM755.6,388.2 746.4,378.4 747.9,374.8 760.8,369.4 768.8,377.2 765.5,383.5ZM1667.6,646.7 1664.2,654.8 1673.3,664.1 1678.2,656.3 1677.9,652 1675.2,648.8ZM806.3,358.8 795.2,371.3 782.9,361.3 782,357.8 793.8,348.8 805.6,355.7ZM1219.2,349.4 1220.3,348.4 1221.9,339.6 1216.2,329.2 1215.9,329.1 1211,330.3 1204,338 1206.5,348.2ZM1562.2,657.7 1563.1,647.7 1553.5,645.2 1549.3,646.9 1547.9,648.8 1552.3,658.7 1561.3,658.8ZM940.3,372.3 933.4,376.5 930.8,385.5 936.2,391.3 950.9,388.2 948.1,376.3ZM1303.3,593.6 1317.5,595.7 1318.6,597.1 1319.1,602.2 1309.8,611.9 1304.2,611.9 1299.3,602.5 1303.1,593.7ZM1513.6,423.3 1512.3,412 1512.5,412 1518.4,412 1525,419.8 1522.1,426.2ZM1664.6,579.6 1673,580.5 1676.1,576.5 1674.2,570.4 1670.4,568.7 1663.9,571.4ZM750,454.6 742.3,462.9 739.7,462.8 732.9,456.4 737.1,446.7 748.2,444.3ZM1804.6,574 1803,574.3 1799.2,583.9 1803.5,590.7 1807.2,591 1807.4,590.9 1807,588 1814.7,586.3 1815.2,583.9 1811,577.1ZM671.9,423.3 674.9,412.7 667.3,402.6 668,406 669,410 669,418.3 669.6,422.4ZM1386.6,462.8 1386.5,465.5 1372.8,469.1 1371.4,457.6 1379.4,453.7 1380.4,454ZM1424.7,822.2 1430.9,830.5 1429.4,835 1418.7,840.5 1415.8,839.4 1410.9,828.4ZM1467.4,576.8 1469.8,586.1 1478.9,591.3 1481.7,589.6 1483.8,579.7 1479.4,573.9 1473.8,573.5ZM782.1,295.6 774.8,286.3 770.1,287.4 759.9,300.7 769.5,312.1 773.3,310.9 782.6,299.5ZM1146.7,406 1164.7,411.8 1167,405.2 1157.2,391.3 1156.6,391 1144.7,396.6ZM833.8,815.5 828.4,816.9 830,819 835.3,822 840,822.7ZM1284.8,333.9 1296.3,337.7 1300,329.1 1295.1,318.9 1294.4,318.6 1285,320.9ZM1045,351.2 1045.1,346.2 1037.4,340.6 1030,341.9 1026.4,347.2 1028.2,358.9 1028.7,359.1ZM1629.4,912.1 1630.8,912.1 1636.5,912.5 1641.5,912.1 1641.7,911.8 1641.7,910 1639.2,907.7 1629.7,910.2ZM1084.8,402.6 1098.8,403.9 1101.3,406.7 1101.3,415.1 1089.8,419.6 1079.8,409.3 1079.6,407.8ZM689.1,317.2 689.1,324.3 696.6,332 708.5,326 710.9,316.1 710.7,315.1 707.3,313.2 697,315.6 693.2,315.3ZM837.3,701.6 837.3,695.8 841.6,691.2 852,692.3 855.8,701.9 849.3,706.8ZM1797.3,466.4 1801.2,475.6 1799.3,480.5 1791.1,479.7 1790.7,479.2 1791.2,466.9 1796.9,466.2ZM1389.4,354.2 1395.4,344.8 1393.2,340.2 1386.8,338.5 1379.8,345.8 1386.3,354.4ZM1671.1,528.7 1672.7,526.5 1671.5,520.5 1671.4,520.5 1664.9,523.1 1661.6,524.3ZM1676.6,678.8 1685.9,681 1688.9,685.6 1685.1,691.5 1675.3,691.9 1674.8,691.6 1672.5,683.3 1673.7,680.5ZM1127.5,584.6 1116.7,590.9 1116.1,590.4 1110.5,573.7 1116.6,570.9 1128.6,581.2ZM1553.8,556.3 1563.5,567.2 1568.4,568.2 1570.7,554.2 1566.4,550.8 1556.2,553.3ZM1840.9,575.1 1839.2,575.9 1837.5,579 1840,578 1844.3,576.7ZM1047.8,430.6 1049.8,427.2 1059.8,428 1063.2,433.9 1056.5,443.1 1054.8,443.5 1053.3,442.9ZM1266.9,841.1 1265.8,853.2 1262.4,854.8 1253.4,853 1250.4,840.6 1251.1,839.9ZM1423.4,739.7 1430.1,728 1416.4,722.2 1416.2,722.3 1414.7,724.6 1416.6,737.8ZM692.6,509.4 687.7,509 681.2,498.5 686.8,485.3 693.6,487.2 698.3,494.1ZM1436.8,484.4 1435.6,491.3 1424.6,494.4 1418.1,483.2 1432.4,480.1ZM1204,860.3 1201.4,851 1212.6,845.6 1217.9,848.7 1218.2,857.4 1207,861.6ZM1586.1,608.8 1586.5,608.8 1589.3,603.2 1584.2,593.8 1577.8,595 1575.7,603.4ZM1523.7,868.1 1531.2,872.9 1532,873 1538.6,873.8 1540.2,874.1 1538.6,866.4 1527.6,857.4ZM1725.4,762.7 1721.1,758.8 1714.3,761.8 1715.4,771.1 1723.5,770.8 1724,770 1725.3,768.7ZM1687.8,616.2 1689.3,627 1689.4,627.1 1701.8,624.2 1702.8,620.8 1690.8,613.1ZM1530.4,643.7 1533.4,643.2 1540.5,650.3 1536.3,659.2 1526.1,657.4 1523.4,653.1 1523.4,651.5ZM1511.5,864.9 1504.9,869.5 1510,868 1517.7,870.3ZM1592.1,412.3 1595.4,417.1 1606.7,415.8 1605.6,410.3 1600,410 1599.4,409.9 1596,410 1594,409.8ZM1487.7,360.7 1479.7,371.3 1482.3,377.4 1489.4,378.6 1495.4,373.7 1491.4,362.7ZM1421.5,673 1427.5,662.8 1425,656.9 1412.5,657.2 1413,670 1413.9,671.2ZM1040,703.6 1047.4,695 1045.7,685.1 1038.9,683.8 1028.4,691.8 1032.8,701.7ZM1555.4,590.1 1562,594.5 1570.2,588.4 1563,579.9 1555.1,581.3 1554.4,582.3ZM776.6,435.8 779.4,452.8 780.7,453.9 787.8,454 795.5,447.5 795.6,444.3 789.3,430.7ZM1068.8,624.3 1080.6,627 1086.2,619 1078.9,606.1 1068.3,607.9ZM1001.8,483.3 1002.6,483.5 1011.1,472.9 1007,463.9 999.7,463 996.3,477.3ZM1543.7,489.5 1547.2,481.9 1548.5,481.6 1556.3,483.4 1554.5,495.4 1547.1,496.5ZM921.8,298.3 925.4,298.2 924,294 931,287 924,284 919.8,287.2ZM1618.5,793.3 1621.6,785.6 1620.9,783.2 1612.9,782.2 1608.3,790.2 1610.9,794ZM1641.9,449.4 1642.4,450.5 1645.5,455.8 1648.5,458.1 1653.1,458.1 1653.4,458.2 1656.4,457.2 1656.7,456.4 1652.8,450.3 1641.9,448.3ZM1642.3,458.4 1642.4,458.1 1642.2,457.4ZM1749.6,575 1747.8,580.9 1735.6,581 1735.6,580.6 1742.5,571.4ZM1534,410.8 1538.5,408.4 1534.2,398.5 1525.1,396.2 1524,397.2 1524.3,406.5ZM1424.7,822.2 1430.9,830.5 1439,828.7 1445.4,821.1 1438.9,811.3 1437.9,811.3 1425.4,818.3ZM710.1,661.7 699.2,662.3 699.2,662.6 702,664 706,674 705.4,679 707.7,679.3 712.7,670.9ZM841.8,408.9 827.6,408.8 825.2,406.2 823.9,393.5 842.2,392.6 843.2,393.7ZM1616.1,482.7 1627.3,483.9 1627.9,485.2 1626.2,494.2 1619.7,495.3 1613.7,489.8ZM1370.9,720 1378.6,724.3 1378.6,730.7 1371.7,734.9 1362.8,726.3ZM915.7,623.9 901.8,617.7 905.6,610.3 917.1,607.1 919.7,610 920.8,616.7ZM997.7,365.5 991.4,352.5 992.1,349.2 997.6,345.6 1008.4,349.5 1010.8,359.7ZM975.3,805.7 970.1,814.2 971.8,824.6 984.2,824.5 986.7,817.6 981.2,807.1ZM1556.9,890.1 1559.7,886.5 1559.6,885 1559.5,884.7 1545,877.3 1546.7,881.2 1550,887 1555.4,890.6ZM1457.5,472.2 1456.3,466.5 1456.5,465.6 1462.4,462.9 1471.6,466.2 1471.3,476.3 1468.2,477ZM1405.1,521.1 1403.5,512.1 1391.7,511.6 1391.2,525.2 1397.6,530.5ZM910.5,315.2 914.7,327.7 921.8,331.5 924.2,331.1 929.3,326.4 930.8,318.5 917,311.5ZM1099.8,634.2 1087.8,635.2 1082.2,631.7 1080.6,627 1086.2,619 1096.2,617.5 1102.1,626.5ZM669.1,580.1 662.7,579.2 662.2,584.4 659,588 662,596 663.8,597.8 667.4,596.2ZM769.5,312.1 768.1,314.5 771.9,329.2 781.6,333.7 785.2,332.6 788.1,322 773.3,310.9ZM1085.3,374.9 1078.9,385.5 1086.2,393.3 1099.1,388.5 1099.8,387.4 1087.3,374.1ZM1636.7,672.9 1641.5,671.5 1641.6,660.4 1629.3,662.1 1629.4,668.3ZM1279.3,336.6 1279.8,348.4 1290.8,352 1292.3,351.6 1296.5,338.3 1296.3,337.7 1284.8,333.9ZM866.3,437.5 863.1,451.4 861.3,452.6 849.9,449.9 848.8,443.4 857.1,431.3ZM829.3,354.8 815.7,363.6 817.2,371.1 826.3,377.8 827.9,377.2 833.9,368.9ZM1664.2,717.2 1662.8,708.8 1657.9,707.2 1650.1,709.5 1646.9,715.5 1650.3,720.8ZM1831.1,543.2 1829.4,539.1 1831.6,535.1 1843.1,534.6 1845.7,537.3 1840.4,547.5ZM1054.7,679.1 1045.9,667 1051.1,654.5 1053.2,654.6 1055.3,655.6 1064.8,669.9 1064.2,672.7ZM812.5,669.6 814.5,658.4 817.5,657.3 831.5,664.6 831.5,664.7 825.8,678.2 825.1,678.6ZM823.4,330.6 812,341.2 812.6,344.1 828.6,351.3 831.6,343 826,331.5ZM1134.2,528.4 1126.5,531.7 1124.5,535.4 1129.5,541.8 1142.1,544.5 1146.4,541.8 1146.6,531.4ZM1589.2,669.3 1593.4,671.1 1595,673.3 1588.9,683.7 1585.6,683.9 1580.3,675.1ZM1488.9,436.1 1474.9,426.5 1482.9,418.7 1485,418.4 1494.5,430.4ZM974.5,395.4 970.2,405 970,405.1 952.6,399.1 951.5,388.7 966.5,385.7ZM808.8,454.4 808.7,454.1 795.5,447.5 787.8,454 791.1,462.7 803.1,468.3ZM949.7,353 958.4,339.4 964.8,340.4 972.3,348.9 971.2,356.7 969,358.2 953.4,356.1ZM1416.6,469.8 1403.4,472.2 1400.5,479.1 1413.9,484.1 1417,482.6ZM1584.8,426 1595.1,423.3 1595.4,417.1 1592.1,412.3 1587.7,411.9 1582,418.6 1581.7,422.7ZM1014.8,452.1 1014.1,458.1 1007,463.9 999.7,463 994.3,457.7 995.7,451.7 1007.9,446.1ZM1456.6,362.4 1470.2,362.2 1471.5,366.2 1466.2,374.1 1458.1,375.4 1453.3,367.6 1453.4,366.9ZM1719.6,582.5 1721,578.6 1735.2,581.5 1734.8,589.2 1730.1,592.3 1722.3,589.6ZM915.2,433.6 923.5,428.8 919.7,418.1 915,416 905.1,418.1 901.8,428 902.6,430.2ZM976.3,613.4 976.6,614.4 986.8,627.1 999.3,621.4 998.6,612.9 986.4,608.3ZM1431.5,522.2 1429.6,522.2 1419.3,535 1426.3,539.2 1434.5,535.3 1437.2,530.4ZM1354.3,806.2 1355.1,795.3 1356.3,794.3 1367,796.9 1370.4,801.5 1364.6,809 1359.6,810ZM1750.7,673 1749.1,674 1746.7,681.4 1748.7,684.6 1755.8,685.9 1761.1,679.1 1759.1,675.8ZM1408.5,621.7 1413.8,624.2 1419.7,622.7 1421.4,615.4 1416.5,610.5 1407.9,611.9 1406.2,616.3ZM1642.1,527.4 1644.4,535 1645.2,535.4 1655.7,532.7 1655.9,525.5 1650.1,523.6 1645.5,523.5 1644.5,523.9ZM815.4,302.4 816.7,319.1 816.7,319.3 806.6,321.7 796.8,315.7 796.4,307.5 802.6,301.9ZM1829.3,439.9 1828.4,440 1824.4,444.1 1823.7,454.8 1826.1,456.6 1831,457.1 1837.3,450.9 1837.4,446.2 1835.7,444.9 1832,444 1829.3,440ZM1375.6,618.8 1382.5,615.9 1384.8,607.6 1375.8,601.1 1372,601.3 1367.4,609.9 1373.8,618.3ZM1634,575.3 1627.2,583.5 1616.7,577.3 1616.6,577 1617.5,574.5 1624.7,570.8 1634,575.3ZM1065.2,606.1 1064.5,595.8 1075.2,586.9 1080,591 1080.3,604.1 1078.9,606.1 1068.3,607.9ZM1008.6,402.3 1007,404.4 995.8,405.8 993.4,404.3 991.4,399.3 996.7,390.3 1007.7,388.8ZM932.5,512.1 932.6,512.6 939.3,519.7 943.8,521.2 956.5,509.7 949.3,498.8 945.1,497.7 936.3,502.4ZM792,278.7 790,280 782,277 781.7,275.8 781.2,275.7 777.7,278.1 774.8,286.3 782.1,295.6 800,285.7 801.9,281.4ZM1064.6,380.7 1076.3,386.1 1069.3,401 1058,389.4 1058,387.8ZM865.4,365.8 865.1,355.7 878.5,353.6 880.4,365.8ZM1787.1,605.3 1790.8,608.3 1799.7,605.6 1800.1,605.1 1798.9,595.2 1791.5,594.2 1786.5,603.6ZM1650.1,721.9 1641.4,730.6 1633.5,722.6 1637.7,714.1 1646.9,715.5 1650.3,720.8ZM802,531.6 790.1,518.5 789.8,518.6 781.2,535.1 785.7,539.7 789,540.2ZM1181.1,484.1 1188.4,484.6 1193.6,468.9 1191.6,464.3 1190.7,464.1 1178.2,470.1 1177,481.1ZM1176.5,500.9 1177.2,501.6 1194.5,499.7 1195.2,498.5 1190.4,486 1188.4,484.6 1181.1,484.1ZM1562.6,435.5 1551.7,431.7 1549.3,433 1547,442.5 1556.1,450.1 1563.7,440.2ZM1571.6,868.9 1562.4,861.4 1555.1,863.9 1553.9,867.7 1559.8,873.9 1571.4,870.1ZM888.3,833.8 881.6,818.5 874.5,817.7 874.4,817.8 870.2,832 874,837 882,836 884.6,837.3ZM854.4,337.1 848.8,347 849.7,352.4 863,352.9 866,342.3 861.5,337.3ZM715.6,389.2 704.6,396.4 696,389.7 696,380.7 709.5,378.2ZM955.5,547.3 956.6,543.6 964.7,537.9 973.6,540.6 975.2,543 971.2,554 970.6,554.4ZM748.2,444.3 749.4,442.6 749.2,436.8 745.6,431.8 734,430.2 727.7,437.8 737.1,446.7ZM711.6,684.7 710.9,688.7 712,690 718,694 719.8,701.3 726.2,701.8 728.7,690.7 722.8,684.2ZM1441.4,435 1447.2,440.9 1443.9,449 1435.1,448.2 1432.7,443.2 1433.5,440.1ZM1318.5,473.5 1303.5,474.2 1309.4,487.1 1316.3,488.3 1320.6,481.9ZM1359.1,852.4 1359.5,859.2 1348.4,863.9 1341.6,855.5 1348.8,848.1ZM1619.1,446 1609.7,448.9 1608.1,451.7 1608.6,457.1 1618.2,459.1 1621.9,457.1ZM1339.8,838 1347.5,841.8 1355.5,835.5 1350.8,827.9 1342.3,826.7 1338.5,836ZM1007.8,626.4 1021,617.6 1021,617.5 1012.9,607.7 1004.7,606.5 998.6,612.9 999.3,621.4 1004.5,626ZM1789.5,630.1 1789.8,630.2 1794,626 1799,620.6 1799.4,620 1790.8,616.5 1784.3,623.4ZM1029.4,644.7 1016.3,641.8 1015.9,651.6 1025.9,662.3 1026,662.3 1031.3,655ZM1399.2,743.2 1393.9,751.1 1388.3,750.8 1384.7,746.9 1387.8,735.3 1394.3,732.2ZM1414,877.4 1420.8,870.1 1426,870.4 1431.1,877.1 1430.4,883.5 1420.3,886.6ZM1140.1,622.5 1146.2,610 1145,608.3 1134.2,606.7 1128.2,619.9 1128.8,620.7ZM1464,397.9 1474.4,392.8 1473.7,386.1 1473.5,385.9 1456,383.8 1453.6,386.4ZM1372,491.6 1366.3,502.7 1367.9,506.9 1385.2,505 1380.1,495ZM1124.6,357.2 1127.3,364.2 1139.8,362.8 1141.7,351.9 1132.2,345.3 1129.3,346.7ZM1097.3,598.7 1109.6,601.3 1116.7,592.6 1116.7,590.9 1116.1,590.4 1102.7,588.6 1096.8,593.3ZM1620.9,783.2 1625.9,776.9 1632.8,780.4 1631.6,792.6 1621.6,785.6ZM1752,470.4 1747.5,474.8 1745.2,475.7 1745.6,482.1 1748.5,483.5 1758.5,478.9 1757.5,474.9ZM735.3,589.8 738.5,583.6 745.9,580.6 749.2,581.6 756.1,592.7 749.3,599.8 738.2,596.6ZM1397.1,854.9 1403.5,863.3 1403.9,863.3 1413.3,858.5 1407,846.2 1402.8,845.9ZM1251.3,727.2 1248.6,733.8 1259.1,738.4 1268.9,732 1268.1,729.9 1264.6,727.1ZM1903.7,428.7 1902.8,426.7 1907,419.4 1908.6,419 1914.6,424.3 1910,431.1ZM1545.8,506.9 1544.4,501.4 1547.1,496.5 1554.5,495.4 1557.2,496.9 1559.9,503.6 1555.7,508ZM1506.1,738.1 1516.3,738.5 1514.9,747.7 1507.8,752.5 1505.3,750.5 1504.1,739.8ZM1744.5,510.3 1740.3,503.8 1743.1,497.3 1744.9,497 1752.8,502 1753.1,503.7 1749.2,510.5ZM1125.7,375.2 1125.3,367.4 1127.3,364.2 1139.8,362.8 1143.5,367 1144.5,373 1140.4,378.2ZM1124.5,535.4 1129.5,541.8 1128.6,552.5 1117.3,556.1 1115.1,554.2 1117.8,537.7ZM1142.9,395.6 1144.7,396.6 1146.7,406 1143.4,414 1133.2,415.9 1127,405.5 1128.3,401.5ZM1416.2,722.3 1414.7,724.6 1401.9,729.4 1397.1,728.2 1396.5,725.3 1398.7,719.3 1407,714.9ZM1652,561.1 1645.6,553.2 1634.7,559.7 1637.9,565.3 1651,562.8ZM948.3,353.1 939.5,365.1 940.3,372.3 948.1,376.3 955.2,370.7 953.4,356.1 949.7,353ZM1051.2,616.6 1039.9,623 1030.3,614.5 1032.2,608.8 1047,602.6 1053.3,609ZM1641.7,910 1642.5,909.7 1641.6,905.3 1640.2,899.3 1640.1,896.4 1637.2,896.7 1639.2,907.7ZM889.4,413.3 885.9,423.4 901.8,428 905.1,418.1 901.7,414ZM1270.1,309.5 1268.7,321.2 1272.8,324.9 1282.7,319.8 1277.6,309.4 1271.9,308.2ZM1494,457.8 1497.1,449.6 1502.7,448.1 1508.1,460.1 1497.6,464ZM687,408.3 693.2,411.9 690.3,425.9 681.2,430.1 672,423.7 671.9,423.3 674.9,412.7ZM1755,717.2 1763.3,711.8 1765.6,712.8 1767.9,716.5 1760.2,725.1 1754.8,723.5ZM1395.5,685.4 1396.1,690 1390,698 1385,698.8 1379.8,687.5 1385.6,681.6ZM1177.9,805.8 1174.9,790.7 1174.5,790.3 1163.7,789.5 1158.4,797.7 1165.3,806.3ZM1743.5,713.4 1744.8,723.1 1751.5,725.6 1754.8,723.5 1755,717.2 1750,710.9 1745.4,710ZM1274.3,603.1 1277,604.9 1278.3,620.2 1264.5,617.5 1264.1,614ZM1862.8,468.1 1871,473.5 1873.4,471.7 1875.9,462.6 1874.1,459.3 1867.3,457.5ZM867.1,607.6 872.2,615.7 871,619.5 864,624.4 855,621.7 852.9,613.6 854.9,610.2ZM1578.5,744.8 1572.9,756.8 1571,757.6 1570.6,757.4 1562.9,746.8 1563.8,743.3 1570.5,739.9 1577.2,742.6ZM1138.3,560.3 1148.2,574.1 1152.8,574 1156.7,571.2 1157.9,563.6 1152.7,557.2ZM1270.1,309.5 1259.7,310.5 1257.7,313.7 1259.9,323 1268.7,321.2ZM1768.6,665.2 1765.4,663.3 1764.8,663.5 1759.1,675.8 1761.1,679.1 1768.2,680.9 1768.3,680.7 1769.6,675.6ZM1778.2,611.3 1781,623.2 1781.2,623.3 1784.3,623.4 1790.8,616.5 1790.8,608.3 1787.1,605.3ZM1820.5,477.7 1821.2,471.2 1812.1,467.1 1808.3,474.4 1812.1,481.1ZM1326,816.7 1312.8,819.4 1306.1,813.7 1312.9,805.6 1322,808.4 1326,816.2ZM766,423.7 766.9,409.6 777.4,407.3 781.4,418.6ZM1438.5,772.3 1442.1,775.9 1442.8,783.3 1430.9,785 1428.4,781.8 1431.1,774.1ZM1362.7,438 1356.5,446.7 1364.2,454.9 1366.6,454.8 1370.3,441.6 1367.4,437.2ZM1525.2,740 1529.4,730.3 1540.2,737.3 1537.4,743.3 1534,745 1528.2,744.4ZM1177,777 1171.5,769.2 1171.4,767.7 1171.8,766.7 1186.2,759.7 1193.4,765.3 1193.9,771.1 1191.2,775.5ZM1754.1,613.9 1742.9,614.5 1740.9,612.8 1740.9,606.3 1741.7,605.3 1754.4,601.3 1755.8,601.7 1757.1,603.4ZM1579.9,786.2 1569.7,788.7 1566,785.5 1565.9,778.8 1572.8,776.9 1579.7,783.8ZM1076.3,386.1 1078.9,385.5 1086.2,393.3 1084.8,402.6 1079.6,407.8 1069.5,401.6 1069.3,401ZM966,372.3 968.8,376.3 984.8,373.5 980.2,361.1 971.2,356.7 969,358.2ZM847.5,629.3 853.3,640.7 858,641.2 866.1,632.9 864,624.4 855,621.7ZM1762.1,487.1 1756.7,491.9 1757.5,497.3 1767.4,500.3 1768,500.1 1768,491.2ZM1523.1,664.3 1526.5,672.6 1533.8,671 1538.5,664 1536.3,659.2 1526.1,657.4ZM1605,725 1614.7,721 1621.1,729.8 1616.4,733.4 1610.7,732.7ZM1461.4,825.8 1449.3,820.6 1457.1,812.4 1465,815.6ZM1413.5,558.9 1417.8,551.7 1411.9,543 1401.1,549.2 1409.3,560ZM1634.1,695 1634.9,707.1 1634.5,708.1 1626.3,708.2 1623.3,706.6 1622.1,693.7 1626.4,692.1ZM1244.6,319.4 1249.2,324.9 1247.3,333 1236.6,335.4 1235.9,334.8 1235.6,333.3 1240.2,320.5ZM1300,329.1 1307.7,328 1311.1,323.4 1308.8,313.6 1305.9,312.3 1295.1,318.9ZM1568.4,568.2 1570.7,554.2 1577.4,553.2 1581.2,560 1574.8,568.8 1568.8,568.6ZM889.4,413.3 885.9,423.4 884,424.8 875.9,423.8 871.4,419.7 869.8,413.1 874.5,406.2 885.2,405.5 886.2,406.1ZM947.6,318 946,331.8 941.6,333.8 929.3,326.4 930.8,318.5 936.4,314.2ZM1766.8,590.9 1762.2,588.9 1755.8,601.7 1757.1,603.4 1761.2,604.3 1769,600.8ZM1487.1,441.1 1488.9,436.1 1494.5,430.4 1495.3,430.2 1508,442.9 1502.7,448.1 1497.1,449.6ZM1618.3,839.2 1619.3,841.8 1617.3,848.6 1608.8,850.5 1606,844.4 1610.4,837.4ZM1623.2,674.3 1616.7,670.9 1615.9,668.6 1620.9,659.5 1627.9,660.4 1629.3,662.1 1629.4,668.3ZM1544.7,802.8 1552.5,796.9 1556.7,798.4 1555.9,810.6 1547.5,808.8ZM1509.7,361.1 1513.7,353.7 1523.8,353.5 1526.3,356.3 1523.6,364 1521.2,365.4ZM749.2,581.6 761.8,574.8 763.2,570.1 754.2,558.7 751.3,557.7 745.2,562.3 745.9,580.6ZM1619.1,446 1621.9,457.1 1626.9,458.8 1629.6,457.6 1632.8,447.9 1624.1,442.7 1620.2,444.1ZM1073.3,643.9 1082.2,631.7 1080.6,627 1068.8,624.3 1062,628.6 1060.9,631.5 1064.3,639.2ZM917,311.5 919.1,300.3 907.5,296.3 904,300 900.5,304.7 900.3,304.9 900.3,310.4 905.2,314.6 910.5,315.2ZM1553.9,867.7 1555.1,863.9 1550,856.9 1545,856.2 1538.6,866.4 1540.2,874.1 1543.2,874.8ZM1001.4,666.5 989.1,666.4 986.4,658.6 993.1,653 1002.3,654.5 1004.3,656.8 1004.8,660.8ZM681.1,592.1 694.6,596.1 695.8,593.1 690,574.6 677.3,577.3ZM985.2,544.4 991.8,536.1 988.1,531 978.2,530 973.6,540.6 975.2,543ZM1514.9,747.7 1507.8,752.5 1508.9,757 1515.3,760.5 1523.7,754.9 1523.6,752.2ZM1503.3,710.5 1501.2,705.9 1503,699.6 1511.4,699.8 1514.2,708.1 1510.1,711.3ZM1709.7,676.1 1706.9,667.1 1701.5,667.8 1696,674.3 1697.1,678.1 1706.4,680.2ZM1331.4,735.4 1320.3,734.4 1319.5,746.8 1327.1,749.2 1333.5,746.2ZM1002.6,322.3 1004,329.4 998.1,336.8 981.8,329.2 983.9,323.8 991.6,319.7ZM1004.5,643.4 998.3,638.7 1004.5,626 1007.8,626.4 1015.7,639.4 1015.6,640.8ZM988.3,553.6 1001.3,551.2 998.5,537.7 997.2,536.6 991.8,536.1 985.2,544.4ZM912.2,815.9 903.5,824.6 908.9,835.1 922.8,828.8 922.2,822.5 918.8,818.1ZM1509.2,675 1512.3,672.7 1524.1,676.3 1524.4,680.4 1512.5,686.6 1508.4,684.6 1507.4,683ZM1593.1,742.2 1584,746.6 1578.5,744.8 1577.2,742.6 1583.4,733.2 1587.6,731.5 1589.4,732ZM1094.4,789.7 1107.9,784.2 1113.7,789.5 1113.7,797.8 1112.6,798.3 1094.1,793.8 1093.5,792.8ZM1651.7,572.6 1651,562.8 1637.9,565.3 1637.4,572.1 1645.9,574.9ZM1001.4,666.5 989.1,666.4 984.5,677.4 986,681.5 989.5,682.9 1003.4,680.3 1004.8,678.2ZM1250.8,578.8 1255.7,591.3 1254.9,593.4 1250.7,595 1238.4,586.1 1238.4,585.8ZM1819,491.8 1825,499.3 1820.1,505.4 1811.3,501.7 1816.7,492.2ZM947.9,528.2 963.9,526.3 964.7,537.9 956.6,543.6 947.8,530.4ZM1870.8,475.4 1866.6,481.2 1873.5,491.1 1881.9,486.9 1881.6,485.6ZM1766.4,538.5 1761.2,541.4 1756.4,539.1 1753.9,534 1763,526.1 1765.5,526 1768.2,533.4ZM1052.1,327.4 1052.3,318.2 1050.7,317.6 1032.8,319.9 1031.2,322.7 1039.6,331.7ZM1608.1,451.7 1596.5,449.6 1596.4,457.7 1604.1,460.4 1607,459.3 1608.6,457.1ZM1883.8,503.9 1883.4,504.1 1884.4,508.7 1887.2,505ZM1508.9,757 1500.8,765.7 1507.5,772.3 1517.4,769.1 1515.3,760.5ZM1525.8,390.8 1517,381.7 1519.4,377.1 1529.8,376.6 1531.5,385.8ZM916.5,578.6 918.6,579.9 922.9,593.3 916.9,598.3 906.8,593.5 905.8,585.6ZM1354.1,718.6 1358.7,725.9 1355.1,733.1 1348.1,737.3 1340.4,730.1 1345.1,716ZM1432.1,471.3 1432.4,480.1 1418.1,483.2 1417,482.6 1416.6,469.8 1416.9,469.2 1419.8,467.8 1431,469.7ZM706.2,532.1 709.5,545.8 717.4,549.9 723.5,538.3 709,529.7 706.6,530.6ZM1576.7,879.8 1573.8,877.6 1559.6,885 1559.7,886.5 1562.1,888 1564,887 1572,881 1576.5,880.4ZM1787.1,558 1784.6,550.9 1773.1,559.4 1776.8,566.2 1777.6,566.7 1782.1,565.7ZM1127.5,584.6 1134.5,594.2 1145,591.9 1141.7,579.4 1132.3,578.6 1128.6,581.2ZM881.4,349.6 878.5,353.6 880.4,365.8 884.4,369.2 889.9,368.5 891.6,349.9ZM1711,641 1708.4,648.1 1719.1,651.7 1720.7,650.2 1721.8,644 1716.4,638.7ZM1504,591.4 1506.4,590.7 1508.8,577.7 1507.6,575.4 1498.5,572.9 1495.1,577.6 1496.9,588.6ZM1723,528.2 1727.7,530.9 1729.3,542.2 1728.1,544.4 1727.8,544.4 1718.1,538.2 1718.6,530.4ZM1764,466.6 1757.5,474.9 1758.5,478.9 1760.9,480.6 1769.9,477.4 1771.9,472.6 1771.2,469.6ZM1032.8,701.7 1028.4,691.8 1024,689.9 1019.5,692.1 1012.9,706.6 1015,708.6 1026.5,709.4ZM1603.5,818 1593.8,818.3 1590.6,812.8 1596.3,802.3 1605.9,805.1ZM1164,443.6 1164.1,445.1 1175.4,454.5 1182.4,452.8 1185.9,445.1 1171.4,438ZM845.2,650.4 853.3,640.7 858,641.2 865.2,650.4 857.4,659.5 850.7,658.8ZM1781.2,474.7 1786.6,465.1 1791.2,466.9 1790.7,479.2 1782.4,477.9ZM1491.9,600.5 1490.1,592.4 1496.9,588.6 1504,591.4 1499.9,603.1 1499.7,603.2ZM762.2,334.5 761.6,340.2 773.5,349.2 781.6,333.7 771.9,329.2ZM708.2,425 702.4,432.4 690.3,425.9 693.2,411.9 696.9,410.9 708.2,420.9ZM1192.9,525.6 1181.1,522.4 1178.1,529.3 1182.7,538 1185.1,539.4 1190.1,537.7ZM854.5,426.7 856.6,428.7 857.1,431.3 848.8,443.4 834.6,432.9 835,430.4 839.3,426.7ZM1172.8,634.1 1166.7,641.7 1162.6,642.1 1158.5,639.6 1155.6,624.7 1157.2,622.6 1165.9,623.2ZM1784.7,454.6 1790.4,451.9 1795.1,443 1794.7,441.3 1792,440.8 1788,442 1780.3,449.7ZM861.3,797.5 852.2,789.5 844.7,793 844.1,806.1 853.6,810.4ZM1088.1,513.2 1084.5,523.3 1093.3,533.5 1102.9,523.7 1097,513.3 1091.2,511.1ZM1351.1,342.6 1341.3,337 1343.1,325.8 1354.1,322.8 1358.8,325.2 1360,331.4ZM1659.1,665.8 1659.6,657.5 1653.5,654.7 1647.3,660 1652.2,667ZM1143.4,414 1147.6,422.2 1144.3,428.7 1137.5,430.2 1128.3,423.2 1133.2,415.9ZM1354.6,782.6 1367.6,780 1370.2,785.7 1367,796.9 1356.3,794.3ZM961.2,309.4 969.2,314.1 975.8,311.7 977.4,307.8 975.3,300.5 972,306 966.4,307.3 961.8,307.1ZM1791.7,571.4 1787.4,578.5 1778.8,574.4 1777.6,566.7 1782.1,565.7ZM1516.6,694.8 1525.6,690.5 1526.6,683.1 1524.4,680.4 1512.5,686.6 1516.5,694.8ZM1732.3,478.5 1732.5,479.4 1740.5,483.6 1745.6,482.1 1745.2,475.7 1739.9,477.9 1733.8,477.1 1733,477.5ZM1501.6,820.8 1503.1,816.7 1498.2,810.7 1495.3,810.5 1491,813.7 1490.6,824 1490.8,824.4ZM1611.6,870.1 1618,863.8 1625.6,867.9 1622.7,878.4 1612.9,876.7ZM1464,397.9 1474.4,392.8 1475.5,393.8 1478.3,402.7 1473.8,410.2 1466.8,412.2 1466.3,412.1 1463.4,399.1ZM1581.7,422.7 1574.6,425.3 1570.1,419.4 1573.4,413.6 1582,418.6ZM1138.3,560.3 1152.7,557.2 1154.1,547.2 1146.4,541.8 1142.1,544.5 1137.6,558.8 1138.1,560.2ZM949.4,403.9 952.6,399.1 970,405.1 960.4,417 950.8,414.8ZM1471.2,559.2 1473.8,573.5 1479.4,573.9 1484.2,566.3 1482.8,562.4ZM1101.3,406.7 1098.8,403.9 1099.1,388.5 1099.8,387.4 1106.4,385.6 1112.7,397.1 1111.3,401.5ZM1543.2,874.8 1544,875 1545,877.3 1559.5,884.7 1559.8,873.9 1553.9,867.7ZM1465.5,605.7 1466.6,601.1 1461.7,592.6 1457.5,591.5 1454.3,593.8 1453.9,605.7 1454.7,606.6ZM844.2,479.5 842.9,480.2 832.5,472.2 837.3,457.2 842.3,456.7 847.5,465.4ZM674.7,392.1 677.2,391.7 682.8,376 668.1,374.2 666.9,383.4ZM1427.4,428.8 1433.5,440.1 1441.4,435 1442.5,430.5 1440.1,425.2 1436.6,423.5 1428.2,426.4 1427.5,427.3ZM1911.4,466.4 1907.3,475.1 1907.9,476.5 1911.9,479.8 1917.1,479.1 1919.4,478.2 1920.5,477.2 1920.7,476.4 1920.4,474.4 1917,467.1ZM1307.3,575.5 1306.7,566.6 1316.5,558.4 1324.1,561.8 1325.3,565.3 1316.8,577.8 1308.5,576.5ZM1602.6,741.6 1606.6,741.4 1610.7,732.7 1605,725 1601,724.2 1600.6,724.8ZM1158,439.4 1150.3,439.3 1144.3,428.7 1147.6,422.2 1159.4,423ZM1304.2,611.9 1299.3,602.5 1289.6,602.9 1287,605.1 1288.8,618.5 1299.2,619.2ZM1548.5,518.8 1542,524.2 1542.6,526.5 1548.6,531.7 1554.5,531.4 1559.4,521.1 1558.6,520.5ZM1774.2,726.7 1765.6,731.3 1765.4,732.2 1769.7,741.2 1774,738 1774.8,732.7 1775,727.4ZM1587.9,446.4 1595.4,448.1 1601.8,439.4 1597.1,433.3 1588,436.4 1586.9,444.9ZM1332.6,470.5 1344.3,469.5 1345.6,463.3 1336.1,456.9 1331.4,465ZM1297.1,692.5 1293.2,687.5 1281.1,690.9 1280.4,694.2 1289.6,704.8 1297.2,695ZM1414.5,585.1 1412.7,594.6 1407.9,596.1 1402.9,594.2 1399,587 1400.5,582.5 1406.6,579.4ZM1209.4,721.8 1216.2,729.1 1215.4,739.9 1207.3,742.9 1197.9,725.7ZM1009.7,313.3 1002.6,322.3 1004,329.4 1013.9,333.9 1022.9,329.2 1024.3,326 1012.5,313.1ZM1179,600.1 1178.2,587.9 1184.9,584.9 1192.8,588.8 1192.6,594ZM1523.3,585.1 1515.9,595 1506.4,590.7 1508.8,577.7 1523.5,582.6ZM837,321.8 845.9,319.6 851.2,325.8 849.8,331.3 842.6,332.9 835.6,326.3ZM1598.4,488.8 1600.8,487.1 1609,491.5 1607.5,499.8 1596.8,501 1595.5,499.3ZM933.6,403.1 936.2,391.3 950.9,388.2 951.5,388.7 952.6,399.1 949.4,403.9ZM1461.1,761 1454.1,765.9 1448.5,762.1 1448.5,748.6 1458.2,751.1ZM974.5,330 981.5,329.5 982.1,343.9 972.3,348.9 964.8,340.4ZM770.7,719.9 778.5,718.6 780.9,729.2 773,740.5 769,740.3 762.8,727.8ZM1732.5,479.4 1728.1,486.2 1731.1,493.5 1738.4,493.4 1740.5,483.6ZM1497,467 1503.6,477.5 1507.4,475.4 1512.6,466.5 1509,460.3 1508.1,460.1 1497.6,464ZM1693,495.9 1694,496.9 1703.8,499 1706.9,494.4 1704.9,487.5 1695.7,490.8 1693.1,491.9ZM1544.8,636.7 1548.7,631.1 1547.4,625.8 1540.4,625.1 1534.1,629.5 1536.5,636.6ZM1825.9,418.4 1824.1,427.7 1829.1,427.9 1829,422 1826.2,418.3ZM1465.6,437.8 1458.9,442.8 1454.4,438.9 1453.9,431.1 1456.6,427.1 1459,426.4 1462.6,427.8ZM1861,502.3 1852.4,497.9 1845.8,505.7 1854.9,513.5 1861.6,503.4ZM1367.4,313.7 1354.5,304.1 1354.5,302.7 1361.2,296.4 1371.7,300.8 1373.8,305.2ZM1062,628.6 1051.2,616.6 1053.3,609 1065.2,606.1 1068.3,607.9 1068.8,624.3ZM1591.1,523.3 1586.5,523.3 1582.4,529.9 1588.5,537.3 1595.7,533.2 1595.6,527.9ZM1442,499.8 1428.4,506.1 1421.9,504.6 1421.4,502.8 1424.6,494.4 1435.6,491.3ZM1548.6,531.7 1542.6,526.5 1536,536.6 1536.1,538.1 1543.6,541ZM1501.3,617.7 1497,618.3 1495.1,615.2 1499.7,603.2 1499.9,603.1 1507.9,606.6 1508.7,610.2ZM890,814.4 881.6,818.5 888.3,833.8 891.2,833.8 900,824.2 891.3,814.5ZM1513.9,440.3 1514.1,438 1522.3,426.9 1531.7,433.9 1531.2,441.2ZM817.8,439.6 808.7,454.1 795.5,447.5 795.6,444.3 812.2,433.1ZM1347.4,629.2 1348.6,640.1 1336.5,640.5 1333.1,635.9 1340.2,626.4ZM842.2,392.6 842,384.4 827.9,377.2 826.3,377.8 821.8,391 823.9,393.5ZM1454.3,593.8 1453.9,605.7 1445.4,603.8 1444.7,593.1ZM1710.7,593.5 1706,595.8 1699.1,584.9 1700.8,581.1 1705.3,580.1 1710.8,585.1ZM1825.7,572.4 1828.6,569.1 1829,566.9 1826.9,563 1821.3,560.5 1815,562.9 1817.6,570.3ZM1403.5,512.1 1404.1,511.5 1404.7,502.9 1395.9,495.4 1386.9,506 1387.8,508.4 1391.7,511.6ZM1452.9,614 1444.7,616.9 1439.6,607.4 1445.4,603.8 1453.9,605.7 1454.7,606.6ZM1369.7,884.2 1378.2,872.3 1364.1,865.7 1359.7,876.1ZM1641.7,910 1641.7,911.8 1641.9,912.1 1643,912 1642.5,909.7ZM1530.9,418.2 1534,410.8 1524.3,406.5 1518.4,412 1525,419.8ZM1737.6,744.7 1745.2,745.2 1747.8,752 1744.1,756.4 1735,754.4 1734.9,754.3ZM1240.2,551.4 1245.6,541.7 1248,541.6 1255.5,551.9 1254.1,556.9 1242,556.2ZM1829.9,471.2 1835.3,466.8 1841.5,473.1 1834.1,480.3 1833.5,480.1ZM1710.3,572.4 1700.5,566.5 1706.7,558.6 1713.4,562.4 1714.1,570.8ZM1649.5,434.7 1651.3,432.6 1651.4,425.2 1643.1,420.3 1638.4,426.2 1639.9,431.7ZM1873.5,538.1 1870.8,538.8 1868.1,545.4 1872.3,551 1881.4,550.7 1884.2,546.8 1880,544 1878.7,541.3ZM1235.9,334.8 1221.9,339.6 1220.3,348.4 1234.2,349.9 1238.4,344 1236.6,335.4ZM1139.3,512.9 1149.4,500 1138.4,495 1129.1,504.7 1131.3,510.8 1135.9,513.3ZM1403.9,863.3 1412.3,877.4 1414,877.4 1420.8,870.1 1415.5,858.7 1413.3,858.5ZM1318.5,473.5 1303.5,474.2 1302.9,473.8 1302,470.8 1305.8,461.3 1318.2,458.8 1319.2,460.3 1319.1,472.7ZM1706.9,667.1 1708.7,663.8 1703.4,653.4 1692.2,658.7 1691.1,661.3 1701.5,667.8ZM866,342.3 876.1,340.4 881.4,349.6 878.5,353.6 865.1,355.7 863,352.9ZM1359.6,810 1364.6,809 1369.6,821 1366.1,824.8 1356,820.4 1355.3,818.4ZM880,442.4 870.4,436.4 866.3,437.5 863.1,451.4 879.1,451.9 879.8,451.1ZM1508.4,724.5 1508,724.6 1505.9,727.3 1506.1,738.1 1516.3,738.5 1516.4,738.5 1516.7,729.9ZM1870.7,447.6 1876.3,445.8 1877.4,441 1868.8,436.5 1864.3,440.7 1864.8,443.9ZM1523.7,868.1 1527.6,857.4 1527.3,856.5 1526.1,856 1511.5,858.4 1511.5,864.9 1517.7,870.3 1518.9,870.7 1519,870.7ZM1718.6,485.8 1728.1,486.2 1732.5,479.4 1732.3,478.5 1731.8,478.1 1726.2,480.9 1717.5,483.8ZM1507,831.9 1501.6,820.8 1490.8,824.4 1490.6,830.2 1491.1,831.2 1506.7,832.3ZM1014.1,458.1 1007,463.9 1011.1,472.9 1020.2,474.2 1024.1,471.9 1023.2,465.2ZM1165.1,689.2 1155.4,674.9 1167.9,671.2 1175.7,675.4 1174.8,685ZM1355.5,835.5 1356.7,835.6 1362.7,842.6 1362.3,848.8 1359.1,852.4 1348.8,848.1 1347.5,841.8ZM1523.2,725.8 1529.1,728.2 1529.4,730.3 1525.2,740 1516.4,738.5 1516.7,729.9ZM1479.3,460 1482,457.7 1494,457.8 1497.6,464 1497,467 1486.1,471.2 1479.2,460.7ZM1664.6,579.6 1673,580.5 1674.2,588.6 1666.5,594.1 1664.6,593.5 1664,580.3ZM743.1,332.7 730.4,335.5 727.4,332.9 728.6,321.6 732.4,317.5 741.5,317.9ZM1642.4,604.6 1641.6,610.1 1651.5,617.4 1654.3,604.2 1653.3,602.2ZM1432.1,471.3 1443.1,470.6 1442.3,461.5 1434.7,460.2 1431,469.7ZM1045.4,511.6 1037,498.2 1045.3,493.5 1058.2,499.4 1057.3,506.3ZM1519,870.7 1518.9,870.7 1519,870.7ZM1087.3,374.1 1099.8,387.4 1106.4,385.6 1109.2,381.9 1106.9,370.6 1097.5,367.6 1089.6,370.5ZM1007.8,626.4 1015.7,639.4 1024.1,631.1 1021,617.6ZM1476.3,820.5 1478.3,819.6 1482.5,811.5 1481.9,809 1472.1,803.5 1470.5,805 1468.2,814.5ZM1587.9,446.4 1595.4,448.1 1596.5,449.6 1596.4,457.7 1588.8,464.1 1583.3,458ZM1746.7,681.4 1739.9,681.7 1735.8,691 1745.1,693.6 1748.7,684.6ZM1697.7,710.8 1688.7,713.8 1685.5,704 1688.9,699.9 1694.2,700.7ZM1706.4,680.2 1706.3,683.3 1700.2,690.4 1691.5,685.2 1697.1,678.1ZM1356.9,423.4 1353.5,420.3 1340.4,424.3 1349.1,434.6 1354.9,432.9ZM1416.9,469.2 1408.8,458.7 1411.7,451.7 1417.1,449.5 1424,456.1 1419.8,467.8ZM1571.4,870.1 1573.8,877.6 1559.6,885 1559.5,884.7 1559.8,873.9ZM1072.6,688.6 1071.6,678.7 1083,674.5 1087.3,677.3 1081.7,691.1ZM711.3,569.5 720.1,572.8 717.6,589.8 706.5,587.1 704.9,574.4ZM1596.6,510.5 1586.4,511.5 1584.6,519.5 1586.5,523.3 1591.1,523.3 1596.5,516.9ZM1738,704.5 1731.8,697.4 1725.8,702.7 1725.8,709.1 1731,711ZM1614.6,547.9 1625,547.1 1626,546 1624.6,536.5 1623.3,535.8 1621.1,537.3 1613.9,542.5ZM825.4,800.5 829.4,799.3 833.2,789.8 824.5,783.9 815.4,786.9 814,789 816,791 821.1,797.9ZM1493.3,532.9 1501.1,526.1 1501.1,525.3 1493.5,520.4 1488.7,521.2 1487.3,529.4ZM954.2,312 961.2,309.4 969.2,314.1 966.2,323 960.4,324.5 951.4,316.6ZM710.7,315.1 713.1,312 708,313 707.3,313.2ZM1127.2,730.1 1124.9,714.5 1126.4,713.9 1141.6,719.3 1136.5,730.4ZM725,717.6 728.5,722.9 732,728 736.5,732.5 739.9,729.9 736.7,719.2 727.8,715ZM1637.9,514.2 1638.6,509.8 1635.3,511.7 1635.2,513.7ZM1635,468.6 1626.8,469.5 1625.7,471.1 1628.8,478.4 1633.5,477.4 1636.4,470.7ZM1765.6,712.8 1767.9,716.5 1773.3,718.8 1773.1,718 1770,712 1769.1,709ZM1112,610.4 1109.6,601.3 1097.3,598.7 1095.7,601.7 1098.1,613.5ZM1626.9,458.8 1626.8,469.5 1625.7,471.1 1620.2,471.3 1616.4,468 1618.2,459.1 1621.9,457.1ZM939.3,763.7 943.8,760.2 941.3,747.9 928.6,749.8 926.9,759.9ZM1657.9,746 1664.4,744.3 1670.5,749.2 1670.9,755.1 1670.6,755.6 1667.7,756.7 1658.4,753ZM1917,467.1 1920.4,474.4 1920,472.5 1921,469 1921,462.9ZM1582.7,573.5 1574.8,568.8 1581.2,560 1591,562.8 1587.1,572ZM750.1,352.7 760.9,360.7 760.8,369.4 747.9,374.8 741.5,364.5ZM1659,687.4 1662.3,683.5 1672.5,683.3 1674.8,691.6 1663.4,694.6 1660.5,692.9ZM1062.9,697.3 1063.9,694.2 1054.6,679.5 1045.7,685.1 1047.4,695 1061.2,699ZM806.3,686.5 804.8,698.9 817.5,705.1 822.9,689.8 822,687.2ZM1390.9,447.8 1380.4,454 1386.6,462.8 1395.6,454.6 1394.5,448.9ZM1308.3,893.2 1318.4,896.7 1321.4,892.8 1319.9,885.2 1311.6,883.7 1306.4,889.3ZM925.7,832 922.8,828.8 922.2,822.5 939.2,815.6 942.8,827.3ZM1594.8,578.1 1602.6,570.8 1607.5,577.1 1603.2,585 1602.4,585.3ZM1757.5,474.9 1764,466.6 1762.8,463.8 1756.1,460.6 1752,470.2 1752.1,470.3 1752,470.4ZM986.2,776.3 1004.7,785.7 1006.8,774.1 995.6,768.3ZM998.5,537.7 1014.6,537.4 1012.4,549.6 1003.1,552.4 1001.3,551.2ZM1634.7,879.2 1636,881.1 1635.9,879.7 1635.5,877.5ZM754.2,558.7 770.2,551.8 768.1,542.5 759.8,539.3 749.9,548.7 751.3,557.7ZM1672.7,526.5 1679.8,524.6 1681,518.1 1678.2,518.9 1671.5,520.5ZM1425.6,702.6 1418,698.7 1415.3,699.7 1413.4,706.8 1421.6,712.3 1423,711.8 1426.5,706.7ZM1579.8,806.2 1567.4,809.9 1566.4,811.8 1569.6,817.5 1577.6,818.3 1583.5,811.8ZM708.2,420.9 696.9,410.9 704.7,402 718.5,410.4ZM1525.5,579.8 1540.5,582.8 1542.1,580.9 1541.6,570.8 1526.3,572.4ZM1529.1,728.2 1535.1,722.5 1538,722.9 1543.7,735.1 1540.2,737.3 1529.4,730.3ZM1632.3,636.9 1634.9,644.5 1648.6,639 1648.5,636.9 1642.4,631.7ZM1715.4,771.1 1711.4,775.4 1715.1,780.3 1718.7,780.1 1719,778 1723.5,770.8ZM1356.6,547.1 1346.5,546.9 1341.6,552.5 1343.9,557.4 1358.1,556.5ZM1505.8,533.2 1498.4,541 1499.4,544.9 1503.2,547.8 1507.9,544.9 1508.7,534.5ZM1076.2,784.3 1081.3,777 1078.5,770.4 1064.8,770.7 1065,784.4ZM1569.6,707.3 1558,700.1 1557.8,699 1567.6,692.3 1575.2,696.6 1576.1,699.4ZM1523.7,868.1 1519,870.7 1519,870.7 1520,871 1526.6,872.2 1531.2,872.9ZM1091.1,589 1091.3,574.4 1087.7,572.4 1074.3,582.5 1075.2,586.9 1080,591ZM1756.4,539.1 1750.7,544.2 1753.1,551.4 1761,548.5 1761.2,541.4ZM1789.5,630.1 1789.2,630.8 1789.8,630.2ZM1017.7,487.1 1030.4,487.3 1034.3,496.3 1021,498.4 1015.1,489.3ZM1029.4,644.7 1016.3,641.8 1015.6,640.8 1015.7,639.4 1024.1,631.1 1031.6,633.6 1032.9,640.5ZM1545.5,665.8 1538.5,664 1533.8,671 1539.5,679.4 1544.9,679.1 1545.5,678.7ZM1230,894.7 1233.2,900 1244,902 1243.1,890.2 1238.6,887.2 1233.3,888.5ZM945.9,728.9 961.2,739.8 959.2,743.8 942.7,745.9 939.4,736.4ZM1778.3,534.7 1782.1,528.7 1793.4,533.5 1782.2,544.8 1781.3,544.3ZM1719.6,582.5 1710.8,585.1 1710.7,593.5 1715.4,595 1722.3,589.6ZM1718.6,677.5 1720,680 1727.9,682.4 1734.3,675.9 1734.3,672.2 1722.2,670.8ZM1165.3,806.3 1158.4,797.7 1152.4,799.7 1154.8,814.3 1157.7,816.3 1158.3,816.1Z"/>
<path fill="#e8e5da" d="M1835.3,466.8 1841.5,473.1 1845.8,473.6 1848.5,463.8 1845.6,461.1 1835.4,463.8ZM1009.4,841.7 1021.6,851.1 1033.2,844 1032,840.1 1022.2,833.9 1011.1,838.7ZM1358.3,465.7 1357,461.8 1350.8,459.9 1345.6,463.3 1344.3,469.5 1347.2,474.1 1353.5,474ZM1453.7,402.6 1451,410.8 1450.1,411.3 1443.5,409.2 1437.8,398.9 1441.2,393.9 1446.9,392.4ZM1738.6,559.8 1731.1,553.9 1731.4,548.6 1741.3,548.7 1743.2,552.5ZM1469.8,502.9 1469.1,512 1469.1,512 1463.5,513.4 1455.2,509 1452.6,499.3 1456.9,497.8 1468.7,501.2ZM1063.9,694.2 1072.6,688.6 1071.6,678.7 1064.2,672.7 1054.7,679.1 1054.6,679.5ZM996.5,300.3 998.7,299.9 1000.1,297.7 995.1,295.9 988,293 986.3,293.5ZM1469.2,611 1477,609.9 1480.4,601.7 1477.7,595 1466.6,601.1 1465.5,605.7ZM1359.8,532.1 1361.5,532.9 1367.7,528.1 1371.5,518.1 1367,510.8 1357.9,514.6 1355.3,524.6ZM1178.9,811.6 1182.2,814.8 1184.4,825.5 1179.1,832.5 1171.2,828.1 1170.9,819.6ZM711.5,504.6 706.2,495.3 711.8,487.3 724.1,491.1 723.3,499.8ZM1146.7,711.3 1145.8,717.3 1141.6,719.3 1126.4,713.9 1133.1,701.4 1141.7,702.5ZM1707.4,697.7 1713.8,690.2 1716.8,689.9 1719.8,692.5 1719.4,699.6 1715.2,702.5ZM1141.7,351.9 1152.4,346.9 1156.9,350.5 1158.2,360.4 1143.5,367 1139.8,362.8ZM1611.9,608.4 1601.9,610.9 1599.3,614.8 1603.7,622.7 1615.2,617.3ZM1502.3,509.1 1506.7,509.9 1509.3,506.3 1507.1,497.8 1497.6,494.7 1494.7,496.2 1494.7,500.1ZM1651.3,644.4 1648.6,639 1634.9,644.5 1634,647.9 1640.9,652.4 1651.1,645.4ZM1587.2,835.9 1596.5,835.6 1598.7,832.5 1592.8,821.6 1585.6,826.8ZM1759,745.9 1754.8,738.8 1749.8,736.9 1745.2,745.2 1747.8,752 1753.2,752.5 1758,748 1758.1,748ZM1514.2,396.4 1512.4,384.1 1517,381.7 1525.8,390.8 1525.1,396.2 1524,397.2 1515.2,397.1ZM1517.3,453.1 1509,460.3 1512.6,466.5 1518.1,466.8 1523.4,460.8 1519.9,454.2ZM1610.4,837.4 1606,844.4 1598.4,843 1596.5,835.6 1598.7,832.5 1606.7,830.7ZM905.9,339.6 910.7,343.6 914,343.3 921.8,331.5 914.7,327.7 906.3,332.1ZM1517.4,769.1 1520.2,771 1517.2,784.5 1514.8,785.3 1506.3,779.8 1507.5,772.3ZM1634.7,879.2 1625,881.6 1624.4,886.2 1625.9,888.9 1635.8,894.6 1637.7,889.5 1636,887 1636,881.1ZM1591.4,695.6 1594.8,688.1 1588.9,683.7 1585.6,683.9 1581.7,688.5 1581.7,688.7 1587.1,695.8ZM987,495.2 986.9,495.5 979,500.4 970.4,496.1 966.3,488.9 979.1,475 979.5,474.9 980.6,475.8ZM1210.2,701.7 1218.6,701.6 1219.5,700.7 1219.6,690.2 1212.3,683.3 1202.5,690.2 1202.2,692ZM1604.6,689.8 1611.7,696.7 1609.6,706.3 1598.2,701.4ZM1671.2,465.6 1671.4,465.7 1671.3,465.6ZM1590.5,771.8 1596.8,780 1596.8,780.1 1587.8,787.9 1580.6,787 1579.9,786.2 1579.7,783.8 1586.4,772.1ZM848.8,347 839.5,340.6 831.6,343 828.6,351.3 829.3,354.6 847.4,355.4 849.7,352.4ZM931,406.8 919.7,418.1 915,416 911.9,394.6 912.6,394.2 931.1,405.6ZM1824.4,444.1 1828.4,440 1821.7,431.5 1820,434 1812,438 1811.4,438 1812.1,441.3ZM1538.1,617.9 1530.2,616.1 1527.2,620.5 1528.6,627.4 1534.1,629.5 1540.4,625.1ZM674.7,392.1 666.9,383.4 665.7,383.8 666.3,385.2 667,392 666.7,399.8 667,401.2ZM819.5,627.7 820.2,639.6 825.4,644.4 832.7,643.7 837.9,629.3 836.2,627.1 823.2,624.9ZM781.6,479 784.7,478 791.1,462.7 787.8,454 780.7,453.9 772.8,470.2 774.7,475.6ZM821.8,391 807.8,390.9 804.9,380.9 817.2,371.1 826.3,377.8ZM1101.3,415.1 1089.8,419.6 1089.6,420.6 1096.7,438.5 1103.9,437.5 1107.8,433.7 1107.8,419.8ZM1479,344.5 1492.5,342.3 1492.6,337.1 1491.5,335.5 1483.5,331.8 1477.8,337.3ZM1236,409.4 1226.5,401.3 1219.2,401.4 1216.3,403.1 1217.8,413.8 1227.5,416.8ZM1023.5,516.4 1014,526.1 1003.5,523.1 1000.2,517.7 1012.9,508.2 1016.9,509.1ZM771.8,587.8 775.7,603.2 766.9,609.4 764.1,607.6 760.2,593.6ZM1415.3,699.7 1413.4,706.8 1408.1,708.8 1401.4,703.3 1404.7,696 1407.9,694.4ZM1550.3,461.9 1556.5,451.8 1556.1,450.1 1547,442.5 1535,446 1535.8,450.6ZM1776.3,634.6 1784.5,640.9 1788,632 1789.2,630.8 1789.5,630.1 1784.3,623.4 1781.2,623.3ZM1541.6,570.8 1543,568.6 1546.5,567.5 1554.4,572.9 1555.1,581.3 1554.4,582.3 1542.1,580.9ZM1180.1,895.8 1178,907.5 1169.8,909.5 1162.1,899.2 1167.1,893.5 1176.3,892.9ZM689.1,317.2 693.2,315.3 688.8,314.9 687.4,315.1ZM802,281.3 806.9,283.6 803.8,275.2ZM847.5,465.4 842.3,456.7 849.9,449.9 861.3,452.6 863.3,465.5 860.3,468.4ZM1619.9,526.5 1616.3,526.5 1607.2,535.3 1607.1,535.5 1613.4,540.6 1613.5,540.3 1618.1,535.7 1621.7,532.1ZM1355.3,487.1 1358.5,478.9 1353.5,474 1347.2,474.1 1343,484.2ZM1894.3,559.2 1897.5,556.4 1900,550 1894.5,546.3 1891.8,546.6 1890.1,547ZM995.2,371.5 988,375.3 984.8,373.5 980.2,361.1 991.4,352.5 997.7,365.5ZM799.9,727.9 798.3,717.2 814,714.2 816.3,719.1 812.1,729.4ZM1657.1,524.6 1653,523.6 1650.1,523.6 1655.9,525.5ZM880.2,294.2 882,297.1 882,292.2ZM884.4,369.2 889.9,368.5 897.2,371.8 895.7,387.2 885.9,389.6 877.7,385.6 876.9,382ZM1547.3,377 1543.5,378.4 1538.4,387.7 1540.6,391.9 1544.1,393 1552.4,387.9 1550.7,378.5ZM1873.5,538.1 1877.7,532.7 1874.1,523.3 1864.5,529.9 1865,532.7 1870.8,538.8ZM1596.6,510.5 1586.4,511.5 1583.1,508.1 1583,505.7 1590.6,498.7 1595.5,499.3 1596.8,501 1596.9,510.1ZM1369.4,888.3 1368.2,889.3 1370.3,889.5ZM1525.5,579.8 1523.5,582.6 1508.8,577.7 1507.6,575.4 1514.6,566.9 1526,571.7 1526.3,572.4ZM1567.6,540 1566.4,550.8 1570.7,554.2 1577.4,553.2 1578.1,552.4 1577.3,542.3 1574.4,539.8ZM1019.7,596.9 1019.2,595.5 1023.6,587.2 1036.9,587 1037.5,587.7 1029.2,601ZM828.4,550.5 822.7,550.4 811.1,559.6 810.7,562.2 821.6,572 825,571.3 834.6,557ZM1659.3,557.7 1659.7,555.4 1662.2,552.3 1672.5,549.6 1675.6,555.6 1669.3,561.1ZM1515.3,760.5 1517.4,769.1 1520.2,771 1528.3,770.2 1528.2,758.4 1523.7,754.9ZM914.9,379.5 916.2,388 912.6,394.2 911.9,394.6 905.7,395.3 895.7,387.2 897.2,371.8 903.6,369.3ZM1616.2,593.1 1614,588.4 1616.7,577.3 1627.2,583.5 1627.2,584.2 1618.3,593.7ZM1734.3,675.9 1739.9,681.7 1735.8,691 1732,692.3 1730.8,691.4 1727.9,682.4ZM1719.9,662.1 1730.4,660.5 1736.5,668.5 1736.5,668.9 1734.3,672.2 1722.2,670.8ZM1575.4,511.5 1583.1,508.1 1586.4,511.5 1584.6,519.5 1576.9,517.9ZM1741.7,605.3 1740.5,592.3 1747.5,591.1 1754.4,601.3ZM1158.4,797.7 1163.7,789.5 1158.3,782 1155.8,781 1143.3,788.4 1148.1,798.6 1152.4,799.7ZM1403.9,863.3 1412.3,877.4 1407.1,880.2 1396.3,875.8 1395.9,870.5 1403.5,863.3ZM1724.1,749 1734.9,754.3 1735,754.4 1732.3,760.7 1725.4,762.7 1721.1,758.8 1721.7,750.6ZM1045.4,511.6 1037,498.2 1036.8,498.2 1025,516.5 1030,520.1 1044.4,514.9ZM656.4,321.7 654.8,316.4 652.5,321.1 651.5,323.7ZM1110.3,326.9 1110,326.9 1103.3,320.1 1105,309.3 1112.1,305.6 1121.3,310.5 1122,314.2ZM664.2,367.8 664.2,366.3 659.1,363.1 660,368 661.1,370.2ZM1347.8,739.4 1358.9,752.2 1348,756.3 1341.1,753.2 1338.8,748.1ZM1531.3,342.2 1537.3,351.7 1538.1,351.8 1541.1,350 1536,344 1534.2,341.1ZM1327.6,819.4 1324.3,833.5 1325.5,835 1338.5,836 1342.3,826.7 1340.2,821.8ZM1479.3,460 1469.7,450.9 1475.4,441.8 1484.3,442.7 1482,457.7ZM697.5,468.5 690.1,471.2 679.5,462 680.7,459.5 692.3,455.1 699.6,459.6ZM1774.2,726.7 1775,727.4 1775,726 1774.5,724ZM1325.3,565.3 1332.4,568.6 1343.2,564.6 1343.9,557.4 1341.6,552.5 1338,551.3 1329.2,554.4 1324.1,561.8ZM1008.3,489.5 1015.1,489.3 1017.7,487.1 1020.2,474.2 1011.1,472.9 1002.6,483.5ZM1431.5,522.2 1429.6,522.2 1420.3,517.1 1418.8,510.5 1421.9,504.6 1428.4,506.1 1435.5,516.1ZM1681.9,505.4 1683.6,505.4 1689.6,506.8 1688.9,508.3 1686.8,508.7 1688.1,509.6 1691.2,508.2 1694,496.9 1693,495.9 1683.2,497.2 1680.5,499.2 1680.4,499.3 1678.8,503.3ZM1719.6,582.5 1721,578.6 1719.5,573.3 1714.1,570.8 1710.3,572.4 1705.3,580.1 1710.8,585.1ZM993.4,404.3 980.4,415.1 970.2,405 974.5,395.4 977.7,394.5 991.4,399.3ZM1742.9,705.2 1747.2,697.2 1745.1,693.6 1735.8,691 1732,692.3 1731.8,697.4 1738,704.5ZM707.4,477.5 712.5,473.7 714.1,456.7 709.9,454.8 699.6,459.6 697.5,468.5 707.3,477.5ZM1057.2,300.4 1057.4,300.6 1063.2,301 1060.4,299.2 1057.8,297.5ZM1714.1,570.8 1713.4,562.4 1719.5,557.2 1725.2,559.6 1728.3,567.2 1719.5,573.3ZM1615.6,718.9 1614.7,721 1621.1,729.8 1624.8,730 1629.6,723.7 1624.2,717.9ZM1195.2,498.5 1194.5,499.7 1194.2,510.5 1200.1,517.4 1210.7,514.4 1213.8,508.3 1207.7,497.1ZM1332.6,435.6 1336.4,444.4 1335.6,448.3 1334.8,449.2 1320.8,451.2 1317.7,446.6 1322.7,433.5ZM1797.8,489.1 1787.8,490 1791.1,479.7 1799.3,480.5 1799.8,481.5ZM1486.1,471.2 1484.2,478.7 1486.8,481.8 1502.7,480 1503.6,477.5 1497,467ZM1512.3,719.4 1510.1,711.3 1514.2,708.1 1520.4,709.2 1522.3,715.5 1520.9,718.3ZM883.1,716.6 868.6,708 863.4,717.3 866.8,728.5 879.1,731.5 879.5,731.2ZM1011.6,706.4 1003.1,697.7 995,699.2 990.8,705.1 993.2,712 998,715.1ZM859.4,393.2 858,380.2 846.1,379 842,384.4 842.2,392.6 843.2,393.7ZM1418.1,483.2 1424.6,494.4 1421.4,502.8 1411.2,498 1409.6,491.1 1413.9,484.1 1417,482.6ZM1826,511.7 1827.9,522.6 1839.1,515.4 1838.8,512.3 1830.6,509ZM1745.6,482.1 1748.5,483.5 1749.9,490.2 1744.9,497 1743.1,497.3 1738.4,493.4 1740.5,483.6ZM1735.4,529 1727.7,530.9 1729.3,542.2 1739.8,537.5 1738.3,530.4ZM1427.2,630.5 1419.7,622.7 1421.4,615.4 1429.7,612.4 1435.5,623 1429.5,629.9ZM666.9,383.4 668.1,374.2 664.2,367.8 661.1,370.2 662.9,373.7 664,380 665.7,383.8ZM781.6,680.2 788.5,685.8 802.6,682 804.1,674.9 793,664.3 785.8,665.5 781.6,673.5ZM778.8,718.1 794.9,714 795.8,703.4 788.8,696.8 775.5,702.2 775.1,703.1ZM800.9,759.6 796.9,763.3 787,762.6 780.5,756.4 781.2,749.4 796.2,741.4 800.9,745.4ZM1048.6,520.9 1043.5,531.6 1045.2,535 1055.9,535.3 1060.9,529.1 1057.1,522.4ZM1334.5,731.5 1326.7,719.5 1325.2,719.9 1317.7,731.4 1320.3,734.4 1331.4,735.4ZM1681.8,639.5 1692,640.8 1688.4,649.4 1677.9,652 1675.2,648.8ZM1629.8,522.8 1630.3,523.3 1631.8,522 1637.9,514.4 1637.9,514.2 1635.2,513.7 1632.7,514.7ZM1642.1,527.4 1644.5,523.9 1640.9,525.1 1637,527.5ZM791,425.2 789.3,430.7 795.6,444.3 812.2,433.1 810.8,424.8 807.1,421.8ZM728,376.7 735.4,364.2 726.8,353.9 725.4,354.1 717.9,369.1ZM1657,732.2 1651.5,739.5 1641.4,730.6 1641.4,730.6 1650.1,721.9ZM677.2,391.7 682.8,376 688.8,371.9 689.9,371.8 696,380.7 696,389.7 684.9,395.3ZM988,377.2 977.7,394.5 974.5,395.4 966.5,385.7 968.8,376.3 984.8,373.5 988,375.3ZM1049.6,710.8 1044.1,709 1036.2,722.5 1037.1,723.5 1051.4,725.1 1053.6,722.1ZM1304.3,712.7 1290.5,709.9 1289.5,708.6 1289.6,704.8 1297.2,695 1305.4,703ZM1763.3,576.3 1760.4,585.5 1762.2,588.9 1766.8,590.9 1777.6,588.5 1773.6,579.9ZM1410.7,740.1 1416.6,737.8 1423.4,739.7 1425.9,744.5 1425.2,746.3 1414.1,756.1 1410.3,754.6 1408.6,743.9ZM1759.2,701.9 1759,703.4 1763.3,711.8 1765.6,712.8 1769.1,709 1768.3,706.6 1765.6,701.2ZM1207.6,795.7 1218.6,795.9 1223.3,782.1 1211,776.8 1210.2,777.2 1203.7,792.8ZM1579.7,457.9 1583.3,458 1588.8,464.1 1588.9,465 1580.8,473.4 1574.4,474 1571.1,468.9ZM1697.1,678.1 1691.5,685.2 1688.9,685.6 1685.9,681 1688,670.7 1696,674.3ZM1253.6,787.1 1248.8,781.2 1238.6,782 1235.3,785.8 1237,797.1 1246.2,798.1ZM760.2,402.9 766.9,409.6 777.4,407.3 779.2,404.4 776.9,396.3 769.2,395.1ZM1566.7,539 1557.7,537.8 1554.5,531.4 1559.4,521.1 1562.5,521 1568.7,525.1ZM1512.3,491.6 1507.1,497.8 1497.6,494.7 1503.2,481.6 1512.1,489.1ZM1693.5,562.9 1694.1,553.7 1703.2,549.9 1706.7,558.6 1700.5,566.5 1697.5,567.1ZM941.7,672.8 944.1,673.7 946.1,676.7 945.1,694.1 942.1,695.2 928.4,689.6 927.1,681.8ZM1480.9,501.1 1484.6,508.7 1488.6,508.1 1494.7,500.1 1494.7,496.2 1486.6,492.4 1483.9,494ZM1603.3,764 1608.5,754.9 1611.5,753.8 1617.7,764.2 1615.9,768.1 1614.3,768.8 1606.3,767.2ZM1577.3,674.3 1572.8,678.2 1566.5,678.1 1563.3,668.1 1574.5,666.7ZM1441.2,393.9 1434.8,384.4 1428.7,382.9 1423.5,396.6 1423.7,397.1 1429.7,400.9 1437.8,398.9ZM1707.8,609 1704.7,606 1705.2,597.1 1706,595.8 1710.7,593.5 1715.4,595 1718.7,602.3 1714.9,608.7ZM1640.7,446.6 1649.4,437.2 1649.5,434.7 1639.9,431.7 1635.8,436 1638.2,444.1 1639.4,444.4 1640.5,446.6ZM927.8,430.6 923.5,428.8 919.7,418.1 931,406.8 942.1,421.6 941.9,422.3ZM1396.9,817.1 1396.5,814.1 1387.5,805.7 1379.9,809.8 1379.9,811.6 1387.7,821 1391.7,821.1ZM1722.6,632.4 1729.4,638.7 1729.3,640 1721.8,644 1716.4,638.7 1717.6,634.3ZM1784.9,549.4 1782.2,544.8 1793.4,533.5 1796.8,532.9 1798.5,539.6 1793.4,548.6ZM1742.3,638.8 1750.7,637.7 1752.5,635.4 1743,626.7 1742.1,627.2 1739.3,635ZM1421.8,687.7 1410.2,687.5 1407.2,681.9 1413.9,671.2 1421.5,673 1421.9,673.5ZM1607.9,828.3 1606.7,830.7 1610.4,837.4 1618.3,839.2 1622.5,832 1619.1,824.3ZM1381.3,363.5 1373.3,374.5 1373.1,378.3 1383.7,380 1390.8,375.4 1391.1,372.6ZM863.4,717.3 848.5,719.4 848.2,718.8 849.3,706.8 855.8,701.9 867.9,705.1 868.6,708ZM823.2,624.9 836.2,627.1 837,612.2 824,607.6 821.6,610.4ZM1845,439.3 1842.9,442.1 1845.2,440.5ZM1829.3,439.9 1829.3,440 1829.3,439.9ZM1837.4,446.2 1838.2,445.6 1835.7,444.9ZM1008.5,435.3 998.4,431.6 988.7,440 995.7,451.7 1007.9,446.1ZM1135.9,513.3 1131.3,510.8 1121,518.8 1126.5,531.7 1134.2,528.4ZM1372.2,470.3 1378.6,480 1371.4,489.9 1369.6,488.9 1363.9,477.9 1369.1,471.3ZM978.1,740.8 961.3,739.7 961.2,739.8 959.2,743.8 961,755.7 978.2,758.3 982.6,753.1 982.8,748.1ZM1354.5,304.1 1354.5,302.7 1344.5,296.7 1337.5,299.5 1335.5,303.4 1336.4,312 1351.1,310.4ZM1364.1,742.7 1361.1,752.2 1370.6,754.8 1379.1,747 1371.1,737.5ZM1763.6,625.4 1757.6,628.3 1753.6,623.6 1754.6,614.6 1762.2,617ZM1537.2,847.2 1545,856.2 1550,856.9 1554.7,849.8 1550.9,844.6 1538,844.3 1537.6,844.5ZM1553.3,556.4 1546.5,567.5 1543,568.6 1537.5,561.3 1538.5,553.5 1543.2,551.6ZM1812.9,531.5 1810.6,518.9 1806.8,519.3 1798.2,528.5 1798.2,531 1810.9,532.5ZM1744.5,510.3 1740.3,503.8 1732.7,506.1 1734.8,517 1739.7,516.7ZM1799.5,554 1808,546.3 1809.6,546.3 1813.1,548.2 1810.6,561.4 1809.8,561.7 1799.8,557.9ZM978.9,511 962.1,513.6 957.7,509.9 970.4,496.1 979,500.4ZM880.6,312.7 880.8,312.9 885.5,314.6 900.3,310.4 900.3,304.9 896,309 888,306 882.3,298.3ZM1272.4,701.6 1278.5,709.3 1289.5,708.6 1289.6,704.8 1280.4,694.2ZM1377.3,852.1 1376,856.7 1363.4,862.9 1359.5,859.2 1359.1,852.4 1362.3,848.8 1376.6,851.1ZM744.7,333.6 743.1,332.7 730.4,335.5 731.5,348.3 749.1,349.4 749.8,347.5ZM1480.9,501.1 1469.8,502.9 1468.7,501.2 1471.8,490.5 1472.1,490.3 1483.9,494ZM1588.2,587.5 1580.3,581.6 1582.7,573.5 1587.1,572 1593.9,578.1ZM1584.8,658.4 1574.9,665.7 1574.5,666.7 1577.3,674.3 1580.3,675.1 1589.2,669.3ZM1392.2,623.3 1382.5,615.9 1384.8,607.6 1391.3,604.6 1394.4,607.1 1396.6,617.8ZM1634,575.3 1624.7,570.8 1625.4,559.9 1626.5,559.3 1633.9,559.2 1634.7,559.7 1637.9,565.3 1637.4,572.1ZM921.8,298.3 919.8,287.2 916,290 909.6,294.1 907.5,296.3 919.1,300.3ZM1436.6,423.5 1428.2,426.4 1423.5,413.9 1428.2,410.3 1436.4,415.1ZM1288.2,727.9 1286.7,723.4 1275.3,717.9 1268.1,729.9 1268.9,732 1272.7,734.9 1286,730.3ZM942.8,827.3 939.2,815.6 939.8,813.3 954.5,810.4 955.8,811.9 955.9,824.6 945.9,830ZM1477.8,337.3 1483.5,331.8 1481.3,322.7 1478.8,322.4 1476,328 1471.2,334.4ZM750,454.6 760.3,460.3 760.9,463.8 751.4,473.4 742.3,462.9ZM1688,551 1694.1,553.7 1703.2,549.9 1704,548.4 1695.7,537.9 1686,544.5ZM1544.9,364.4 1542.6,363.7 1536.8,365.4 1532.1,371 1531.8,374.4 1543.5,378.4 1547.3,377ZM1045.9,667 1051.1,654.5 1048.7,652.6 1031.3,655 1026,662.3 1030,668.3 1034.7,670.6ZM1602.3,777.3 1611.7,780 1614.3,768.8 1606.3,767.2ZM687,408.3 693.2,411.9 696.9,410.9 704.7,402 704.6,396.4 696,389.7 684.9,395.3ZM1568.8,390.3 1569.4,391.9 1579.7,394.7 1583.7,388.6 1583.5,388.2 1581.6,389.8 1581.1,390 1581.2,390 1580,391 1579,390.8 1576,392 1569.8,388.9ZM1346.5,546.9 1346.2,537.1 1338.7,533 1332.6,537.7 1338,551.3 1341.6,552.5ZM672.5,336.6 687.4,346.3 685.9,349.5 671.6,359 671.4,359 666.3,348 670.5,337.4ZM905.6,610.3 899.4,599.7 906.8,593.5 916.9,598.3 917.1,607.1ZM1920.5,434.9 1920.6,429.7 1921,426.5 1921,424.2 1919.9,423.7 1914.6,424.3 1910,431.1 1912,435.8ZM787,762.6 780.5,756.4 768.9,761.9 768.8,766.8 770,767 780,772 783.1,772.8ZM1375.6,655.6 1382.9,657.9 1383,657.9 1385.5,670.4 1385.4,670.6 1370.5,672.1 1367.3,668 1367.4,665.7ZM843.3,823.2 853,825 853.7,816.9ZM1340.2,821.8 1342.3,826.7 1350.8,827.9 1356,820.4 1355.3,818.4 1344.8,814.3ZM1339.8,408.5 1335.9,405.8 1338.3,391.2 1339.9,389.7 1343.1,389.2 1349.7,394.1 1344.6,407.2ZM1017.6,295.8 1028,296.9 1031.9,292.8 1031.5,289.3 1028.9,290.9 1021.3,293.4 1017.5,295.7ZM1531.2,441.2 1531.7,433.9 1538.4,426.8 1539.3,426.7 1549.3,433 1547,442.5 1535,446 1533.6,445ZM1795,569.9 1803,574.3 1804.6,574 1809.8,561.7 1799.8,557.9 1795.5,562.1ZM1855.1,514.8 1849.9,521.6 1854,527.8 1863.1,528.7 1862.3,517.8ZM1559.3,355.4 1560,354 1557.4,353.4ZM769.5,312.1 768.1,314.5 756.3,320 746.5,314.5 747.3,305.5 753.7,300.1 759.9,300.7ZM1528.3,770.2 1520.2,771 1517.2,784.5 1522.8,786.7 1527.2,785.5 1531.1,779.1 1529.2,770.7ZM1343.3,515 1344.1,521.9 1339,527 1329.2,521 1332.3,507.6ZM1443.5,409.2 1437.8,398.9 1429.7,400.9 1428.2,410.3 1436.4,415.1ZM1871,473.5 1870.8,475.4 1881.6,485.6 1884.8,473.4 1873.4,471.7ZM1483.9,494 1486.6,492.4 1486.8,481.8 1484.2,478.7 1474.8,479.1 1472.1,490.3ZM771.3,519.3 777.6,514.8 789.8,518.6 781.2,535.1 776.9,534.8 770.1,525.1ZM759.6,512.6 759.3,510 747.6,499.4 747.5,499.4 742,505 740.8,516.9 753.7,521.1ZM1752.6,520.2 1763,526.1 1765.5,526 1766.3,524.8 1766.6,515.7 1760.9,512.1 1753.2,516ZM1367.2,365.9 1373.3,374.5 1381.3,363.5 1381.2,362.5 1372.8,359.6ZM859.7,393.5 868.9,394.3 877.7,385.6 876.9,382 863,373.7 858,380.2 859.4,393.2ZM1826,511.7 1827.9,522.6 1827.7,523.3 1823.5,524.1 1813.8,516.5 1821.9,510.1ZM1011.7,676.4 1021.9,682.4 1024,689.9 1019.5,692.1 1007.3,689.9 1003.4,680.3 1004.8,678.2ZM1041,304.8 1043.7,297.6 1031.9,292.8 1028,296.9 1029.8,308 1031.3,309.1ZM1387.7,851.8 1377.3,852.1 1376,856.7 1381.1,867.9 1387.3,866.1 1390.7,854.7ZM1157.6,657.4 1154.5,674.7 1155.4,674.9 1167.9,671.2 1169.8,659.2ZM1477.5,548.7 1471.3,552 1470.4,558.2 1471.2,559.2 1482.8,562.4 1485,557.2 1479.2,549ZM1500.5,657 1504.6,652.8 1501.5,645 1490.5,646.1 1488.2,648.6 1490.8,658.2ZM1657.4,781 1658,780.1 1655.8,768.2 1645.9,771.2 1644.6,773.3 1647.2,780.3ZM927.8,842.4 926.2,844.3 925.2,851.1 935.3,861.8 935.3,861.8 943.2,844.2ZM1634.7,680.9 1639.7,684.8 1647.8,684.2 1648.2,683.8 1648.9,677.2 1647.8,674.4 1641.5,671.5 1636.7,672.9ZM1829.3,439.9 1828,438 1829.1,430.3 1829.1,427.9 1824.1,427.7 1824,428 1821.7,431.5 1828.4,440 1829.3,439.9ZM1176.5,500.9 1181.1,484.1 1177,481.1 1168.4,482.4 1163.1,489.1 1171.4,500ZM1454.3,771 1454.1,765.9 1448.5,762.1 1440,764.2 1438.5,772.3 1442.1,775.9 1454.1,771.3ZM1674.4,456.8 1678.2,457.3 1677.5,455 1675.6,452.6ZM1013.6,742.3 1003.3,748.6 995.6,742.7 996,731.5 996.3,731.3 1010.6,735ZM1528.2,744.4 1534,745 1535.8,756.2 1528.2,758.4 1523.7,754.9 1523.6,752.2ZM1390.7,854.7 1387.3,866.1 1395.9,870.5 1403.5,863.3 1397.1,854.9ZM1488.3,603.7 1491.9,600.5 1490.1,592.4 1481.7,589.6 1478.9,591.3 1477.7,595 1480.4,601.7ZM1448.2,843.7 1446.6,839.7 1444.9,839.1 1434.8,843.3 1434.3,847.1 1435.9,849.5 1445.6,851.1ZM1323.7,537.5 1332.6,537.7 1338,551.3 1329.2,554.4 1321.7,541.9ZM1130.5,822.2 1134.1,824 1138.5,823.5 1143,814.1 1139.9,806.5 1134.3,804.9 1127.3,813.6ZM1596.8,780.1 1602.1,789.5 1594.8,798.8 1594.2,798.5 1587.8,787.9ZM1279.7,817.9 1269.6,821.3 1269.1,825.9 1282.2,831.8 1282.3,831.8 1284.5,822ZM1367.2,365.9 1373.3,374.5 1373.1,378.3 1372.8,378.5 1360.5,380.5 1357,377.1 1356.5,374.2 1362.6,365.5ZM1277,604.9 1278.3,620.2 1281.6,623.3 1288.8,618.5 1287,605.1ZM1341.9,885.4 1334.2,888.5 1334,889 1342.9,889.2 1349,889.9ZM1667.4,635.6 1662.9,631 1653.3,632.6 1648.5,636.9 1648.6,639 1651.3,644.4 1666,644.1ZM1493.1,855.1 1495.3,845.6 1490.4,840.5 1477.9,842.7 1478.1,851.6 1483.4,856.7ZM1043.5,531.6 1032.2,526.4 1026.7,538.7 1031,545.1 1041.6,542.7 1045.2,535ZM809.9,612.6 802.6,606.3 802.9,599 807.8,596.3 823.6,600.2 824,607.6 821.6,610.4ZM1319.4,429.2 1307.6,433.9 1310.3,444.5 1317.7,446.6 1322.7,433.5ZM1408,309.6 1409.5,311.7 1415.6,313.4 1417.4,309.6 1414,310 1408.6,306ZM901.8,617.7 900.7,618.3 891.4,616.7 892.7,599.6 899.4,599.7 905.6,610.3ZM1372.2,470.3 1372.8,469.1 1386.5,465.5 1389.5,469 1389.9,476.3 1382.7,480.3 1378.6,480ZM1203.8,539.1 1198.3,540.9 1190.1,537.7 1192.9,525.6 1198.3,522.7 1205.9,533.5ZM664.2,367.8 664.2,366.3 671.4,359 671.6,359 688.8,371.9 682.8,376 668.1,374.2ZM1035.5,798.2 1030.8,806.5 1018.5,808 1015.5,802.9 1026,787.7ZM1639.2,461.3 1635,468.6 1636.4,470.7 1637.9,467.2 1641,460.9ZM849.8,331.3 854.4,337.1 848.8,347 839.5,340.6 842.6,332.9ZM1504.4,397.8 1501.4,389.3 1507.1,383.3 1512.4,384.1 1514.2,396.4ZM1392.3,624.2 1401.7,628.7 1408.5,621.7 1406.2,616.3 1396.6,617.8 1392.2,623.3ZM928.8,801.8 933.3,801.1 939.8,813.3 939.2,815.6 922.2,822.5 918.8,818.1ZM849.1,309 861.4,315.6 867.4,310.6 863.6,298.4 863,298.3 860,299.7 859,302 857.4,300.9 847.5,305.6ZM1665.6,670.3 1664.1,670.4 1659.1,665.8 1659.6,657.5 1664.2,654.8 1673.3,664.1 1673.3,664.4ZM1690.8,613.1 1692.3,607.7 1704.7,606 1707.8,609 1705.1,618.9 1702.8,620.8ZM681.1,592.1 694.6,596.1 695.6,602.3 690.7,608 677.8,606.6 673.4,597.7ZM832.1,292.3 827.6,300.8 833.5,309.5 847.1,305.3 845.5,299.5 838,292 837.9,290.9ZM1385.6,434.4 1403.3,434.1 1401.6,443.1 1394.5,448.9 1390.9,447.8 1385,439.2ZM878,679.8 875.5,666.4 863.7,668.2 859,679.7 859.8,681.7 870.3,687.2 875.3,684.8ZM1495.4,373.7 1501.8,373.4 1507.1,383.3 1501.4,389.3 1492.9,388.2 1489.4,378.6ZM1840.9,575.1 1839.2,575.9 1828.6,569.1 1829,566.9 1839.5,562.8 1843.3,565.6ZM1189,299 1198.7,300.8 1199.2,298.8 1193,297.5 1187.9,297.6ZM1724.4,627.7 1731.4,625.6 1732.9,634.9 1729.4,638.7 1722.6,632.4ZM1536.5,794.8 1539.4,801.1 1544.7,802.8 1552.5,796.9 1549.4,791.1 1537.9,792.5 1536.8,793.6ZM1228.3,456.2 1228.8,457 1228.4,466.6 1219.8,473.8 1212.4,470.8 1211.1,461.1 1212.9,458 1223.5,453.9ZM1141.8,907.2 1151.7,912.7 1152.9,912.5 1157.4,899.5 1150.7,893.7 1149.8,893.6 1141,902.4ZM926.9,759.9 928.6,749.8 921.7,740.7 912.1,745.1 908.8,754.4 915.3,763.4 923.2,762.9ZM1446.6,821.3 1449.3,820.6 1457.1,812.4 1455.3,804 1449.1,802.3 1444.2,803.9 1438.9,811.3 1445.4,821.1ZM1579.8,806.2 1567.4,809.9 1566.9,798.8 1567.9,798.1 1579.7,799.9 1579.7,799.9ZM1666,644.1 1651.3,644.4 1651.1,645.4 1653.5,654.7 1659.6,657.5 1664.2,654.8 1667.6,646.7ZM1634.7,680.9 1639.7,684.8 1634.9,694.6 1634.1,695 1626.4,692.1 1628.8,682.4ZM1410.2,687.5 1407.9,694.4 1404.7,696 1396.1,690 1395.5,685.4 1401,681.5 1407.2,681.9ZM1139.9,389.8 1140.4,378.2 1125.7,375.2 1122,381.4 1124.2,385.1ZM1360,331.4 1358.8,325.2 1367.2,319 1380,324.1 1380.6,325.7 1370.2,338.1ZM1123.4,908.2 1117,910.8 1116.2,913 1126,913 1129.9,912.4ZM844.1,806.1 838.6,807.2 833.8,815.5 840,822.7 842,823 843.3,823.2 853.7,816.9 854,814 855,814.4 853.6,810.4ZM1581.7,688.5 1574.2,685 1567.8,690.7 1567.6,692.3 1575.2,696.6 1581.7,688.7ZM900,824.2 891.2,833.8 899.6,841.1 908.2,837.4 908.9,835.1 903.5,824.6ZM943.7,468.9 936.5,469.8 927.5,482.9 942.3,485.8 948.6,478.1ZM1240.2,320.5 1231.4,316.2 1228.7,317.1 1225.5,324.9 1235.6,333.3ZM927.8,430.6 923.5,428.8 915.2,433.6 913.1,448.5 914.7,451.1 927.7,445.9 930.7,439ZM1333.1,482.3 1336,485.9 1329.9,493.8 1318.8,492.3 1316.3,488.3 1320.6,481.9ZM877.7,273.3 872.5,284.5 874.6,291.2 880.2,294.2 882,292.2 882,291.1 881.4,286.5 881,280 879.8,273.7 879.6,272.8ZM1528.9,702.7 1530.9,700.6 1540.6,702.4 1543,709.2 1542.9,709.3 1533.4,712.6ZM1899.1,489 1899.1,489.3 1899.7,488.8ZM1335.2,583.8 1335.4,583.9 1334.2,592.7 1318.6,597.1 1317.5,595.7 1319.4,581.4ZM1096.2,617.5 1086.2,619 1078.9,606.1 1080.3,604.1 1095.7,601.7 1098.1,613.5ZM1659.5,731.7 1664.9,718 1664.2,717.2 1650.3,720.8 1650.1,721.9 1657,732.2ZM1202.9,310.4 1213.7,313.9 1215.9,329.1 1211,330.3 1197.8,318ZM1595.5,763.1 1603.3,764 1606.3,767.2 1602.3,777.3 1596.8,780 1590.5,771.8ZM1235.8,684.2 1242.3,688.3 1243.3,700.2 1234.8,703.9 1231.1,700.7ZM1088.2,337.5 1085.2,327.5 1094.5,320.1 1103.3,320.1 1110,326.9 1101.3,339ZM1204,860.3 1195.1,868.5 1203,878.1 1209.6,877.8 1213.8,873.8 1207,861.6ZM905.2,314.6 899.5,326.8 892.2,329.1 885.5,314.6 900.3,310.4ZM1072.1,435.2 1063.2,433.9 1059.8,428 1065.1,419.9 1070.8,420.3 1076.3,430.8ZM1371,772.6 1359.6,766.7 1360.6,752.4 1361.1,752.2 1370.6,754.8 1374.8,762.3 1373.3,771.3ZM1705.6,528.9 1695.8,534 1689,528.6 1691.9,521.3 1697.8,519.3ZM1658.4,790.4 1668.6,791.9 1671.6,790.3 1672.2,789.2 1669.5,777.3 1658,780.1 1657.4,781ZM1409.8,827.9 1410.9,828.4 1415.8,839.4 1407,846.2 1402.8,845.9 1395.6,836.9ZM1707.4,697.7 1713.8,690.2 1706.3,683.3 1700.2,690.4 1701.4,696.2 1705.4,698.1ZM1272.8,324.9 1272.2,333.6 1268,335.5 1260.6,332.1 1258.6,325.1 1259.9,323 1268.7,321.2ZM1512.4,384.1 1517,381.7 1519.4,377.1 1518.5,375.1 1506.7,367.8 1501.8,373.4 1507.1,383.3ZM1163.1,489.1 1155.9,490.8 1147,477.3 1162.5,473.8 1168.4,482.4ZM984.7,637 991,640.2 998.3,638.7 1004.5,626 999.3,621.4 986.8,627.1ZM1816.4,531.8 1823.5,524.1 1827.7,523.3 1830.8,527.3 1831.6,535.1 1829.4,539.1 1821.8,538.4ZM802.1,481.4 784.7,478 791.1,462.7 803.1,468.3 805.3,475.5ZM1523.3,329.7 1528.2,331.4 1528.7,331.1 1526,325 1521.3,324.2ZM1646.2,757.3 1641.9,759.8 1645.9,771.2 1655.8,768.2 1657,766 1653.6,759.6ZM1812.9,531.5 1810.6,518.9 1813.4,516.5 1813.8,516.5 1823.5,524.1 1816.4,531.8ZM1734.4,741.3 1734.7,737.2 1739.1,733.6 1749.8,736.8 1749.8,736.9 1745.2,745.2 1737.6,744.7ZM709.5,545.8 717.4,549.9 717.8,551.3 709.2,562.3 700.6,558 701.5,550ZM1371.2,833.9 1366,827.1 1356.7,835.6 1362.7,842.6 1370.4,838.6ZM1745.2,651.8 1740.2,643.5 1742.3,638.8 1750.7,637.7 1751.4,649.7ZM1447.5,709.9 1450.7,714.2 1450,722.1 1435,721.8 1434.9,721.4 1438.2,710.1ZM689.9,635.5 677.3,630.9 680,638 683.5,643.4 684.3,644.2ZM718.5,427.7 722.4,436.9 724.9,438.2 727.7,437.8 734,430.2 730,415 728.1,414.6ZM1811.3,501.7 1807.4,503.3 1813.4,516.5 1813.8,516.5 1821.9,510.1 1820.1,505.4ZM806.3,358.8 795.2,371.3 795.4,373.3 804.9,380.9 817.2,371.1 815.7,363.6ZM1340.2,626.4 1338,620.5 1335.9,618.8 1326,620.1 1327.3,634.8 1333.1,635.9ZM1356.6,547.1 1361.2,541.4 1362.1,534.6 1361.5,532.9 1359.8,532.1 1346.2,537.1 1346.5,546.9ZM1587.1,695.8 1582.8,702.4 1576.1,699.4 1575.2,696.6 1581.7,688.7ZM1446.6,821.3 1452.7,834.3 1446.6,839.7 1444.9,839.1 1439,828.7 1445.4,821.1ZM1235.3,683.5 1233.5,683.5 1219.6,690.2 1219.5,700.7 1231.1,700.7 1235.8,684.2ZM1227,384.8 1220.1,383 1219.6,383.2 1219.2,401.4 1226.5,401.3 1231.4,392.2ZM1399.8,656.1 1383,657.9 1385.5,670.4 1396.7,669.3 1398.6,667.6ZM992.7,796.1 1005.3,787.2 1005.9,787.5 1009.8,800.6 999.3,807.3 992.7,801.2ZM1920.5,477.2 1920.9,477.4 1920.7,476.4ZM1261.4,715 1264.1,712.6 1274.9,716.7 1275.3,717.9 1268.1,729.9 1264.6,727.1ZM1307.1,417.5 1319.4,428.6 1319.4,429.2 1307.6,433.9 1303.8,432.2ZM1044.4,514.9 1030,520.1 1032.2,526.4 1043.5,531.6 1048.6,520.9ZM789.9,404.5 792,407 805.9,406.9 806.7,392.3 792.2,393.8ZM1131.6,602.8 1134.5,594.2 1127.5,584.6 1116.7,590.9 1116.7,592.6 1124,602.1ZM824.8,504.6 835.2,512.6 838.2,512.1 846.4,497.1 839.4,490 833.7,491.4ZM1143.4,414 1147.6,422.2 1159.4,423 1162.7,420.8 1164.7,411.8 1164.7,411.8 1146.7,406ZM1622.9,904.1 1636.3,895.9 1637.2,896.7 1639.2,907.7 1629.7,910.2ZM1392.3,624.2 1388.6,630.6 1379.4,633.3 1375.6,618.8 1382.5,615.9 1392.2,623.3ZM1629.5,417.6 1635.3,414.6 1632,414 1625.5,412.8ZM854.5,426.7 853.6,411.6 841.9,408.9 839.3,426.7ZM927.8,430.6 941.9,422.3 948.5,431.8 944,442.6 930.7,439ZM1348,756.3 1348,765 1341.9,770.1 1341.9,770.1 1335.6,761.7 1341.1,753.2ZM725.4,354.1 726.8,353.9 731.5,348.3 730.4,335.5 727.4,332.9 717.2,334.2 713.2,345.2 715.2,349.8ZM1464,397.9 1453.6,386.4 1452.4,386.7 1446.9,392.4 1453.7,402.6 1463.4,399.1ZM1838.4,555.5 1841.6,550.2 1840.4,547.5 1831.1,543.2 1826.9,550.3 1830.5,555.8ZM1039.6,331.7 1031.2,322.7 1024.3,326 1022.9,329.2 1030,341.9 1037.4,340.6ZM1863,482.1 1866.6,481.2 1873.5,491.1 1872.9,492.1 1863.6,492.7 1861.1,490.1ZM1127.8,330.9 1117.6,331.8 1118.8,343.2 1129.3,346.7 1132.2,345.3 1133.6,337.7ZM1507.8,752.5 1505.3,750.5 1495.9,751.8 1493.7,754.1 1494.9,765.9 1500.8,765.7 1508.9,757ZM1251.3,727.2 1264.6,727.1 1261.4,715 1255.3,714.7 1250.9,725.9ZM779.2,404.4 777.4,407.3 781.4,418.6 788.9,422.1 792,407 789.9,404.5ZM1107,524.1 1115.5,516.9 1111.7,504.5 1097,513.3 1102.9,523.7ZM1559.5,633.5 1564.9,638.3 1563.9,647.1 1563.1,647.7 1553.5,645.2 1556.3,634.7ZM1108.3,774.3 1116.5,773.2 1124.3,763 1115.5,755.6 1104.6,761.1 1105.3,771.9ZM1661.3,541.6 1673.3,545.1 1672.5,549.6 1662.2,552.3ZM1296.7,382.8 1293.4,373.9 1287.4,372.8 1278.6,378.4 1278.3,383 1288.1,394.4 1289.2,394.4ZM796.2,741.4 795.5,735.9 780.9,729.2 773,740.5 781.2,749.4ZM1634.5,780 1639.4,773.4 1633.1,766.3 1631.8,766.6 1625.8,776 1625.9,776.9 1632.8,780.4ZM709.5,508.6 695.8,511.6 692.6,509.4 698.3,494.1 706.2,495.3 711.5,504.6ZM1596.4,545.4 1588.4,541.6 1585.6,550 1593,557.2 1594.2,556.3ZM1565.4,373.7 1562.2,375 1563,380.1 1566,374 1565.7,373.8ZM1564.1,387.7 1568.8,390.3 1569.8,388.9 1568,388 1563.5,383.5ZM1543.5,698.4 1541.8,692 1546.6,688.5 1554.4,690.9 1557.7,698.9ZM1190.4,486 1188.4,484.6 1193.6,468.9 1206.1,475.8 1205.1,480.8ZM1707.4,697.7 1715.2,702.5 1715.1,711.6 1705.2,711.8 1705.4,698.1ZM1463.4,399.1 1466.3,412.1 1462.4,413.7 1451,410.8 1453.7,402.6ZM1817.6,570.3 1815,562.9 1810.6,561.4 1809.8,561.7 1804.6,574 1811,577.1ZM1231.3,549.6 1227.6,556.1 1217.2,556.8 1212.9,553 1213.1,549.6 1225.2,538.2 1227,538.5ZM899.4,507.5 891,511.9 882.8,505 885.7,495.3 891,494.2 898.2,499ZM1171.7,464 1175.4,454.5 1182.4,452.8 1190.7,464.1 1178.2,470.1ZM1438.9,671.3 1434.1,663.3 1427.5,662.8 1421.5,673 1421.9,673.5 1433.7,676.6ZM1732.3,760.7 1725.4,762.7 1725.3,768.7 1732,762 1733,761.5ZM1727.8,544.4 1718.4,551 1719.5,557.2 1725.2,559.6 1731.1,553.9 1731.4,548.6 1728.1,544.4ZM1091.5,484.4 1084.9,483.4 1081.2,473.2 1083.4,469.6 1096.3,470.8 1099,474.2ZM1725.5,745.6 1734.4,741.3 1734.7,737.2 1727.4,732.2 1723,733.1 1721.1,735ZM1750,710.9 1759,703.4 1763.3,711.8 1755,717.2ZM1601.5,482.9 1607.4,477.4 1606.8,473.3 1600.3,469.2 1594.7,470 1594.3,476.3ZM1116.2,688.9 1122.1,696.1 1129.4,696.5 1133.9,685 1132.9,681.4 1119,682.4ZM856.3,736 857.1,736.2 866.8,728.5 863.4,717.3 848.5,719.4 848,721.7ZM1825,499.3 1831.3,499.5 1830.6,509 1826,511.7 1821.9,510.1 1820.1,505.4ZM1319.1,472.7 1319.2,460.3 1331.4,465 1332.6,470.5 1331.8,472ZM1641.7,911.8 1641.5,912.1 1641.9,912.1ZM1626,546 1624.6,536.5 1631.7,535 1637,540 1636.7,544.8 1634.8,546.3ZM1480.9,501.1 1484.6,508.7 1482.8,511.7 1469.1,512 1469.8,502.9ZM1602.6,741.6 1600.6,724.8 1589.4,732 1593.1,742.2 1597.6,744.7ZM1421.8,687.7 1410.2,687.5 1407.9,694.4 1415.3,699.7 1418,698.7 1422.1,688ZM1370.3,441.6 1366.6,454.8 1371.4,457.6 1379.4,453.7 1377,444.1ZM1654.4,443 1661.5,442.5 1665.6,445.9 1665.9,447.4 1663.2,452.8 1656.7,456.4 1652.8,450.3ZM1531.7,433.9 1538.4,426.8 1530.9,418.2 1525,419.8 1522.1,426.2 1522.3,426.9ZM1494.8,512.8 1488.6,508.1 1494.7,500.1 1502.3,509.1ZM1831.6,535.1 1843.1,534.6 1843.1,525.1 1830.8,527.3ZM933.4,454.4 928.2,462.4 936.5,469.8 943.7,468.9 944.9,466.5 940,454.2ZM1911.9,479.8 1907.9,476.5 1896.8,485 1899.1,489 1899.7,488.8 1904,485 1910,482 1911.5,481.4ZM1661.3,541.6 1662.2,552.3 1659.7,555.4 1651.2,545.7 1659.5,539.3ZM1412.5,657.2 1413,670 1398.6,667.6 1399.8,656.1 1401.3,654.2 1411.5,656ZM1720.6,615.2 1726.9,614.5 1728.9,601.8 1728.4,601.1 1718.7,602.3 1714.9,608.7ZM1591.4,695.6 1596.4,702 1598.2,701.4 1604.6,689.8 1604,687.9 1603,687.4 1594.8,688.1ZM1829.2,582.3 1830,582 1837.5,579 1839.2,575.9 1828.6,569.1 1825.7,572.4 1825,579ZM1440.3,656 1437.6,648.3 1454.4,646.4 1455.2,647.3 1455.1,653.1 1445.1,658.6ZM1016.7,309.1 1029.8,308 1028,296.9 1017.6,295.8ZM1577.3,674.3 1572.8,678.2 1574.2,685 1581.7,688.5 1585.6,683.9 1580.3,675.1ZM1512.3,412 1509.4,411.8 1504.3,398 1504.4,397.8 1514.2,396.4 1515.2,397.1 1512.5,412ZM1545.2,719.3 1538,722.9 1543.7,735.1 1544.3,735 1549.9,726.6ZM1647.8,674.4 1652.2,667 1647.3,660 1642.4,659.6 1641.6,660.4 1641.5,671.5ZM1555.2,705.8 1543,709.2 1542.9,709.3 1545.6,718.5 1556.8,715.4ZM1615.6,718.9 1613.8,709.4 1623.3,706.6 1626.3,708.2 1624.2,717.9ZM789.9,634.1 778.3,630.4 772.8,634.7 776.3,644.2 784.8,646.7 791.4,642.7 791.9,641.8ZM1399.3,703.9 1390,698 1396.1,690 1404.7,696 1401.4,703.3ZM1072.1,435.2 1072.6,445.9 1069.6,448.8 1056.5,443.1 1063.2,433.9ZM1487.4,742.4 1482.6,750.4 1475.6,743.9 1476.2,735.4 1478.9,732.2ZM1380.4,530.8 1367.7,528.1 1371.5,518.1 1378.5,518.4 1383.4,526.3ZM1739,563.8 1730,567.6 1728.3,567.2 1725.2,559.6 1731.1,553.9 1738.6,559.8ZM978.2,530 974.9,525 964.5,525.4 963.9,526.3 964.7,537.9 973.6,540.6ZM889.4,413.3 901.7,414 903.5,398.5 886.2,406.1ZM963,423.2 978.3,425 979,434.2 962.2,437.3 959.3,432.5ZM1581.3,403.7 1582.9,405.7 1582,404 1581.4,403.4ZM1587.7,411.9 1592.1,412.3 1594,409.8 1590.1,409.5 1584.8,408.2ZM1144.6,328.3 1142.1,334 1152.4,346.4 1159,332.9 1149.3,326.4ZM1051.7,459.9 1064.1,470.5 1070.4,459.5 1068.6,455.7 1054.5,456.5ZM742.9,533.6 735.3,522.3 740.8,516.9 753.7,521.1 755.8,529.1Z"/>
<path fill="#ead9ce" d="M767.4,653.2 776.3,644.2 772.8,634.7 770.5,634.5 759.6,642.9ZM1516,520.5 1508.6,517.8 1506.7,509.9 1509.3,506.3 1515.5,505.1 1524.5,510 1520.3,519.1ZM1119,682.4 1132.9,681.4 1133.7,679.5 1132.5,674.7 1119,665.3 1117.4,665.9 1114.6,673.6ZM1899.3,439.9 1891.3,446.9 1891.3,447.1 1895.6,453.6 1904.6,453.3 1904.9,452.7 1902.3,441.2ZM1687.8,616.2 1677.3,615.8 1673,605.5 1684.1,600 1687.8,600 1692.3,607.7 1690.8,613.1ZM1715.1,711.6 1718,713.8 1725.8,709.1 1725.8,702.7 1719.4,699.6 1715.2,702.5ZM1338.8,748.1 1341.1,753.2 1335.6,761.7 1326.6,762.6 1327.1,749.2 1333.5,746.2ZM774.5,500 777.6,514.8 789.8,518.6 790.1,518.5 794.4,512.6 785.8,497.2 781.4,495.7ZM1435.5,683.7 1428.1,689.9 1430.3,695.1 1438.4,698.2 1440.8,696.9 1440.1,685.6ZM1774.6,649.8 1768.7,653 1760.6,648.1 1762.6,639.7 1769.4,638.4ZM1413.4,706.8 1421.6,712.3 1416.4,722.2 1416.2,722.3 1407,714.9 1408.1,708.8ZM1620.2,444.1 1612.5,434 1612.9,431.2 1615.8,428.8 1627,432.7 1627.8,434.9 1624.1,442.7ZM1032.8,812.1 1027,822.6 1024.4,823.2 1015.7,817.2 1018.5,808 1030.8,806.5ZM1280.6,804.6 1281.1,804.6 1291.1,810.8 1288.7,820.2 1284.5,822 1279.7,817.9 1280,805.6ZM1297.1,692.5 1293.2,687.5 1294.6,679.2 1296.6,677.6 1307.2,678.6 1310.9,684.4 1310.5,688.7ZM1012.2,567 1024.5,559.3 1012.4,549.6 1003.1,552.4 1003.6,564.3ZM1536.8,365.4 1528.6,356.4 1526.3,356.3 1523.6,364 1532.1,371ZM1407.2,681.9 1401,681.5 1396.7,669.3 1398.6,667.6 1413,670 1413.9,671.2ZM1397.1,728.2 1394.3,732.2 1387.8,735.3 1378.6,730.7 1378.6,724.3 1384.1,719 1396.5,725.3ZM1628.8,682.4 1626.4,692.1 1622.1,693.7 1622,693.7 1616.1,683.9 1623.5,677.1ZM1390.1,393.6 1396.3,389.1 1396.1,380.6 1390.8,375.4 1383.7,380 1385.3,392.2ZM753.1,398.9 741.8,395.5 740.5,382 746.4,378.4 755.6,388.2ZM1408.1,708.8 1401.4,703.3 1399.3,703.9 1395,710.9 1398.7,719.3 1407,714.9ZM1713.6,740.3 1704.3,742.1 1702.1,738.6 1708.2,727.4 1708.3,727.5 1716.7,735.4ZM1750.7,673 1749.1,674 1736.5,668.9 1736.5,668.5 1744.1,660.6 1751.9,664.8Z"/>
<path fill="#e8dcd0" d="M1315.4,503.8 1318.8,492.3 1316.3,488.3 1309.4,487.1 1302.9,494.1 1304.5,498.3ZM839.9,274.2 840,274 839.8,274ZM721.8,410.2 724,392.7 722.5,389.8 715.6,389.2 704.6,396.4 704.7,402 718.5,410.4ZM1132.1,443.3 1133.1,442.6 1137.5,430.2 1128.3,423.2 1126.7,423.6 1121,434.7 1125.7,441.7ZM839.3,426.7 835,430.4 824.7,420.8 827.6,408.8 841.8,408.9 841.9,408.9ZM1603.4,524.5 1607.2,535.3 1607.1,535.5 1603.6,537.2 1595.7,533.2 1595.6,527.9ZM1657.8,791.1 1648.8,792.4 1645.2,799.8 1648.9,804.4 1650.5,804.6 1657.7,799ZM1667.1,734.9 1659.5,731.7 1664.9,718 1668.8,719.4 1671.5,728.7ZM1335.7,651.5 1334,657.1 1325.4,659.8 1319.4,653.9 1321.4,648.1 1334.7,649.7ZM1361.2,296.4 1371.7,300.8 1371.7,300.7 1368,297 1361.2,293.6ZM909.8,781.3 907.9,777.5 915.3,763.4 923.2,762.9 928,774.2 921.7,782.2 915.1,783.6ZM1396.3,875.8 1390,883.5 1378.3,872.3 1381.1,867.9 1387.3,866.1 1395.9,870.5ZM1055.3,655.6 1069.9,653.4 1075.5,662.4 1064.8,669.9ZM1413.5,809.5 1402.9,801.3 1405.7,794.8 1419.1,795.1 1422.8,798.9 1417.2,808.7ZM1771.3,502.1 1770,513.1 1779.4,515.1 1783.1,507.6 1777.5,501.7ZM1752.6,520.2 1747.2,524.1 1739.7,516.7 1744.5,510.3 1749.2,510.5 1753.2,516ZM1663.9,571.4 1670.4,568.7 1669.3,561.1 1659.3,557.7 1658.1,559 1663,570.9ZM1556.1,364.5 1559.9,374.5 1562.2,375 1565.4,373.7 1565.5,373.6 1560,370 1556.8,363.7ZM1528.6,527.5 1521,535.3 1529.6,543.6 1536.1,538.1 1536,536.6ZM933.3,707.6 922.6,703.5 922.2,696.9 928.4,689.6 942.1,695.2 936.3,706.5ZM1020.2,474.2 1024.1,471.9 1033.8,475.9 1030.4,487.3 1017.7,487.1ZM1376,856.7 1381.1,867.9 1378.3,872.3 1378.2,872.3 1364.1,865.7 1363.4,862.9Z"/>
<path fill="#e6d6c9" d="M755.8,529.1 753.7,521.1 759.6,512.6 771.3,519.3 770.1,525.1 757.3,530.1ZM1558,700.1 1557.8,699 1557.7,698.9 1543.5,698.4 1540.6,702.4 1543,709.2 1555.2,705.8ZM1421.4,615.4 1416.5,610.5 1419,598.8 1420.5,598.7 1432.2,607.5 1429.7,612.4ZM1473.2,831.9 1490.6,830.2 1490.8,824.4 1490.6,824 1478.3,819.6 1476.3,820.5ZM1088.1,513.2 1084.5,523.3 1073.5,526.3 1070.4,513.7 1074.6,509.4ZM704.9,574.4 690.9,573.5 690,574.6 695.8,593.1 706.5,587.1ZM931,406.8 942.1,421.6 950.8,414.8 949.4,403.9 933.6,403.1 931.1,405.6ZM1514,558.4 1526,558.6 1528.3,563.1 1526,571.7 1514.6,566.9 1513.1,559.2ZM1017.2,666 1025.9,662.3 1026,662.3 1030,668.3 1021.9,682.4 1011.7,676.4ZM1748.7,684.6 1745.1,693.6 1747.2,697.2 1756.9,697.6 1758.6,693.1 1755.8,685.9ZM1135.7,473 1122.5,480.9 1123.6,486.9 1136.5,490.5 1144.3,475.8 1143.8,474.8ZM1881.4,550.7 1872.3,551 1871.1,555.6 1876,554 1882,558 1883.1,559.1 1883.2,559ZM1334.3,871.6 1329.7,864.2 1324.1,864.2 1318,872.4 1323.5,880.4 1329,880ZM1550.7,378.5 1552.4,387.9 1555.6,390.1 1564.1,387.7 1563.5,383.5 1562,382 1563,380.1 1562.2,375 1559.9,374.5ZM1611.9,608.4 1612,608.3 1620.9,605 1624.3,611.7 1618.3,618.5 1615.2,617.3ZM1594.2,850 1597.8,854.9 1596,862.3 1589,866.6 1583.6,862.6 1585.5,854.9ZM1529.5,549.2 1526,558.6 1528.3,563.1 1537.5,561.3 1538.5,553.5ZM1645.6,553.2 1645.8,549 1636.7,544.8 1634.8,546.3 1633.9,559.2 1634.7,559.7ZM739.7,462.8 729.8,478.1 730.6,479.8 748.5,478.7 751.2,475.9 751.4,473.4 742.3,462.9ZM1584.8,658.4 1584.8,658.3 1580.5,652.5 1575.3,651.5 1570.3,658.1 1574.9,665.7Z"/>
</g></g>
<path d="M475.4,78.1 l7.6,0 l0.3,4.6 l-7.6,-0.6ZM482.4,82.8 l6.9,-0.8 l-1.6,2.9 l-6.9,0.6ZM503.8,42.8 l7.9,0.6 l0.5,6.8 l-7.9,-0.7ZM429,52.9 l3.8,-0.1 l-0.2,2.6 l-3.8,0.7ZM483.3,83.5 l5.2,-0.2 l-0.9,5.5 l-5.2,1ZM505.5,61.4 l3.8,-1.7 l1.1,3.8 l-3.8,-0.2ZM521.9,66.3 l7.8,-2 l-1.2,6.3 l-7.8,0.8ZM477.5,106.7 l4.7,0.5 l1.1,2.8 l-4.7,-0.5ZM435.9,56.8 l3.1,1.2 l-1.3,2.8 l-3.1,0.1ZM474.8,53 l6.5,0.6 l-1.5,3.1 l-6.5,-0.2ZM447.1,58.3 l7.8,-0.8 l1.5,6.1 l-7.8,-0.6ZM468.5,98.1 l6,2 l-1.1,3 l-6,-0.5ZM513.2,62.4 l4.1,-1.6 l0.3,2.8 l-4.1,-0.5ZM493,65.3 l5,-0.1 l0.3,6.8 l-5,0.7ZM443.6,50.5 l7.5,-1 l-1.2,6.2 l-7.5,0.5ZM533,53.4 l7.7,0.4 l-0.3,6.5 l-7.7,-0.8ZM450.1,87.9 l3.9,0.4 l-0.8,6.2 l-3.9,-0.6ZM507,44.7 l3.8,1.4 l0.5,5 l-3.8,-0.4ZM530.2,53.9 l2.6,-0.2 l-1.8,3.7 l-2.6,-0.6ZM465.5,78.9 l3.2,1.6 l1.9,4.1 l-3.2,0.3ZM503.6,79.7 l3.3,-1.9 l1.6,2.7 l-3.3,0.4ZM535.6,41.4 l6,0.9 l-0.7,4.7 l-6,1ZM509,101.2 l6.6,1.2 l1.7,5.7 l-6.6,-0.3ZM502.8,101.3 l7.3,1.2 l1.5,4.4 l-7.3,0.1ZM495.7,66 l5.7,-1.7 l0.6,5.2 l-5.7,1ZM467.8,90 l5.7,1.4 l-1.7,4.5 l-5.7,0.5ZM478.8,55.7 l6.3,0.5 l1.7,4.7 l-6.3,-0.5ZM502,53.8 l3.4,0.6 l-0.2,6.6 l-3.4,0.8ZM460.6,85.3 l3.6,1.2 l1.7,4.4 l-3.6,0.8ZM467.4,79.7 l4.2,-0 l1.3,3.1 l-4.2,0.7ZM505.9,104.6 l4,-0.2 l-0.9,3.3 l-4,-0.6ZM470.9,82.5 l5.2,1.4 l1.9,3.9 l-5.2,-0.1ZM525,42.8 l6.4,-0.8 l1.2,5.1 l-6.4,-1ZM450,49.6 l2.8,-0.2 l0.5,5.3 l-2.8,0.3ZM517.3,105.2 l6.3,-0.1 l-1.3,3.4 l-6.3,-1ZM477.7,88.6 l3.5,-0.6 l0.8,3.7 l-3.5,0ZM494.5,91.4 l4.7,1.6 l-1.7,6.1 l-4.7,0.9ZM507.2,48.8 l5,1.6 l-0.5,5.3 l-5,0.1ZM498.9,53.9 l6.5,0.6 l0.9,6.2 l-6.5,-0.6ZM515.3,61.8 l7.5,-0.6 l-1.7,6.4 l-7.5,-0.1ZM486.9,92.2 l5.2,1.2 l-1.7,2.6 l-5.2,0.6ZM515,49.6 l3.3,0.9 l1.4,4.8 l-3.3,0.4ZM534,45.8 l3.7,-0.8 l0.9,4.9 l-3.7,0.3ZM483.7,97.4 l5.6,-0.5 l1.4,3.9 l-5.6,0.8ZM446.6,97.9 l7.8,0.3 l-1.2,4.9 l-7.8,0.1ZM481.4,81.2 l2.7,0.1 l-0.4,6.9 l-2.7,0.6ZM488.4,73.4 l6.3,0.2 l-0.3,2.8 l-6.3,0.9ZM531,58.3 l5.1,-0.3 l1.3,3.1 l-5.1,0.8ZM478.2,61.6 l3.6,1.7 l-1.5,5.3 l-3.6,0.6ZM448.8,86.7 l4.3,0.5 l-1.6,4.1 l-4.3,0.5ZM451.6,53.4 l5.4,-0.5 l-0.3,4.5 l-5.4,0.1ZM440.8,53.9 l6,0.1 l1.4,5.4 l-6,0.2ZM523.1,55.8 l6.6,1.6 l-0.7,6.1 l-6.6,-0.4ZM530.9,54.8 l8,-1.5 l-1,6.5 l-8,0.5ZM452.6,46.6 l7.1,1.2 l-1.5,4.4 l-7.1,-0.2ZM502.9,41.2 l3.6,1.6 l1.9,5.6 l-3.6,-0.8ZM481.7,91.6 l5.3,-1.2 l-1.7,5.6 l-5.3,-0.8ZM482.7,78.7 l3.3,-1.2 l1.4,3.3 l-3.3,1ZM531.4,46.5 l2.8,-0.2 l1.1,6.8 l-2.8,-0.3ZM477.1,75 l4.9,-1.9 l0.8,5.2 l-4.9,0.7ZM509.2,67.6 l3.6,0.1 l-1.9,3.2 l-3.6,0.8ZM516.6,87.9 l7.2,-0.4 l0.4,5.3 l-7.2,0ZM452.5,102 l6.6,1.3 l-0.4,6 l-6.6,0.8ZM512.5,92 l4.7,-1.7 l-0.6,5.8 l-4.7,-0.1ZM497.4,82.4 l3.8,0.7 l-0.6,6.8 l-3.8,0.3ZM489.2,76.2 l4.6,0.6 l0.8,7 l-4.6,0.5ZM537.7,41.6 l5.9,-1 l-0.4,5.8 l-5.9,-0.9ZM445.1,65.5 l3,1.6 l0.2,3.6 l-3,0ZM517.5,45.2 l5.8,-1.8 l1.7,5.9 l-5.8,-0.7ZM477.7,51.5 l5.2,-1.8 l1.8,5.3 l-5.2,-0.2ZM484.2,80.7 l4.5,0.6 l0.2,3.8 l-4.5,-0.4ZM506.6,60.1 l2.6,-1.8 l-1.4,3.6 l-2.6,0.5ZM468,101 l6.6,2 l1.8,2.7 l-6.6,-0.9ZM478.4,106.2 l3.8,1.7 l0.9,4.9 l-3.8,-0.1ZM493.2,47.8 l5.9,-1.2 l-1.8,4.6 l-5.9,0.1ZM500.8,71 l3.9,-0.3 l1.1,5.1 l-3.9,0.1ZM508.6,56.2 l3.1,1.1 l0.5,6.5 l-3.1,-0.3ZM454,86.6 l5.6,0.5 l1,5.2 l-5.6,-0.6ZM451.4,106.6 l7.5,-1.8 l-1.8,6.5 l-7.5,-0.5ZM472.2,82.4 l3.1,-1.7 l-1.7,4.9 l-3.1,0.4ZM487,82.9 l4.6,-1.2 l-0.6,4.7 l-4.6,0.5ZM520.9,45.1 l3.2,0.5 l1.1,6.1 l-3.2,-0.6ZM472.1,57.5 l7,0.6 l2,4.2 l-7,-0.3ZM486.7,90.7 l7.6,-0.5 l-1.6,4.4 l-7.6,0.8ZM488.6,73 l6.3,1.1 l-1.7,3.8 l-6.3,-0.6ZM500.1,45.6 l4.2,0.8 l-0.9,5.8 l-4.2,-0.7ZM464.2,89.4 l4.5,0.8 l0.3,3 l-4.5,0.8ZM473.7,94.6 l4.2,-0.4 l1.7,3.9 l-4.2,0.8ZM451.3,64.6 l4.5,-0.4 l-0.4,4.1 l-4.5,-0.6ZM488.5,94.2 l5.5,0.3 l-1.3,6.3 l-5.5,0.5ZM525.9,59.1 l2.6,0.2 l0.3,4.8 l-2.6,0.9ZM498.8,94.7 l2.9,1.2 l-1.7,5 l-2.9,-0.8ZM509,101.1 l3,-1.4 l1,5.4 l-3,0.3ZM451,55 l6.7,1.1 l-0.4,4.8 l-6.7,-0.3ZM480.3,76.5 l6.5,1.7 l-0.4,5.7 l-6.5,0.7ZM500.7,98 l6.9,1.6 l1.8,6.3 l-6.9,0.3ZM483.8,88.3 l6.9,-0.3 l-1.4,4.4 l-6.9,0.5ZM441.8,53.9 l4.8,1.9 l-1.8,3.8 l-4.8,-0.4ZM513.6,52.2 l2.8,0.3 l1.6,4.6 l-2.8,-0.9ZM434.8,52.5 l3.7,0.9 l0.4,3.6 l-3.7,-0.6ZM443.8,59.1 l3.4,-0.8 l0.2,5.9 l-3.4,0.6ZM478.6,57.7 l7.4,-0.6 l0.2,6.6 l-7.4,0.9ZM478.9,55 l2.8,1.2 l-0.5,6.8 l-2.8,0.1ZM482.9,58.7 l7.9,-1 l-2,5.5 l-7.9,-0.1ZM465.8,94.2 l6.4,-1.4 l-1.4,5.2 l-6.4,-0.4ZM452.6,99.1 l5.3,2 l-0.9,5.4 l-5.3,0.1ZM521.8,95.9 l3,0.9 l-1.6,3.7 l-3,-0ZM477.3,105 l5.7,-0.8 l1.2,6.4 l-5.7,-0.2ZM530.2,46.2 l7,0.2 l0.1,3.4 l-7,-0.7ZM520.2,61.2 l4.2,-0.8 l-0.1,2.8 l-4.2,0.4ZM464.4,86.7 l3.1,-0.2 l1.9,4.3 l-3.1,0.7ZM499.2,40.8 l4.6,-1.1 l0.3,5.7 l-4.6,-0.1ZM516.3,54.1 l5.9,-0.5 l0.2,3.8 l-5.9,-0.4ZM461.8,66.7 l6.2,-1.2 l0.9,3.7 l-6.2,-0.3ZM507.4,62.6 l7,-1.4 l-1.6,2.9 l-7,0.4ZM505.6,52.2 l4.7,0.4 l-1.6,6.3 l-4.7,-0.5ZM440.5,48.4 l4.7,1.7 l-0.3,2.8 l-4.7,0ZM498.4,92.1 l7,-0.7 l-0.4,4.2 l-7,-1ZM469.3,87.6 l7.9,0.6 l0.4,6.1 l-7.9,-1ZM461.1,63.3 l6.1,-0.5 l0,3 l-6.1,0.6ZM519.4,81.6 l3.4,1.6 l0.2,5.9 l-3.4,-0.3ZM481,49.6 l6.4,0.1 l0.9,6.9 l-6.4,0.7ZM445.3,104.3 l5.9,-1.7 l-1,3.4 l-5.9,0.2ZM504.3,62.4 l7.6,-0.1 l-1.5,4.1 l-7.6,0.9ZM486.1,78.1 l5.6,1.6 l2,3.7 l-5.6,0.6ZM493,48.3 l7,1.6 l-1,3.8 l-7,0.1ZM520,52.6 l5.5,-1.9 l-1.3,2.8 l-5.5,1ZM458.3,85.6 l6.6,0.4 l1.2,4.2 l-6.6,-1ZM445.5,71.8 l3.3,0.3 l-1.3,4.2 l-3.3,0ZM453.1,78.6 l4.3,-1.8 l0.7,5.4 l-4.3,-0.7ZM477.4,68 l5.9,1 l1,5.6 l-5.9,-0ZM522.9,67.8 l4.9,1.6 l0.1,5 l-4.9,0.1ZM473,101.5 l4.3,0.9 l1.6,2.7 l-4.3,0.5ZM492.5,91.1 l4.2,-1.7 l-1.5,5.2 l-4.2,-0.1ZM481.3,67 l2.8,0.1 l-1,5.6 l-2.8,-0.4ZM468.7,56 l2.9,1.9 l0.7,6.6 l-2.9,0.7ZM471.7,94.8 l3.7,0.3 l1.6,5.9 l-3.7,-0.8ZM515.5,48.4 l5.5,-2 l-1,6.8 l-5.5,-0.4ZM460.3,44.3 l7.4,-0.4 l-0.6,6.2 l-7.4,0.2ZM480.8,103.5 l7.9,-1.2 l-0.8,4.6 l-7.9,0.8ZM527.8,53.3 l7.1,-0.1 l-1.3,4.1 l-7.1,0.8ZM539.5,53.7 l6,1.5 l-1.8,3.4 l-6,-0.8ZM507.6,61.3 l7.5,0.9 l-1.5,6.4 l-7.5,0.4ZM431.3,55.2 l4.2,-1.2 l-1.3,5.7 l-4.2,-0.5ZM500.4,93.8 l4.5,1.5 l0.4,5.5 l-4.5,-0.5ZM457.5,103 l6.2,0.6 l-1.6,3.7 l-6.2,1ZM474,75.9 l5.4,0.4 l-0.9,2.7 l-5.4,-0.5ZM516.8,45.9 l4.1,-1 l-0.9,5.9 l-4.1,0.1ZM538.6,42.3 l5,-0.5 l1.7,5.9 l-5,-0ZM498.1,64.5 l6.1,0.1 l0,6 l-6.1,0.7ZM502.7,75.4 l7.7,1.1 l-1.3,3.3 l-7.7,0.2ZM449.8,69.9 l6.8,1.2 l-1.1,6 l-6.8,-0ZM448.1,79.4 l5.2,0.4 l0.9,2.7 l-5.2,0.1ZM525,52.2 l3.3,-0 l-0.3,2.6 l-3.3,-0.1ZM453,94.3 l2.9,0.3 l0.2,6.6 l-2.9,0.6ZM450.1,49.9 l4.2,-0.7 l0.5,2.7 l-4.2,0.1ZM453.2,80 l3,-1.3 l-1,6.2 l-3,-0.7ZM503.5,96.5 l6.8,-0.4 l-0.5,2.8 l-6.8,-0.6ZM536.5,42.9 l5.2,1.9 l-1.4,5.9 l-5.2,-0.1ZM509.9,42.7 l3.8,-1.4 l-0.4,6.5 l-3.8,-0.4ZM472.1,45.2 l2.7,1.1 l0.9,7 l-2.7,-0.5ZM451.9,77.5 l3.8,1.7 l-0.5,4.6 l-3.8,-0.3ZM498.7,44 l4.4,1.5 l0.4,5.6 l-4.4,0.8ZM476.6,66.7 l7.1,1.1 l-1.1,4.2 l-7.1,-0.3ZM441.3,53.8 l3.7,-0.8 l-0.2,4.6 l-3.7,1ZM502.1,98.7 l3.6,-1.7 l0.8,4.2 l-3.6,-0.3ZM454.4,41.3 l3.5,-0.4 l1.7,3.7 l-3.5,0.4ZM453.7,64.6 l3.3,-0.6 l1.1,6.7 l-3.3,0.4ZM529,41.4 l4.3,-1.7 l1.5,4.2 l-4.3,-0.3ZM512.9,75.3 l2.8,-1 l-1.8,4.3 l-2.8,-0.7ZM492.3,42.2 l4.2,0.2 l-1.5,4.4 l-4.2,0.4ZM452.7,89.3 l6.2,-1.2 l-0.9,3.2 l-6.2,0.4ZM469.8,66.3 l7.3,-0.8 l-0.6,3.5 l-7.3,-0.6ZM496.4,78.5 l6.9,-0.8 l0.7,6.9 l-6.9,0.8ZM447.5,86.9 l6.2,1.5 l-1.1,6.8 l-6.2,0.3ZM468.3,44.1 l4.6,-0 l-0.9,4 l-4.6,-0.7Z" fill="#cfcdc6" stroke="#555" stroke-width=".4"/>
<path d="M1406.5,395.8 1431.2,387 1452.5,379.9 1470.2,372.8 1487.9,369.3 1495.7,370.3 1487.9,376.4 1480.8,385.2 1484.4,392.3 1495,390.5 1509.2,395.8 1530.4,397.6 1548.1,394.1 1560.5,392.3 1569.4,397.6 1576.5,406.5 1580.2,402.2 1580,402 1582,400 1584,396 1587.1,392.9 1587.9,393.3 1588.9,392.3 1590.4,386.1 1590.3,385.3 1585.1,387.1 1581.6,389.8 1581.1,390 1581.2,390 1580,391 1579,390.8 1576,392 1568,388 1562,382 1563.6,378.8 1558.8,367.5 1551.7,353.3 1548.9,351.7 1542,351 1536,344 1535.9,343.9 1534,342.7 1523.3,325 1521.2,324.2 1520,324 1513.1,322.5 1506,323 1496,320 1487.9,316.8 1484.4,317.9 1470.2,342.7 1456,349.8 1438.3,356.9 1417.1,371 1395.8,388.8 1385.2,402.9Z" fill="#e8dcd0" stroke="#555" stroke-width=".7"/>
<path d="M1585.3,413.5 1594.2,424.2 1598.4,438.3 1594.2,452.5 1588.9,461.4 1595.9,466.7 1604.8,461.4 1610.1,473.8 1614.7,491.5 1615.4,509.2 1611.2,523.3 1604.8,534 1599.5,541 1629.6,523.3 1635.4,511.7 1633.3,512.9 1625.7,514.4 1616.5,515.9 1618.1,512.9 1624.2,508.3 1630.3,502.2 1631.8,494.6 1631,487 1633.3,477.9 1637.9,467.2 1642.4,458.1 1639.4,448.9 1632.5,442.8 1639.4,444.4 1642.4,450.5 1645.5,455.8 1648.5,458.1 1653.1,458.1 1659.2,461.1 1663.8,464.2 1671.4,465.7 1669.8,461.1 1672.9,456.5 1678.2,457.3 1677.5,455 1671.4,447.4 1669.8,439.8 1665.3,436.8 1662.2,429.1 1654.6,420 1654,423 1644,418 1638.4,415.2 1632,414 1623.4,412.4 1620.3,411.8 1623.6,414 1616,412.6 1608.1,410.5 1600,410 1599.4,409.9 1596,410 1590.1,409.5 1584,408 1582,404 1580,402 1582,400 1582.6,398.7 1572.9,401.1Z" fill="#e8dcd0" stroke="#555" stroke-width=".7"/>
<path d="M1599.5,546.7 1614,559.8 1630.3,558.4 1648,551.3 1665.7,542.5 1680.2,535 1694.4,526.2 1700.4,518.4 1696.9,509.2 1675.9,511.4 1685.1,513.7 1692.7,512.9 1695.7,515.2 1689.1,515.6 1683.5,517.5 1678.2,518.9 1671.4,520.5 1664.9,523.1 1659.2,525.1 1653,523.6 1645.5,523.5 1640.9,525.1 1636.2,528 1630.3,531.2 1621.1,537.3 1612.7,543.3 1613.5,540.3 1618.1,535.7 1622.6,531.2 1626.8,526.3 1631.8,522 1637,515.5 1629.6,516.2 1594.2,534Z" fill="#e8dcd0" stroke="#555" stroke-width=".7"/>
<path d="M1689.8,504.9 1700.4,509.2 1714.6,507.4 1735.8,503.9 1750,495 1758.9,484.4 1763.5,473.8 1750,466.7 1749.7,466.8 1752.1,470.3 1747.5,474.8 1739.9,477.9 1733.8,477.1 1726.2,480.9 1717,484 1706.4,487 1695.7,490.8 1686.6,494.6 1680.5,499.2 1676.7,503 1677,504Z" fill="#e8dcd0" stroke="#555" stroke-width=".7"/>
<path d="M1525,425 1510,437.5 1497.5,450 1490,462.5 1502.5,455 1500,472.5 1496,490 1492.5,510 1494,530 1497.5,547.5 1505,554 1517.5,547.5 1525,535 1527.5,517.5 1525,500 1522.5,482.5 1529,462.5 1532.5,452.5 1542.5,450 1545,442.5 1552.5,437.5 1561,427.5 1557.5,420 1540,417.5Z" fill="#e3d4c4" stroke="#555" stroke-width=".7"/>
<path d="M1431.2,328.5 1438.3,310.8 1449,305.5 1457.8,310.8 1466.7,323.2 1459.6,330.3 1456,340.9 1441.9,342.7 1434.8,335.6Z" fill="#dddcc2" stroke="#777" stroke-width=".5"/>
<path d="M1196,618 1212,616 1234,617 1230,622 1214,625 1200,624Z" fill="#8db0b7" stroke="#555" stroke-width=".7"/>
<path d="M1272,654 1290,652 1296,660 1292,668 1276,669 1270,662Z" fill="#a9bcc4" stroke="#555" stroke-width=".7"/>
<path d="M1328,640 1340,642 1346,652 1342,660 1330,660 1332,650Z" fill="#a9bcc4" stroke="#555" stroke-width=".7"/>
<path d="M715,416 718.8,415.3 723.3,414.7 728,413.1 732,413 733.9,417.2 736.9,419.9 740,424 739.8,428.6 738.5,433.3 737,438 732.6,437.4 727.9,438.6 723,438 719,434.4 715,430 715.3,424.6 715.4,420.8Z" fill="#d9c0b9" stroke="#555" stroke-width=".7"/>
<path d="M723,439 727.3,438.8 732.3,438.7 737.5,437.6 742,438 742.7,444 745,449 742.6,452.6 741.8,457 739.5,461 737,465 733.2,460.4 729,457 727.7,453.1 726,448.4 724.8,442.8Z" fill="#e6d0c0" stroke="#555" stroke-width=".7"/>
<path d="M819,318 824.1,317.6 830,317 830,321.8 830.6,325.5 829.8,331.3 830.4,335 831,340 826.3,341.5 820,343 820.4,338.8 819.9,334.1 819.7,331.1 819.4,326.7 819.4,321.5Z" fill="#e8d5c8" stroke="#555" stroke-width=".7"/>
<path d="M853,345 856.3,346.6 860.3,348.2 864.5,348.8 868,351 871.6,350.5 876.3,348.6 881,348 881.5,352.7 881,357.5 880.5,361.7 880,367 876.2,368.6 872,369.4 868,370 864.6,365.6 861.1,362.8 857,359 855.3,353.6 854.9,349.6Z" fill="#e8d3c5" stroke="#555" stroke-width=".7"/>
<path d="M730,685 740,680 752,676 764,676 769,680 764,686 752,688 748,690 758,692 770,690 772,692 764,696 752,698 744,701 738,698 733,691Z" fill="#2f93a7" stroke="#555" stroke-width=".6"/>
<path d="M1367.5,460 1377.5,456 1385,454 1389,449 1391,460 1395,469 1386,469 1382.5,462.5 1370,464Z" fill="#4ea6b8" stroke="#555" stroke-width=".6"/>
<path d="M1410,495 1424,494 1422.5,500 1420,507.5 1417.5,512.5 1407.5,510 1402.5,507.5 1410,502.5Z" fill="#2a8192" stroke="#555" stroke-width=".6"/>
<path d="M652,336 653.6,344.4 656,352 658.5,360.5 660,368 662.9,373.7 664,380 666.3,385.2 667,392 666.7,399.8 668,406 669,410 669,418.3 670,426 669.6,431.2 669.9,437.8 667.9,444.2 668,450 667.2,456.6 665.7,463 666,470 665.5,477 664.3,483 664,490 661.2,497.7 660,504 658.5,510.2 656,518 657.1,523.8 659,530 660,537.2 662,543 663.7,551.3 664,558 663.9,564.4 665,570 662.9,577.5 662.2,584.4 659,588 662,596 670,604 673.2,609.5 675,616 676.4,623.9 677,630 680,638 683.5,643.4 688,648 690.9,653.5 694,660 702,664 706,674 705,682 712,690 718,694 720,702 718,708 724,716 728.5,722.9 732,728 736.7,732.8 740,738 744.3,742.3 746,747 747.6,753.1 748,759 758,764 763.9,766.2 770,767 780,772 787,773.7 794,775 798,782 808,783 816,791 822,799 824,809 827,815 830,819 835.3,822 842,823 853,825 854,814 859.6,816 866,817 866.3,822.7 868,829 874,837 882,836 892,841 900,843 908,847 917,851 918,857.8 919,865 926,867 934,873 936,879 946,881 951.4,881.5 958,884 964,875 969.2,869.5 974,865 980,855 990,855 992.8,862.7 996,869 1002,859 1012,863 1015.6,868.4 1020,873 1026,867 1036,871 1039.4,865.9 1042,859 1047,853 1050,863 1056,873 1058.6,865.5 1062,859 1070,853 1078,855 1086,859 1094,865 1102,873 1104.4,879.2 1108,885 1112,895 1111.4,900.5 1111.9,907.4 1112,913 1126,913 1131,912.2 1135.3,913 1140.1,913 1142.6,912.9 1144.2,913 1150.4,913 1154.9,912.1 1161.4,912.6 1165.7,912.7 1172.3,912.5 1178.4,912.5 1185.2,912.4 1190.3,912.8 1196.3,911.9 1201.9,913 1204.1,913 1208.1,912.2 1213.2,913 1216.8,913 1221.5,911.7 1227.7,912.5 1233.8,911.5 1240.1,912.5 1245.4,913 1252.6,913 1256.5,913 1264.2,911.6 1268.7,911.4 1276.1,911.3 1280.7,911.5 1286.9,912.3 1294.2,912.2 1300.4,912.4 1306.2,912.8 1311.2,912.7 1318,912 1320.9,905.6 1325.5,899.9 1328,893 1334,889 1342.9,889.2 1350,890 1357.9,890.3 1366,889 1373.1,889.8 1382,891 1388.1,890.9 1394,890 1402,887 1410,891 1415.9,891.7 1422,893.4 1429.8,893.6 1438,893 1446,889 1448,881 1456,875 1463,873.4 1470,871 1480,867 1488,865 1493.9,867.7 1500,871 1510,868 1520,871 1526.6,872.2 1532,873 1538.6,873.8 1544,875 1546.7,881.2 1550,887 1556,891 1564,887 1572,881 1580,880 1588,884 1594,893 1597.8,897 1603.8,902.1 1608,907 1612,913 1617.4,912.9 1623.8,912.3 1630.8,912.1 1636.5,912.5 1643,912 1641.6,905.3 1640.2,899.3 1640,893 1636,887 1635.9,879.7 1634,871 1633.7,862.1 1635,855 1636.6,848.3 1640,843 1643,833 1647.1,826 1650,821 1660,815 1665.8,809.9 1672,805 1680,801 1690,795 1696,787 1706,781 1711.5,782.6 1718,784 1719,778 1724,770 1732,762 1740,758 1750,758 1753.1,752.5 1758,748 1766,744 1774,738 1774.8,732.7 1775,726 1773.1,718 1770,712 1768.3,706.6 1765,700 1764.8,694.6 1766,688 1768.1,681.6 1770,674 1773.7,668.4 1778,664 1782,654 1784,653.8 1784,642 1788,632 1794,626 1799,620.6 1804,614 1805.5,607.7 1808,600 1807.7,593.7 1807,588 1816,586 1822.8,584.9 1830,582 1840,578 1846.3,576 1852,574 1856,566 1864,562 1870,556 1876,554 1882,558 1888,564 1896,560 1900,550 1894,546 1886,548 1880,544 1876,536 1882,530 1879,522 1882,512 1888,504 1891.3,497.6 1896,492 1904,485 1910,482 1919.8,478 1921,478 1920,472.5 1921,469 1921,440 1920.5,435.1 1920.6,429.7 1921,426.5 1921,407.5 1920.9,406.9 1921,406 1921,398.3 1920,394.9 1921,390.8 1921,382.7 1920.8,381.8 1920.7,375.8 1921,373.7 1921,366.9 1920.3,363.6 1921,358 1920.4,358 1915,359 1912,369 1910,374 1904,380 1900.6,384.7 1896,390 1891,392 1892,398 1886,404 1876,401 1869,395 1864,399 1866,402 1872,406 1874,414 1866,420 1862,428 1856,434 1846,438 1840,446 1832,444 1828,438 1829.1,430.3 1829,422 1826,418 1824,428 1820,434 1812,438 1804.4,438.1 1798,439 1788,442 1780,450 1774.6,454.7 1768,458 1758,460 1753.6,461.1 1749,465.7 1752.1,470.3 1747.5,474.8 1739.9,477.9 1733.8,477.1 1726.2,480.9 1717,484 1706.4,487 1695.7,490.8 1686.6,494.6 1680.5,499.2 1676.7,503 1677.5,505.3 1683.6,505.4 1689.6,506.8 1688.9,508.3 1680.5,509.8 1672.9,508.3 1675.9,511.4 1685.1,513.7 1692.7,512.9 1695.7,515.2 1689.1,515.6 1683.5,517.5 1678.2,518.9 1671.4,520.5 1664.9,523.1 1659.2,525.1 1653,523.6 1645.5,523.5 1640.9,525.1 1636.2,528 1630.3,531.2 1621.1,537.3 1612.7,543.3 1613.5,540.3 1618.1,535.7 1622.6,531.2 1626.8,526.3 1631.8,522 1637.9,514.4 1638.6,509.8 1633.3,512.9 1625.7,514.4 1616.5,515.9 1618.1,512.9 1624.2,508.3 1630.3,502.2 1631.8,494.6 1631,487 1633.3,477.9 1637.9,467.2 1642.4,458.1 1639.4,448.9 1632.5,442.8 1639.4,444.4 1642.4,450.5 1645.5,455.8 1648.5,458.1 1653.1,458.1 1659.2,461.1 1663.8,464.2 1671.4,465.7 1669.8,461.1 1672.9,456.5 1678.2,457.3 1677.5,455 1671.4,447.4 1669.8,439.8 1665.3,436.8 1662.2,429.1 1654.6,420 1654,423 1644,418 1638.4,415.2 1632,414 1623.4,412.4 1620.3,411.8 1623.6,414 1616,412.6 1608.1,410.5 1600,410 1599.4,409.9 1596,410 1590.1,409.5 1584,408 1582,404 1580,402 1582,400 1584,396 1587.1,392.9 1588,393.4 1591,390 1590.8,389.2 1591,389 1590,384 1589.2,384.8 1589,384 1581.6,389.8 1581.1,390 1581.2,390 1580,391 1579,390.8 1576,392 1568,388 1562,382 1566,374 1560,370 1556,362 1560,354 1552,352 1542,351 1536,344 1530,334 1526,325 1520,324 1513.1,322.5 1506,323 1496,320 1486,316 1480,320 1476,328 1470,336 1466,340 1460,344 1464,336 1467,329 1468,323 1462,320 1460,315 1455,312 1446,306 1437,309 1431,305 1422,309 1414,310 1406,304 1395,301 1387,305 1380,299 1372,301 1368,297 1360,293 1354,287 1344,290 1337.5,289.1 1332,289 1322,291 1323,300 1320,308 1312.9,308.9 1306,309 1298.9,309.5 1290,310 1279,308 1280,300 1282,290 1277,298 1275,305 1267.1,307.2 1259,309 1252.8,308.5 1245.9,307.7 1240.3,306.8 1232.6,307.3 1225.6,306.4 1220,305 1213.6,302.6 1206.1,301.5 1200.2,299.1 1193,297.5 1186.7,297.7 1180,295 1174.1,296.8 1167.1,296.3 1160.2,296.6 1154.1,297.4 1146.3,299.7 1140,300 1133.2,297.6 1125.8,297.3 1120.7,296 1112.9,292.5 1107.3,291.8 1100,290 1094.4,292.4 1088.8,296.1 1082.7,299.9 1076.3,301.3 1070,305 1065.7,302.6 1060.4,299.2 1055.2,295.8 1049.7,291.8 1045,288.1 1040,285 1034.3,287.6 1028.9,290.9 1021.3,293.4 1016.8,296.2 1010,300 1002.6,298.5 995.1,295.9 988,293 978,296 972,306 966.4,307.3 960,307 954.4,308.8 948,309 941.7,308.4 934,308 926,300 924,294 931,287 924,284 916,290 909.6,294.1 904,300 900.5,304.7 896,309 888,306 882,298 882,291.1 881.4,286.5 881,280 879.8,273.7 878,266 871,261 870.8,268.3 870,277 867.2,282.5 863,288 862,294.9 859,302 853,298 846,300 838,292 837,283 840,274 830,275 824,283 820,293 815,299 808,294 807,284 803,273 796,276 790,280 782,277 780,270 778,259 769,265 766,274 760,282 756,285 746,283 740,288 738,293.5 737,300 732,306 724,309 715,311.7 708,313 697,315.6 688.8,314.9 680,316 675.7,322.7 672,329 663,322 656,314 652.5,321.1 650,328Z" fill="none" stroke="#4a4a4a" stroke-width="1"/>
<path d="M697,316 1326,316 1326,303 1331,303 1331,303 1334,308 1336,320 1340,326 1352,328 1356,332 1364,330 1376,329 1384,334 1388,340 1396,338 1404,344 1408,348 1416,346 1423,342 1428,346 1442,347 1446,350 1456,350 1478,339 1560,388 1564,398 1570,401 1578,400 1580,410 1588,414 1592,420 1562,388 1566,400 1578,401 1579,410 1590,416 1613,439 1623,495 1614,520 1600,534 1600,544 1606,550 1616,553 1658,534 1694,516 1689,500 1700,493 1744,493 1756,476 1772,458 1784,449 1864,449 1864,448 1868,440 1880,438 1884,430 1892,420 1894,410 1898,394 1908,378 1916,369 1920.4,370" fill="none" stroke="#262626" stroke-width="2.200" stroke-linejoin="round"/>
<path d="M849.8,315.6 850.4,350.9 858.3,367.9 872.4,384.9 882.3,394.8 889.4,396.2 888,418.8 883.7,431.5 890.8,433 897.9,427.3 903.6,441.4 910.6,455.6 920.5,466.9 924.8,469.2 943.2,464.1 954.5,463.5 957.3,458.4 963,465.5 964.4,543.3" fill="none" stroke="#262626" stroke-width="2.200" stroke-linejoin="round"/>
<path d="M662,543 696,543 702,541 704,536 709,534 711,522 713,506 720,505 724,503 730,513 740,517 743,522 743,530 742,540 740,543 768,543 772,550 774,555 784,555 785,548 789,543 964.4,543.3" fill="none" stroke="#262626" stroke-width="2.200" stroke-linejoin="round"/>
<path d="M896,543 896,714.6 894,718.5 890.7,718.5 888,716 881,716 880,718 881,729 883,737.5 884,751 894,766 886,775 884,787 881,795 882,801 887,804 885,810 881,810" fill="none" stroke="#262626" stroke-width="2.200" stroke-linejoin="round"/>
<path d="M896,690.8 1338.8,690.8" fill="none" stroke="#262626" stroke-width="2.200" stroke-linejoin="round"/>
<path d="M1278.8,316 1290,400 1293.8,415 1287.5,427.5 1296.2,437.5 1296.2,496.2 1291.2,500 1295,507.5 1292.5,520 1297.5,532.5 1303.8,550 1310,572.5 1317.5,590 1325,602.5 1332.5,607.5 1328.8,617.5 1327.9,617.6 1333.9,626.5 1338.8,628.5 1338.8,705.7 1340.8,718.5 1342.2,735" fill="none" stroke="#262626" stroke-width="2.200" stroke-linejoin="round"/>
<path d="M827,815 881,810 879,816 966,848 1028,846 1029,835 1070,835 1074,843 1084,851 1098,863 1106,875 1110,887 1118,895 1135,905 1152,889 1162,885 1182,887 1190,895 1200,905 1215,913" fill="none" stroke="#262626" stroke-width="2.200" stroke-linejoin="round"/>
<path d="M1342,735 1342,786 1351,787 1351,829 1356,835 1362,853 1360,863 1356,875 1355,889" fill="none" stroke="#262626" stroke-width="2.200" stroke-linejoin="round"/>
<path d="M1338.8,705.7 1438.8,705.7 1441.7,711.6 1434.8,719.5 1450.6,719.5 1452.6,710.6 1456.6,702.7 1461.5,694.8 1462.5,687.9 1470.4,684.9 1477.3,688.9 1479.3,679 1485.3,677 1486.3,670.1 1492.2,665.1 1498.1,666.1 1506,664.1 1517.9,665.1 1525.8,657.2 1533.8,661.1 1537.7,653.2 1545.6,647.3 1551.6,641.4 1560.5,639.4 1560.5,630.5 1567.4,630.5 1573.3,637.4 1583.2,641.4 1597.1,643.3 1605,641.4 1610.9,649.3 1618.9,649.3 1620.8,639.4 1625.8,633.4 1632.7,625.5 1640.6,621.6 1650.5,615.6 1654.5,603.8 1656.5,589.9 1657.5,580 1659,560 1660,537" fill="none" stroke="#262626" stroke-width="2.200" stroke-linejoin="round"/>
<path d="M1610.9,649.3 1612.9,659.2 1618.9,669.1 1625.8,676 1612.9,686.9 1601,696.8 1587.2,702.7 1700,704.3 1762,703.5" fill="none" stroke="#262626" stroke-width="2.200" stroke-linejoin="round"/>
<path d="M827,815 824,809 822.5,804.1 822,799 818.7,795.2 816,791 812.3,786.1 808,783 802,783.2 798,782 794,775 786.5,773 780,772 776,769.4 770,767 764.7,765.5 758,764 753.3,760.8 748,759 747.3,753.7 746,747 744,741.5 742,735 746,744 740,738 736.3,732.1 732,728 728.5,722.2 724,716 720.6,711.1 718,708 720,702 718,694 712,690 709.2,685.9 705,682 706,674 704.4,669.8 702,664 694,660 691.4,654.8 688,648 683.8,643.6 680,638 677,630 675.9,623.9 675,616 673.3,609.2 670,604 665.3,599.4 662,596 659,588 663.4,583.9 666,580 662,586 663.3,580.3 664,575.1 665,570 664.2,564.2 664,558 663.5,553.8 663,548.9 662,543 661.2,537.5 659,530 657.8,523.3 656,518 658.7,511.9 660,504 662.8,497.1 664,490 664.9,484.4 665.7,480.1 665.1,474.1 666,470 667.2,466 666.2,460.6 667.3,454.3 668,450 668.1,444.5 669.7,437.1 669.7,431.1 670,426 670.1,420.3 670.1,416.3 669,410 668,406 667.5,400 667,392 665.1,385.2 664,380 662.2,373.1 660,368 658.1,362.5 657.6,356.6 656,352 653.8,347.4 653,342.3 652,336 650,328 652.8,323.1 653.9,318.7 656,314 659.8,318.2 663,322 667.6,325.7 672,329 675.5,324.7 677.2,320.8 680,316" fill="none" stroke="#2b2b2b" stroke-width="2.4" stroke-linejoin="round"/>
<path d="M1919.8,478 1914.4,480.1 1910,482 1904,485 1899.7,488.7 1896,492 1892.3,497.1 1888,504 1884,508.7 1882,512 1880,516.5 1879,522 1882,530 1876,536 1880,544 1886,548 1894,546 1900,550 1899,554.9 1896,560 1888,564 1882,558 1876,554 1870,556 1864,562 1856,566 1852,574 1846.7,576 1840,578 1835.3,579.3 1830,582 1823.3,584.7 1816,586 1807,588 1807.5,594.5 1808,600 1806.3,606.1 1804,614 1801.2,618.2 1796.9,621.1 1794,626 1788,632 1786.7,636.9 1784,642 1784.4,648.7 1784,653.8 1782,654 1780.4,659.8 1778,664 1773.8,669.6 1770,674 1767.9,681.9 1766,688 1766.3,693.2 1765,700 1766.8,705.4 1770,712 1773.4,718.9 1775,726 1774.8,731.6 1774,738 1770,740.8 1766,744 1758,748 1753.7,753.2 1750,758 1745.2,758.8 1740,758 1732,762 1728.4,766.9 1724,770 1719,778 1718,784 1712.7,783.5 1706,781 1701.3,783.3 1696,787 1693.7,791.9 1690,795 1685.8,798.1 1680,801 1672,805 1668.4,807.8 1664.7,811.8 1660,815 1654.6,817.1 1650,821 1647.2,828 1643,833 1640.7,838.6 1640,843 1637.3,848.3 1635,855 1634.3,860.9 1635.1,864.8 1634,871 1634.9,875.4 1635.8,881.3 1636,887 1640,893 1641.8,900.3 1642,906.7 1643,912" fill="none" stroke="#2b2b2b" stroke-width="2.4" stroke-linejoin="round"/>
<path d="M1612,913 1608,907 1602.8,902.4 1598.4,897.9 1594,893 1591.3,887.6 1588,884 1580,880 1572,881 1567,884.7 1564,887 1556,891 1550,887 1546.5,880.5 1544,875 1539,873.9 1532,873 1526.7,872 1520,871 1515.3,868.8 1510,868 1505.3,870.2 1500,871 1494,868.5 1488,865 1480,867 1475.3,868.1 1470,871 1463.5,873.2 1456,875 1451.6,877.1 1448,881 1446,889 1438,893 1433.4,893.1 1427.8,894 1422,893.4 1416.4,893 1410,891 1402,887 1394,890 1387.8,891.1 1382,891 1376.6,891.2 1372.1,888.9 1366,889 1359.9,888.8 1356.3,889.5 1350,890 1344.9,889.3 1339.3,889.1 1334,889 1328,893 1325.2,897.9 1323.2,903.3 1320.9,908.1 1318,912" fill="none" stroke="#2b2b2b" stroke-width="2.4" stroke-linejoin="round"/>
<path d="M697,316 698.1,320.1 700,324 699.3,329.2 699,334 704,340 706.2,343.3 708,348 706.2,352.5 706,356 700,354 696,360 693.1,363.6 691,368 691.3,373 690,378 696,380 700.5,378 704,376 705.2,370.4 706,366 703,360" fill="none" stroke="#262626" stroke-width="3.2" stroke-linejoin="round" stroke-linecap="round"/>
<path d="M653,337 656.8,338.3 661.3,339.7 666,340.1 670,342 673.2,343 677.6,342.6 682.8,343.5 686,344 690.9,345.3 694.9,346.1 699,348" fill="none" stroke="#262626" stroke-width="2.2" stroke-linejoin="round" stroke-linecap="round"/>
<path d="M694,660 698.6,661.1 704,662 707.8,661.2 712,660 716.2,659.6 719.2,661 723.6,660.3 728,661" fill="none" stroke="#262626" stroke-width="2.6" stroke-linejoin="round" stroke-linecap="round"/>
<path d="M704,662 704.6,666.1 706,670 708.8,674.2 712,678" fill="none" stroke="#262626" stroke-width="2.4" stroke-linejoin="round" stroke-linecap="round"/>
<path d="M1766,618 1762.9,621.4 1760.5,624.8 1758,628 1756.2,631.3 1753.2,636.5 1752,640 1752.1,643.6 1753.8,648 1754,652 1754,656 1756.2,660.4 1758,666 1759.2,671.6 1760,676 1761,681.4 1762,686 1763.3,689.3 1764,694" fill="none" stroke="#262626" stroke-width="3.4" stroke-linejoin="round" stroke-linecap="round"/>
<path d="M1754,646 1748.6,648.1 1744,650 1740.8,647.2 1738,644 1735.2,646.3 1732,650" fill="none" stroke="#262626" stroke-width="2.6" stroke-linejoin="round" stroke-linecap="round"/>
<path d="M1758,666 1752.6,664.1 1748,662 1742,658" fill="none" stroke="#262626" stroke-width="2.6" stroke-linejoin="round" stroke-linecap="round"/>
<path d="M1761,680 1756.1,679.1 1752,678 1747.8,676.2 1744,674" fill="none" stroke="#262626" stroke-width="2.6" stroke-linejoin="round" stroke-linecap="round"/>
<path d="M1763,690 1758.1,690.1 1754,690 1749.8,688.2 1746,686 1742.2,683.3 1738,682 1732,682" fill="none" stroke="#262626" stroke-width="2.8" stroke-linejoin="round" stroke-linecap="round"/>
<path d="M1764,694 1764.9,689.4 1766.5,684.8 1768,680 1768.6,675.3 1768,672.5 1768.8,667.6 1770.4,664 1770,660 1770.9,656 1771,651.4 1771.4,648.6 1771.6,644.4 1772,640 1773.6,634.6 1775.1,630.8 1776,626" fill="none" stroke="#262626" stroke-width="2.2" stroke-linejoin="round" stroke-linecap="round"/>
<path d="M1784,642 1781.6,638.1 1779.8,634.2 1778,630 1775.7,624.3 1773,620" fill="none" stroke="#262626" stroke-width="3.0" stroke-linejoin="round" stroke-linecap="round"/>
<path d="M1804,586 1807.3,584.4 1811.2,582.7 1815.3,580.2 1818.1,579.7 1822.2,577 1827.1,575.7 1830,574 1834.9,572.3 1838.9,570.1 1843.2,569.6 1847.4,567.7 1851.9,565 1856,564 1860.4,563.1 1864,562" fill="none" stroke="#262626" stroke-width="2.8" stroke-linejoin="round" stroke-linecap="round"/>
<path d="M1808,590 1812,588.5 1816.6,587 1821.4,584.5 1824.8,584.1 1830,582 1834,580 1839.6,578.8 1843.7,577.2 1847.8,575 1852,574" fill="none" stroke="#262626" stroke-width="2.0" stroke-linejoin="round" stroke-linecap="round"/>
<path d="M1742,708 1746.6,711.1 1752,714 1755.8,713.5 1760.2,712 1764,712 1764.2,716.5 1766,720 1760,724 1766,728 1763.6,731.6 1762,736 1757.8,737 1752,738 1748.5,736.6 1744.2,734.8 1740,734 1739.2,738.6 1738,742 1743,744.4 1748,746 1752,750" fill="none" stroke="#262626" stroke-width="2.6" stroke-linejoin="round" stroke-linecap="round"/>
<path d="M1448,881 1451.6,878.1 1456,875 1460.5,874.5 1465.5,873 1470,873 1473.2,873 1477.6,871.6 1482.8,871.5 1486,871" fill="none" stroke="#262626" stroke-width="2.8" stroke-linejoin="round" stroke-linecap="round"/>
<path d="M1450,887 1453.6,885.7 1457.8,884.5 1462,883 1466.2,883.3 1470,885 1466,891 1469.2,890.9 1473.6,889.2 1478,889" fill="none" stroke="#262626" stroke-width="2.6" stroke-linejoin="round" stroke-linecap="round"/>
<path d="M1868,546 1871.6,547.4 1875.8,548.8 1880,550 1884.2,548 1887.2,547.9 1892,546 1895.6,548.6 1900,552 1897.8,556 1894,560 1889.5,562 1884,564 1879.2,561.4 1874,560" fill="none" stroke="#262626" stroke-width="3.0" stroke-linejoin="round" stroke-linecap="round"/>
<path d="M1394,889 1397.6,887.1 1402,885 1408,890" fill="none" stroke="#262626" stroke-width="2.4" stroke-linejoin="round" stroke-linecap="round"/>
</svg>
</div>

<div class="lbl" style="left:883px;top:143px;">Edmonton</div>
<div class="lbl" style="left:875px;top:236px;">Calgary</div>
<div class="lbl" style="left:663px;top:300px;">Vancouver</div>
<div class="lbl" style="left:1258px;top:278px;">Winnipeg</div>
<div class="lbl" style="left:1751px;top:429px;">Ottawa</div>
<div class="lbl" style="left:1792px;top:425px;font-size:12px">Montreal</div>
<div class="lbl" style="left:1852px;top:383px;">Quebec</div>
<div class="lbl" style="left:1662px;top:486px;">Tor</div>
<div class="lbl" style="left:682px;top:668px;">Fran</div>
<div class="lbl" style="left:797px;top:803px;">San</div>
<div class="lbl" style="left:939px;top:900px;">Hermosillo</div>
<div class="lbl" style="left:1881px;top:526px;color:#9a9a98">on</div>
<div class="lbl" style="left:1764px;top:688px;color:#aaa">lk</div>
<div class="lbl" style="left:1641px;top:867px;color:#b5b5b3">ville</div>
<div class="lbl" style="left:1809px;top:599px;color:#aaa">ia</div>
<div class="lbl" style="left:1888px;top:542px;color:#8a8a88">re</div>
<div class="lbl" style="left:1155px;top:79px;font-size:15px;letter-spacing:6.2px;color:#858583;line-height:17px">CANADA</div>
<div class="wlbl" style="left:521px;top:196px;width:56px">Queen<br>Charlotte<br>Sound</div>
<div class="wlbl" style="left:1243px;top:174px;width:46px;letter-spacing:.5px;font-size:10px;line-height:12px">Lake<br>Winnipeg</div>
<div class="wlbl" style="left:1636px;top:145px;width:44px;letter-spacing:1.6px;font-size:11px;line-height:15px">James<br>Bay</div>
<div class="lbl" style="left:1362px;top:455px;color:rgba(255,255,255,.22);font-size:10.500px">Minneapolis</div>
<div class="lbl" style="left:1498px;top:509px;color:rgba(255,255,255,.22);font-size:10.500px">Milwaukee</div>
<div class="lbl" style="left:1494px;top:548px;color:rgba(255,255,255,.22);font-size:10.500px">Chicago</div>
<div class="lbl" style="left:1540px;top:607px;color:rgba(255,255,255,.22);font-size:10.500px">Indianapolis</div>
<div class="lbl" style="left:1442px;top:640px;color:rgba(255,255,255,.22);font-size:10.500px">St. Louis</div>
<div class="lbl" style="left:1338px;top:615px;color:rgba(255,255,255,.22);font-size:10.500px">Kansas City</div>
<div class="lbl" style="left:1240px;top:690px;color:rgba(255,255,255,.22);font-size:10.500px">Oklahoma City</div>
<div class="lbl" style="left:1270px;top:763px;color:rgba(255,255,255,.22);font-size:10.500px">Dallas</div>
<div class="lbl" style="left:1252px;top:846px;color:rgba(255,255,255,.22);font-size:10.500px">Austin</div>
<div class="lbl" style="left:1300px;top:868px;color:rgba(255,255,255,.22);font-size:10.500px">Houston</div>
<div class="lbl" style="left:1426px;top:710px;color:rgba(255,255,255,.22);font-size:10.500px">Memphis</div>
<div class="lbl" style="left:1506px;top:690px;color:rgba(255,255,255,.22);font-size:10.500px">Nashville</div>
<div class="lbl" style="left:1530px;top:752px;color:rgba(255,255,255,.22);font-size:10.500px">Atlanta</div>
<div class="lbl" style="left:1620px;top:722px;color:rgba(255,255,255,.22);font-size:10.500px">Charlotte</div>
<div class="lbl" style="left:1666px;top:706px;color:rgba(255,255,255,.22);font-size:10.500px">Raleigh</div>
<div class="lbl" style="left:1748px;top:599px;color:rgba(255,255,255,.22);font-size:10.500px">Philadelphia</div>
<div class="lbl" style="left:1640px;top:590px;color:rgba(255,255,255,.22);font-size:10.500px">Pittsburgh</div>
<div class="lbl" style="left:1580px;top:565px;color:rgba(255,255,255,.22);font-size:10.500px">Columbus</div>
<div class="lbl" style="left:1580px;top:520px;color:rgba(255,255,255,.22);font-size:10.500px">Detroit</div>
<div class="lbl" style="left:1050px;top:610px;color:rgba(255,255,255,.22);font-size:10.500px">Denver</div>
<div class="lbl" style="left:930px;top:578px;color:rgba(255,255,255,.22);font-size:10.500px">Salt Lake City</div>
<div class="lbl" style="left:862px;top:720px;color:rgba(255,255,255,.22);font-size:10.500px">Las Vegas</div>
<div class="lbl" style="left:770px;top:766px;color:rgba(255,255,255,.22);font-size:10.500px">Los Angeles</div>
<div class="lbl" style="left:940px;top:800px;color:rgba(255,255,255,.22);font-size:10.500px">Phoenix</div>
<div class="lbl" style="left:965px;top:832px;color:rgba(255,255,255,.22);font-size:10.500px">Tucson</div>
<div class="lbl" style="left:1060px;top:842px;color:rgba(255,255,255,.22);font-size:10.500px">El Paso</div>
<div class="lbl" style="left:705px;top:345px;color:rgba(255,255,255,.22);font-size:10.500px">Seattle</div>
<div class="lbl" style="left:700px;top:412px;color:rgba(255,255,255,.22);font-size:10.500px">Portland</div>
<div class="lbl" style="left:720px;top:640px;color:rgba(255,255,255,.22);font-size:10.500px">Sacramento</div>
<div class="lbl" style="left:758px;top:702px;color:rgba(255,255,255,.22);font-size:10.500px">Fresno</div>
<div class="lbl" style="left:1080px;top:760px;color:rgba(255,255,255,.22);font-size:10.500px">Albuquerque</div>
<div class="lbl" style="left:1480px;top:605px;color:rgba(255,255,255,.22);font-size:10.500px">Cincinnati</div>
<div class="lbl" style="left:1796px;top:517px;color:rgba(255,255,255,.22);font-size:10.500px">Albany</div>
<svg class="abs" style="left:689px;top:420px" width="22" height="22" viewBox="-11 -11 22 22"><use href="#fhc"/></svg>
<svg class="abs" style="left:701px;top:581px" width="22" height="22" viewBox="-11 -11 22 22"><use href="#fhc"/></svg>
<svg class="abs" style="left:952.9px;top:416.8px" width="22" height="22" viewBox="-11 -11 22 22"><use href="#fhc"/></svg>
<svg class="abs" style="left:1404.7px;top:474px" width="22" height="22" viewBox="-11 -11 22 22"><use href="#fhc"/></svg>
<svg class="abs" style="left:1715.5px;top:562.5px" width="22" height="22" viewBox="-11 -11 22 22"><use href="#fhc"/></svg>
<svg class="abs" style="left:1106px;top:785.5px" width="22" height="22" viewBox="-11 -11 22 22"><use href="#fhc"/></svg>
<svg class="abs" style="left:1554px;top:794px" width="22" height="22" viewBox="-11 -11 22 22"><use href="#fhc"/></svg>
<svg class="abs" style="left:940px;top:400px" width="50" height="70" viewBox="940 400 50 70"><path d="M961.6,413.3 L964.7,416.4 L967.3,419.0 L971.5,423.2 L972.3,428.9 L970.4,430.5 L969.2,434.3 L965.8,436.6 L963.5,439.6 L963.9,444.9 L968.1,446.5 L968.8,454.1 L964.7,454.8 L963.5,452.6 L960.5,452.6 L956.7,450.6 L952.8,448.7 L955.9,445.7 L954.4,441.1 L953.6,435.0 L955.9,432.0 L954.0,425.1 L953.6,419.0 L957.4,416.8Z" fill="none" stroke="#00ffff" stroke-width="2.300" stroke-linejoin="miter"/></svg>
<svg class="abs" style="left:365px;top:44px" width="1555" height="868" viewBox="365 44 1555 868"><g font-family="Liberation Sans, sans-serif" font-size="17" text-anchor="middle" fill="#151515" stroke="#fff" stroke-width="5" stroke-linejoin="round" paint-order="stroke"><text x="803.3" y="440">1</text><text x="808.7" y="648.4">8</text><text x="1470.4" y="509.5">3</text><text x="1778" y="551">5</text><text x="1130.8" y="790.7">2</text><text x="1537" y="783.4">4</text></g></svg>
<div class="mbtn" style="left:372px;top:49px;width:32px;height:62px"></div>
<svg class="abs" style="left:372px;top:49px" width="32" height="62" viewBox="0 0 32 62"><path d="M9,14.6h14v2h-14Z M15,8.6h2v14h-2Z M10,43.6h12v2h-12Z" fill="#fff"/><path d="M1,31h30" stroke="#5c5c5c" stroke-width="1"/></svg>
<div class="mbtn" style="left:372px;top:119px;width:32px;height:32px"></div>
<svg class="abs" style="left:372px;top:119px" width="32" height="32" viewBox="0 0 32 32"><path d="M16,6.6 L26.6,16.4 L24.6,16.4 L24.6,25.4 L18.4,25.4 L18.4,19 L13.6,19 L13.6,25.4 L7.4,25.4 L7.4,16.4 L5.4,16.4Z M21.4,8 h2.6 v4.4 l-2.6,-2.4Z" fill="#fff"/></svg>
<div class="mbtn" style="left:372px;top:159px;width:32px;height:32px"></div>
<svg class="abs" style="left:372px;top:159px" width="32" height="32" viewBox="0 0 32 32"><circle cx="16" cy="16" r="8.6" fill="none" stroke="#fff" stroke-width="1.6"/><path d="M16,7v4M16,21v4M7,16h4M21,16h4" stroke="#fff" stroke-width="1.4"/></svg>
<div class="abs" style="left:410.500px;top:49.800px;width:273px;height:32.200px;background:#fff;border-radius:3px"></div>
<div class="abs" style="left:650px;top:51px;width:1px;height:30px;background:#57585a"></div>
<div class="abs" style="left:423px;top:57px;font-size:13.9px;line-height:18px;color:#a3a3a3;white-space:nowrap">Find address or place</div>
<svg class="abs" style="left:656px;top:55px" width="22" height="22" viewBox="0 0 22 22"><circle cx="9" cy="9" r="5.2" fill="none" stroke="#333" stroke-width="2"/><path d="M12.8,12.8 L18.6,18.6" stroke="#333" stroke-width="2.6"/></svg>
<div class="mbtn" style="left:410px;top:89px;width:40px;height:40px"></div>
<svg class="abs" style="left:410px;top:89px" width="40" height="40" viewBox="0 0 40 40"><path d="M10.6,11 L29.4,11 Q30,11.6 29.4,12.4 L22.4,20.6 L22,28.4 L18,26.4 L17.8,20.6 L10.6,12.4 Q10,11.6 10.6,11Z" fill="#fff"/></svg>
<div class="mbtn" style="left:460px;top:89px;width:40px;height:40px"></div>
<svg class="abs" style="left:460px;top:89px" width="40" height="40" viewBox="0 0 40 40"><path d="M13.4,9.6h13.2v7.4h-13.2Z M15.4,11.6v5.4h9.2v-5.4Z" fill="#fff" fill-rule="evenodd"/><path d="M12,16.4h16q2.4,0 2.4,2.4v7.2h-20.8v-7.2q0,-2.400 2.400,-2.400Z" fill="#fff"/><circle cx="26.600" cy="19.800" r="1" fill="#555"/><path d="M13.400,22.400h13.200v7.200h-13.200Z" fill="#fff"/><path d="M15.400,24.400h9.200v3.400h-9.200Z" fill="#777"/><path d="M13.400,22.400h13.200v7.200h-13.200Z" fill="none" stroke="#555" stroke-width="0"/></svg>
<div class="mbtn" style="left:510px;top:89px;width:40px;height:40px;background:#333"></div>
<svg class="abs" style="left:510px;top:89px" width="40" height="40" viewBox="0 0 40 40"><path d="M12.500,14 L15.500,14 L15.500,19 L23.500,19 L23.500,14 L27.500,14 L29,28.500 Q24.500,26.800 20,28.300 Q15.500,29.800 11,28.500Z" fill="#fff"/><path d="M18.800,10 h1.600 v4.200 h2.800 v1.600 h-2.800 v3.200 h-1.600 v-3.200 h-2.800 v-1.600 h2.800Z" fill="#fff"/></svg>
<svg class="abs" style="left:372px;top:868px" width="160" height="24" viewBox="0 0 160 24"><path d="M3.800,8.800 L3.800,4.200 L115.900,4.200 L115.900,8.800" fill="none" stroke="#fff" stroke-width="4.700" stroke-linejoin="miter"/><path d="M3.800,8 L3.800,4.200 L115.900,4.200 L115.900,8" fill="none" stroke="#2e2e2e" stroke-width="1.700"/><text x="109.800" y="17.700" font-family="Liberation Sans, sans-serif" font-size="11.500" font-weight="700" fill="#444" stroke="#e4e4e4" stroke-width="2.600" paint-order="stroke" letter-spacing="-.4">300mi</text></svg>
<div class="abs" style="left:375px;top:891px;width:75px;height:17px;background:#0d0f10"></div>
<div class="abs" style="left:391px;top:892px;width:1px;height:15px;background:#666"></div><div class="abs" style="left:449px;top:892px;width:1px;height:15px;background:#666"></div>
<svg class="abs" style="left:377px;top:893px" width="13" height="13" viewBox="0 0 13 13"><path d="M6.500,1v3M6.500,9v3M1,6.500h3M9,6.500h3" stroke="#ddd" stroke-width="1.200"/><rect x="5.600" y="5.600" width="1.800" height="1.800" fill="#fff"/></svg>
<div class="abs" style="left:397px;top:892px;font-size:11.500px;line-height:14px;color:#fff;white-space:nowrap">loading...</div>
<div class="abs" style="left:1112px;top:896px;width:62px;height:20px;background:#2a2c2d;border:2px solid #aeb0b0;border-radius:6px 6px 0 0"></div>
<svg class="abs" style="left:1136px;top:901px" width="12" height="8" viewBox="0 0 12 8"><path d="M6,1 L11,7 L1,7Z" fill="#bbb"/></svg>
<div class="abs" style="left:1150px;top:894px;font-size:13px;line-height:14px;color:#444;opacity:.9;white-space:nowrap">Esri</div>
<div class="abs" style="left:1174px;top:893.100px;width:671px;height:15px;background:rgba(255,255,255,.97)"></div>
<div class="abs" style="left:1178px;top:893.500px;font-size:13.200px;line-height:15px;color:#323232;white-space:nowrap;letter-spacing:-.11px">HERE, Garmin, FAO, NOAA, USGS, EPA | Funding for the Watershed Boundary Dataset (WBD) was provided by…</div>
<div class="abs" style="left:1855.500px;top:874.500px;font-size:6.700px;font-weight:700;color:#fff;letter-spacing:.05px;white-space:nowrap;line-height:8px">POWERED BY</div>
<svg class="abs" style="left:1850px;top:870px" width="70" height="42" viewBox="1850 870 70 42"><g fill="#fff"><text transform="translate(1853.200,904.400) scale(.939,1)" font-family="Liberation Sans, sans-serif" font-weight="700" font-size="35.900" letter-spacing="-.6">esr</text><rect x="1906.100" y="884.700" width="4.800" height="19.700"/><circle cx="1908.200" cy="878" r="3.200"/></g><path d="M1906.700,898.600 L1917.400,899.600 L1914.600,902.400 L1921,908.800 L1917,912.800 L1910.600,906.400 L1907.800,909.200Z" fill="#fff" stroke="#3a3a3a" stroke-width="1"/><path d="M1912.500,904.500 l4,4 M1914.500,902.800 l4,4" stroke="#999" stroke-width=".6"/></svg>
<div id="popup">
<svg class="abs" style="left:-10px;top:166px" width="10" height="22" viewBox="0 0 10 22"><path d="M10,0 L0,11 L10,22Z" fill="#fff"/></svg>
<div id="ptitle"><span class="abs" style="left:6px;top:1px">(1 of 7)</span><svg class="abs" style="left:213px;top:5px" width="10" height="10" viewBox="0 0 10 10"><path d="M1.500,0.500 L9,5 L1.500,9.500Z" fill="#fff"/></svg><svg class="abs" style="left:236px;top:4px" width="12" height="12" viewBox="0 0 12 12"><path d="M1,1h10.500v10h-10.500Z" fill="none" stroke="#fff" stroke-width="1.400"/><path d="M1,1h10.500v2.600h-10.500Z" fill="#fff"/></svg><svg class="abs" style="left:254px;top:4px" width="12" height="12" viewBox="0 0 12 12"><path d="M1.200,1.200 L10.800,10.800 M10.800,1.200 L1.200,10.800" stroke="#fff" stroke-width="2"/></svg></div>
<div class="abs" style="left:10px;top:31px;font-size:12px;font-weight:700;line-height:13.600px;color:#2a2a2a;white-space:nowrap;letter-spacing:-.21px">National Wild Fish Health Survey Summary<br>Data 2021-Present</div>
<div class="abs" style="left:10px;top:64px;width:248px;height:1px;background:#2b2b2b"></div>
<div class="pk" style="top:73px">HUC8</div><div class="pv" style="top:73px">10020008</div>
<div class="pk" style="top:94px">NAME</div><div class="pv" style="top:94px">Gallatin</div>
<div class="pk" style="top:115px">STATES</div><div class="pv" style="top:115px">MT</div>
<div class="pk" style="top:136px">Confirmed<br>Pathogens</div><div class="pv" style="top:136px">Myxobolus cerebralis</div>
<div class="pk" style="top:171px">Summary of<br>Cases</div><div class="pv" style="top:171px">4</div>
<div class="pk" style="top:206px">Total Number of<br>Fish Tested</div><div class="pv" style="top:206px">300</div>
<div class="pk" style="top:241px">TNMID</div><div class="pv" style="top:241px">{37C09AE4-2DEE-49D2-<br>AC46-3D80920F27F1}</div>
<div class="abs" style="left:10px;top:293px;font-size:12px;font-weight:700;line-height:14px;color:#333;white-space:nowrap;letter-spacing:-.1px">Related tables:</div>
<div class="abs" style="left:10px;top:313px;width:248px;height:22.600px;background:#f3f3f3"></div>
<div class="abs" style="left:10px;top:317.500px;font-size:12.300px;line-height:14px;color:#2a2a2a;white-space:nowrap;letter-spacing:-.1px">FWS National Wild Fish Health Survey ...</div>
<svg class="abs" style="left:237px;top:317px" width="16" height="16" viewBox="0 0 16 16"><circle cx="8" cy="8" r="7.900" fill="#808080"/><path d="M6.400,4.400 L10,8 L6.400,11.600" fill="none" stroke="#fff" stroke-width="1.600"/></svg>
<div class="abs" style="left:10px;top:338px;font-size:12px;line-height:14px;color:#2d62ad;text-decoration:underline;white-space:nowrap">Zoom to</div>
<svg class="abs" style="left:234px;top:342px" width="17" height="6" viewBox="0 0 17 6"><circle cx="2.200" cy="3" r="2" fill="#7f7f7f"/><circle cx="8.200" cy="3" r="2" fill="#7f7f7f"/><circle cx="14.200" cy="3" r="2" fill="#7f7f7f"/></svg>
<div class="abs" style="left:264.300px;top:20px;width:5.500px;height:307px;background:#9e9e9e;border-radius:0 0 3px 3px"></div>
<div class="abs" style="left:264px;top:327px;width:5.400px;height:8.500px;background:#eee;border-radius:0 0 3px 3px"></div>
</div>
</body>
</html>
